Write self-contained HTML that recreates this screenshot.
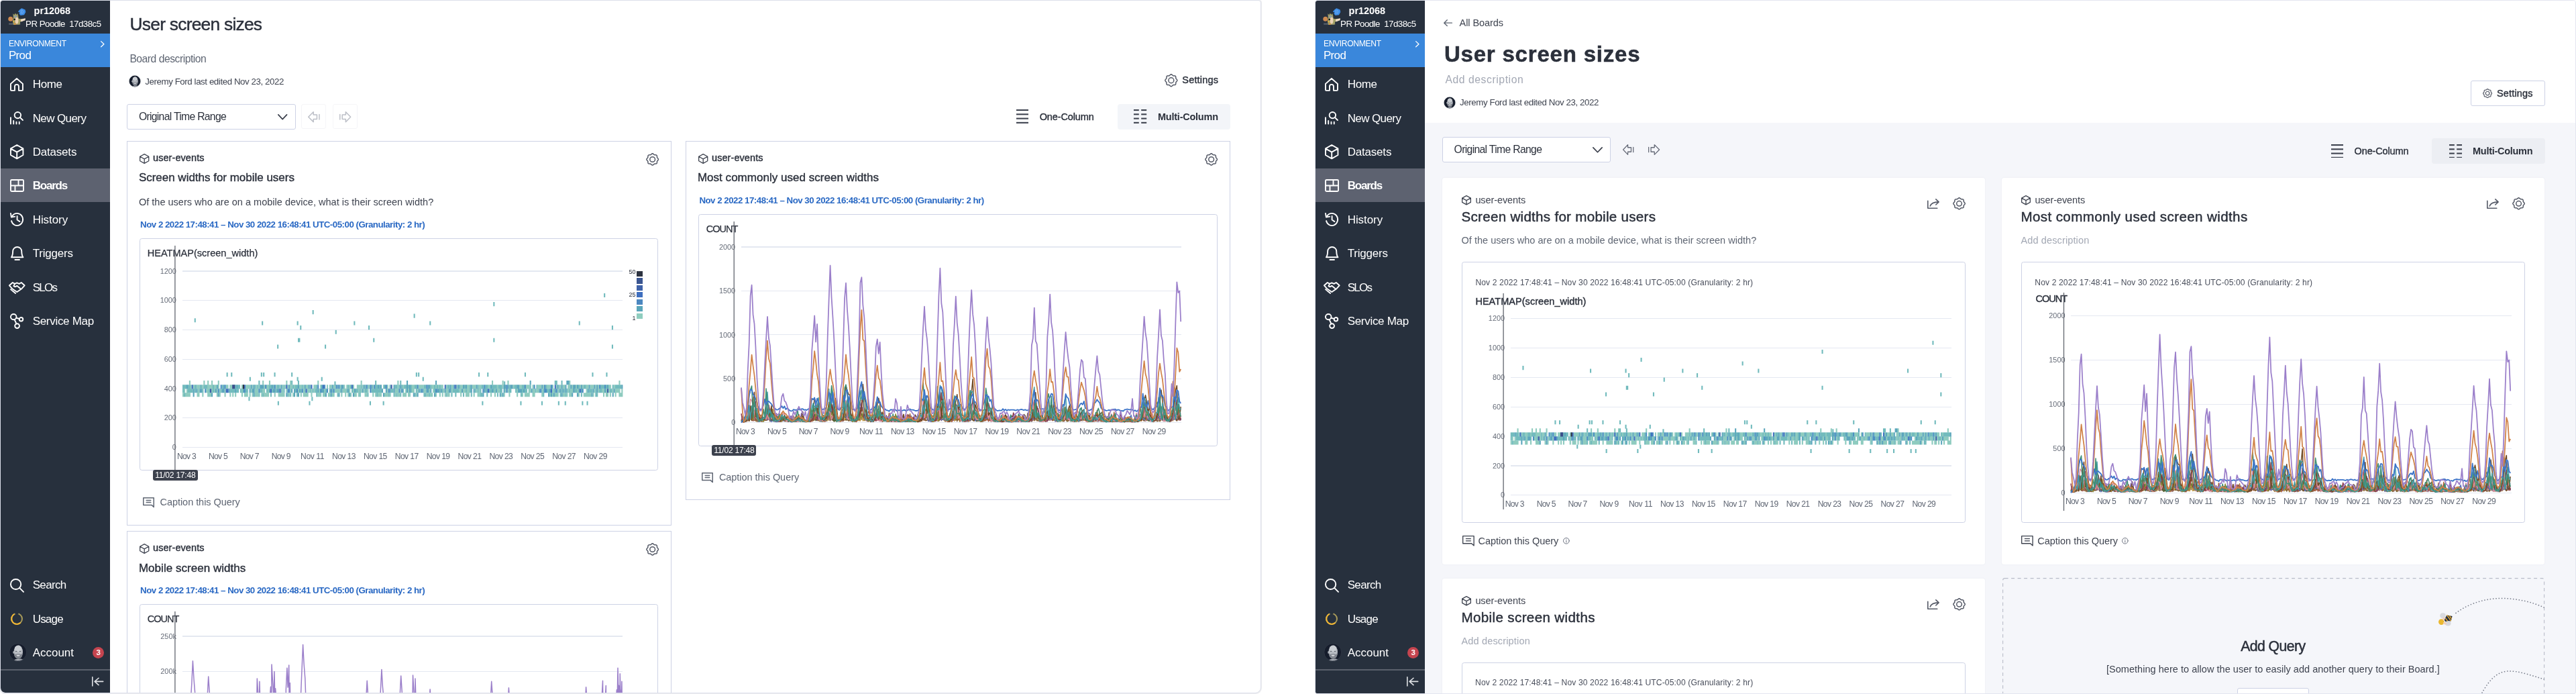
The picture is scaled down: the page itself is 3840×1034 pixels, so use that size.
<!DOCTYPE html><html lang="en"><head><meta charset="utf-8"><title>User screen sizes</title><style>html,body{margin:0;padding:0;background:#fff;}body{width:3840px;height:1034px;position:relative;overflow:hidden;font-family:"Liberation Sans", sans-serif;}.p{position:absolute;top:0;height:1032.6px;overflow:hidden;box-sizing:border-box;will-change:transform;}.b{position:absolute;display:block;}.t{position:absolute;white-space:nowrap;line-height:1;display:block;}</style></head><body><div class="p" style="left:0;width:1880px;background:#fff;border:1px solid #dcdfea;border-radius:4px 4px 9px 7px;box-shadow:0.5px 0.5px 1px rgba(60,60,90,0.10);"><div style="position:absolute;left:-1px;top:-1px;width:1880px;height:1034px"><div class="b" style="left:1.00px;top:1.00px;width:163.00px;height:1031.00px;background:#27303d;border-radius:2px 0 0 7px;"></div><svg class="b" style="left:8.00px;top:6.00px;" width="40.00" height="36.00" viewBox="0 0 40 36" fill="none"><path d="M24.3 6.2 L29.6 8.6 L30.3 12 L28 16.2 L22.6 16.9 L20.4 14.2 L21.3 12.4 L18.8 11.6 L21.2 8.4 Z" fill="#3d8de6"/><path d="M23.6 8.6 V14.6 M25.3 8.8 Q28 11.5 25.3 14.6" stroke="#7fb6f2" stroke-width="0.9" fill="none"/><rect x="5" y="28.6" width="17.5" height="2.2" rx="1" fill="#7d8790" opacity="0.55"/><circle cx="7.8" cy="22.3" r="3.5" fill="#cf8a50"/><path d="M11.4 14.2 L13.3 16.2 L14.8 13.6 L16.4 16 L18 14 L19.2 17.6 L19.6 21.4 L22 22.2 L29.6 21.6 L29.2 24.6 L22.2 26.6 L21.6 30.6 L12 31 L11 26 L11.8 20 Z" fill="#a3a065"/><ellipse cx="17" cy="24.5" rx="2.4" ry="5" fill="#ecd2b5"/><path d="M13 17.5 L17 17 L17.4 20 L13.4 20.6 Z" fill="#8e9aa6"/><circle cx="13.7" cy="23" r="1.25" fill="#0e0e12"/><path d="M23 23 L29.8 21.2 L29.6 24 L23.4 26.6 Z" fill="#f0dccb"/><circle cx="12.2" cy="26.3" r="1" fill="#e8b23a"/><circle cx="14.4" cy="29.8" r="1.2" fill="#e08a3a"/></svg><span id="t0" class="t" style="left:50.60px;top:8.73px;font-size:14.50px;color:#fff;font-weight:700;letter-spacing:-0.071px;">pr12068</span><span id="t1" class="t" style="left:38.10px;top:29.24px;font-size:13.30px;color:#fff;font-weight:400;letter-spacing:-0.528px;">PR Poodle&nbsp; 17d38c5</span><div class="b" style="left:1.00px;top:50.00px;width:163.00px;height:50.30px;background:#3a87db;"></div><span id="t2" class="t" style="left:12.90px;top:59.36px;font-size:12.10px;color:#fff;font-weight:400;letter-spacing:-0.317px;">ENVIRONMENT</span><span id="t3" class="t" style="left:12.90px;top:73.81px;font-size:17.00px;color:#fff;font-weight:400;letter-spacing:-0.641px;">Prod</span><svg class="b" style="left:149.70px;top:60.90px;overflow:visible" width="5.60" height="9.40" fill="none" stroke="#fff" stroke-width="1.3" stroke-linecap="round" stroke-linejoin="round"><g transform="translate(0.650 0.650) scale(0.4778 0.4500) translate(-8.000 -3.000)" style="vector-effect:non-scaling-stroke"><path vector-effect="non-scaling-stroke" d="M8 3 L17 12 L8 21"/></g></svg><div class="b" style="left:1.00px;top:251.00px;width:163.00px;height:50.40px;background:#5d6270;"></div><svg class="b" style="left:15.10px;top:116.00px;overflow:visible" width="19.90" height="19.80" fill="none" stroke="#fff" stroke-width="1.9" stroke-linecap="round" stroke-linejoin="round"><g transform="translate(0.950 0.950) scale(1.0000 0.9944) translate(-3.000 -3.000)" style="vector-effect:non-scaling-stroke"><path vector-effect="non-scaling-stroke" d="M3 11 L12 3 L21 11 V20 a1 1 0 0 1 -1 1 H15 V15 a3 3 0 0 0 -6 0 V21 H4 a1 1 0 0 1 -1 -1 Z"/></g></svg><span id="t4" class="t" style="left:48.70px;top:117.26px;font-size:17.00px;color:#fff;font-weight:400;letter-spacing:-0.320px;">Home</span><svg class="b" style="left:15.10px;top:166.10px;overflow:visible" width="19.90" height="19.50" fill="none" stroke="#fff" stroke-width="1.9" stroke-linecap="round" stroke-linejoin="round"><g transform="translate(0.950 0.950) scale(0.9474 0.9263) translate(-3.000 -3.000)" style="vector-effect:non-scaling-stroke"><circle vector-effect="non-scaling-stroke" cx="14" cy="8" r="5"/><path vector-effect="non-scaling-stroke" d="M17.8 11.8 L22 16 M3 12 V22 M7.5 17 V22 M12 19 V22 M16.5 19 V22"/></g></svg><span id="t5" class="t" style="left:48.70px;top:167.66px;font-size:17.00px;color:#fff;font-weight:400;letter-spacing:-0.604px;">New Query</span><svg class="b" style="left:15.10px;top:215.10px;overflow:visible" width="20.40" height="22.30" fill="none" stroke="#fff" stroke-width="1.9" stroke-linecap="round" stroke-linejoin="round"><g transform="translate(0.950 0.950) scale(1.0278 1.0737) translate(-3.000 -2.500)" style="vector-effect:non-scaling-stroke"><path vector-effect="non-scaling-stroke" d="M12 2.5 L21 7.5 V16.5 L12 21.5 L3 16.5 V7.5 Z M3 7.5 L12 12.5 L21 7.5 M12 12.5 V21.5"/></g></svg><span id="t6" class="t" style="left:48.70px;top:218.06px;font-size:17.00px;color:#fff;font-weight:400;letter-spacing:-0.199px;">Datasets</span><svg class="b" style="left:14.80px;top:267.20px;overflow:visible" width="21.00" height="18.90" fill="none" stroke="#fff" stroke-width="1.9" stroke-linecap="round" stroke-linejoin="round"><g transform="translate(0.950 0.950) scale(1.0053 1.0000) translate(-2.500 -3.500)" style="vector-effect:non-scaling-stroke"><rect vector-effect="non-scaling-stroke" x="2.5" y="3.5" width="19" height="17" rx="1.5"/><path vector-effect="non-scaling-stroke" d="M2.5 12 H21.5 M14 3.5 V12 M9 12 V20.5"/></g></svg><span id="t7" class="t" style="left:48.70px;top:268.46px;font-size:17.00px;color:#fff;font-weight:700;letter-spacing:-1.216px;">Boards</span><svg class="b" style="left:14.80px;top:316.80px;overflow:visible" width="20.20" height="20.10" fill="none" stroke="#fff" stroke-width="1.9" stroke-linecap="round" stroke-linejoin="round"><g transform="translate(0.950 0.950) scale(0.9632 1.0111) translate(-2.500 -3.000)" style="vector-effect:non-scaling-stroke"><path vector-effect="non-scaling-stroke" d="M5.2 6.5 A9 9 0 1 1 3.6 14 M2.5 3 L3.5 8.6 L9 7.6 M12.5 7 V12.5 L16.5 15"/></g></svg><span id="t8" class="t" style="left:48.70px;top:318.86px;font-size:17.00px;color:#fff;font-weight:400;letter-spacing:-0.068px;">History</span><svg class="b" style="left:15.60px;top:366.90px;overflow:visible" width="19.40" height="21.00" fill="none" stroke="#fff" stroke-width="1.9" stroke-linecap="round" stroke-linejoin="round"><g transform="translate(0.950 0.950) scale(1.0938 1.0914) translate(-4.000 -4.500)" style="vector-effect:non-scaling-stroke"><path vector-effect="non-scaling-stroke" d="M4 18.5 H20 C18.5 16.5 18 14.5 18 10.5 a6 6 0 0 0 -12 0 C6 14.5 5.5 16.5 4 18.5 Z M9 22 H15"/></g></svg><span id="t9" class="t" style="left:48.70px;top:369.26px;font-size:17.00px;color:#fff;font-weight:400;letter-spacing:-0.217px;">Triggers</span><svg class="b" style="left:12.80px;top:419.90px;overflow:visible" width="24.60" height="17.90" fill="none" stroke="#fff" stroke-width="1.9" stroke-linecap="round" stroke-linejoin="round"><g transform="translate(0.950 0.950) scale(1.0810 0.9697) translate(-1.500 -4.500)" style="vector-effect:non-scaling-stroke"><path vector-effect="non-scaling-stroke" d="M1.5 9 L6 4.5 L9 6.5 L12 5 L15 6.5 L18 4.5 L22.5 9 L18.5 14 L12 19 L5.5 14 Z M9 6.5 L7.5 10 C9 11.5 10.5 11 12 9.5 L17 14 M6 17.5 L10 21 M3.5 15 L5 16.5"/></g></svg><span id="t10" class="t" style="left:48.70px;top:419.66px;font-size:17.00px;color:#fff;font-weight:400;letter-spacing:-1.710px;">SLOs</span><svg class="b" style="left:15.30px;top:466.90px;overflow:visible" width="20.20" height="22.90" fill="none" stroke="#fff" stroke-width="1.9" stroke-linecap="round" stroke-linejoin="round"><g transform="translate(0.950 0.950) scale(1.0702 1.0396) translate(-4.000 -2.500)" style="vector-effect:non-scaling-stroke"><circle vector-effect="non-scaling-stroke" cx="8" cy="6.5" r="4"/><circle vector-effect="non-scaling-stroke" cx="18.5" cy="10" r="2.6"/><circle vector-effect="non-scaling-stroke" cx="13" cy="19.5" r="3.2"/><path vector-effect="non-scaling-stroke" d="M11.8 8 L16 9.3 M9.3 10.3 L12 16.5"/></g></svg><span id="t11" class="t" style="left:48.70px;top:470.06px;font-size:17.00px;color:#fff;font-weight:400;letter-spacing:-0.308px;">Service Map</span><span id="t12" class="t" style="left:48.70px;top:862.76px;font-size:17.00px;color:#fff;font-weight:400;letter-spacing:-0.655px;">Search</span><span id="t13" class="t" style="left:48.70px;top:913.66px;font-size:17.00px;color:#fff;font-weight:400;letter-spacing:-0.810px;">Usage</span><span id="t14" class="t" style="left:48.70px;top:964.06px;font-size:17.00px;color:#fff;font-weight:400;letter-spacing:-0.023px;">Account</span><svg class="b" style="left:14.80px;top:861.50px;overflow:visible" width="21.00" height="20.80" fill="none" stroke="#fff" stroke-width="1.9" stroke-linecap="round" stroke-linejoin="round"><g transform="translate(0.950 0.950) scale(0.9550 0.9450) translate(-2.500 -2.500)" style="vector-effect:non-scaling-stroke"><circle vector-effect="non-scaling-stroke" cx="10.5" cy="10.5" r="8"/><path vector-effect="non-scaling-stroke" d="M16.5 16.5 L22.5 22.5"/></g></svg><svg class="b" style="left:15.00px;top:912.00px;" width="20.00" height="20.00" viewBox="0 0 20 20" fill="none"><circle cx="10" cy="10" r="8" stroke="#a89b5a" stroke-width="2"/><path d="M15.6 15.8 A8 8 0 1 1 6.5 2.8" stroke="#f2b632" stroke-width="2"/><path d="M7.6 2.4 A8 8 0 0 1 12.4 2.4" stroke="#27303d" stroke-width="3"/></svg><svg class="b" style="left:12.70px;top:958.40px;" width="27.40" height="27.40" viewBox="0 0 27.4 27.4" fill="none"><clipPath id="avc1"><circle r="13.2"/></clipPath><g transform="translate(13.70 13.70) scale(1.0000)"><g clip-path="url(#avc1)"><circle r="13.2" fill="#151c2b"/><path d="M-8 14 Q-4 9 0.6 10.4 Q5.5 9 9.4 11.6 L10 14 Z" fill="#a9adb5"/><ellipse cx="-6.4" cy="0.2" rx="1.1" ry="1.9" fill="#a2a7af"/><ellipse cx="0.6" cy="-0.3" rx="6.7" ry="10.2" fill="#b6bac1"/><ellipse cx="0.3" cy="-5.2" rx="5.2" ry="4.6" fill="#caced3"/><path d="M-5.8 1.2 Q-5.6 9.6 0.6 10 Q6.8 9.6 7 1.2 Q5 4 3.4 3 Q0.6 1.6 -2.4 3 Q-4 4 -5.8 1.2 Z" fill="#80858e"/><ellipse cx="0.4" cy="4.9" rx="2.5" ry="1.2" fill="#d8dade"/><ellipse cx="-2.5" cy="-1.3" rx="1.4" ry="0.7" fill="#5f646e"/><ellipse cx="3.3" cy="-1.3" rx="1.4" ry="0.7" fill="#5f646e"/></g><circle r="12.9" fill="none" stroke="#39404e" stroke-width="0.7"/></g></svg><div class="b" style="left:138.40px;top:964.00px;width:16.80px;height:16.80px;background:#c5444f;border-radius:9px;"></div><span id="t15" class="t" style="left:146.80px;top:966.87px;font-size:11.50px;color:#fff;font-weight:700;letter-spacing:0.000px;transform:translateX(-50%);">3</span><div class="b" style="left:1.00px;top:997.10px;width:163.00px;height:1.90px;background:#5a606c;"></div><svg class="b" style="left:136.50px;top:1008.00px;overflow:visible" width="17.50" height="14.80" fill="none" stroke="#dfe1e5" stroke-width="1.6" stroke-linecap="round" stroke-linejoin="round"><g transform="translate(0.800 0.800) scale(0.8368 0.7333) translate(-3.000 -3.000)" style="vector-effect:non-scaling-stroke"><path vector-effect="non-scaling-stroke" d="M3 3 V21 M22 12 H8 M14 5 L7 12 L14 19"/></g></svg><span id="t16" class="t" style="left:193.60px;top:23.14px;font-size:26.30px;color:#2b303b;font-weight:400;letter-spacing:-0.724px;-webkit-text-stroke:0.45px #2b303b;">User screen sizes</span><span id="t17" class="t" style="left:193.40px;top:80.21px;font-size:15.70px;color:#5f6673;font-weight:400;letter-spacing:-0.481px;">Board description</span><svg class="b" style="left:192.40px;top:112.40px;" width="18.00" height="18.00" viewBox="0 0 18 18" fill="none"><clipPath id="avc2"><circle r="13.2"/></clipPath><g transform="translate(9.00 9.00) scale(0.6439)"><g clip-path="url(#avc2)"><circle r="13.2" fill="#151c2b"/><path d="M-8 14 Q-4 9 0.6 10.4 Q5.5 9 9.4 11.6 L10 14 Z" fill="#a9adb5"/><ellipse cx="-6.4" cy="0.2" rx="1.1" ry="1.9" fill="#a2a7af"/><ellipse cx="0.6" cy="-0.3" rx="6.7" ry="10.2" fill="#b6bac1"/><ellipse cx="0.3" cy="-5.2" rx="5.2" ry="4.6" fill="#caced3"/><path d="M-5.8 1.2 Q-5.6 9.6 0.6 10 Q6.8 9.6 7 1.2 Q5 4 3.4 3 Q0.6 1.6 -2.4 3 Q-4 4 -5.8 1.2 Z" fill="#80858e"/><ellipse cx="0.4" cy="4.9" rx="2.5" ry="1.2" fill="#d8dade"/><ellipse cx="-2.5" cy="-1.3" rx="1.4" ry="0.7" fill="#5f646e"/><ellipse cx="3.3" cy="-1.3" rx="1.4" ry="0.7" fill="#5f646e"/></g><circle r="12.9" fill="none" stroke="#39404e" stroke-width="0.7"/></g></svg><span id="t18" class="t" style="left:216.30px;top:114.94px;font-size:13.30px;color:#3f4450;font-weight:400;letter-spacing:-0.418px;">Jeremy Ford last edited Nov 23, 2022</span><svg class="b" style="left:1736.10px;top:110.40px;overflow:visible" width="19.70" height="19.50" fill="none" stroke="#555a67" stroke-width="1.5" stroke-linecap="round" stroke-linejoin="round"><g transform="translate(0.750 0.750) scale(0.9681 0.9574) translate(-2.600 -2.600)" style="vector-effect:non-scaling-stroke"><path vector-effect="non-scaling-stroke" d="M12.00 2.70 L12.89 2.95 L13.68 3.57 L14.35 4.24 L15.02 4.70 L15.82 4.85 L16.78 4.85 L17.77 4.97 L18.58 5.42 L19.03 6.23 L19.15 7.22 L19.15 8.18 L19.30 8.98 L19.76 9.65 L20.43 10.32 L21.05 11.11 L21.30 12.00 L21.05 12.89 L20.43 13.68 L19.76 14.35 L19.30 15.02 L19.15 15.82 L19.15 16.78 L19.03 17.77 L18.58 18.58 L17.77 19.03 L16.78 19.15 L15.82 19.15 L15.02 19.30 L14.35 19.76 L13.68 20.43 L12.89 21.05 L12.00 21.30 L11.11 21.05 L10.32 20.43 L9.65 19.76 L8.98 19.30 L8.18 19.15 L7.22 19.15 L6.23 19.03 L5.42 18.58 L4.97 17.77 L4.85 16.78 L4.85 15.82 L4.70 15.02 L4.24 14.35 L3.57 13.68 L2.95 12.89 L2.70 12.00 L2.95 11.11 L3.57 10.32 L4.24 9.65 L4.70 8.98 L4.85 8.18 L4.85 7.22 L4.97 6.23 L5.42 5.42 L6.23 4.97 L7.22 4.85 L8.18 4.85 L8.98 4.70 L9.65 4.24 L10.32 3.57 L11.11 2.95 Z"/><circle vector-effect="non-scaling-stroke" cx="12" cy="12" r="4.1"/></g></svg><span id="t19" class="t" style="left:1762.30px;top:112.13px;font-size:14.50px;color:#2b303b;font-weight:400;letter-spacing:0.185px;-webkit-text-stroke:0.40px #2b303b;">Settings</span><div class="b" style="left:189.20px;top:155.20px;width:251.70px;height:37.40px;background:#fff;border:1px solid #cdd2e5;border-radius:3px;box-sizing:border-box;"></div><span id="t20" class="t" style="left:206.90px;top:166.01px;font-size:15.70px;color:#2b303b;font-weight:400;letter-spacing:-0.678px;">Original Time Range</span><svg class="b" style="left:413.50px;top:170.40px;overflow:visible" width="14.40" height="8.40" fill="none" stroke="#3a3f4b" stroke-width="1.7" stroke-linecap="round" stroke-linejoin="round"><g transform="translate(0.850 0.850) scale(0.5773 0.7053) translate(-1.000 -7.500)" style="vector-effect:non-scaling-stroke"><path vector-effect="non-scaling-stroke" d="M1 7.5 L12 17 L23 7.5"/></g></svg><div class="b" style="left:449.40px;top:155.20px;width:36.80px;height:36.70px;background:#fff;border:1px solid #f5f5f8;border-radius:3px;box-sizing:border-box;"></div><div class="b" style="left:495.60px;top:155.20px;width:37.20px;height:36.70px;background:#fff;border:1px solid #f5f5f8;border-radius:3px;box-sizing:border-box;"></div><svg class="b" style="left:458.90px;top:165.60px;overflow:visible" width="17.70" height="16.40" fill="none" stroke="#bcbfc7" stroke-width="1.5" stroke-linecap="round" stroke-linejoin="round"><g transform="translate(0.750 0.750) scale(0.8757 0.8278) translate(-2.000 -3.000)" style="vector-effect:non-scaling-stroke"><path vector-effect="non-scaling-stroke" d="M2 12 L10.5 3 V8 H16.5 V16 H10.5 V21 Z M20.5 7.5 V16.5"/></g></svg><svg class="b" style="left:506.00px;top:165.60px;overflow:visible" width="17.40" height="16.40" fill="none" stroke="#bcbfc7" stroke-width="1.5" stroke-linecap="round" stroke-linejoin="round"><g transform="translate(0.750 0.750) scale(0.8595 0.8278) translate(-3.500 -3.000)" style="vector-effect:non-scaling-stroke"><path vector-effect="non-scaling-stroke" d="M22 12 L13.5 3 V8 H7.5 V16 H13.5 V21 Z M3.5 7.5 V16.5"/></g></svg><div class="b" style="left:1665.50px;top:155.20px;width:168.50px;height:37.70px;background:#f3f5f9;border-radius:4px;"></div><svg class="b" style="left:1515.00px;top:163.40px;" width="18.40" height="20.80" viewBox="0 0 18.4 20.8" fill="none"><rect x="0" y="0.00" width="18.4" height="2.1" fill="#3f4450"/><rect x="0" y="6.27" width="18.4" height="2.1" fill="#3f4450"/><rect x="0" y="12.54" width="18.4" height="2.1" fill="#3f4450"/><rect x="0" y="18.81" width="18.4" height="2.1" fill="#3f4450"/></svg><svg class="b" style="left:1690.30px;top:163.40px;" width="19.40" height="20.80" viewBox="0 0 19.4 20.8" fill="none"><rect x="0" y="0.00" width="7.8" height="2.1" fill="#3f4450"/><rect x="11.2" y="0.00" width="8" height="2.1" fill="#3f4450"/><rect x="0" y="6.27" width="7.8" height="2.1" fill="#3f4450"/><rect x="11.2" y="6.27" width="8" height="2.1" fill="#3f4450"/><rect x="0" y="12.54" width="7.8" height="2.1" fill="#3f4450"/><rect x="11.2" y="12.54" width="8" height="2.1" fill="#3f4450"/><rect x="0" y="18.81" width="7.8" height="2.1" fill="#3f4450"/><rect x="11.2" y="18.81" width="8" height="2.1" fill="#3f4450"/></svg><span id="t21" class="t" style="left:1549.70px;top:166.53px;font-size:14.50px;color:#2b303b;font-weight:400;letter-spacing:-0.123px;-webkit-text-stroke:0.40px #2b303b;">One-Column</span><span id="t22" class="t" style="left:1726.00px;top:166.53px;font-size:14.50px;color:#2b303b;font-weight:700;letter-spacing:-0.239px;">Multi-Column</span><div class="b" style="left:189.20px;top:210.00px;width:811.80px;height:572.50px;background:#fff;border:1px solid #cdd2e5;box-sizing:border-box;"></div><div class="b" style="left:1022.20px;top:210.00px;width:811.90px;height:535.20px;background:#fff;border:1px solid #cdd2e5;box-sizing:border-box;"></div><div class="b" style="left:189.20px;top:791.00px;width:811.80px;height:300.00px;background:#fff;border:1px solid #cdd2e5;box-sizing:border-box;"></div><svg class="b" style="left:207.90px;top:228.50px;overflow:visible" width="14.40" height="15.00" fill="none" stroke="#3f4450" stroke-width="1.3" stroke-linecap="round" stroke-linejoin="round"><g transform="translate(0.650 0.650) scale(0.7278 0.7211) translate(-3.000 -2.500)" style="vector-effect:non-scaling-stroke"><path vector-effect="non-scaling-stroke" d="M12 2.5 L21 7.5 V16.5 L12 21.5 L3 16.5 V7.5 Z M3 7.5 L12 12.5 L21 7.5 M12 12.5 V21.5"/></g></svg><span id="t23" class="t" style="left:228.00px;top:228.33px;font-size:14.50px;color:#2b303b;font-weight:400;letter-spacing:0.073px;-webkit-text-stroke:0.40px #2b303b;">user-events</span><span id="t24" class="t" style="left:206.90px;top:256.41px;font-size:17.00px;color:#2b303b;font-weight:400;letter-spacing:-0.015px;-webkit-text-stroke:0.40px #2b303b;">Screen widths for mobile users</span><svg class="b" style="left:963.00px;top:227.50px;overflow:visible" width="19.30" height="18.90" fill="none" stroke="#555a67" stroke-width="1.5" stroke-linecap="round" stroke-linejoin="round"><g transform="translate(0.750 0.750) scale(0.9468 0.9255) translate(-2.600 -2.600)" style="vector-effect:non-scaling-stroke"><path vector-effect="non-scaling-stroke" d="M12.00 2.70 L12.89 2.95 L13.68 3.57 L14.35 4.24 L15.02 4.70 L15.82 4.85 L16.78 4.85 L17.77 4.97 L18.58 5.42 L19.03 6.23 L19.15 7.22 L19.15 8.18 L19.30 8.98 L19.76 9.65 L20.43 10.32 L21.05 11.11 L21.30 12.00 L21.05 12.89 L20.43 13.68 L19.76 14.35 L19.30 15.02 L19.15 15.82 L19.15 16.78 L19.03 17.77 L18.58 18.58 L17.77 19.03 L16.78 19.15 L15.82 19.15 L15.02 19.30 L14.35 19.76 L13.68 20.43 L12.89 21.05 L12.00 21.30 L11.11 21.05 L10.32 20.43 L9.65 19.76 L8.98 19.30 L8.18 19.15 L7.22 19.15 L6.23 19.03 L5.42 18.58 L4.97 17.77 L4.85 16.78 L4.85 15.82 L4.70 15.02 L4.24 14.35 L3.57 13.68 L2.95 12.89 L2.70 12.00 L2.95 11.11 L3.57 10.32 L4.24 9.65 L4.70 8.98 L4.85 8.18 L4.85 7.22 L4.97 6.23 L5.42 5.42 L6.23 4.97 L7.22 4.85 L8.18 4.85 L8.98 4.70 L9.65 4.24 L10.32 3.57 L11.11 2.95 Z"/><circle vector-effect="non-scaling-stroke" cx="12" cy="12" r="4.1"/></g></svg><svg class="b" style="left:1040.90px;top:228.50px;overflow:visible" width="14.40" height="15.00" fill="none" stroke="#3f4450" stroke-width="1.3" stroke-linecap="round" stroke-linejoin="round"><g transform="translate(0.650 0.650) scale(0.7278 0.7211) translate(-3.000 -2.500)" style="vector-effect:non-scaling-stroke"><path vector-effect="non-scaling-stroke" d="M12 2.5 L21 7.5 V16.5 L12 21.5 L3 16.5 V7.5 Z M3 7.5 L12 12.5 L21 7.5 M12 12.5 V21.5"/></g></svg><span id="t25" class="t" style="left:1061.00px;top:228.33px;font-size:14.50px;color:#2b303b;font-weight:400;letter-spacing:0.073px;-webkit-text-stroke:0.40px #2b303b;">user-events</span><span id="t26" class="t" style="left:1039.90px;top:256.41px;font-size:17.00px;color:#2b303b;font-weight:400;letter-spacing:0.030px;-webkit-text-stroke:0.40px #2b303b;">Most commonly used screen widths</span><svg class="b" style="left:1796.00px;top:227.50px;overflow:visible" width="19.30" height="18.90" fill="none" stroke="#555a67" stroke-width="1.5" stroke-linecap="round" stroke-linejoin="round"><g transform="translate(0.750 0.750) scale(0.9468 0.9255) translate(-2.600 -2.600)" style="vector-effect:non-scaling-stroke"><path vector-effect="non-scaling-stroke" d="M12.00 2.70 L12.89 2.95 L13.68 3.57 L14.35 4.24 L15.02 4.70 L15.82 4.85 L16.78 4.85 L17.77 4.97 L18.58 5.42 L19.03 6.23 L19.15 7.22 L19.15 8.18 L19.30 8.98 L19.76 9.65 L20.43 10.32 L21.05 11.11 L21.30 12.00 L21.05 12.89 L20.43 13.68 L19.76 14.35 L19.30 15.02 L19.15 15.82 L19.15 16.78 L19.03 17.77 L18.58 18.58 L17.77 19.03 L16.78 19.15 L15.82 19.15 L15.02 19.30 L14.35 19.76 L13.68 20.43 L12.89 21.05 L12.00 21.30 L11.11 21.05 L10.32 20.43 L9.65 19.76 L8.98 19.30 L8.18 19.15 L7.22 19.15 L6.23 19.03 L5.42 18.58 L4.97 17.77 L4.85 16.78 L4.85 15.82 L4.70 15.02 L4.24 14.35 L3.57 13.68 L2.95 12.89 L2.70 12.00 L2.95 11.11 L3.57 10.32 L4.24 9.65 L4.70 8.98 L4.85 8.18 L4.85 7.22 L4.97 6.23 L5.42 5.42 L6.23 4.97 L7.22 4.85 L8.18 4.85 L8.98 4.70 L9.65 4.24 L10.32 3.57 L11.11 2.95 Z"/><circle vector-effect="non-scaling-stroke" cx="12" cy="12" r="4.1"/></g></svg><svg class="b" style="left:207.90px;top:809.60px;overflow:visible" width="14.40" height="15.00" fill="none" stroke="#3f4450" stroke-width="1.3" stroke-linecap="round" stroke-linejoin="round"><g transform="translate(0.650 0.650) scale(0.7278 0.7211) translate(-3.000 -2.500)" style="vector-effect:non-scaling-stroke"><path vector-effect="non-scaling-stroke" d="M12 2.5 L21 7.5 V16.5 L12 21.5 L3 16.5 V7.5 Z M3 7.5 L12 12.5 L21 7.5 M12 12.5 V21.5"/></g></svg><span id="t27" class="t" style="left:228.00px;top:809.43px;font-size:14.50px;color:#2b303b;font-weight:400;letter-spacing:0.073px;-webkit-text-stroke:0.40px #2b303b;">user-events</span><span id="t28" class="t" style="left:206.90px;top:837.51px;font-size:17.00px;color:#2b303b;font-weight:400;letter-spacing:0.039px;-webkit-text-stroke:0.40px #2b303b;">Mobile screen widths</span><svg class="b" style="left:963.00px;top:808.60px;overflow:visible" width="19.30" height="18.90" fill="none" stroke="#555a67" stroke-width="1.5" stroke-linecap="round" stroke-linejoin="round"><g transform="translate(0.750 0.750) scale(0.9468 0.9255) translate(-2.600 -2.600)" style="vector-effect:non-scaling-stroke"><path vector-effect="non-scaling-stroke" d="M12.00 2.70 L12.89 2.95 L13.68 3.57 L14.35 4.24 L15.02 4.70 L15.82 4.85 L16.78 4.85 L17.77 4.97 L18.58 5.42 L19.03 6.23 L19.15 7.22 L19.15 8.18 L19.30 8.98 L19.76 9.65 L20.43 10.32 L21.05 11.11 L21.30 12.00 L21.05 12.89 L20.43 13.68 L19.76 14.35 L19.30 15.02 L19.15 15.82 L19.15 16.78 L19.03 17.77 L18.58 18.58 L17.77 19.03 L16.78 19.15 L15.82 19.15 L15.02 19.30 L14.35 19.76 L13.68 20.43 L12.89 21.05 L12.00 21.30 L11.11 21.05 L10.32 20.43 L9.65 19.76 L8.98 19.30 L8.18 19.15 L7.22 19.15 L6.23 19.03 L5.42 18.58 L4.97 17.77 L4.85 16.78 L4.85 15.82 L4.70 15.02 L4.24 14.35 L3.57 13.68 L2.95 12.89 L2.70 12.00 L2.95 11.11 L3.57 10.32 L4.24 9.65 L4.70 8.98 L4.85 8.18 L4.85 7.22 L4.97 6.23 L5.42 5.42 L6.23 4.97 L7.22 4.85 L8.18 4.85 L8.98 4.70 L9.65 4.24 L10.32 3.57 L11.11 2.95 Z"/><circle vector-effect="non-scaling-stroke" cx="12" cy="12" r="4.1"/></g></svg><span id="t29" class="t" style="left:206.90px;top:294.33px;font-size:14.50px;color:#3f4450;font-weight:400;letter-spacing:0.013px;">Of the users who are on a mobile device, what is their screen width?</span><span id="t30" class="t" style="left:209.10px;top:328.04px;font-size:13.30px;color:#2a69c4;font-weight:700;letter-spacing:-0.505px;">Nov 2 2022 17:48:41 – Nov 30 2022 16:48:41 UTC-05:00 (Granularity: 2 hr)</span><span id="t31" class="t" style="left:1042.40px;top:291.74px;font-size:13.30px;color:#2a69c4;font-weight:700;letter-spacing:-0.502px;">Nov 2 2022 17:48:41 – Nov 30 2022 16:48:41 UTC-05:00 (Granularity: 2 hr)</span><span id="t32" class="t" style="left:209.10px;top:872.94px;font-size:13.30px;color:#2a69c4;font-weight:700;letter-spacing:-0.505px;">Nov 2 2022 17:48:41 – Nov 30 2022 16:48:41 UTC-05:00 (Granularity: 2 hr)</span><div class="b" style="left:208.40px;top:354.60px;width:773.00px;height:346.60px;background:#fff;border:1px solid #cdd2e5;border-radius:3.5px;box-sizing:border-box;"></div><span id="t33" class="t" style="left:219.80px;top:370.43px;font-size:14.50px;color:#2b303b;font-weight:400;letter-spacing:0.020px;-webkit-text-stroke:0.25px #2b303b;">HEATMAP(screen_width)</span><div class="b" style="left:272.00px;top:665.90px;width:656.30px;height:1.20px;background:#e4e8f1;"></div><span id="t34" class="t" style="left:262.90px;top:661.17px;font-size:10.90px;color:#666c78;font-weight:400;letter-spacing:0.000px;transform:translateX(-100%);">0</span><div class="b" style="left:272.00px;top:622.15px;width:656.30px;height:1.20px;background:#e4e8f1;"></div><span id="t35" class="t" style="left:262.90px;top:617.42px;font-size:10.90px;color:#666c78;font-weight:400;letter-spacing:0.000px;transform:translateX(-100%);">200</span><div class="b" style="left:272.00px;top:578.40px;width:656.30px;height:1.20px;background:#e4e8f1;"></div><span id="t36" class="t" style="left:262.90px;top:573.67px;font-size:10.90px;color:#666c78;font-weight:400;letter-spacing:0.000px;transform:translateX(-100%);">400</span><div class="b" style="left:272.00px;top:534.65px;width:656.30px;height:1.20px;background:#e4e8f1;"></div><span id="t37" class="t" style="left:262.90px;top:529.92px;font-size:10.90px;color:#666c78;font-weight:400;letter-spacing:0.000px;transform:translateX(-100%);">600</span><div class="b" style="left:272.00px;top:490.90px;width:656.30px;height:1.20px;background:#e4e8f1;"></div><span id="t38" class="t" style="left:262.90px;top:486.17px;font-size:10.90px;color:#666c78;font-weight:400;letter-spacing:0.000px;transform:translateX(-100%);">800</span><div class="b" style="left:272.00px;top:447.15px;width:656.30px;height:1.20px;background:#e4e8f1;"></div><span id="t39" class="t" style="left:262.90px;top:442.42px;font-size:10.90px;color:#666c78;font-weight:400;letter-spacing:0.000px;transform:translateX(-100%);">1000</span><div class="b" style="left:272.00px;top:403.40px;width:656.30px;height:1.20px;background:#e4e8f1;"></div><span id="t40" class="t" style="left:262.90px;top:398.67px;font-size:10.90px;color:#666c78;font-weight:400;letter-spacing:0.000px;transform:translateX(-100%);">1200</span><svg class="b" style="left:258px;top:366.00px" width="5" height="335.00"><rect x="2.250" y="0" width="1.30" height="335.00" fill="#62666f"/></svg><span id="t41" class="t" style="left:278.06px;top:673.56px;font-size:12.10px;color:#5f6673;font-weight:400;letter-spacing:-0.723px;transform:translateX(-50%);">Nov 3</span><span id="t42" class="t" style="left:324.93px;top:673.56px;font-size:12.10px;color:#5f6673;font-weight:400;letter-spacing:-0.723px;transform:translateX(-50%);">Nov 5</span><span id="t43" class="t" style="left:371.81px;top:673.56px;font-size:12.10px;color:#5f6673;font-weight:400;letter-spacing:-0.723px;transform:translateX(-50%);">Nov 7</span><span id="t44" class="t" style="left:418.69px;top:673.56px;font-size:12.10px;color:#5f6673;font-weight:400;letter-spacing:-0.723px;transform:translateX(-50%);">Nov 9</span><span id="t45" class="t" style="left:465.57px;top:673.56px;font-size:12.10px;color:#5f6673;font-weight:400;letter-spacing:-0.404px;transform:translateX(-50%);">Nov 11</span><span id="t46" class="t" style="left:512.45px;top:673.56px;font-size:12.10px;color:#5f6673;font-weight:400;letter-spacing:-0.586px;transform:translateX(-50%);">Nov 13</span><span id="t47" class="t" style="left:559.33px;top:673.56px;font-size:12.10px;color:#5f6673;font-weight:400;letter-spacing:-0.586px;transform:translateX(-50%);">Nov 15</span><span id="t48" class="t" style="left:606.21px;top:673.56px;font-size:12.10px;color:#5f6673;font-weight:400;letter-spacing:-0.586px;transform:translateX(-50%);">Nov 17</span><span id="t49" class="t" style="left:653.08px;top:673.56px;font-size:12.10px;color:#5f6673;font-weight:400;letter-spacing:-0.586px;transform:translateX(-50%);">Nov 19</span><span id="t50" class="t" style="left:699.96px;top:673.56px;font-size:12.10px;color:#5f6673;font-weight:400;letter-spacing:-0.586px;transform:translateX(-50%);">Nov 21</span><span id="t51" class="t" style="left:746.84px;top:673.56px;font-size:12.10px;color:#5f6673;font-weight:400;letter-spacing:-0.586px;transform:translateX(-50%);">Nov 23</span><span id="t52" class="t" style="left:793.72px;top:673.56px;font-size:12.10px;color:#5f6673;font-weight:400;letter-spacing:-0.586px;transform:translateX(-50%);">Nov 25</span><span id="t53" class="t" style="left:840.60px;top:673.56px;font-size:12.10px;color:#5f6673;font-weight:400;letter-spacing:-0.586px;transform:translateX(-50%);">Nov 27</span><span id="t54" class="t" style="left:887.48px;top:673.56px;font-size:12.10px;color:#5f6673;font-weight:400;letter-spacing:-0.586px;transform:translateX(-50%);">Nov 29</span><svg class="b" style="left:0.00px;top:0.00px;pointer-events:none;" width="1000.00" height="720.00" viewBox="0 0 1000 720" fill="none"><path d="M272.0 585.2h2.10v6.15h-2.10zM274.0 579.2h2.10v6.15h-2.10zM275.9 585.2h2.10v6.15h-2.10zM277.9 579.2h2.10v6.15h-2.10zM277.9 585.2h2.10v6.15h-2.10zM279.8 585.2h2.10v6.15h-2.10zM281.8 567.1h2.10v6.15h-2.10zM281.8 585.2h2.10v6.15h-2.10zM283.7 573.2h2.10v6.15h-2.10zM287.6 573.2h2.10v6.15h-2.10zM293.5 573.2h2.10v6.15h-2.10zM293.5 585.2h2.10v6.15h-2.10zM295.4 573.2h2.10v6.15h-2.10zM295.4 579.2h2.10v6.15h-2.10zM295.4 585.2h2.10v6.15h-2.10zM301.3 573.2h2.10v6.15h-2.10zM301.3 585.2h2.10v6.15h-2.10zM303.3 567.1h2.10v6.15h-2.10zM307.2 579.2h2.10v6.15h-2.10zM309.1 567.1h2.10v6.15h-2.10zM309.1 573.2h2.10v6.15h-2.10zM309.1 579.2h2.10v6.15h-2.10zM309.1 585.2h2.10v6.15h-2.10zM311.1 573.2h2.10v6.15h-2.10zM311.1 585.2h2.10v6.15h-2.10zM313.0 573.2h2.10v6.15h-2.10zM313.0 585.2h2.10v6.15h-2.10zM315.0 567.1h2.10v6.15h-2.10zM315.0 573.2h2.10v6.15h-2.10zM315.0 579.2h2.10v6.15h-2.10zM318.9 573.2h2.10v6.15h-2.10zM318.9 579.2h2.10v6.15h-2.10zM320.8 573.2h2.10v6.15h-2.10zM322.8 579.2h2.10v6.15h-2.10zM322.8 585.2h2.10v6.15h-2.10zM324.7 567.1h2.10v6.15h-2.10zM324.7 573.2h2.10v6.15h-2.10zM326.7 579.2h2.10v6.15h-2.10zM326.7 585.2h2.10v6.15h-2.10zM334.5 579.2h2.10v6.15h-2.10zM334.5 585.2h2.10v6.15h-2.10zM336.5 573.2h2.10v6.15h-2.10zM338.4 573.2h2.10v6.15h-2.10zM342.3 573.2h2.10v6.15h-2.10zM342.3 585.2h2.10v6.15h-2.10zM344.3 573.2h2.10v6.15h-2.10zM346.2 585.2h2.10v6.15h-2.10zM350.1 585.2h2.10v6.15h-2.10zM359.9 573.2h2.10v6.15h-2.10zM359.9 579.2h2.10v6.15h-2.10zM359.9 585.2h2.10v6.15h-2.10zM363.8 585.2h2.10v6.15h-2.10zM365.8 573.2h2.10v6.15h-2.10zM365.8 585.2h2.10v6.15h-2.10zM367.7 573.2h2.10v6.15h-2.10zM367.7 585.2h2.10v6.15h-2.10zM369.7 573.2h2.10v6.15h-2.10zM371.6 573.2h2.10v6.15h-2.10zM371.6 585.2h2.10v6.15h-2.10zM373.6 579.2h2.10v6.15h-2.10zM375.5 573.2h2.10v6.15h-2.10zM375.5 585.2h2.10v6.15h-2.10zM379.4 579.2h2.10v6.15h-2.10zM379.4 585.2h2.10v6.15h-2.10zM381.4 573.2h2.10v6.15h-2.10zM381.4 579.2h2.10v6.15h-2.10zM381.4 585.2h2.10v6.15h-2.10zM383.3 579.2h2.10v6.15h-2.10zM383.3 585.2h2.10v6.15h-2.10zM385.3 573.2h2.10v6.15h-2.10zM389.2 585.2h2.10v6.15h-2.10zM391.1 567.1h2.10v6.15h-2.10zM391.1 579.2h2.10v6.15h-2.10zM393.1 573.2h2.10v6.15h-2.10zM393.1 579.2h2.10v6.15h-2.10zM393.1 585.2h2.10v6.15h-2.10zM395.1 585.2h2.10v6.15h-2.10zM397.0 573.2h2.10v6.15h-2.10zM397.0 585.2h2.10v6.15h-2.10zM399.0 573.2h2.10v6.15h-2.10zM399.0 579.2h2.10v6.15h-2.10zM399.0 585.2h2.10v6.15h-2.10zM400.9 567.1h2.10v6.15h-2.10zM408.7 585.2h2.10v6.15h-2.10zM410.7 573.2h2.10v6.15h-2.10zM414.6 585.2h2.10v6.15h-2.10zM416.5 573.2h2.10v6.15h-2.10zM416.5 585.2h2.10v6.15h-2.10zM418.5 585.2h2.10v6.15h-2.10zM420.4 573.2h2.10v6.15h-2.10zM420.4 579.2h2.10v6.15h-2.10zM420.4 585.2h2.10v6.15h-2.10zM422.4 585.2h2.10v6.15h-2.10zM424.4 573.2h2.10v6.15h-2.10zM426.3 567.1h2.10v6.15h-2.10zM426.3 579.2h2.10v6.15h-2.10zM428.3 573.2h2.10v6.15h-2.10zM430.2 585.2h2.10v6.15h-2.10zM432.2 567.1h2.10v6.15h-2.10zM432.2 573.2h2.10v6.15h-2.10zM432.2 579.2h2.10v6.15h-2.10zM434.1 573.2h2.10v6.15h-2.10zM436.1 585.2h2.10v6.15h-2.10zM438.0 573.2h2.10v6.15h-2.10zM443.9 579.2h2.10v6.15h-2.10zM445.8 573.2h2.10v6.15h-2.10zM447.8 573.2h2.10v6.15h-2.10zM447.8 585.2h2.10v6.15h-2.10zM451.7 573.2h2.10v6.15h-2.10zM451.7 579.2h2.10v6.15h-2.10zM451.7 585.2h2.10v6.15h-2.10zM453.7 585.2h2.10v6.15h-2.10zM455.6 573.2h2.10v6.15h-2.10zM455.6 585.2h2.10v6.15h-2.10zM457.6 573.2h2.10v6.15h-2.10zM457.6 579.2h2.10v6.15h-2.10zM457.6 585.2h2.10v6.15h-2.10zM459.5 579.2h2.10v6.15h-2.10zM463.4 579.2h2.10v6.15h-2.10zM463.4 585.2h2.10v6.15h-2.10zM467.3 573.2h2.10v6.15h-2.10zM467.3 579.2h2.10v6.15h-2.10zM469.3 573.2h2.10v6.15h-2.10zM473.2 567.1h2.10v6.15h-2.10zM473.2 585.2h2.10v6.15h-2.10zM475.1 579.2h2.10v6.15h-2.10zM475.1 585.2h2.10v6.15h-2.10zM477.1 573.2h2.10v6.15h-2.10zM477.1 585.2h2.10v6.15h-2.10zM481.0 585.2h2.10v6.15h-2.10zM483.0 579.2h2.10v6.15h-2.10zM483.0 585.2h2.10v6.15h-2.10zM486.9 573.2h2.10v6.15h-2.10zM488.8 585.2h2.10v6.15h-2.10zM490.8 573.2h2.10v6.15h-2.10zM490.8 585.2h2.10v6.15h-2.10zM492.7 573.2h2.10v6.15h-2.10zM494.7 585.2h2.10v6.15h-2.10zM496.6 573.2h2.10v6.15h-2.10zM496.6 585.2h2.10v6.15h-2.10zM498.6 573.2h2.10v6.15h-2.10zM498.6 579.2h2.10v6.15h-2.10zM500.5 579.2h2.10v6.15h-2.10zM502.5 579.2h2.10v6.15h-2.10zM504.4 579.2h2.10v6.15h-2.10zM506.4 573.2h2.10v6.15h-2.10zM508.3 585.2h2.10v6.15h-2.10zM510.3 579.2h2.10v6.15h-2.10zM512.3 573.2h2.10v6.15h-2.10zM512.3 579.2h2.10v6.15h-2.10zM514.2 579.2h2.10v6.15h-2.10zM514.2 585.2h2.10v6.15h-2.10zM516.2 573.2h2.10v6.15h-2.10zM518.1 585.2h2.10v6.15h-2.10zM520.1 573.2h2.10v6.15h-2.10zM520.1 579.2h2.10v6.15h-2.10zM522.0 585.2h2.10v6.15h-2.10zM525.9 573.2h2.10v6.15h-2.10zM525.9 579.2h2.10v6.15h-2.10zM527.9 585.2h2.10v6.15h-2.10zM529.8 585.2h2.10v6.15h-2.10zM531.8 573.2h2.10v6.15h-2.10zM533.7 573.2h2.10v6.15h-2.10zM533.7 579.2h2.10v6.15h-2.10zM533.7 585.2h2.10v6.15h-2.10zM535.7 573.2h2.10v6.15h-2.10zM537.6 567.1h2.10v6.15h-2.10zM537.6 579.2h2.10v6.15h-2.10zM539.6 573.2h2.10v6.15h-2.10zM541.6 579.2h2.10v6.15h-2.10zM543.5 585.2h2.10v6.15h-2.10zM545.5 585.2h2.10v6.15h-2.10zM547.4 579.2h2.10v6.15h-2.10zM549.4 573.2h2.10v6.15h-2.10zM555.2 573.2h2.10v6.15h-2.10zM555.2 585.2h2.10v6.15h-2.10zM559.1 585.2h2.10v6.15h-2.10zM563.0 585.2h2.10v6.15h-2.10zM565.0 585.2h2.10v6.15h-2.10zM566.9 585.2h2.10v6.15h-2.10zM570.9 573.2h2.10v6.15h-2.10zM572.8 585.2h2.10v6.15h-2.10zM574.8 585.2h2.10v6.15h-2.10zM576.7 573.2h2.10v6.15h-2.10zM576.7 579.2h2.10v6.15h-2.10zM576.7 585.2h2.10v6.15h-2.10zM580.6 585.2h2.10v6.15h-2.10zM588.4 579.2h2.10v6.15h-2.10zM588.4 585.2h2.10v6.15h-2.10zM590.4 579.2h2.10v6.15h-2.10zM592.3 567.1h2.10v6.15h-2.10zM592.3 573.2h2.10v6.15h-2.10zM592.3 579.2h2.10v6.15h-2.10zM592.3 585.2h2.10v6.15h-2.10zM594.3 585.2h2.10v6.15h-2.10zM596.2 579.2h2.10v6.15h-2.10zM600.1 573.2h2.10v6.15h-2.10zM600.1 585.2h2.10v6.15h-2.10zM602.1 585.2h2.10v6.15h-2.10zM604.1 579.2h2.10v6.15h-2.10zM604.1 585.2h2.10v6.15h-2.10zM608.0 579.2h2.10v6.15h-2.10zM608.0 585.2h2.10v6.15h-2.10zM609.9 585.2h2.10v6.15h-2.10zM613.8 573.2h2.10v6.15h-2.10zM613.8 579.2h2.10v6.15h-2.10zM615.8 573.2h2.10v6.15h-2.10zM615.8 579.2h2.10v6.15h-2.10zM619.7 585.2h2.10v6.15h-2.10zM621.6 579.2h2.10v6.15h-2.10zM623.6 573.2h2.10v6.15h-2.10zM625.5 573.2h2.10v6.15h-2.10zM627.5 573.2h2.10v6.15h-2.10zM629.4 573.2h2.10v6.15h-2.10zM631.4 579.2h2.10v6.15h-2.10zM633.4 579.2h2.10v6.15h-2.10zM635.3 585.2h2.10v6.15h-2.10zM637.3 585.2h2.10v6.15h-2.10zM639.2 579.2h2.10v6.15h-2.10zM641.2 585.2h2.10v6.15h-2.10zM643.1 573.2h2.10v6.15h-2.10zM643.1 585.2h2.10v6.15h-2.10zM645.1 573.2h2.10v6.15h-2.10zM645.1 579.2h2.10v6.15h-2.10zM649.0 573.2h2.10v6.15h-2.10zM649.0 585.2h2.10v6.15h-2.10zM652.9 573.2h2.10v6.15h-2.10zM654.8 585.2h2.10v6.15h-2.10zM656.8 573.2h2.10v6.15h-2.10zM658.7 573.2h2.10v6.15h-2.10zM658.7 585.2h2.10v6.15h-2.10zM660.7 579.2h2.10v6.15h-2.10zM662.7 585.2h2.10v6.15h-2.10zM664.6 573.2h2.10v6.15h-2.10zM664.6 579.2h2.10v6.15h-2.10zM666.6 579.2h2.10v6.15h-2.10zM666.6 585.2h2.10v6.15h-2.10zM668.5 585.2h2.10v6.15h-2.10zM672.4 573.2h2.10v6.15h-2.10zM672.4 579.2h2.10v6.15h-2.10zM674.4 573.2h2.10v6.15h-2.10zM680.2 573.2h2.10v6.15h-2.10zM684.1 579.2h2.10v6.15h-2.10zM686.1 573.2h2.10v6.15h-2.10zM686.1 579.2h2.10v6.15h-2.10zM686.1 585.2h2.10v6.15h-2.10zM688.0 573.2h2.10v6.15h-2.10zM690.0 579.2h2.10v6.15h-2.10zM692.0 579.2h2.10v6.15h-2.10zM693.9 585.2h2.10v6.15h-2.10zM695.9 573.2h2.10v6.15h-2.10zM695.9 579.2h2.10v6.15h-2.10zM695.9 585.2h2.10v6.15h-2.10zM697.8 573.2h2.10v6.15h-2.10zM697.8 579.2h2.10v6.15h-2.10zM697.8 585.2h2.10v6.15h-2.10zM703.7 573.2h2.10v6.15h-2.10zM705.6 573.2h2.10v6.15h-2.10zM705.6 585.2h2.10v6.15h-2.10zM707.6 573.2h2.10v6.15h-2.10zM709.5 579.2h2.10v6.15h-2.10zM711.5 585.2h2.10v6.15h-2.10zM713.4 573.2h2.10v6.15h-2.10zM713.4 579.2h2.10v6.15h-2.10zM713.4 585.2h2.10v6.15h-2.10zM715.4 573.2h2.10v6.15h-2.10zM727.1 573.2h2.10v6.15h-2.10zM729.1 573.2h2.10v6.15h-2.10zM731.0 585.2h2.10v6.15h-2.10zM733.0 567.1h2.10v6.15h-2.10zM736.9 579.2h2.10v6.15h-2.10zM736.9 585.2h2.10v6.15h-2.10zM740.8 573.2h2.10v6.15h-2.10zM740.8 579.2h2.10v6.15h-2.10zM742.7 579.2h2.10v6.15h-2.10zM746.6 585.2h2.10v6.15h-2.10zM748.6 567.1h2.10v6.15h-2.10zM748.6 573.2h2.10v6.15h-2.10zM750.6 585.2h2.10v6.15h-2.10zM752.5 579.2h2.10v6.15h-2.10zM756.4 567.1h2.10v6.15h-2.10zM756.4 579.2h2.10v6.15h-2.10zM758.4 585.2h2.10v6.15h-2.10zM764.2 573.2h2.10v6.15h-2.10zM770.1 579.2h2.10v6.15h-2.10zM770.1 585.2h2.10v6.15h-2.10zM774.0 573.2h2.10v6.15h-2.10zM775.9 573.2h2.10v6.15h-2.10zM777.9 585.2h2.10v6.15h-2.10zM781.8 585.2h2.10v6.15h-2.10zM783.8 573.2h2.10v6.15h-2.10zM783.8 585.2h2.10v6.15h-2.10zM785.7 573.2h2.10v6.15h-2.10zM785.7 585.2h2.10v6.15h-2.10zM787.7 573.2h2.10v6.15h-2.10zM787.7 579.2h2.10v6.15h-2.10zM787.7 585.2h2.10v6.15h-2.10zM789.6 579.2h2.10v6.15h-2.10zM793.5 573.2h2.10v6.15h-2.10zM793.5 579.2h2.10v6.15h-2.10zM793.5 585.2h2.10v6.15h-2.10zM795.5 579.2h2.10v6.15h-2.10zM795.5 585.2h2.10v6.15h-2.10zM799.4 579.2h2.10v6.15h-2.10zM801.3 573.2h2.10v6.15h-2.10zM801.3 579.2h2.10v6.15h-2.10zM803.3 573.2h2.10v6.15h-2.10zM805.2 573.2h2.10v6.15h-2.10zM807.2 579.2h2.10v6.15h-2.10zM807.2 585.2h2.10v6.15h-2.10zM809.2 573.2h2.10v6.15h-2.10zM815.0 573.2h2.10v6.15h-2.10zM817.0 573.2h2.10v6.15h-2.10zM818.9 573.2h2.10v6.15h-2.10zM818.9 585.2h2.10v6.15h-2.10zM822.8 579.2h2.10v6.15h-2.10zM822.8 585.2h2.10v6.15h-2.10zM824.8 579.2h2.10v6.15h-2.10zM826.7 585.2h2.10v6.15h-2.10zM828.7 573.2h2.10v6.15h-2.10zM828.7 585.2h2.10v6.15h-2.10zM830.6 579.2h2.10v6.15h-2.10zM830.6 585.2h2.10v6.15h-2.10zM832.6 573.2h2.10v6.15h-2.10zM834.5 573.2h2.10v6.15h-2.10zM838.4 573.2h2.10v6.15h-2.10zM838.4 585.2h2.10v6.15h-2.10zM840.4 573.2h2.10v6.15h-2.10zM840.4 585.2h2.10v6.15h-2.10zM844.3 585.2h2.10v6.15h-2.10zM846.3 573.2h2.10v6.15h-2.10zM846.3 579.2h2.10v6.15h-2.10zM848.2 567.1h2.10v6.15h-2.10zM848.2 573.2h2.10v6.15h-2.10zM848.2 585.2h2.10v6.15h-2.10zM850.2 579.2h2.10v6.15h-2.10zM850.2 585.2h2.10v6.15h-2.10zM852.1 573.2h2.10v6.15h-2.10zM852.1 579.2h2.10v6.15h-2.10zM858.0 573.2h2.10v6.15h-2.10zM859.9 579.2h2.10v6.15h-2.10zM861.9 585.2h2.10v6.15h-2.10zM863.8 573.2h2.10v6.15h-2.10zM867.7 573.2h2.10v6.15h-2.10zM869.7 585.2h2.10v6.15h-2.10zM871.7 585.2h2.10v6.15h-2.10zM873.6 573.2h2.10v6.15h-2.10zM873.6 579.2h2.10v6.15h-2.10zM873.6 585.2h2.10v6.15h-2.10zM875.6 573.2h2.10v6.15h-2.10zM875.6 585.2h2.10v6.15h-2.10zM877.5 585.2h2.10v6.15h-2.10zM879.5 573.2h2.10v6.15h-2.10zM879.5 585.2h2.10v6.15h-2.10zM881.4 573.2h2.10v6.15h-2.10zM883.4 573.2h2.10v6.15h-2.10zM883.4 585.2h2.10v6.15h-2.10zM885.3 579.2h2.10v6.15h-2.10zM887.3 573.2h2.10v6.15h-2.10zM891.2 573.2h2.10v6.15h-2.10zM891.2 579.2h2.10v6.15h-2.10zM897.0 579.2h2.10v6.15h-2.10zM899.0 579.2h2.10v6.15h-2.10zM899.0 585.2h2.10v6.15h-2.10zM902.9 579.2h2.10v6.15h-2.10zM902.9 585.2h2.10v6.15h-2.10zM904.9 585.2h2.10v6.15h-2.10zM906.8 573.2h2.10v6.15h-2.10zM906.8 579.2h2.10v6.15h-2.10zM908.8 573.2h2.10v6.15h-2.10zM908.8 585.2h2.10v6.15h-2.10zM912.7 579.2h2.10v6.15h-2.10zM914.6 573.2h2.10v6.15h-2.10zM916.6 579.2h2.10v6.15h-2.10zM916.6 585.2h2.10v6.15h-2.10zM918.5 579.2h2.10v6.15h-2.10zM920.5 579.2h2.10v6.15h-2.10zM922.4 567.1h2.10v6.15h-2.10zM922.4 579.2h2.10v6.15h-2.10zM922.4 585.2h2.10v6.15h-2.10zM924.4 585.2h2.10v6.15h-2.10zM926.3 579.2h2.10v6.15h-2.10zM926.3 585.2h2.10v6.15h-2.10z" fill="#8ecbbf"/><path d="M272.0 573.2h2.10v6.15h-2.10zM272.0 579.2h2.10v6.15h-2.10zM274.0 573.2h2.10v6.15h-2.10zM274.0 585.2h2.10v6.15h-2.10zM275.9 573.2h2.10v6.15h-2.10zM279.8 573.2h2.10v6.15h-2.10zM279.8 579.2h2.10v6.15h-2.10zM281.8 573.2h2.10v6.15h-2.10zM281.8 579.2h2.10v6.15h-2.10zM283.7 579.2h2.10v6.15h-2.10zM285.7 579.2h2.10v6.15h-2.10zM289.6 573.2h2.10v6.15h-2.10zM289.6 579.2h2.10v6.15h-2.10zM291.5 573.2h2.10v6.15h-2.10zM293.5 579.2h2.10v6.15h-2.10zM297.4 573.2h2.10v6.15h-2.10zM299.3 573.2h2.10v6.15h-2.10zM301.3 579.2h2.10v6.15h-2.10zM303.3 573.2h2.10v6.15h-2.10zM305.2 573.2h2.10v6.15h-2.10zM307.2 573.2h2.10v6.15h-2.10zM311.1 579.2h2.10v6.15h-2.10zM316.9 573.2h2.10v6.15h-2.10zM316.9 579.2h2.10v6.15h-2.10zM328.6 579.2h2.10v6.15h-2.10zM330.6 573.2h2.10v6.15h-2.10zM342.3 579.2h2.10v6.15h-2.10zM344.3 579.2h2.10v6.15h-2.10zM346.2 573.2h2.10v6.15h-2.10zM346.2 579.2h2.10v6.15h-2.10zM348.2 579.2h2.10v6.15h-2.10zM350.1 573.2h2.10v6.15h-2.10zM352.1 579.2h2.10v6.15h-2.10zM354.0 573.2h2.10v6.15h-2.10zM354.0 579.2h2.10v6.15h-2.10zM356.0 573.2h2.10v6.15h-2.10zM357.9 579.2h2.10v6.15h-2.10zM365.8 579.2h2.10v6.15h-2.10zM367.7 579.2h2.10v6.15h-2.10zM379.4 573.2h2.10v6.15h-2.10zM383.3 573.2h2.10v6.15h-2.10zM385.3 567.1h2.10v6.15h-2.10zM385.3 585.2h2.10v6.15h-2.10zM387.2 579.2h2.10v6.15h-2.10zM389.2 579.2h2.10v6.15h-2.10zM391.1 585.2h2.10v6.15h-2.10zM397.0 579.2h2.10v6.15h-2.10zM400.9 573.2h2.10v6.15h-2.10zM402.9 573.2h2.10v6.15h-2.10zM402.9 585.2h2.10v6.15h-2.10zM404.8 579.2h2.10v6.15h-2.10zM406.8 573.2h2.10v6.15h-2.10zM410.7 579.2h2.10v6.15h-2.10zM412.6 573.2h2.10v6.15h-2.10zM414.6 573.2h2.10v6.15h-2.10zM418.5 579.2h2.10v6.15h-2.10zM422.4 573.2h2.10v6.15h-2.10zM422.4 579.2h2.10v6.15h-2.10zM428.3 585.2h2.10v6.15h-2.10zM432.2 585.2h2.10v6.15h-2.10zM434.1 567.1h2.10v6.15h-2.10zM436.1 573.2h2.10v6.15h-2.10zM440.0 573.2h2.10v6.15h-2.10zM440.0 579.2h2.10v6.15h-2.10zM441.9 573.2h2.10v6.15h-2.10zM441.9 585.2h2.10v6.15h-2.10zM443.9 567.1h2.10v6.15h-2.10zM447.8 579.2h2.10v6.15h-2.10zM449.7 573.2h2.10v6.15h-2.10zM453.7 579.2h2.10v6.15h-2.10zM461.5 573.2h2.10v6.15h-2.10zM461.5 579.2h2.10v6.15h-2.10zM465.4 579.2h2.10v6.15h-2.10zM469.3 579.2h2.10v6.15h-2.10zM471.2 573.2h2.10v6.15h-2.10zM471.2 579.2h2.10v6.15h-2.10zM471.2 585.2h2.10v6.15h-2.10zM484.9 579.2h2.10v6.15h-2.10zM490.8 579.2h2.10v6.15h-2.10zM494.7 579.2h2.10v6.15h-2.10zM502.5 585.2h2.10v6.15h-2.10zM506.4 579.2h2.10v6.15h-2.10zM516.2 579.2h2.10v6.15h-2.10zM518.1 573.2h2.10v6.15h-2.10zM522.0 573.2h2.10v6.15h-2.10zM524.0 579.2h2.10v6.15h-2.10zM529.8 579.2h2.10v6.15h-2.10zM531.8 579.2h2.10v6.15h-2.10zM535.7 579.2h2.10v6.15h-2.10zM535.7 585.2h2.10v6.15h-2.10zM537.6 573.2h2.10v6.15h-2.10zM543.5 573.2h2.10v6.15h-2.10zM543.5 579.2h2.10v6.15h-2.10zM545.5 579.2h2.10v6.15h-2.10zM547.4 573.2h2.10v6.15h-2.10zM547.4 585.2h2.10v6.15h-2.10zM553.3 579.2h2.10v6.15h-2.10zM555.2 579.2h2.10v6.15h-2.10zM557.2 579.2h2.10v6.15h-2.10zM559.1 567.1h2.10v6.15h-2.10zM559.1 573.2h2.10v6.15h-2.10zM559.1 579.2h2.10v6.15h-2.10zM561.1 573.2h2.10v6.15h-2.10zM561.1 579.2h2.10v6.15h-2.10zM561.1 585.2h2.10v6.15h-2.10zM563.0 579.2h2.10v6.15h-2.10zM565.0 573.2h2.10v6.15h-2.10zM565.0 579.2h2.10v6.15h-2.10zM566.9 579.2h2.10v6.15h-2.10zM578.7 585.2h2.10v6.15h-2.10zM580.6 573.2h2.10v6.15h-2.10zM582.6 579.2h2.10v6.15h-2.10zM584.5 579.2h2.10v6.15h-2.10zM586.5 585.2h2.10v6.15h-2.10zM588.4 573.2h2.10v6.15h-2.10zM590.4 573.2h2.10v6.15h-2.10zM590.4 585.2h2.10v6.15h-2.10zM594.3 573.2h2.10v6.15h-2.10zM596.2 567.1h2.10v6.15h-2.10zM596.2 585.2h2.10v6.15h-2.10zM598.2 573.2h2.10v6.15h-2.10zM600.1 579.2h2.10v6.15h-2.10zM602.1 573.2h2.10v6.15h-2.10zM604.1 573.2h2.10v6.15h-2.10zM608.0 573.2h2.10v6.15h-2.10zM611.9 573.2h2.10v6.15h-2.10zM611.9 579.2h2.10v6.15h-2.10zM617.7 573.2h2.10v6.15h-2.10zM617.7 585.2h2.10v6.15h-2.10zM619.7 573.2h2.10v6.15h-2.10zM619.7 579.2h2.10v6.15h-2.10zM625.5 579.2h2.10v6.15h-2.10zM631.4 573.2h2.10v6.15h-2.10zM631.4 585.2h2.10v6.15h-2.10zM633.4 573.2h2.10v6.15h-2.10zM633.4 585.2h2.10v6.15h-2.10zM639.2 585.2h2.10v6.15h-2.10zM641.2 573.2h2.10v6.15h-2.10zM647.0 573.2h2.10v6.15h-2.10zM647.0 579.2h2.10v6.15h-2.10zM650.9 573.2h2.10v6.15h-2.10zM654.8 573.2h2.10v6.15h-2.10zM654.8 579.2h2.10v6.15h-2.10zM658.7 579.2h2.10v6.15h-2.10zM664.6 585.2h2.10v6.15h-2.10zM666.6 573.2h2.10v6.15h-2.10zM668.5 573.2h2.10v6.15h-2.10zM672.4 585.2h2.10v6.15h-2.10zM674.4 579.2h2.10v6.15h-2.10zM676.3 579.2h2.10v6.15h-2.10zM678.3 579.2h2.10v6.15h-2.10zM678.3 585.2h2.10v6.15h-2.10zM680.2 579.2h2.10v6.15h-2.10zM682.2 579.2h2.10v6.15h-2.10zM684.1 573.2h2.10v6.15h-2.10zM690.0 585.2h2.10v6.15h-2.10zM692.0 573.2h2.10v6.15h-2.10zM693.9 579.2h2.10v6.15h-2.10zM699.8 573.2h2.10v6.15h-2.10zM699.8 579.2h2.10v6.15h-2.10zM701.7 585.2h2.10v6.15h-2.10zM707.6 579.2h2.10v6.15h-2.10zM711.5 573.2h2.10v6.15h-2.10zM711.5 579.2h2.10v6.15h-2.10zM715.4 579.2h2.10v6.15h-2.10zM715.4 585.2h2.10v6.15h-2.10zM717.3 573.2h2.10v6.15h-2.10zM717.3 585.2h2.10v6.15h-2.10zM719.3 573.2h2.10v6.15h-2.10zM723.2 573.2h2.10v6.15h-2.10zM723.2 579.2h2.10v6.15h-2.10zM725.2 573.2h2.10v6.15h-2.10zM725.2 585.2h2.10v6.15h-2.10zM729.1 579.2h2.10v6.15h-2.10zM731.0 579.2h2.10v6.15h-2.10zM733.0 573.2h2.10v6.15h-2.10zM734.9 573.2h2.10v6.15h-2.10zM734.9 579.2h2.10v6.15h-2.10zM736.9 573.2h2.10v6.15h-2.10zM738.8 573.2h2.10v6.15h-2.10zM740.8 585.2h2.10v6.15h-2.10zM742.7 573.2h2.10v6.15h-2.10zM744.7 573.2h2.10v6.15h-2.10zM744.7 579.2h2.10v6.15h-2.10zM746.6 573.2h2.10v6.15h-2.10zM746.6 579.2h2.10v6.15h-2.10zM758.4 573.2h2.10v6.15h-2.10zM758.4 579.2h2.10v6.15h-2.10zM760.3 579.2h2.10v6.15h-2.10zM766.2 573.2h2.10v6.15h-2.10zM768.1 573.2h2.10v6.15h-2.10zM768.1 579.2h2.10v6.15h-2.10zM775.9 585.2h2.10v6.15h-2.10zM777.9 573.2h2.10v6.15h-2.10zM777.9 579.2h2.10v6.15h-2.10zM779.9 573.2h2.10v6.15h-2.10zM781.8 579.2h2.10v6.15h-2.10zM783.8 579.2h2.10v6.15h-2.10zM789.6 573.2h2.10v6.15h-2.10zM797.4 579.2h2.10v6.15h-2.10zM799.4 573.2h2.10v6.15h-2.10zM809.2 579.2h2.10v6.15h-2.10zM809.2 585.2h2.10v6.15h-2.10zM813.1 573.2h2.10v6.15h-2.10zM815.0 579.2h2.10v6.15h-2.10zM817.0 579.2h2.10v6.15h-2.10zM822.8 573.2h2.10v6.15h-2.10zM826.7 567.1h2.10v6.15h-2.10zM828.7 567.1h2.10v6.15h-2.10zM832.6 579.2h2.10v6.15h-2.10zM834.5 585.2h2.10v6.15h-2.10zM836.5 567.1h2.10v6.15h-2.10zM836.5 579.2h2.10v6.15h-2.10zM840.4 579.2h2.10v6.15h-2.10zM842.4 585.2h2.10v6.15h-2.10zM844.3 579.2h2.10v6.15h-2.10zM848.2 579.2h2.10v6.15h-2.10zM856.0 579.2h2.10v6.15h-2.10zM858.0 579.2h2.10v6.15h-2.10zM861.9 573.2h2.10v6.15h-2.10zM861.9 579.2h2.10v6.15h-2.10zM865.8 585.2h2.10v6.15h-2.10zM869.7 573.2h2.10v6.15h-2.10zM871.7 573.2h2.10v6.15h-2.10zM877.5 579.2h2.10v6.15h-2.10zM879.5 579.2h2.10v6.15h-2.10zM881.4 579.2h2.10v6.15h-2.10zM887.3 579.2h2.10v6.15h-2.10zM887.3 585.2h2.10v6.15h-2.10zM889.2 585.2h2.10v6.15h-2.10zM893.1 579.2h2.10v6.15h-2.10zM895.1 573.2h2.10v6.15h-2.10zM895.1 579.2h2.10v6.15h-2.10zM897.0 573.2h2.10v6.15h-2.10zM899.0 573.2h2.10v6.15h-2.10zM902.9 573.2h2.10v6.15h-2.10zM908.8 579.2h2.10v6.15h-2.10zM910.7 579.2h2.10v6.15h-2.10zM912.7 573.2h2.10v6.15h-2.10zM916.6 573.2h2.10v6.15h-2.10zM918.5 573.2h2.10v6.15h-2.10zM920.5 573.2h2.10v6.15h-2.10zM922.4 573.2h2.10v6.15h-2.10zM924.4 573.2h2.10v6.15h-2.10zM289.7 474.2h2.10v6.05h-2.10zM390.1 478.5h2.10v6.05h-2.10zM413.1 513.5h2.10v6.05h-2.10zM442.6 478.5h2.10v6.05h-2.10zM444.0 503.7h2.10v6.05h-2.10zM445.3 503.7h2.10v6.05h-2.10zM447.2 485.1h2.10v6.05h-2.10zM465.6 462.1h2.10v6.05h-2.10zM484.0 513.5h2.10v6.05h-2.10zM499.7 491.7h2.10v6.05h-2.10zM527.3 478.5h2.10v6.05h-2.10zM549.0 485.1h2.10v6.05h-2.10zM556.2 503.7h2.10v6.05h-2.10zM616.6 467.6h2.10v6.05h-2.10zM640.2 478.5h2.10v6.05h-2.10zM735.3 450.1h2.10v6.05h-2.10zM735.3 503.7h2.10v6.05h-2.10zM862.7 478.5h2.10v6.05h-2.10zM900.1 437.0h2.10v6.05h-2.10zM911.9 485.1h2.10v6.05h-2.10zM911.9 513.5h2.10v6.05h-2.10zM337.6 555.1h2.10v6.05h-2.10zM344.2 555.1h2.10v6.05h-2.10zM371.8 561.7h2.10v6.05h-2.10zM388.8 555.1h2.10v6.05h-2.10zM392.1 555.1h2.10v6.05h-2.10zM408.5 555.1h2.10v6.05h-2.10zM434.1 555.1h2.10v6.05h-2.10zM442.6 561.7h2.10v6.05h-2.10zM478.7 561.7h2.10v6.05h-2.10zM498.4 568.2h2.10v6.05h-2.10zM619.8 555.1h2.10v6.05h-2.10zM623.1 555.1h2.10v6.05h-2.10zM629.7 561.7h2.10v6.05h-2.10zM713.0 555.1h2.10v6.05h-2.10zM726.2 555.1h2.10v6.05h-2.10zM751.1 568.2h2.10v6.05h-2.10zM781.9 555.1h2.10v6.05h-2.10zM882.4 555.1h2.10v6.05h-2.10zM903.4 555.1h2.10v6.05h-2.10zM370.4 591.2h2.10v6.05h-2.10zM413.8 597.8h2.10v6.05h-2.10zM460.4 597.8h2.10v6.05h-2.10zM464.3 591.2h2.10v6.05h-2.10zM550.9 597.8h2.10v6.05h-2.10zM570.6 597.8h2.10v6.05h-2.10zM718.3 597.8h2.10v6.05h-2.10zM775.4 597.8h2.10v6.05h-2.10zM806.9 597.8h2.10v6.05h-2.10zM831.8 597.8h2.10v6.05h-2.10zM841.7 597.8h2.10v6.05h-2.10zM867.3 597.8h2.10v6.05h-2.10zM874.5 597.8h2.10v6.05h-2.10z" fill="#72bbbd"/><path d="M277.9 573.2h2.10v6.15h-2.10zM287.6 579.2h2.10v6.15h-2.10zM287.6 585.2h2.10v6.15h-2.10zM291.5 579.2h2.10v6.15h-2.10zM297.4 579.2h2.10v6.15h-2.10zM299.3 579.2h2.10v6.15h-2.10zM315.0 585.2h2.10v6.15h-2.10zM320.8 579.2h2.10v6.15h-2.10zM322.8 573.2h2.10v6.15h-2.10zM324.7 585.2h2.10v6.15h-2.10zM330.6 579.2h2.10v6.15h-2.10zM332.6 573.2h2.10v6.15h-2.10zM332.6 579.2h2.10v6.15h-2.10zM340.4 579.2h2.10v6.15h-2.10zM348.2 573.2h2.10v6.15h-2.10zM350.1 579.2h2.10v6.15h-2.10zM352.1 573.2h2.10v6.15h-2.10zM361.9 579.2h2.10v6.15h-2.10zM371.6 579.2h2.10v6.15h-2.10zM373.6 573.2h2.10v6.15h-2.10zM375.5 579.2h2.10v6.15h-2.10zM377.5 573.2h2.10v6.15h-2.10zM377.5 579.2h2.10v6.15h-2.10zM377.5 585.2h2.10v6.15h-2.10zM387.2 573.2h2.10v6.15h-2.10zM389.2 573.2h2.10v6.15h-2.10zM391.1 573.2h2.10v6.15h-2.10zM400.9 579.2h2.10v6.15h-2.10zM404.8 573.2h2.10v6.15h-2.10zM406.8 579.2h2.10v6.15h-2.10zM408.7 579.2h2.10v6.15h-2.10zM412.6 579.2h2.10v6.15h-2.10zM414.6 579.2h2.10v6.15h-2.10zM418.5 573.2h2.10v6.15h-2.10zM426.3 585.2h2.10v6.15h-2.10zM430.2 573.2h2.10v6.15h-2.10zM434.1 579.2h2.10v6.15h-2.10zM438.0 579.2h2.10v6.15h-2.10zM438.0 585.2h2.10v6.15h-2.10zM443.9 573.2h2.10v6.15h-2.10zM443.9 585.2h2.10v6.15h-2.10zM445.8 579.2h2.10v6.15h-2.10zM453.7 573.2h2.10v6.15h-2.10zM459.5 573.2h2.10v6.15h-2.10zM473.2 579.2h2.10v6.15h-2.10zM479.0 573.2h2.10v6.15h-2.10zM479.0 579.2h2.10v6.15h-2.10zM481.0 579.2h2.10v6.15h-2.10zM484.9 585.2h2.10v6.15h-2.10zM492.7 585.2h2.10v6.15h-2.10zM494.7 573.2h2.10v6.15h-2.10zM502.5 573.2h2.10v6.15h-2.10zM504.4 585.2h2.10v6.15h-2.10zM508.3 573.2h2.10v6.15h-2.10zM508.3 579.2h2.10v6.15h-2.10zM510.3 573.2h2.10v6.15h-2.10zM518.1 579.2h2.10v6.15h-2.10zM520.1 585.2h2.10v6.15h-2.10zM525.9 585.2h2.10v6.15h-2.10zM527.9 579.2h2.10v6.15h-2.10zM539.6 579.2h2.10v6.15h-2.10zM541.6 573.2h2.10v6.15h-2.10zM553.3 573.2h2.10v6.15h-2.10zM563.0 573.2h2.10v6.15h-2.10zM566.9 573.2h2.10v6.15h-2.10zM568.9 579.2h2.10v6.15h-2.10zM570.9 585.2h2.10v6.15h-2.10zM572.8 573.2h2.10v6.15h-2.10zM574.8 579.2h2.10v6.15h-2.10zM580.6 579.2h2.10v6.15h-2.10zM586.5 573.2h2.10v6.15h-2.10zM586.5 579.2h2.10v6.15h-2.10zM596.2 573.2h2.10v6.15h-2.10zM606.0 567.1h2.10v6.15h-2.10zM606.0 573.2h2.10v6.15h-2.10zM606.0 579.2h2.10v6.15h-2.10zM609.9 573.2h2.10v6.15h-2.10zM609.9 579.2h2.10v6.15h-2.10zM615.8 585.2h2.10v6.15h-2.10zM621.6 585.2h2.10v6.15h-2.10zM623.6 579.2h2.10v6.15h-2.10zM629.4 579.2h2.10v6.15h-2.10zM635.3 579.2h2.10v6.15h-2.10zM637.3 573.2h2.10v6.15h-2.10zM637.3 579.2h2.10v6.15h-2.10zM639.2 573.2h2.10v6.15h-2.10zM641.2 579.2h2.10v6.15h-2.10zM647.0 585.2h2.10v6.15h-2.10zM649.0 567.1h2.10v6.15h-2.10zM650.9 579.2h2.10v6.15h-2.10zM652.9 579.2h2.10v6.15h-2.10zM656.8 579.2h2.10v6.15h-2.10zM662.7 579.2h2.10v6.15h-2.10zM668.5 579.2h2.10v6.15h-2.10zM670.5 573.2h2.10v6.15h-2.10zM670.5 579.2h2.10v6.15h-2.10zM682.2 573.2h2.10v6.15h-2.10zM688.0 579.2h2.10v6.15h-2.10zM690.0 573.2h2.10v6.15h-2.10zM693.9 573.2h2.10v6.15h-2.10zM701.7 573.2h2.10v6.15h-2.10zM701.7 579.2h2.10v6.15h-2.10zM705.6 579.2h2.10v6.15h-2.10zM709.5 573.2h2.10v6.15h-2.10zM719.3 585.2h2.10v6.15h-2.10zM721.3 579.2h2.10v6.15h-2.10zM725.2 579.2h2.10v6.15h-2.10zM731.0 573.2h2.10v6.15h-2.10zM733.0 579.2h2.10v6.15h-2.10zM738.8 579.2h2.10v6.15h-2.10zM744.7 585.2h2.10v6.15h-2.10zM748.6 585.2h2.10v6.15h-2.10zM750.6 573.2h2.10v6.15h-2.10zM750.6 579.2h2.10v6.15h-2.10zM752.5 573.2h2.10v6.15h-2.10zM756.4 573.2h2.10v6.15h-2.10zM760.3 573.2h2.10v6.15h-2.10zM762.3 573.2h2.10v6.15h-2.10zM770.1 573.2h2.10v6.15h-2.10zM772.0 573.2h2.10v6.15h-2.10zM772.0 579.2h2.10v6.15h-2.10zM774.0 579.2h2.10v6.15h-2.10zM775.9 579.2h2.10v6.15h-2.10zM779.9 579.2h2.10v6.15h-2.10zM789.6 567.1h2.10v6.15h-2.10zM791.6 579.2h2.10v6.15h-2.10zM803.3 579.2h2.10v6.15h-2.10zM807.2 573.2h2.10v6.15h-2.10zM817.0 585.2h2.10v6.15h-2.10zM818.9 579.2h2.10v6.15h-2.10zM820.9 585.2h2.10v6.15h-2.10zM824.8 585.2h2.10v6.15h-2.10zM826.7 579.2h2.10v6.15h-2.10zM830.6 573.2h2.10v6.15h-2.10zM834.5 579.2h2.10v6.15h-2.10zM836.5 573.2h2.10v6.15h-2.10zM836.5 585.2h2.10v6.15h-2.10zM838.4 579.2h2.10v6.15h-2.10zM842.4 573.2h2.10v6.15h-2.10zM842.4 579.2h2.10v6.15h-2.10zM844.3 567.1h2.10v6.15h-2.10zM846.3 567.1h2.10v6.15h-2.10zM850.2 573.2h2.10v6.15h-2.10zM852.1 585.2h2.10v6.15h-2.10zM854.1 573.2h2.10v6.15h-2.10zM854.1 579.2h2.10v6.15h-2.10zM856.0 573.2h2.10v6.15h-2.10zM859.9 573.2h2.10v6.15h-2.10zM859.9 585.2h2.10v6.15h-2.10zM865.8 573.2h2.10v6.15h-2.10zM865.8 579.2h2.10v6.15h-2.10zM875.6 579.2h2.10v6.15h-2.10zM877.5 573.2h2.10v6.15h-2.10zM881.4 585.2h2.10v6.15h-2.10zM883.4 579.2h2.10v6.15h-2.10zM885.3 573.2h2.10v6.15h-2.10zM889.2 573.2h2.10v6.15h-2.10zM889.2 579.2h2.10v6.15h-2.10zM901.0 579.2h2.10v6.15h-2.10zM904.9 573.2h2.10v6.15h-2.10zM912.7 585.2h2.10v6.15h-2.10zM914.6 579.2h2.10v6.15h-2.10zM926.3 573.2h2.10v6.15h-2.10z" fill="#5ba6bc"/><path d="M305.2 579.2h2.10v6.15h-2.10zM324.7 579.2h2.10v6.15h-2.10zM328.6 573.2h2.10v6.15h-2.10zM334.5 573.2h2.10v6.15h-2.10zM361.9 573.2h2.10v6.15h-2.10zM363.8 579.2h2.10v6.15h-2.10zM385.3 579.2h2.10v6.15h-2.10zM395.1 573.2h2.10v6.15h-2.10zM408.7 573.2h2.10v6.15h-2.10zM428.3 579.2h2.10v6.15h-2.10zM430.2 579.2h2.10v6.15h-2.10zM441.9 579.2h2.10v6.15h-2.10zM449.7 579.2h2.10v6.15h-2.10zM473.2 573.2h2.10v6.15h-2.10zM477.1 579.2h2.10v6.15h-2.10zM483.0 573.2h2.10v6.15h-2.10zM486.9 579.2h2.10v6.15h-2.10zM492.7 579.2h2.10v6.15h-2.10zM496.6 579.2h2.10v6.15h-2.10zM500.5 573.2h2.10v6.15h-2.10zM504.4 573.2h2.10v6.15h-2.10zM545.5 573.2h2.10v6.15h-2.10zM551.3 573.2h2.10v6.15h-2.10zM551.3 579.2h2.10v6.15h-2.10zM557.2 573.2h2.10v6.15h-2.10zM574.8 573.2h2.10v6.15h-2.10zM578.7 579.2h2.10v6.15h-2.10zM594.3 579.2h2.10v6.15h-2.10zM598.2 579.2h2.10v6.15h-2.10zM621.6 573.2h2.10v6.15h-2.10zM627.5 579.2h2.10v6.15h-2.10zM635.3 573.2h2.10v6.15h-2.10zM649.0 579.2h2.10v6.15h-2.10zM676.3 573.2h2.10v6.15h-2.10zM719.3 579.2h2.10v6.15h-2.10zM721.3 573.2h2.10v6.15h-2.10zM754.5 573.2h2.10v6.15h-2.10zM754.5 579.2h2.10v6.15h-2.10zM781.8 573.2h2.10v6.15h-2.10zM795.5 573.2h2.10v6.15h-2.10zM805.2 579.2h2.10v6.15h-2.10zM811.1 573.2h2.10v6.15h-2.10zM811.1 579.2h2.10v6.15h-2.10zM813.1 579.2h2.10v6.15h-2.10zM820.9 573.2h2.10v6.15h-2.10zM828.7 579.2h2.10v6.15h-2.10zM867.7 579.2h2.10v6.15h-2.10zM893.1 573.2h2.10v6.15h-2.10zM901.0 573.2h2.10v6.15h-2.10z" fill="#4b8fc2"/><path d="M285.7 573.2h2.10v6.15h-2.10zM336.5 579.2h2.10v6.15h-2.10zM338.4 579.2h2.10v6.15h-2.10zM363.8 573.2h2.10v6.15h-2.10zM402.9 579.2h2.10v6.15h-2.10zM416.5 579.2h2.10v6.15h-2.10zM426.3 573.2h2.10v6.15h-2.10zM455.6 579.2h2.10v6.15h-2.10zM463.4 573.2h2.10v6.15h-2.10zM481.0 573.2h2.10v6.15h-2.10zM524.0 573.2h2.10v6.15h-2.10zM662.7 573.2h2.10v6.15h-2.10zM678.3 573.2h2.10v6.15h-2.10zM727.1 579.2h2.10v6.15h-2.10zM820.9 579.2h2.10v6.15h-2.10zM826.7 573.2h2.10v6.15h-2.10zM863.8 579.2h2.10v6.15h-2.10z" fill="#3f6fbf"/><path d="M313.0 579.2h2.10v6.15h-2.10zM582.6 573.2h2.10v6.15h-2.10zM904.9 579.2h2.10v6.15h-2.10z" fill="#3f5ea8"/><path d="M346.2 573.2h2.10v6.15h-2.10zM348.2 573.2h2.10v6.15h-2.10z" fill="#3a4f8a"/><path d="M361.9 573.2h2.10v6.15h-2.10z" fill="#2d3340"/></svg><div class="b" style="left:949.40px;top:403.90px;width:8.70px;height:8.20px;background:#2d3340;"></div><div class="b" style="left:949.40px;top:414.37px;width:8.70px;height:8.20px;background:#3a5590;"></div><div class="b" style="left:949.40px;top:424.84px;width:8.70px;height:8.20px;background:#3f62a8;"></div><div class="b" style="left:949.40px;top:435.31px;width:8.70px;height:8.20px;background:#3f6fbf;"></div><div class="b" style="left:949.40px;top:445.78px;width:8.70px;height:8.20px;background:#4c87c0;"></div><div class="b" style="left:949.40px;top:456.25px;width:8.70px;height:8.20px;background:#5aa5ba;"></div><div class="b" style="left:949.40px;top:466.72px;width:8.70px;height:8.20px;background:#8fcdbf;"></div><span id="t55" class="t" style="left:947.60px;top:400.98px;font-size:9.00px;color:#2b303b;font-weight:400;letter-spacing:0.000px;transform:translateX(-100%);">50</span><span id="t56" class="t" style="left:947.60px;top:435.28px;font-size:9.00px;color:#2b303b;font-weight:400;letter-spacing:0.000px;transform:translateX(-100%);">25</span><span id="t57" class="t" style="left:947.60px;top:469.88px;font-size:9.00px;color:#2b303b;font-weight:400;letter-spacing:0.000px;transform:translateX(-100%);">1</span><div class="b" style="left:228.00px;top:699.80px;width:66.60px;height:16.20px;background:#3c414d;border-radius:3px;"></div><span id="t58" class="t" style="left:261.30px;top:701.86px;font-size:12.10px;color:#fff;font-weight:400;letter-spacing:-0.250px;transform:translateX(-50%);">11/02 17:48</span><svg class="b" style="left:212.80px;top:741.40px;overflow:visible" width="17.00" height="15.20" fill="none" stroke="#5f6673" stroke-width="1.5" stroke-linecap="round" stroke-linejoin="round"><g transform="translate(0.750 0.750) scale(0.8158 0.7611) translate(-2.500 -3.500)" style="vector-effect:non-scaling-stroke"><path vector-effect="non-scaling-stroke" d="M2.5 3.5 H21.5 V21.5 L17.5 17.5 H2.5 Z M8 8.5 H16 M8 12.5 H16"/></g></svg><span id="t59" class="t" style="left:238.50px;top:741.03px;font-size:14.50px;color:#5f6673;font-weight:400;letter-spacing:-0.047px;">Caption this Query</span><div class="b" style="left:1041.40px;top:318.60px;width:773.80px;height:346.40px;background:#fff;border:1px solid #cdd2e5;border-radius:3.5px;box-sizing:border-box;"></div><span id="t60" class="t" style="left:1052.80px;top:333.53px;font-size:14.50px;color:#2b303b;font-weight:400;letter-spacing:-1.016px;-webkit-text-stroke:0.25px #2b303b;">COUNT</span><div class="b" style="left:1105.00px;top:629.20px;width:656.00px;height:1.20px;background:#e4e8f1;"></div><span id="t61" class="t" style="left:1096.20px;top:624.47px;font-size:10.90px;color:#666c78;font-weight:400;letter-spacing:0.000px;transform:translateX(-100%);">0</span><div class="b" style="left:1105.00px;top:563.75px;width:656.00px;height:1.20px;background:#e4e8f1;"></div><span id="t62" class="t" style="left:1096.20px;top:559.02px;font-size:10.90px;color:#666c78;font-weight:400;letter-spacing:0.000px;transform:translateX(-100%);">500</span><div class="b" style="left:1105.00px;top:498.30px;width:656.00px;height:1.20px;background:#e4e8f1;"></div><span id="t63" class="t" style="left:1096.20px;top:493.57px;font-size:10.90px;color:#666c78;font-weight:400;letter-spacing:0.000px;transform:translateX(-100%);">1000</span><div class="b" style="left:1105.00px;top:432.85px;width:656.00px;height:1.20px;background:#e4e8f1;"></div><span id="t64" class="t" style="left:1096.20px;top:428.12px;font-size:10.90px;color:#666c78;font-weight:400;letter-spacing:0.000px;transform:translateX(-100%);">1500</span><div class="b" style="left:1105.00px;top:367.40px;width:656.00px;height:1.20px;background:#e4e8f1;"></div><span id="t65" class="t" style="left:1096.20px;top:362.67px;font-size:10.90px;color:#666c78;font-weight:400;letter-spacing:0.000px;transform:translateX(-100%);">2000</span><svg class="b" style="left:1092px;top:330.00px" width="5" height="335.00"><rect x="1.550" y="0" width="1.30" height="335.00" fill="#62666f"/></svg><span id="t66" class="t" style="left:1111.05px;top:637.06px;font-size:12.10px;color:#5f6673;font-weight:400;letter-spacing:-0.723px;transform:translateX(-50%);">Nov 3</span><span id="t67" class="t" style="left:1157.91px;top:637.06px;font-size:12.10px;color:#5f6673;font-weight:400;letter-spacing:-0.723px;transform:translateX(-50%);">Nov 5</span><span id="t68" class="t" style="left:1204.77px;top:637.06px;font-size:12.10px;color:#5f6673;font-weight:400;letter-spacing:-0.723px;transform:translateX(-50%);">Nov 7</span><span id="t69" class="t" style="left:1251.62px;top:637.06px;font-size:12.10px;color:#5f6673;font-weight:400;letter-spacing:-0.723px;transform:translateX(-50%);">Nov 9</span><span id="t70" class="t" style="left:1298.48px;top:637.06px;font-size:12.10px;color:#5f6673;font-weight:400;letter-spacing:-0.404px;transform:translateX(-50%);">Nov 11</span><span id="t71" class="t" style="left:1345.34px;top:637.06px;font-size:12.10px;color:#5f6673;font-weight:400;letter-spacing:-0.586px;transform:translateX(-50%);">Nov 13</span><span id="t72" class="t" style="left:1392.20px;top:637.06px;font-size:12.10px;color:#5f6673;font-weight:400;letter-spacing:-0.586px;transform:translateX(-50%);">Nov 15</span><span id="t73" class="t" style="left:1439.05px;top:637.06px;font-size:12.10px;color:#5f6673;font-weight:400;letter-spacing:-0.586px;transform:translateX(-50%);">Nov 17</span><span id="t74" class="t" style="left:1485.91px;top:637.06px;font-size:12.10px;color:#5f6673;font-weight:400;letter-spacing:-0.586px;transform:translateX(-50%);">Nov 19</span><span id="t75" class="t" style="left:1532.77px;top:637.06px;font-size:12.10px;color:#5f6673;font-weight:400;letter-spacing:-0.586px;transform:translateX(-50%);">Nov 21</span><span id="t76" class="t" style="left:1579.62px;top:637.06px;font-size:12.10px;color:#5f6673;font-weight:400;letter-spacing:-0.586px;transform:translateX(-50%);">Nov 23</span><span id="t77" class="t" style="left:1626.48px;top:637.06px;font-size:12.10px;color:#5f6673;font-weight:400;letter-spacing:-0.586px;transform:translateX(-50%);">Nov 25</span><span id="t78" class="t" style="left:1673.34px;top:637.06px;font-size:12.10px;color:#5f6673;font-weight:400;letter-spacing:-0.586px;transform:translateX(-50%);">Nov 27</span><span id="t79" class="t" style="left:1720.20px;top:637.06px;font-size:12.10px;color:#5f6673;font-weight:400;letter-spacing:-0.586px;transform:translateX(-50%);">Nov 29</span><svg class="b" style="left:1000.00px;top:300.00px;" width="880.00" height="400.00" viewBox="0 0 880 400" fill="none"><path d="M105.0 326.4l1.95 -1.1l1.95 3.1l1.95 -0.9l1.95 -1.8l1.95 -6.8l1.95 8.5l1.95 -3.9l1.95 2.6l1.95 -0.1l1.95 -1.7l1.95 2.8l1.95 -3.1l1.95 1.7l1.95 1.9l1.95 -9.4l1.95 8.4l1.95 -0.9l1.95 -0.1l1.95 0.8l1.95 -0.8l1.95 -3.1l1.95 3.3l1.95 0.4l1.95 -0.1l1.95 -1.2l1.95 -1.7l1.95 4.4l1.95 -0.9l1.95 -1.2l1.95 0.9l1.95 -0.9l1.95 -0.6l1.95 2.8l1.95 -0.1l1.95 0.1l1.95 0.7l1.95 -1.5l1.95 0.6l1.95 0.6l1.95 -1.9l1.95 -4.6l1.95 6.6l1.95 -2.9l1.95 -7.4l1.95 8.3l1.95 0.0l1.95 1.6l1.95 -2.0l1.95 2.1l1.95 -0.5l1.95 -1.9l1.95 2.8l1.95 0.1l1.95 -3.2l1.95 1.5l1.95 -3.0l1.95 -0.9l1.95 1.7l1.95 2.0l1.95 -1.6l1.95 0.4l1.95 1.1l1.95 1.0l1.95 0.6l1.95 -2.5l1.95 -5.4l1.95 3.1l1.95 2.0l1.95 0.4l1.95 -1.5l1.95 1.3l1.95 -1.0l1.95 2.8l1.95 -1.2l1.95 0.6l1.95 -2.0l1.95 3.0l1.95 -0.2l1.95 -2.0l1.95 0.5l1.95 -2.4l1.95 3.6l1.95 -0.5l1.95 -0.6l1.95 -0.2l1.95 1.5l1.95 0.9l1.95 -2.3l1.95 -0.6l1.95 0.6l1.95 -1.8l1.95 0.8l1.95 -7.2l1.95 8.2l1.95 -1.4l1.95 1.8l1.95 -0.1l1.95 0.8l1.95 1.4l1.95 -1.5l1.95 1.3l1.95 -3.0l1.95 0.2l1.95 0.8l1.95 -1.0l1.95 1.6l1.95 -2.9l1.95 0.7l1.95 0.4l1.95 1.7l1.95 -5.6l1.95 5.3l1.95 1.0l1.95 -2.0l1.95 2.1l1.95 -0.5l1.95 -6.7l1.95 5.5l1.95 0.3l1.95 -0.2l1.95 0.7l1.95 -0.8l1.95 0.5l1.95 0.0l1.95 0.7l1.95 -1.7l1.95 1.2l1.95 -0.4l1.95 -0.1l1.95 -0.7l1.95 1.7l1.95 0.9l1.95 -9.9l1.95 3.9l1.95 6.3l1.95 -0.5l1.95 -1.3l1.95 -0.4l1.95 -1.4l1.95 -4.4l1.95 6.4l1.95 -1.0l1.95 1.3l1.95 -2.5l1.95 0.6l1.95 -6.0l1.95 6.5l1.95 0.4l1.95 -1.9l1.95 3.2l1.95 -0.2l1.95 -2.4l1.95 -1.6l1.95 1.6l1.95 -0.6l1.95 0.8l1.95 1.0l1.95 -1.2l1.95 2.3l1.95 1.1l1.95 -1.9l1.95 0.3l1.95 -2.4l1.95 2.0l1.95 -2.8l1.95 0.5l1.95 2.3l1.95 -1.4l1.95 2.5l1.95 0.9l1.95 -1.1l1.95 1.0l1.95 -3.5l1.95 1.8l1.95 0.9l1.95 -2.1l1.95 -3.1l1.95 1.3l1.95 1.8l1.95 0.0l1.95 2.2l1.95 -1.6l1.95 2.8l1.95 -0.4l1.95 -0.2l1.95 -1.5l1.95 -6.0l1.95 5.1l1.95 -0.7l1.95 1.2l1.95 0.8l1.95 -2.6l1.95 2.4l1.95 0.0l1.95 0.4l1.95 0.4l1.95 1.1l1.95 -2.8l1.95 1.2l1.95 -0.8l1.95 0.9l1.95 -0.5l1.95 0.0l1.95 1.1l1.95 -0.6l1.95 1.1l1.95 -1.7l1.95 0.8l1.95 0.5l1.95 0.7l1.95 -3.4l1.95 3.5l1.95 -8.6l1.95 6.8l1.95 0.0l1.95 -9.3l1.95 1.8l1.95 6.5l1.95 0.4l1.95 1.8l1.95 -0.1l1.95 -2.6l1.95 -6.9l1.95 8.5l1.95 -4.1l1.95 3.5l1.95 1.2l1.95 -2.0l1.95 2.0l1.95 0.1l1.95 0.0l1.95 -1.1l1.95 0.7l1.95 -1.1l1.95 -9.0l1.95 7.2l1.95 -0.5l1.95 0.9l1.95 1.4l1.95 -4.5l1.95 5.0l1.95 -0.3l1.95 -0.6l1.95 0.5l1.95 0.6l1.95 -0.1l1.95 0.1l1.95 -2.4l1.95 1.2l1.95 1.0l1.95 -1.5l1.95 -4.1l1.95 6.0l1.95 0.7l1.95 -5.7l1.95 4.1l1.95 -0.1l1.95 0.4l1.95 -0.8l1.95 1.4l1.95 -0.6l1.95 -1.7l1.95 1.6l1.95 -1.2l1.95 0.2l1.95 2.7l1.95 0.5l1.95 -0.2l1.95 0.1l1.95 -1.6l1.95 -1.9l1.95 -0.2l1.95 -0.5l1.95 2.9l1.95 -0.8l1.95 1.6l1.95 0.3l1.95 -0.9l1.95 0.5l1.95 -6.9l1.95 4.6l1.95 3.1l1.95 -0.2l1.95 -2.6l1.95 2.3l1.95 -2.7l1.95 2.9l1.95 -1.2l1.95 -1.4l1.95 1.0l1.95 0.7l1.95 0.1l1.95 -7.4l1.95 5.3l1.95 0.1l1.95 0.2l1.95 2.9l1.95 -0.4l1.95 -2.5l1.95 2.0l1.95 0.7l1.95 -1.9l1.95 2.0l1.95 -0.8l1.95 -1.1l1.95 -1.8l1.95 0.7l1.95 2.1l1.95 -3.1l1.95 1.2l1.95 -1.4l1.95 2.6l1.95 -0.6l1.95 -0.2l1.95 1.6l1.95 0.0l1.95 -2.0l1.95 2.4l1.95 -2.3l1.95 0.6l1.95 -3.4l1.95 2.9l1.95 -6.7l1.95 6.0l1.95 1.7l1.95 -0.8l1.95 2.2l1.95 0.1l1.95 -5.2l1.95 2.3l1.95 -1.2l1.95 0.4l1.95 2.5l1.95 -5.5l1.95 2.6l1.95 -0.1" stroke="#6e4a26" stroke-width="1.3" stroke-linejoin="round"/><path d="M105.0 326.1l1.95 1.8l1.95 0.6l1.95 -9.0l1.95 6.4l1.95 0.1l1.95 -9.4l1.95 7.6l1.95 -3.8l1.95 6.6l1.95 -0.6l1.95 0.3l1.95 -1.7l1.95 -0.1l1.95 2.7l1.95 -0.5l1.95 -0.4l1.95 -0.4l1.95 -7.0l1.95 4.1l1.95 -0.9l1.95 2.5l1.95 0.0l1.95 -0.8l1.95 2.6l1.95 -4.3l1.95 2.6l1.95 1.8l1.95 1.6l1.95 -4.7l1.95 -0.2l1.95 -4.8l1.95 6.0l1.95 1.6l1.95 0.6l1.95 -0.7l1.95 -0.6l1.95 0.5l1.95 2.3l1.95 -0.1l1.95 -9.3l1.95 9.1l1.95 -0.1l1.95 -1.9l1.95 -0.9l1.95 3.1l1.95 -2.4l1.95 -1.5l1.95 2.2l1.95 0.8l1.95 0.2l1.95 -1.1l1.95 -4.2l1.95 4.9l1.95 -1.2l1.95 -9.2l1.95 3.3l1.95 2.2l1.95 -0.2l1.95 -2.6l1.95 5.7l1.95 2.3l1.95 -1.3l1.95 -1.1l1.95 0.9l1.95 1.1l1.95 -2.9l1.95 0.4l1.95 0.6l1.95 -1.9l1.95 2.6l1.95 -4.0l1.95 4.2l1.95 1.2l1.95 -0.7l1.95 -0.3l1.95 0.7l1.95 -1.5l1.95 1.6l1.95 -2.4l1.95 -2.3l1.95 -1.3l1.95 1.9l1.95 2.8l1.95 0.7l1.95 1.6l1.95 -2.2l1.95 0.3l1.95 0.6l1.95 -7.7l1.95 7.2l1.95 -3.5l1.95 -3.6l1.95 6.4l1.95 -1.6l1.95 0.8l1.95 2.6l1.95 -0.1l1.95 -1.6l1.95 1.7l1.95 -2.4l1.95 -0.1l1.95 1.9l1.95 0.4l1.95 -1.0l1.95 -0.7l1.95 2.0l1.95 -2.8l1.95 -0.2l1.95 0.6l1.95 0.7l1.95 2.1l1.95 -5.6l1.95 5.0l1.95 -3.9l1.95 2.0l1.95 1.1l1.95 0.8l1.95 -0.3l1.95 -0.1l1.95 1.0l1.95 -1.4l1.95 1.8l1.95 -2.2l1.95 -4.1l1.95 5.7l1.95 0.0l1.95 -2.3l1.95 -3.0l1.95 5.5l1.95 -0.5l1.95 0.4l1.95 -0.4l1.95 -0.8l1.95 0.0l1.95 -1.2l1.95 -0.4l1.95 2.2l1.95 -3.6l1.95 2.2l1.95 -4.8l1.95 4.5l1.95 0.0l1.95 1.3l1.95 0.7l1.95 -0.7l1.95 1.2l1.95 -2.9l1.95 2.6l1.95 -4.0l1.95 0.8l1.95 2.5l1.95 -3.2l1.95 2.9l1.95 -5.1l1.95 2.7l1.95 -3.7l1.95 4.3l1.95 3.0l1.95 -1.6l1.95 0.4l1.95 -0.6l1.95 -1.2l1.95 0.0l1.95 -3.1l1.95 2.8l1.95 -7.3l1.95 3.9l1.95 2.8l1.95 2.0l1.95 -0.6l1.95 1.3l1.95 -1.5l1.95 -0.1l1.95 0.6l1.95 -0.6l1.95 -2.1l1.95 0.3l1.95 -0.2l1.95 2.8l1.95 0.6l1.95 1.0l1.95 -2.1l1.95 1.7l1.95 -0.1l1.95 -1.4l1.95 1.2l1.95 -1.3l1.95 0.0l1.95 2.2l1.95 -2.1l1.95 0.0l1.95 0.9l1.95 -0.6l1.95 2.0l1.95 0.5l1.95 -3.1l1.95 1.7l1.95 -6.4l1.95 5.5l1.95 0.1l1.95 1.0l1.95 0.4l1.95 -1.8l1.95 1.1l1.95 0.2l1.95 -0.1l1.95 -3.1l1.95 1.5l1.95 0.9l1.95 -0.9l1.95 2.4l1.95 -8.6l1.95 6.0l1.95 -2.8l1.95 -2.8l1.95 5.8l1.95 -0.3l1.95 0.8l1.95 1.3l1.95 0.7l1.95 -2.7l1.95 -1.9l1.95 3.2l1.95 -10.8l1.95 6.9l1.95 -1.6l1.95 -3.6l1.95 2.4l1.95 6.7l1.95 1.2l1.95 -2.0l1.95 -1.0l1.95 3.3l1.95 -3.2l1.95 -0.6l1.95 0.3l1.95 1.3l1.95 -0.4l1.95 0.2l1.95 1.0l1.95 0.5l1.95 0.4l1.95 -1.9l1.95 -0.3l1.95 0.8l1.95 -0.8l1.95 2.4l1.95 -4.5l1.95 4.0l1.95 -9.0l1.95 5.6l1.95 -2.5l1.95 5.5l1.95 -0.4l1.95 1.7l1.95 -2.9l1.95 -0.2l1.95 -1.1l1.95 2.4l1.95 -1.9l1.95 0.3l1.95 0.5l1.95 -0.1l1.95 0.3l1.95 -0.2l1.95 2.7l1.95 -1.0l1.95 -1.9l1.95 1.8l1.95 0.9l1.95 -0.9l1.95 1.0l1.95 -1.3l1.95 -2.0l1.95 3.2l1.95 -0.6l1.95 -2.1l1.95 0.8l1.95 -0.4l1.95 1.2l1.95 0.0l1.95 -3.1l1.95 1.6l1.95 -5.5l1.95 6.3l1.95 -0.8l1.95 2.6l1.95 -2.6l1.95 1.7l1.95 1.5l1.95 -0.2l1.95 0.0l1.95 -0.5l1.95 -1.9l1.95 1.8l1.95 0.2l1.95 -7.1l1.95 4.9l1.95 1.5l1.95 0.4l1.95 -1.8l1.95 0.7l1.95 -0.9l1.95 1.0l1.95 -0.2l1.95 -0.7l1.95 -3.9l1.95 -2.1l1.95 6.0l1.95 0.5l1.95 -8.1l1.95 6.7l1.95 2.0l1.95 0.7l1.95 -1.7l1.95 0.2l1.95 -0.6l1.95 -0.7l1.95 -4.9l1.95 7.4l1.95 -3.5l1.95 3.3l1.95 -2.6l1.95 1.3l1.95 -2.4l1.95 5.2l1.95 -3.1l1.95 2.3l1.95 -9.4l1.95 7.2l1.95 -4.6l1.95 1.0l1.95 -2.2l1.95 5.2l1.95 1.0l1.95 -0.8" stroke="#b07a8a" stroke-width="1.3" stroke-linejoin="round"/><path d="M105.0 327.3l1.95 -1.6l1.95 -0.1l1.95 -0.5l1.95 1.7l1.95 -2.9l1.95 -3.3l1.95 3.5l1.95 0.1l1.95 1.6l1.95 0.1l1.95 1.1l1.95 1.1l1.95 -0.2l1.95 -0.9l1.95 -0.2l1.95 -1.1l1.95 -0.6l1.95 0.7l1.95 0.0l1.95 -8.2l1.95 7.6l1.95 -0.5l1.95 0.9l1.95 1.0l1.95 0.3l1.95 0.5l1.95 -0.3l1.95 -0.5l1.95 1.7l1.95 -0.8l1.95 0.7l1.95 -3.7l1.95 -3.8l1.95 5.2l1.95 -4.4l1.95 6.2l1.95 -2.1l1.95 -0.1l1.95 2.2l1.95 -0.1l1.95 -1.9l1.95 -0.3l1.95 -3.2l1.95 2.7l1.95 3.3l1.95 -1.4l1.95 -1.4l1.95 0.1l1.95 1.1l1.95 -1.2l1.95 1.6l1.95 -10.4l1.95 9.0l1.95 -0.8l1.95 -7.5l1.95 8.7l1.95 -0.7l1.95 0.1l1.95 1.6l1.95 -2.6l1.95 2.3l1.95 -5.1l1.95 5.6l1.95 -0.1l1.95 -0.5l1.95 -2.2l1.95 1.5l1.95 -8.8l1.95 6.2l1.95 0.2l1.95 3.9l1.95 -3.1l1.95 2.1l1.95 1.6l1.95 -2.9l1.95 2.4l1.95 -1.1l1.95 -1.6l1.95 -4.9l1.95 6.2l1.95 -5.0l1.95 1.9l1.95 3.5l1.95 -0.5l1.95 -0.5l1.95 1.4l1.95 0.8l1.95 -8.3l1.95 3.7l1.95 0.3l1.95 -10.1l1.95 9.2l1.95 1.0l1.95 3.3l1.95 -3.1l1.95 2.2l1.95 0.7l1.95 -1.5l1.95 1.3l1.95 -1.0l1.95 -0.5l1.95 -1.3l1.95 -1.3l1.95 2.6l1.95 -1.4l1.95 1.7l1.95 0.1l1.95 0.9l1.95 0.8l1.95 0.5l1.95 -1.9l1.95 0.9l1.95 1.1l1.95 0.1l1.95 -2.5l1.95 -5.7l1.95 5.9l1.95 0.3l1.95 2.4l1.95 -1.1l1.95 -1.6l1.95 2.0l1.95 -1.9l1.95 -0.3l1.95 0.0l1.95 -2.4l1.95 2.7l1.95 1.4l1.95 0.5l1.95 -2.0l1.95 2.3l1.95 0.4l1.95 0.3l1.95 -3.2l1.95 2.8l1.95 -2.2l1.95 0.2l1.95 -3.0l1.95 1.0l1.95 1.4l1.95 -2.9l1.95 0.7l1.95 3.1l1.95 1.0l1.95 -0.6l1.95 1.1l1.95 -6.9l1.95 6.9l1.95 -2.1l1.95 -1.3l1.95 2.8l1.95 -4.3l1.95 1.0l1.95 -1.3l1.95 3.7l1.95 1.7l1.95 -2.4l1.95 1.0l1.95 0.3l1.95 -4.6l1.95 2.7l1.95 -2.0l1.95 4.3l1.95 -5.8l1.95 2.5l1.95 -0.9l1.95 5.3l1.95 -1.9l1.95 0.8l1.95 -5.4l1.95 3.7l1.95 -3.8l1.95 6.3l1.95 -0.3l1.95 -7.8l1.95 3.6l1.95 1.6l1.95 -1.0l1.95 2.5l1.95 -0.1l1.95 -1.3l1.95 1.7l1.95 1.1l1.95 -1.4l1.95 -0.9l1.95 -4.5l1.95 2.2l1.95 0.5l1.95 0.2l1.95 -0.3l1.95 0.7l1.95 1.6l1.95 -1.1l1.95 2.1l1.95 -0.7l1.95 1.1l1.95 -2.0l1.95 0.8l1.95 0.7l1.95 -1.0l1.95 -0.7l1.95 0.9l1.95 1.7l1.95 -0.7l1.95 -1.6l1.95 0.0l1.95 2.0l1.95 -1.5l1.95 1.4l1.95 -2.0l1.95 2.3l1.95 -2.1l1.95 2.1l1.95 -2.8l1.95 -1.7l1.95 4.0l1.95 0.4l1.95 -2.1l1.95 2.0l1.95 -2.7l1.95 -0.5l1.95 0.2l1.95 -2.0l1.95 4.1l1.95 -1.7l1.95 1.2l1.95 -9.7l1.95 11.0l1.95 -1.4l1.95 -0.7l1.95 -0.4l1.95 -0.2l1.95 0.5l1.95 2.3l1.95 -4.2l1.95 2.8l1.95 -4.0l1.95 -3.4l1.95 6.2l1.95 1.7l1.95 -1.4l1.95 2.7l1.95 -1.5l1.95 -1.9l1.95 1.4l1.95 -2.4l1.95 0.8l1.95 0.6l1.95 -1.1l1.95 1.8l1.95 0.7l1.95 -1.4l1.95 0.6l1.95 2.1l1.95 -2.0l1.95 1.3l1.95 -1.0l1.95 -8.2l1.95 6.7l1.95 1.7l1.95 -2.0l1.95 -1.0l1.95 1.3l1.95 3.2l1.95 -0.8l1.95 -0.2l1.95 0.8l1.95 -2.4l1.95 0.8l1.95 1.9l1.95 -2.8l1.95 -0.6l1.95 -4.9l1.95 5.5l1.95 2.4l1.95 -0.5l1.95 -3.4l1.95 2.3l1.95 -0.1l1.95 1.4l1.95 0.6l1.95 -2.3l1.95 1.4l1.95 -1.1l1.95 -0.5l1.95 0.4l1.95 1.3l1.95 -1.1l1.95 1.9l1.95 0.1l1.95 -5.1l1.95 5.4l1.95 -0.9l1.95 -1.5l1.95 2.1l1.95 0.5l1.95 -3.1l1.95 3.1l1.95 -1.6l1.95 0.5l1.95 -0.9l1.95 -0.9l1.95 0.9l1.95 -2.0l1.95 2.3l1.95 -4.1l1.95 2.6l1.95 -2.2l1.95 2.0l1.95 -2.2l1.95 3.5l1.95 -0.2l1.95 -2.6l1.95 4.5l1.95 -0.4l1.95 -2.2l1.95 0.0l1.95 -1.7l1.95 0.4l1.95 3.7l1.95 -2.3l1.95 -2.6l1.95 0.8l1.95 3.2l1.95 -0.7l1.95 0.4l1.95 -1.1l1.95 2.6l1.95 -2.3l1.95 -3.5l1.95 -3.1l1.95 6.4l1.95 -2.7l1.95 -4.1l1.95 4.6l1.95 2.4" stroke="#9a7a3a" stroke-width="1.3" stroke-linejoin="round"/><path d="M105.0 326.2l1.95 1.8l1.95 0.0l1.95 0.3l1.95 -0.4l1.95 -2.6l1.95 -1.2l1.95 -0.8l1.95 3.5l1.95 -2.4l1.95 -0.4l1.95 -1.9l1.95 4.9l1.95 -0.7l1.95 -1.5l1.95 2.5l1.95 0.9l1.95 -1.8l1.95 0.2l1.95 -1.5l1.95 -1.8l1.95 -1.7l1.95 1.7l1.95 1.9l1.95 1.0l1.95 -4.5l1.95 5.3l1.95 -2.1l1.95 1.8l1.95 1.1l1.95 -0.6l1.95 -5.1l1.95 3.4l1.95 -0.6l1.95 0.3l1.95 -3.1l1.95 3.4l1.95 -0.2l1.95 -4.5l1.95 4.6l1.95 3.0l1.95 -0.4l1.95 0.3l1.95 -2.4l1.95 0.9l1.95 -2.2l1.95 2.7l1.95 0.7l1.95 -2.6l1.95 2.2l1.95 -1.1l1.95 -2.5l1.95 2.6l1.95 -0.4l1.95 0.7l1.95 -0.2l1.95 -1.7l1.95 -3.2l1.95 3.6l1.95 -3.0l1.95 2.3l1.95 0.0l1.95 2.8l1.95 -0.3l1.95 0.3l1.95 -2.5l1.95 -0.1l1.95 -0.3l1.95 2.2l1.95 -5.7l1.95 4.1l1.95 -3.8l1.95 5.8l1.95 -1.0l1.95 -5.2l1.95 3.9l1.95 1.1l1.95 -0.1l1.95 0.5l1.95 -2.0l1.95 0.9l1.95 0.8l1.95 -2.4l1.95 0.8l1.95 -1.5l1.95 3.9l1.95 -0.8l1.95 0.0l1.95 -0.3l1.95 0.9l1.95 -0.6l1.95 -0.8l1.95 -6.2l1.95 0.8l1.95 2.3l1.95 0.4l1.95 1.5l1.95 3.1l1.95 -1.3l1.95 2.6l1.95 -1.8l1.95 1.3l1.95 -2.5l1.95 0.3l1.95 -2.8l1.95 3.5l1.95 -3.7l1.95 1.4l1.95 1.9l1.95 0.7l1.95 0.6l1.95 -8.4l1.95 7.5l1.95 -1.3l1.95 2.5l1.95 -2.5l1.95 1.4l1.95 0.4l1.95 -1.0l1.95 1.0l1.95 -1.0l1.95 -0.5l1.95 1.8l1.95 -0.1l1.95 -1.6l1.95 2.5l1.95 -1.7l1.95 2.0l1.95 -2.0l1.95 -1.2l1.95 2.4l1.95 -2.2l1.95 1.6l1.95 -1.7l1.95 0.2l1.95 3.1l1.95 -0.4l1.95 -0.8l1.95 -0.6l1.95 -5.3l1.95 0.1l1.95 5.3l1.95 -1.5l1.95 -0.6l1.95 -1.5l1.95 4.7l1.95 -0.5l1.95 -1.1l1.95 -0.7l1.95 0.4l1.95 -4.7l1.95 5.8l1.95 -3.5l1.95 1.9l1.95 -4.3l1.95 -1.8l1.95 4.9l1.95 1.8l1.95 -1.0l1.95 3.3l1.95 -2.8l1.95 -3.1l1.95 -0.1l1.95 1.9l1.95 -2.5l1.95 5.9l1.95 -5.4l1.95 2.6l1.95 -2.5l1.95 4.6l1.95 -0.2l1.95 0.1l1.95 0.1l1.95 -0.3l1.95 -0.8l1.95 -0.9l1.95 -0.7l1.95 -0.3l1.95 2.2l1.95 -0.4l1.95 -7.4l1.95 8.3l1.95 -0.3l1.95 1.5l1.95 -1.5l1.95 0.6l1.95 -0.3l1.95 -1.7l1.95 -0.6l1.95 -0.7l1.95 2.6l1.95 1.0l1.95 -1.9l1.95 -0.5l1.95 2.1l1.95 -0.2l1.95 0.6l1.95 0.8l1.95 -0.9l1.95 0.6l1.95 -1.4l1.95 -1.7l1.95 2.7l1.95 0.5l1.95 -2.2l1.95 -0.4l1.95 -3.8l1.95 5.2l1.95 -1.4l1.95 1.1l1.95 -5.9l1.95 6.8l1.95 0.6l1.95 -2.8l1.95 0.6l1.95 0.8l1.95 -0.2l1.95 1.9l1.95 -1.1l1.95 -1.5l1.95 -0.2l1.95 -0.1l1.95 2.5l1.95 -2.3l1.95 -3.9l1.95 0.6l1.95 0.2l1.95 2.5l1.95 0.5l1.95 1.1l1.95 0.8l1.95 -2.0l1.95 1.7l1.95 1.0l1.95 -2.4l1.95 -0.4l1.95 0.7l1.95 -5.9l1.95 6.7l1.95 -2.4l1.95 1.5l1.95 -0.5l1.95 -0.9l1.95 0.7l1.95 0.0l1.95 -0.4l1.95 3.1l1.95 -1.5l1.95 -1.8l1.95 3.2l1.95 -0.5l1.95 -2.8l1.95 -0.4l1.95 0.9l1.95 1.8l1.95 -0.1l1.95 -1.1l1.95 -0.2l1.95 1.3l1.95 -0.3l1.95 -1.2l1.95 -0.1l1.95 -5.7l1.95 5.4l1.95 0.5l1.95 -0.4l1.95 3.2l1.95 -0.9l1.95 -0.9l1.95 0.6l1.95 -2.6l1.95 1.9l1.95 -1.3l1.95 -0.1l1.95 -4.3l1.95 7.3l1.95 -2.9l1.95 0.9l1.95 -0.7l1.95 3.4l1.95 -1.8l1.95 -0.4l1.95 -0.9l1.95 -0.2l1.95 2.1l1.95 -5.2l1.95 -0.3l1.95 3.8l1.95 1.4l1.95 -0.3l1.95 0.5l1.95 -1.0l1.95 2.3l1.95 -1.8l1.95 -0.8l1.95 2.0l1.95 -1.0l1.95 -3.6l1.95 3.9l1.95 -1.8l1.95 1.6l1.95 -6.1l1.95 -0.8l1.95 7.6l1.95 -2.5l1.95 1.1l1.95 -2.6l1.95 0.4l1.95 1.9l1.95 -2.3l1.95 -0.1l1.95 1.4l1.95 -3.8l1.95 4.2l1.95 -0.1l1.95 3.0l1.95 -2.1l1.95 -0.7l1.95 1.0l1.95 0.5l1.95 -0.1l1.95 -4.0l1.95 0.5l1.95 1.7l1.95 -6.5l1.95 6.4l1.95 -0.3l1.95 2.5l1.95 0.1l1.95 -1.5l1.95 -1.0l1.95 0.1l1.95 -1.8l1.95 3.5l1.95 -3.2l1.95 0.9l1.95 0.3" stroke="#7a5a2a" stroke-width="1.3" stroke-linejoin="round"/><path d="M105.0 325.5l1.95 -5.8l1.95 7.5l1.95 0.9l1.95 -0.3l1.95 -0.6l1.95 -2.5l1.95 -1.1l1.95 -6.8l1.95 7.5l1.95 -0.1l1.95 0.2l1.95 0.1l1.95 3.0l1.95 -1.8l1.95 -1.7l1.95 3.3l1.95 -0.8l1.95 -2.0l1.95 0.0l1.95 -2.3l1.95 -2.6l1.95 8.5l1.95 -6.3l1.95 2.7l1.95 0.3l1.95 0.4l1.95 3.1l1.95 -3.0l1.95 1.2l1.95 -1.1l1.95 -0.4l1.95 -1.1l1.95 1.3l1.95 0.2l1.95 1.4l1.95 -0.6l1.95 2.0l1.95 -1.5l1.95 -7.0l1.95 7.0l1.95 -5.3l1.95 6.6l1.95 -2.1l1.95 -5.7l1.95 5.6l1.95 0.4l1.95 1.7l1.95 -1.2l1.95 -0.2l1.95 0.9l1.95 -0.1l1.95 -0.5l1.95 -3.3l1.95 1.6l1.95 -1.6l1.95 1.4l1.95 -5.0l1.95 -2.2l1.95 6.2l1.95 3.4l1.95 -1.1l1.95 -0.8l1.95 -0.2l1.95 0.5l1.95 -0.3l1.95 -3.1l1.95 2.8l1.95 0.6l1.95 -4.0l1.95 1.5l1.95 -0.3l1.95 -0.5l1.95 2.6l1.95 1.8l1.95 1.2l1.95 -1.6l1.95 0.9l1.95 -3.9l1.95 -1.1l1.95 -3.5l1.95 3.5l1.95 -0.3l1.95 -0.2l1.95 -3.3l1.95 5.6l1.95 0.7l1.95 1.3l1.95 1.8l1.95 -1.4l1.95 -3.3l1.95 -2.0l1.95 2.8l1.95 0.9l1.95 -1.5l1.95 -3.0l1.95 6.2l1.95 -2.2l1.95 0.9l1.95 0.0l1.95 -4.4l1.95 3.6l1.95 0.0l1.95 0.8l1.95 0.1l1.95 -0.8l1.95 3.0l1.95 -12.0l1.95 9.6l1.95 0.5l1.95 1.5l1.95 -1.8l1.95 2.1l1.95 -1.9l1.95 0.2l1.95 0.5l1.95 0.3l1.95 -0.1l1.95 -1.5l1.95 2.4l1.95 -1.4l1.95 2.2l1.95 -0.3l1.95 -5.7l1.95 4.8l1.95 -5.2l1.95 4.1l1.95 0.4l1.95 -7.2l1.95 6.6l1.95 -3.3l1.95 3.3l1.95 1.6l1.95 -1.7l1.95 0.1l1.95 2.4l1.95 -3.3l1.95 -0.1l1.95 -2.2l1.95 -0.3l1.95 -3.0l1.95 5.0l1.95 -2.4l1.95 4.8l1.95 -2.9l1.95 1.8l1.95 0.6l1.95 1.0l1.95 -0.9l1.95 -2.7l1.95 0.6l1.95 -4.4l1.95 1.3l1.95 -2.8l1.95 6.9l1.95 0.4l1.95 -0.4l1.95 0.3l1.95 0.2l1.95 0.4l1.95 -0.4l1.95 -1.3l1.95 -1.2l1.95 -6.9l1.95 5.3l1.95 1.8l1.95 -6.5l1.95 8.6l1.95 -0.2l1.95 0.8l1.95 1.1l1.95 0.7l1.95 -2.7l1.95 0.0l1.95 0.1l1.95 1.4l1.95 -9.1l1.95 -1.6l1.95 10.2l1.95 0.2l1.95 -3.0l1.95 1.2l1.95 3.2l1.95 -2.3l1.95 -2.7l1.95 4.7l1.95 -7.8l1.95 -5.4l1.95 6.4l1.95 2.2l1.95 1.0l1.95 -1.5l1.95 2.3l1.95 2.3l1.95 1.4l1.95 -1.8l1.95 1.8l1.95 -1.1l1.95 -4.6l1.95 5.2l1.95 0.6l1.95 -9.5l1.95 8.7l1.95 -2.0l1.95 -0.3l1.95 -0.1l1.95 3.3l1.95 -0.7l1.95 -2.4l1.95 0.6l1.95 -0.2l1.95 -4.4l1.95 3.7l1.95 0.5l1.95 0.3l1.95 2.5l1.95 -2.9l1.95 -4.3l1.95 6.1l1.95 0.6l1.95 -1.9l1.95 0.3l1.95 -0.1l1.95 -0.6l1.95 -3.8l1.95 3.8l1.95 -3.3l1.95 0.3l1.95 0.7l1.95 4.9l1.95 -0.6l1.95 -0.7l1.95 -2.1l1.95 1.0l1.95 -0.7l1.95 0.1l1.95 1.4l1.95 -10.2l1.95 5.6l1.95 0.5l1.95 5.3l1.95 0.0l1.95 -0.6l1.95 0.2l1.95 -1.0l1.95 -1.7l1.95 0.5l1.95 -3.2l1.95 2.1l1.95 -2.1l1.95 1.5l1.95 3.6l1.95 -2.6l1.95 2.2l1.95 0.6l1.95 -0.2l1.95 0.8l1.95 -2.1l1.95 -0.7l1.95 -0.3l1.95 -1.8l1.95 4.1l1.95 -0.9l1.95 0.2l1.95 0.4l1.95 1.2l1.95 -1.8l1.95 0.0l1.95 1.6l1.95 -10.9l1.95 8.9l1.95 -1.6l1.95 3.3l1.95 0.8l1.95 -1.5l1.95 -0.4l1.95 0.2l1.95 -1.4l1.95 1.1l1.95 0.4l1.95 1.7l1.95 -2.6l1.95 1.6l1.95 -2.3l1.95 2.8l1.95 -2.1l1.95 1.4l1.95 -3.3l1.95 1.5l1.95 2.1l1.95 -3.7l1.95 4.7l1.95 0.0l1.95 -1.6l1.95 1.4l1.95 -2.9l1.95 0.7l1.95 1.1l1.95 -3.6l1.95 3.5l1.95 -1.1l1.95 0.9l1.95 0.8l1.95 -1.0l1.95 -0.9l1.95 0.0l1.95 -3.1l1.95 1.1l1.95 -0.5l1.95 4.3l1.95 -1.3l1.95 -1.6l1.95 1.4l1.95 1.3l1.95 -0.4l1.95 -1.5l1.95 -0.3l1.95 1.0l1.95 -1.4l1.95 1.8l1.95 -4.5l1.95 3.3l1.95 0.1l1.95 2.4l1.95 -2.3l1.95 0.9l1.95 -0.5l1.95 1.4l1.95 -0.8l1.95 -2.4l1.95 -0.8l1.95 2.0l1.95 -1.2l1.95 -2.3l1.95 3.2l1.95 0.6l1.95 0.9" stroke="#a88a9a" stroke-width="1.3" stroke-linejoin="round"/><path d="M105.0 325.3l1.95 3.3l1.95 -0.8l1.95 -0.7l1.95 -3.7l1.95 -4.0l1.95 -6.5l1.95 4.5l1.95 1.9l1.95 -0.1l1.95 1.1l1.95 3.6l1.95 1.0l1.95 1.4l1.95 -7.6l1.95 7.7l1.95 -0.2l1.95 -1.4l1.95 -1.6l1.95 1.7l1.95 -4.3l1.95 2.0l1.95 4.7l1.95 -1.6l1.95 1.6l1.95 -0.9l1.95 1.5l1.95 -2.2l1.95 -0.3l1.95 0.3l1.95 0.1l1.95 -0.2l1.95 0.8l1.95 -0.1l1.95 1.2l1.95 -8.1l1.95 8.7l1.95 -2.5l1.95 2.7l1.95 -2.3l1.95 2.2l1.95 0.0l1.95 -1.6l1.95 0.1l1.95 -5.4l1.95 4.2l1.95 1.4l1.95 -6.8l1.95 6.2l1.95 1.5l1.95 -0.4l1.95 -0.3l1.95 -2.6l1.95 0.2l1.95 1.8l1.95 -7.1l1.95 4.8l1.95 -1.9l1.95 3.8l1.95 -3.4l1.95 3.9l1.95 -0.2l1.95 0.0l1.95 -1.2l1.95 -2.1l1.95 -0.8l1.95 0.4l1.95 -7.0l1.95 3.0l1.95 6.2l1.95 1.2l1.95 1.8l1.95 -1.2l1.95 0.0l1.95 -1.4l1.95 -0.1l1.95 -0.6l1.95 1.3l1.95 -13.9l1.95 6.6l1.95 0.1l1.95 2.6l1.95 -6.6l1.95 10.4l1.95 -0.6l1.95 1.1l1.95 0.5l1.95 0.2l1.95 -1.2l1.95 0.7l1.95 -4.4l1.95 -6.6l1.95 5.7l1.95 0.2l1.95 4.4l1.95 -3.1l1.95 3.8l1.95 2.3l1.95 -1.9l1.95 -0.1l1.95 0.9l1.95 -7.4l1.95 5.5l1.95 0.1l1.95 1.1l1.95 -1.8l1.95 0.3l1.95 1.1l1.95 2.4l1.95 -2.9l1.95 1.0l1.95 1.4l1.95 0.6l1.95 -0.7l1.95 -1.3l1.95 -0.4l1.95 -0.8l1.95 2.7l1.95 -0.9l1.95 -1.2l1.95 -6.6l1.95 6.6l1.95 2.8l1.95 -2.7l1.95 0.4l1.95 2.0l1.95 -0.4l1.95 -3.0l1.95 -6.9l1.95 8.6l1.95 1.8l1.95 -2.8l1.95 1.8l1.95 0.0l1.95 -1.2l1.95 0.6l1.95 0.1l1.95 -1.2l1.95 -0.4l1.95 -6.7l1.95 7.8l1.95 -5.3l1.95 -1.7l1.95 6.4l1.95 1.8l1.95 -2.0l1.95 1.0l1.95 -2.5l1.95 0.7l1.95 0.9l1.95 -6.4l1.95 6.6l1.95 -2.5l1.95 -2.9l1.95 4.1l1.95 -0.1l1.95 -3.8l1.95 4.7l1.95 2.2l1.95 -1.9l1.95 0.1l1.95 -4.2l1.95 0.1l1.95 0.7l1.95 -6.5l1.95 5.2l1.95 4.4l1.95 -1.7l1.95 1.0l1.95 1.6l1.95 -0.2l1.95 0.3l1.95 -2.9l1.95 -7.3l1.95 9.1l1.95 -4.0l1.95 -0.2l1.95 5.2l1.95 0.9l1.95 -9.2l1.95 7.7l1.95 0.1l1.95 0.6l1.95 0.3l1.95 -3.0l1.95 1.4l1.95 -3.3l1.95 1.6l1.95 -0.3l1.95 1.9l1.95 1.3l1.95 -0.6l1.95 -0.2l1.95 2.3l1.95 -1.9l1.95 0.3l1.95 -3.9l1.95 5.6l1.95 -1.4l1.95 1.2l1.95 -1.1l1.95 -0.4l1.95 -0.6l1.95 -0.3l1.95 1.8l1.95 -1.3l1.95 0.2l1.95 0.0l1.95 0.2l1.95 -0.9l1.95 -6.7l1.95 8.1l1.95 1.1l1.95 -1.1l1.95 0.1l1.95 -1.3l1.95 2.5l1.95 -1.9l1.95 0.6l1.95 0.3l1.95 0.4l1.95 -5.2l1.95 -1.8l1.95 2.3l1.95 -2.2l1.95 1.4l1.95 2.6l1.95 2.0l1.95 0.1l1.95 0.8l1.95 -0.7l1.95 -0.8l1.95 -0.1l1.95 -4.2l1.95 -3.0l1.95 4.7l1.95 0.1l1.95 -2.2l1.95 4.1l1.95 -0.7l1.95 1.5l1.95 0.9l1.95 0.9l1.95 -1.6l1.95 -2.3l1.95 1.6l1.95 -3.4l1.95 2.8l1.95 -1.9l1.95 -2.5l1.95 1.6l1.95 1.3l1.95 2.2l1.95 0.4l1.95 1.8l1.95 0.4l1.95 -3.7l1.95 3.1l1.95 -2.1l1.95 1.6l1.95 -2.8l1.95 -0.3l1.95 1.0l1.95 0.8l1.95 0.4l1.95 1.5l1.95 -0.4l1.95 -0.2l1.95 0.0l1.95 -3.4l1.95 -1.8l1.95 2.5l1.95 -2.6l1.95 1.4l1.95 1.6l1.95 0.8l1.95 1.9l1.95 -0.2l1.95 -1.0l1.95 1.9l1.95 -1.7l1.95 1.8l1.95 -1.9l1.95 -1.0l1.95 1.8l1.95 0.5l1.95 0.3l1.95 -0.6l1.95 -1.5l1.95 1.4l1.95 -5.0l1.95 3.9l1.95 0.9l1.95 -0.3l1.95 0.6l1.95 -6.3l1.95 4.8l1.95 -0.4l1.95 0.5l1.95 1.6l1.95 -0.5l1.95 -0.5l1.95 1.7l1.95 -0.7l1.95 -8.4l1.95 5.6l1.95 -2.0l1.95 -4.6l1.95 6.5l1.95 -3.1l1.95 -1.2l1.95 3.6l1.95 3.1l1.95 -1.2l1.95 -0.8l1.95 1.4l1.95 -0.9l1.95 -3.6l1.95 -2.5l1.95 3.2l1.95 0.2l1.95 -1.8l1.95 -5.2l1.95 8.4l1.95 3.0l1.95 -0.8l1.95 -1.6l1.95 1.1l1.95 -0.4l1.95 1.3l1.95 -2.0l1.95 -7.6l1.95 5.6l1.95 2.6l1.95 -1.2l1.95 -1.4l1.95 2.3" stroke="#6e4a26" stroke-width="1.3" stroke-linejoin="round"/><path d="M105.0 328.1l1.95 -1.6l1.95 1.4l1.95 -2.0l1.95 1.0l1.95 0.3l1.95 -2.4l1.95 -2.8l1.95 2.5l1.95 0.4l1.95 -2.0l1.95 -7.7l1.95 8.6l1.95 2.7l1.95 -2.7l1.95 3.3l1.95 -1.6l1.95 1.7l1.95 -2.0l1.95 -1.1l1.95 -0.8l1.95 -13.2l1.95 11.4l1.95 -0.8l1.95 4.6l1.95 -0.8l1.95 2.3l1.95 -6.2l1.95 6.4l1.95 -2.0l1.95 -0.4l1.95 1.9l1.95 -1.2l1.95 -1.0l1.95 -3.2l1.95 5.8l1.95 -1.0l1.95 -0.1l1.95 -0.8l1.95 3.4l1.95 -2.6l1.95 0.8l1.95 -0.1l1.95 1.3l1.95 -0.1l1.95 -2.5l1.95 0.9l1.95 -0.9l1.95 1.1l1.95 -0.2l1.95 1.4l1.95 0.5l1.95 -2.1l1.95 -1.2l1.95 3.6l1.95 -7.1l1.95 3.2l1.95 0.0l1.95 -3.9l1.95 5.0l1.95 -3.8l1.95 0.9l1.95 4.0l1.95 -1.0l1.95 1.8l1.95 -0.3l1.95 -0.3l1.95 -5.5l1.95 2.3l1.95 -0.1l1.95 -7.3l1.95 5.7l1.95 -4.1l1.95 7.7l1.95 -1.4l1.95 1.7l1.95 -0.6l1.95 -0.7l1.95 -2.8l1.95 3.9l1.95 -5.6l1.95 -6.7l1.95 10.8l1.95 -1.6l1.95 -1.1l1.95 4.5l1.95 1.4l1.95 -1.6l1.95 1.3l1.95 -0.4l1.95 0.1l1.95 0.5l1.95 -11.0l1.95 10.9l1.95 -4.3l1.95 4.1l1.95 -7.6l1.95 3.8l1.95 2.5l1.95 1.8l1.95 -0.2l1.95 -7.5l1.95 3.9l1.95 -6.0l1.95 2.8l1.95 3.4l1.95 -2.9l1.95 -2.6l1.95 9.1l1.95 -1.0l1.95 -0.2l1.95 -1.0l1.95 0.9l1.95 -0.3l1.95 1.4l1.95 0.5l1.95 -0.3l1.95 -2.2l1.95 0.3l1.95 -0.3l1.95 -0.3l1.95 3.5l1.95 -2.0l1.95 1.7l1.95 -2.5l1.95 0.3l1.95 -3.3l1.95 4.0l1.95 -3.7l1.95 5.4l1.95 -0.5l1.95 -2.4l1.95 2.1l1.95 -1.7l1.95 1.9l1.95 -0.8l1.95 -7.4l1.95 5.3l1.95 2.4l1.95 -5.2l1.95 0.4l1.95 -3.0l1.95 0.4l1.95 3.1l1.95 -1.5l1.95 2.5l1.95 2.3l1.95 -1.4l1.95 -3.8l1.95 3.6l1.95 1.9l1.95 -2.0l1.95 -7.4l1.95 7.1l1.95 -1.8l1.95 -2.5l1.95 2.9l1.95 -1.0l1.95 3.9l1.95 0.9l1.95 -0.5l1.95 -7.0l1.95 6.6l1.95 1.1l1.95 -4.9l1.95 -0.1l1.95 1.8l1.95 3.1l1.95 -1.3l1.95 0.2l1.95 1.9l1.95 -0.2l1.95 -0.6l1.95 0.2l1.95 -9.8l1.95 7.0l1.95 -16.3l1.95 15.2l1.95 -3.7l1.95 6.9l1.95 -9.6l1.95 7.8l1.95 2.8l1.95 -0.2l1.95 -0.3l1.95 -0.3l1.95 -0.6l1.95 -0.7l1.95 -9.0l1.95 8.2l1.95 -4.9l1.95 4.7l1.95 -2.1l1.95 1.6l1.95 0.9l1.95 0.8l1.95 -0.1l1.95 2.1l1.95 -0.1l1.95 0.1l1.95 -2.0l1.95 -0.8l1.95 2.0l1.95 -1.6l1.95 1.3l1.95 1.1l1.95 0.9l1.95 0.3l1.95 -1.7l1.95 0.3l1.95 1.0l1.95 -2.5l1.95 0.3l1.95 -0.6l1.95 -0.4l1.95 0.4l1.95 3.2l1.95 -1.1l1.95 -1.6l1.95 0.9l1.95 -0.3l1.95 -1.3l1.95 0.3l1.95 -4.5l1.95 3.7l1.95 -9.2l1.95 4.3l1.95 0.6l1.95 1.3l1.95 3.5l1.95 -0.5l1.95 3.4l1.95 -2.3l1.95 1.5l1.95 -2.4l1.95 -0.8l1.95 -2.8l1.95 0.1l1.95 3.4l1.95 -3.8l1.95 3.6l1.95 -0.3l1.95 0.1l1.95 2.4l1.95 -0.9l1.95 1.0l1.95 -1.7l1.95 -3.5l1.95 -3.8l1.95 7.4l1.95 -3.7l1.95 -0.1l1.95 4.1l1.95 1.3l1.95 -0.8l1.95 0.2l1.95 1.3l1.95 -1.7l1.95 -3.5l1.95 1.9l1.95 -3.6l1.95 0.1l1.95 5.5l1.95 0.7l1.95 -1.6l1.95 0.9l1.95 1.4l1.95 -1.3l1.95 1.8l1.95 -2.6l1.95 0.9l1.95 1.2l1.95 -3.7l1.95 0.6l1.95 -1.2l1.95 2.8l1.95 -0.5l1.95 0.0l1.95 2.3l1.95 -2.1l1.95 1.9l1.95 0.5l1.95 -2.6l1.95 -0.1l1.95 2.3l1.95 -0.4l1.95 -2.2l1.95 -0.1l1.95 1.8l1.95 0.8l1.95 -1.7l1.95 -4.7l1.95 4.2l1.95 -0.2l1.95 2.4l1.95 -1.1l1.95 -0.9l1.95 0.3l1.95 -0.6l1.95 1.2l1.95 0.2l1.95 0.8l1.95 -7.5l1.95 6.0l1.95 -4.6l1.95 2.9l1.95 2.1l1.95 -2.5l1.95 -4.9l1.95 -1.3l1.95 2.7l1.95 2.3l1.95 -5.4l1.95 6.3l1.95 -1.1l1.95 4.1l1.95 -2.0l1.95 0.6l1.95 -1.0l1.95 0.2l1.95 -0.2l1.95 -5.6l1.95 1.1l1.95 -1.2l1.95 8.9l1.95 -2.1l1.95 -0.4l1.95 0.1l1.95 0.2l1.95 -0.6l1.95 2.3l1.95 -6.3l1.95 -2.1l1.95 0.9l1.95 4.4l1.95 -2.1l1.95 -2.0" stroke="#c9a14a" stroke-width="1.3" stroke-linejoin="round"/><path d="M105.0 325.5l1.95 0.5l1.95 1.8l1.95 -2.6l1.95 1.1l1.95 -2.4l1.95 -0.3l1.95 -4.6l1.95 -1.8l1.95 10.0l1.95 -8.0l1.95 6.4l1.95 -8.8l1.95 10.9l1.95 -1.5l1.95 -0.1l1.95 -0.3l1.95 -0.8l1.95 -3.2l1.95 -1.1l1.95 -7.2l1.95 2.8l1.95 8.9l1.95 -3.2l1.95 -3.0l1.95 7.8l1.95 -4.7l1.95 4.2l1.95 1.6l1.95 0.2l1.95 -0.2l1.95 -0.9l1.95 -0.2l1.95 -1.8l1.95 -2.9l1.95 3.5l1.95 1.7l1.95 -5.4l1.95 5.4l1.95 -1.6l1.95 2.1l1.95 -1.2l1.95 -1.5l1.95 2.3l1.95 -10.1l1.95 9.1l1.95 0.9l1.95 -1.3l1.95 -0.5l1.95 0.3l1.95 -0.2l1.95 1.9l1.95 0.8l1.95 -6.5l1.95 5.9l1.95 -3.5l1.95 -0.2l1.95 -2.7l1.95 -1.2l1.95 0.3l1.95 6.3l1.95 -0.2l1.95 -0.3l1.95 -1.6l1.95 0.5l1.95 -2.4l1.95 1.4l1.95 -4.9l1.95 5.4l1.95 -13.0l1.95 9.6l1.95 2.6l1.95 -1.0l1.95 -1.5l1.95 4.8l1.95 1.5l1.95 -3.5l1.95 0.9l1.95 0.7l1.95 -16.5l1.95 12.6l1.95 -6.8l1.95 6.4l1.95 1.8l1.95 3.3l1.95 -0.4l1.95 1.0l1.95 -1.8l1.95 1.1l1.95 -3.6l1.95 -3.2l1.95 -7.4l1.95 0.5l1.95 -2.1l1.95 2.8l1.95 6.0l1.95 5.2l1.95 1.7l1.95 0.4l1.95 -1.4l1.95 0.5l1.95 -8.0l1.95 7.6l1.95 -9.7l1.95 8.5l1.95 -2.9l1.95 2.6l1.95 -2.5l1.95 5.4l1.95 -0.4l1.95 0.9l1.95 0.0l1.95 -2.1l1.95 2.2l1.95 -1.2l1.95 -3.9l1.95 4.4l1.95 -1.6l1.95 -0.5l1.95 3.2l1.95 -0.8l1.95 1.5l1.95 -3.2l1.95 -5.9l1.95 8.2l1.95 -2.6l1.95 0.4l1.95 -7.9l1.95 9.6l1.95 -7.4l1.95 5.1l1.95 -2.8l1.95 5.1l1.95 1.4l1.95 -2.8l1.95 2.1l1.95 -1.1l1.95 -2.8l1.95 -6.5l1.95 2.3l1.95 0.2l1.95 -3.6l1.95 6.1l1.95 -1.8l1.95 2.3l1.95 1.4l1.95 0.8l1.95 2.1l1.95 -2.5l1.95 -6.2l1.95 -2.7l1.95 5.0l1.95 -11.5l1.95 5.5l1.95 5.8l1.95 -3.7l1.95 7.9l1.95 -0.4l1.95 0.8l1.95 2.4l1.95 -0.9l1.95 -2.4l1.95 -6.7l1.95 6.8l1.95 -8.3l1.95 6.0l1.95 2.5l1.95 1.3l1.95 -0.3l1.95 -3.4l1.95 4.9l1.95 -8.2l1.95 8.9l1.95 -3.2l1.95 -2.0l1.95 -8.5l1.95 0.8l1.95 3.1l1.95 -0.6l1.95 4.9l1.95 -1.4l1.95 -5.1l1.95 10.9l1.95 -1.2l1.95 1.1l1.95 -6.0l1.95 5.8l1.95 -6.1l1.95 1.9l1.95 0.1l1.95 4.2l1.95 -6.0l1.95 4.0l1.95 1.4l1.95 -4.6l1.95 7.1l1.95 -0.3l1.95 -0.6l1.95 -0.6l1.95 -2.2l1.95 2.3l1.95 -5.9l1.95 3.6l1.95 0.3l1.95 2.7l1.95 -1.1l1.95 -0.2l1.95 -0.4l1.95 0.6l1.95 0.7l1.95 -2.1l1.95 1.7l1.95 0.7l1.95 -2.0l1.95 0.5l1.95 -0.7l1.95 0.3l1.95 2.1l1.95 -1.4l1.95 -0.1l1.95 -0.5l1.95 -0.7l1.95 -5.5l1.95 -0.3l1.95 -2.3l1.95 6.8l1.95 3.1l1.95 -6.0l1.95 4.4l1.95 -0.5l1.95 1.8l1.95 1.1l1.95 -0.5l1.95 -2.6l1.95 -6.3l1.95 5.1l1.95 -16.4l1.95 9.6l1.95 9.8l1.95 -5.9l1.95 1.9l1.95 3.7l1.95 1.5l1.95 -10.5l1.95 10.0l1.95 -6.9l1.95 5.5l1.95 -4.2l1.95 -1.6l1.95 -3.0l1.95 7.8l1.95 -2.6l1.95 3.3l1.95 -0.2l1.95 -0.3l1.95 2.0l1.95 -4.5l1.95 2.1l1.95 0.4l1.95 -3.2l1.95 -1.3l1.95 2.4l1.95 0.0l1.95 1.8l1.95 1.1l1.95 2.3l1.95 -1.6l1.95 -0.7l1.95 0.1l1.95 -0.9l1.95 0.4l1.95 1.7l1.95 -15.9l1.95 15.5l1.95 -2.1l1.95 -1.0l1.95 0.5l1.95 1.2l1.95 -0.1l1.95 0.9l1.95 2.3l1.95 -0.9l1.95 -1.8l1.95 2.3l1.95 0.2l1.95 -0.2l1.95 -2.3l1.95 1.9l1.95 -2.5l1.95 2.4l1.95 0.2l1.95 -0.3l1.95 -1.6l1.95 -5.8l1.95 6.4l1.95 -1.3l1.95 0.6l1.95 -0.3l1.95 0.4l1.95 2.2l1.95 0.0l1.95 -3.2l1.95 3.5l1.95 -0.5l1.95 -5.1l1.95 1.4l1.95 0.1l1.95 -4.3l1.95 -5.9l1.95 8.9l1.95 0.9l1.95 0.3l1.95 -1.2l1.95 3.4l1.95 -1.0l1.95 1.0l1.95 -0.9l1.95 -1.8l1.95 -5.4l1.95 1.9l1.95 0.5l1.95 -2.2l1.95 5.2l1.95 -1.8l1.95 0.7l1.95 4.0l1.95 0.0l1.95 -0.5l1.95 0.7l1.95 0.2l1.95 -6.7l1.95 -0.5l1.95 1.6l1.95 -5.0l1.95 2.2l1.95 7.4l1.95 -2.7" stroke="#a04a4a" stroke-width="1.3" stroke-linejoin="round"/><path d="M105.0 326.3l1.95 0.5l1.95 0.3l1.95 0.4l1.95 -0.9l1.95 -6.2l1.95 -5.9l1.95 -4.9l1.95 -2.2l1.95 14.6l1.95 -6.1l1.95 5.5l1.95 3.3l1.95 3.3l1.95 -7.2l1.95 5.5l1.95 -4.6l1.95 0.1l1.95 2.1l1.95 -8.5l1.95 2.7l1.95 2.1l1.95 4.8l1.95 1.5l1.95 0.3l1.95 0.8l1.95 0.1l1.95 0.4l1.95 -0.2l1.95 -3.9l1.95 1.8l1.95 -8.6l1.95 8.9l1.95 -1.1l1.95 -0.1l1.95 0.4l1.95 0.7l1.95 1.1l1.95 -1.5l1.95 1.2l1.95 0.0l1.95 -0.5l1.95 -8.3l1.95 4.0l1.95 4.7l1.95 -0.6l1.95 0.9l1.95 -1.2l1.95 0.9l1.95 1.7l1.95 -0.8l1.95 -0.5l1.95 -7.4l1.95 -0.2l1.95 1.8l1.95 -3.7l1.95 -0.5l1.95 9.8l1.95 -3.3l1.95 -1.1l1.95 5.2l1.95 -0.3l1.95 0.5l1.95 -9.3l1.95 3.9l1.95 -8.7l1.95 -0.4l1.95 3.1l1.95 5.9l1.95 -11.8l1.95 11.7l1.95 5.5l1.95 -2.8l1.95 -1.9l1.95 2.3l1.95 2.5l1.95 -4.3l1.95 -4.4l1.95 -4.8l1.95 6.7l1.95 1.2l1.95 -16.1l1.95 19.0l1.95 -2.2l1.95 4.5l1.95 -0.6l1.95 -0.7l1.95 0.0l1.95 -1.1l1.95 -5.4l1.95 -2.4l1.95 -10.0l1.95 11.6l1.95 -1.4l1.95 -1.7l1.95 4.7l1.95 3.0l1.95 3.6l1.95 -2.2l1.95 1.2l1.95 -2.8l1.95 0.1l1.95 0.1l1.95 -5.6l1.95 -0.5l1.95 7.4l1.95 -5.0l1.95 2.8l1.95 2.8l1.95 2.1l1.95 -5.3l1.95 5.2l1.95 -0.5l1.95 1.0l1.95 -2.4l1.95 -0.5l1.95 1.9l1.95 -2.0l1.95 -0.2l1.95 1.6l1.95 0.5l1.95 -1.1l1.95 0.0l1.95 0.1l1.95 0.6l1.95 0.9l1.95 -0.1l1.95 -1.0l1.95 0.8l1.95 1.3l1.95 -2.6l1.95 0.5l1.95 -3.6l1.95 3.5l1.95 0.2l1.95 -1.8l1.95 1.4l1.95 -10.3l1.95 1.7l1.95 -1.4l1.95 -1.6l1.95 1.0l1.95 2.3l1.95 5.9l1.95 0.3l1.95 3.3l1.95 -1.3l1.95 0.7l1.95 -11.5l1.95 5.1l1.95 -2.0l1.95 -14.3l1.95 11.4l1.95 1.2l1.95 5.1l1.95 2.1l1.95 0.3l1.95 -3.1l1.95 5.1l1.95 1.0l1.95 -2.0l1.95 0.1l1.95 -12.8l1.95 -3.9l1.95 12.8l1.95 -1.5l1.95 2.0l1.95 3.6l1.95 -0.1l1.95 2.7l1.95 -8.7l1.95 7.9l1.95 -1.5l1.95 2.0l1.95 -3.8l1.95 -1.9l1.95 0.2l1.95 -4.6l1.95 0.0l1.95 7.5l1.95 2.9l1.95 -2.3l1.95 0.9l1.95 0.7l1.95 -3.0l1.95 -0.1l1.95 -0.5l1.95 -13.4l1.95 13.9l1.95 -2.2l1.95 2.5l1.95 0.6l1.95 2.1l1.95 -1.3l1.95 2.0l1.95 -0.7l1.95 0.2l1.95 0.0l1.95 -1.4l1.95 1.1l1.95 -1.0l1.95 -0.6l1.95 2.0l1.95 -7.5l1.95 6.9l1.95 1.2l1.95 -1.2l1.95 -0.1l1.95 1.2l1.95 -7.7l1.95 5.4l1.95 0.6l1.95 -0.8l1.95 0.4l1.95 0.6l1.95 1.3l1.95 -4.9l1.95 4.5l1.95 -2.3l1.95 3.2l1.95 -11.0l1.95 1.1l1.95 2.8l1.95 -3.7l1.95 3.5l1.95 -0.7l1.95 5.3l1.95 -0.8l1.95 0.6l1.95 1.1l1.95 -0.5l1.95 0.5l1.95 -2.4l1.95 -0.1l1.95 1.1l1.95 -3.9l1.95 2.4l1.95 -8.3l1.95 8.2l1.95 -3.1l1.95 3.8l1.95 0.3l1.95 2.8l1.95 -0.3l1.95 -1.4l1.95 1.7l1.95 -4.3l1.95 1.3l1.95 -9.5l1.95 12.6l1.95 -5.3l1.95 -2.7l1.95 6.0l1.95 2.6l1.95 -2.1l1.95 -1.0l1.95 -0.3l1.95 1.0l1.95 -0.9l1.95 -6.9l1.95 3.3l1.95 2.8l1.95 1.2l1.95 -0.9l1.95 3.0l1.95 -8.3l1.95 1.6l1.95 7.0l1.95 -0.9l1.95 -0.8l1.95 -3.6l1.95 2.9l1.95 -2.1l1.95 -2.3l1.95 2.4l1.95 1.7l1.95 0.9l1.95 -5.5l1.95 0.8l1.95 1.0l1.95 4.7l1.95 -0.9l1.95 -0.2l1.95 1.7l1.95 0.6l1.95 -1.1l1.95 -0.2l1.95 0.3l1.95 1.3l1.95 -2.9l1.95 0.4l1.95 2.5l1.95 -1.9l1.95 -0.9l1.95 -0.5l1.95 1.5l1.95 1.3l1.95 -2.4l1.95 2.5l1.95 0.5l1.95 -0.6l1.95 -0.8l1.95 0.4l1.95 -2.0l1.95 -1.9l1.95 -3.0l1.95 4.4l1.95 -1.9l1.95 -0.9l1.95 2.2l1.95 -0.5l1.95 3.6l1.95 -0.4l1.95 -4.4l1.95 0.9l1.95 3.3l1.95 -0.7l1.95 -2.7l1.95 -3.0l1.95 -1.1l1.95 -5.9l1.95 1.4l1.95 11.0l1.95 -4.4l1.95 3.6l1.95 2.1l1.95 -0.1l1.95 -5.9l1.95 6.5l1.95 -7.0l1.95 -6.9l1.95 -2.9l1.95 -1.4l1.95 1.8l1.95 11.1l1.95 -1.8l1.95 4.1" stroke="#4a6a3a" stroke-width="1.3" stroke-linejoin="round"/><path d="M105.0 328.0l1.95 -0.5l1.95 -0.5l1.95 0.0l1.95 0.1l1.95 -1.9l1.95 -1.7l1.95 -5.4l1.95 -11.0l1.95 8.7l1.95 6.7l1.95 -9.5l1.95 3.7l1.95 6.1l1.95 -0.5l1.95 3.7l1.95 -0.5l1.95 1.4l1.95 -4.9l1.95 2.1l1.95 1.8l1.95 -5.0l1.95 -9.6l1.95 5.6l1.95 -0.3l1.95 3.1l1.95 7.3l1.95 0.0l1.95 0.2l1.95 -2.0l1.95 1.2l1.95 -1.7l1.95 0.0l1.95 -0.8l1.95 0.5l1.95 -0.9l1.95 1.4l1.95 -0.3l1.95 -5.0l1.95 6.1l1.95 1.1l1.95 -1.3l1.95 2.2l1.95 -0.3l1.95 -3.0l1.95 0.6l1.95 -9.5l1.95 12.3l1.95 -0.2l1.95 -1.4l1.95 -0.6l1.95 0.1l1.95 2.0l1.95 -4.5l1.95 1.8l1.95 -9.8l1.95 -1.7l1.95 -13.6l1.95 26.9l1.95 -11.3l1.95 7.6l1.95 4.6l1.95 -1.1l1.95 0.7l1.95 -1.1l1.95 1.3l1.95 -5.4l1.95 -13.2l1.95 17.1l1.95 -18.7l1.95 -4.6l1.95 12.2l1.95 9.5l1.95 1.0l1.95 -0.4l1.95 0.4l1.95 1.1l1.95 -2.8l1.95 1.2l1.95 -22.3l1.95 9.6l1.95 -13.5l1.95 18.2l1.95 -9.8l1.95 17.1l1.95 1.6l1.95 -2.9l1.95 2.8l1.95 -0.4l1.95 -0.5l1.95 -1.4l1.95 -6.7l1.95 -3.5l1.95 -6.6l1.95 12.4l1.95 4.3l1.95 -12.1l1.95 9.6l1.95 3.8l1.95 -0.8l1.95 0.9l1.95 -6.7l1.95 7.2l1.95 -8.8l1.95 -3.1l1.95 2.4l1.95 1.8l1.95 3.3l1.95 1.2l1.95 2.6l1.95 0.6l1.95 2.0l1.95 0.5l1.95 -1.9l1.95 2.0l1.95 -2.4l1.95 -1.2l1.95 -2.5l1.95 2.9l1.95 -3.5l1.95 4.4l1.95 -2.6l1.95 3.7l1.95 -0.1l1.95 0.9l1.95 1.0l1.95 -3.1l1.95 -2.2l1.95 -3.2l1.95 5.1l1.95 -0.8l1.95 3.8l1.95 -3.3l1.95 0.7l1.95 2.8l1.95 -2.6l1.95 0.7l1.95 -2.8l1.95 -2.5l1.95 1.7l1.95 -1.6l1.95 -3.7l1.95 -3.6l1.95 0.3l1.95 1.0l1.95 10.8l1.95 0.5l1.95 0.7l1.95 -0.6l1.95 -1.8l1.95 -3.3l1.95 3.3l1.95 -22.9l1.95 10.5l1.95 -0.4l1.95 -7.2l1.95 3.3l1.95 8.5l1.95 5.6l1.95 5.6l1.95 -2.9l1.95 2.8l1.95 -1.1l1.95 -9.3l1.95 -3.4l1.95 -8.4l1.95 4.7l1.95 -0.8l1.95 10.4l1.95 2.2l1.95 1.9l1.95 2.3l1.95 -0.7l1.95 2.3l1.95 -4.6l1.95 -7.9l1.95 -11.1l1.95 -5.5l1.95 13.5l1.95 7.0l1.95 -4.5l1.95 6.6l1.95 2.8l1.95 1.0l1.95 1.4l1.95 0.3l1.95 -3.4l1.95 1.0l1.95 -13.6l1.95 0.4l1.95 14.4l1.95 -13.0l1.95 7.8l1.95 0.9l1.95 5.1l1.95 -8.4l1.95 9.2l1.95 -1.1l1.95 0.1l1.95 1.4l1.95 -0.7l1.95 -4.6l1.95 4.7l1.95 -2.0l1.95 3.0l1.95 -2.2l1.95 -5.1l1.95 6.8l1.95 -0.6l1.95 0.4l1.95 -0.1l1.95 -4.2l1.95 -4.9l1.95 8.8l1.95 -2.9l1.95 1.6l1.95 1.6l1.95 -2.0l1.95 0.7l1.95 1.7l1.95 0.8l1.95 -1.2l1.95 0.0l1.95 -3.5l1.95 -4.0l1.95 -1.2l1.95 -9.8l1.95 0.0l1.95 10.2l1.95 3.9l1.95 -3.3l1.95 7.3l1.95 -2.3l1.95 -0.1l1.95 3.4l1.95 -11.6l1.95 -8.6l1.95 0.4l1.95 6.3l1.95 -1.7l1.95 0.7l1.95 4.8l1.95 5.6l1.95 3.0l1.95 -5.8l1.95 4.3l1.95 0.2l1.95 -3.3l1.95 -7.1l1.95 5.2l1.95 -7.0l1.95 4.8l1.95 1.1l1.95 3.4l1.95 -6.1l1.95 10.2l1.95 -1.5l1.95 -4.3l1.95 3.4l1.95 2.7l1.95 -2.9l1.95 -8.2l1.95 -0.1l1.95 0.3l1.95 7.1l1.95 2.0l1.95 0.5l1.95 1.1l1.95 0.8l1.95 -2.1l1.95 -0.2l1.95 -8.5l1.95 6.3l1.95 -0.7l1.95 -2.5l1.95 0.2l1.95 5.0l1.95 -7.1l1.95 6.1l1.95 2.0l1.95 1.6l1.95 -0.5l1.95 -1.8l1.95 2.7l1.95 -1.7l1.95 -9.1l1.95 10.9l1.95 -0.8l1.95 0.1l1.95 0.2l1.95 -1.4l1.95 1.0l1.95 0.2l1.95 -1.0l1.95 1.4l1.95 -0.8l1.95 1.2l1.95 -2.2l1.95 1.9l1.95 -1.8l1.95 0.0l1.95 1.7l1.95 -0.8l1.95 0.6l1.95 -0.6l1.95 -4.9l1.95 0.6l1.95 -5.7l1.95 -10.6l1.95 5.9l1.95 9.3l1.95 3.2l1.95 -1.7l1.95 -1.1l1.95 2.6l1.95 2.3l1.95 -1.1l1.95 0.8l1.95 -2.1l1.95 -7.1l1.95 8.5l1.95 -4.7l1.95 -4.6l1.95 3.4l1.95 -1.7l1.95 3.4l1.95 3.7l1.95 -0.9l1.95 0.4l1.95 1.4l1.95 -0.6l1.95 -9.2l1.95 4.5l1.95 -9.3l1.95 -3.9l1.95 6.4l1.95 2.9" stroke="#7a5a9a" stroke-width="1.3" stroke-linejoin="round"/><path d="M105.0 327.7l1.95 -1.2l1.95 0.5l1.95 0.2l1.95 0.1l1.95 -4.9l1.95 -8.8l1.95 -1.5l1.95 2.7l1.95 1.2l1.95 4.8l1.95 1.4l1.95 -2.0l1.95 6.5l1.95 -9.8l1.95 8.6l1.95 1.1l1.95 -0.4l1.95 -5.4l1.95 4.3l1.95 -4.1l1.95 -1.4l1.95 -6.8l1.95 8.6l1.95 5.0l1.95 -0.1l1.95 0.8l1.95 -0.4l1.95 1.7l1.95 -0.7l1.95 -2.4l1.95 -11.0l1.95 9.7l1.95 -2.8l1.95 6.2l1.95 -0.7l1.95 0.3l1.95 0.3l1.95 -0.8l1.95 1.6l1.95 -1.1l1.95 -0.7l1.95 -0.5l1.95 0.8l1.95 0.1l1.95 0.5l1.95 -1.0l1.95 0.9l1.95 0.5l1.95 0.4l1.95 -0.2l1.95 0.4l1.95 -1.6l1.95 -16.1l1.95 10.8l1.95 -5.2l1.95 8.9l1.95 -5.4l1.95 1.4l1.95 1.6l1.95 4.2l1.95 0.0l1.95 -0.1l1.95 0.9l1.95 -0.1l1.95 -1.9l1.95 -11.5l1.95 6.0l1.95 -3.1l1.95 6.6l1.95 -6.4l1.95 -1.6l1.95 5.7l1.95 4.2l1.95 1.2l1.95 -0.1l1.95 1.6l1.95 -2.4l1.95 -1.9l1.95 -18.9l1.95 5.1l1.95 0.6l1.95 14.4l1.95 -7.0l1.95 6.8l1.95 0.5l1.95 2.3l1.95 -0.2l1.95 1.1l1.95 -4.3l1.95 -8.4l1.95 5.6l1.95 -15.2l1.95 7.4l1.95 10.0l1.95 -9.5l1.95 8.2l1.95 3.3l1.95 1.9l1.95 -1.4l1.95 -0.3l1.95 -1.7l1.95 1.8l1.95 0.2l1.95 -9.4l1.95 4.9l1.95 2.4l1.95 -1.9l1.95 4.1l1.95 -0.3l1.95 0.6l1.95 0.2l1.95 1.2l1.95 -12.6l1.95 11.9l1.95 0.0l1.95 -0.6l1.95 0.8l1.95 1.0l1.95 -2.2l1.95 1.1l1.95 0.8l1.95 -7.4l1.95 6.8l1.95 -10.5l1.95 9.3l1.95 0.8l1.95 -5.2l1.95 5.0l1.95 -10.7l1.95 12.0l1.95 -1.5l1.95 0.8l1.95 -0.7l1.95 0.3l1.95 -4.5l1.95 3.9l1.95 1.6l1.95 -7.2l1.95 4.4l1.95 0.8l1.95 -4.4l1.95 -4.0l1.95 4.1l1.95 0.1l1.95 5.1l1.95 1.2l1.95 -1.2l1.95 -0.2l1.95 -3.5l1.95 -1.1l1.95 -9.2l1.95 3.0l1.95 2.0l1.95 -3.6l1.95 6.3l1.95 5.6l1.95 1.2l1.95 1.1l1.95 -1.0l1.95 -2.2l1.95 3.0l1.95 -6.5l1.95 -3.8l1.95 -9.1l1.95 12.4l1.95 4.0l1.95 -7.8l1.95 6.8l1.95 1.3l1.95 0.6l1.95 1.1l1.95 -0.8l1.95 -4.1l1.95 4.9l1.95 -3.1l1.95 -2.2l1.95 -3.0l1.95 2.7l1.95 -4.1l1.95 2.8l1.95 4.5l1.95 0.8l1.95 2.2l1.95 -0.8l1.95 -0.6l1.95 -3.1l1.95 3.4l1.95 -12.2l1.95 12.7l1.95 -7.5l1.95 4.2l1.95 2.4l1.95 -1.1l1.95 2.1l1.95 -1.2l1.95 1.0l1.95 0.1l1.95 0.7l1.95 -1.1l1.95 -0.3l1.95 -0.3l1.95 0.2l1.95 0.4l1.95 -6.4l1.95 5.6l1.95 0.3l1.95 0.9l1.95 -8.9l1.95 8.1l1.95 -6.2l1.95 6.9l1.95 0.1l1.95 -0.5l1.95 1.1l1.95 -8.5l1.95 3.0l1.95 4.2l1.95 0.1l1.95 -0.3l1.95 1.5l1.95 -1.4l1.95 -0.3l1.95 -6.8l1.95 0.5l1.95 -4.9l1.95 7.8l1.95 1.3l1.95 2.2l1.95 -1.0l1.95 1.5l1.95 0.1l1.95 -5.9l1.95 3.7l1.95 -1.7l1.95 -9.6l1.95 7.5l1.95 0.6l1.95 0.4l1.95 -6.8l1.95 5.9l1.95 4.5l1.95 1.9l1.95 -0.9l1.95 -0.3l1.95 -1.2l1.95 -1.1l1.95 -10.1l1.95 0.4l1.95 12.2l1.95 -4.3l1.95 1.6l1.95 -3.6l1.95 -2.1l1.95 4.7l1.95 3.3l1.95 0.1l1.95 0.8l1.95 -3.2l1.95 1.1l1.95 0.3l1.95 -1.0l1.95 -2.0l1.95 2.2l1.95 3.4l1.95 -0.8l1.95 0.3l1.95 -0.5l1.95 0.8l1.95 -2.6l1.95 -1.8l1.95 -0.8l1.95 -5.6l1.95 5.8l1.95 1.8l1.95 1.9l1.95 1.1l1.95 -1.0l1.95 0.0l1.95 1.9l1.95 -0.5l1.95 -12.9l1.95 12.8l1.95 0.2l1.95 -0.3l1.95 -13.9l1.95 13.1l1.95 0.0l1.95 1.2l1.95 -1.8l1.95 1.4l1.95 0.5l1.95 -0.3l1.95 -1.5l1.95 0.8l1.95 0.3l1.95 -1.5l1.95 1.3l1.95 -0.4l1.95 0.3l1.95 0.4l1.95 0.4l1.95 -1.4l1.95 1.7l1.95 -2.1l1.95 -0.1l1.95 1.1l1.95 -6.3l1.95 -2.1l1.95 -4.0l1.95 11.5l1.95 -6.3l1.95 4.0l1.95 1.2l1.95 1.4l1.95 1.9l1.95 -1.6l1.95 -0.2l1.95 -15.7l1.95 10.3l1.95 -5.2l1.95 -2.7l1.95 0.7l1.95 4.3l1.95 2.8l1.95 -3.0l1.95 4.3l1.95 4.7l1.95 -0.4l1.95 -1.6l1.95 -4.4l1.95 -4.6l1.95 -12.4l1.95 7.5l1.95 14.6l1.95 -2.0l1.95 0.2" stroke="#b0643a" stroke-width="1.3" stroke-linejoin="round"/><path d="M105.0 328.1l1.95 -0.2l1.95 -0.2l1.95 -7.8l1.95 6.2l1.95 -3.6l1.95 -11.0l1.95 -0.5l1.95 9.6l1.95 0.1l1.95 -7.3l1.95 -5.2l1.95 17.6l1.95 2.0l1.95 0.3l1.95 -3.2l1.95 0.2l1.95 1.5l1.95 -5.3l1.95 -7.4l1.95 5.2l1.95 -2.7l1.95 8.8l1.95 3.1l1.95 -1.4l1.95 -0.6l1.95 2.1l1.95 0.1l1.95 -0.4l1.95 -1.4l1.95 -3.8l1.95 1.6l1.95 2.4l1.95 0.0l1.95 -2.6l1.95 2.0l1.95 1.5l1.95 -1.1l1.95 2.1l1.95 -0.1l1.95 -1.4l1.95 -0.6l1.95 0.5l1.95 -1.4l1.95 0.9l1.95 0.0l1.95 0.8l1.95 -0.3l1.95 0.9l1.95 0.7l1.95 -1.9l1.95 -0.3l1.95 -3.4l1.95 -2.3l1.95 -2.4l1.95 1.9l1.95 -8.3l1.95 -6.8l1.95 10.2l1.95 8.8l1.95 -0.2l1.95 3.7l1.95 -3.9l1.95 1.0l1.95 1.7l1.95 -2.6l1.95 -14.2l1.95 8.9l1.95 -11.0l1.95 3.6l1.95 -2.8l1.95 9.5l1.95 4.5l1.95 2.6l1.95 2.6l1.95 -1.0l1.95 -6.3l1.95 0.1l1.95 -0.7l1.95 -1.8l1.95 3.5l1.95 3.3l1.95 -7.3l1.95 2.2l1.95 7.6l1.95 -0.9l1.95 0.3l1.95 -0.4l1.95 -2.0l1.95 -13.0l1.95 7.9l1.95 -19.7l1.95 9.1l1.95 -1.9l1.95 14.5l1.95 4.3l1.95 0.5l1.95 -3.4l1.95 -4.5l1.95 9.5l1.95 -0.7l1.95 -2.9l1.95 -1.9l1.95 -0.6l1.95 2.5l1.95 -7.7l1.95 9.5l1.95 -2.3l1.95 1.3l1.95 1.8l1.95 1.2l1.95 -1.4l1.95 0.7l1.95 -3.9l1.95 4.1l1.95 0.7l1.95 -1.2l1.95 1.5l1.95 -2.6l1.95 2.5l1.95 0.1l1.95 -0.9l1.95 0.1l1.95 -1.0l1.95 0.0l1.95 1.5l1.95 -0.8l1.95 -0.5l1.95 1.7l1.95 -1.0l1.95 -7.8l1.95 8.3l1.95 -0.3l1.95 -0.7l1.95 -0.3l1.95 -1.8l1.95 1.3l1.95 -7.0l1.95 3.8l1.95 1.7l1.95 -12.6l1.95 2.4l1.95 3.6l1.95 9.8l1.95 -1.2l1.95 1.8l1.95 -1.9l1.95 -0.4l1.95 -1.1l1.95 -0.4l1.95 -1.2l1.95 -19.6l1.95 8.4l1.95 13.8l1.95 -1.0l1.95 -3.8l1.95 4.8l1.95 -0.2l1.95 -5.6l1.95 4.7l1.95 0.1l1.95 -8.8l1.95 1.3l1.95 0.8l1.95 -5.9l1.95 3.8l1.95 3.8l1.95 3.3l1.95 1.2l1.95 3.4l1.95 -1.7l1.95 -0.2l1.95 -4.3l1.95 -7.1l1.95 8.8l1.95 3.0l1.95 -6.0l1.95 -3.7l1.95 -4.5l1.95 15.1l1.95 -2.9l1.95 2.0l1.95 -3.5l1.95 3.4l1.95 -2.2l1.95 -0.6l1.95 -10.6l1.95 10.9l1.95 -1.4l1.95 1.1l1.95 -1.3l1.95 -0.1l1.95 4.2l1.95 -0.1l1.95 1.3l1.95 0.5l1.95 -0.6l1.95 -0.9l1.95 -0.3l1.95 0.2l1.95 0.9l1.95 -0.6l1.95 1.2l1.95 -0.5l1.95 1.3l1.95 0.0l1.95 -10.6l1.95 8.5l1.95 -5.6l1.95 6.3l1.95 0.0l1.95 1.1l1.95 -1.0l1.95 -8.6l1.95 9.8l1.95 -2.0l1.95 1.5l1.95 -0.5l1.95 0.2l1.95 0.0l1.95 -5.2l1.95 -1.3l1.95 0.0l1.95 2.4l1.95 1.1l1.95 -11.5l1.95 6.9l1.95 4.4l1.95 3.4l1.95 -1.7l1.95 1.1l1.95 -1.0l1.95 -4.2l1.95 -3.0l1.95 3.9l1.95 -2.7l1.95 2.5l1.95 2.0l1.95 -4.6l1.95 -7.7l1.95 15.2l1.95 -7.4l1.95 6.1l1.95 -0.2l1.95 -0.9l1.95 -7.5l1.95 -4.3l1.95 0.5l1.95 5.1l1.95 -3.2l1.95 6.0l1.95 0.9l1.95 3.3l1.95 -0.6l1.95 -10.1l1.95 12.5l1.95 -2.8l1.95 -2.9l1.95 3.7l1.95 -0.7l1.95 -11.0l1.95 7.9l1.95 1.6l1.95 -8.5l1.95 11.1l1.95 0.4l1.95 0.9l1.95 -1.6l1.95 0.0l1.95 -5.6l1.95 -1.8l1.95 0.5l1.95 4.1l1.95 -1.9l1.95 -4.4l1.95 8.0l1.95 1.0l1.95 0.9l1.95 1.5l1.95 -0.2l1.95 0.3l1.95 -0.8l1.95 -4.0l1.95 1.1l1.95 1.8l1.95 0.5l1.95 -5.8l1.95 6.6l1.95 -0.4l1.95 0.9l1.95 0.4l1.95 -0.1l1.95 -1.1l1.95 -5.2l1.95 5.9l1.95 -0.9l1.95 -0.6l1.95 -0.3l1.95 -8.3l1.95 8.5l1.95 2.0l1.95 0.1l1.95 -1.2l1.95 -2.0l1.95 -2.0l1.95 -6.6l1.95 4.9l1.95 1.8l1.95 1.8l1.95 -12.7l1.95 8.7l1.95 3.7l1.95 0.4l1.95 1.5l1.95 -1.2l1.95 1.4l1.95 -1.0l1.95 -6.8l1.95 -0.9l1.95 1.6l1.95 4.0l1.95 -0.6l1.95 -2.0l1.95 0.9l1.95 3.8l1.95 1.0l1.95 -0.5l1.95 -1.2l1.95 1.9l1.95 -13.1l1.95 10.2l1.95 -24.0l1.95 24.9l1.95 -17.4l1.95 17.0l1.95 -4.9l1.95 5.5" stroke="#5b6fb8" stroke-width="1.3" stroke-linejoin="round"/><path d="M105.0 316.1l1.95 12.5l1.95 0.3l1.95 -1.7l1.95 -1.2l1.95 -0.1l1.95 -7.0l1.95 -13.2l1.95 5.9l1.95 -8.9l1.95 3.0l1.95 -7.5l1.95 27.9l1.95 -10.0l1.95 9.1l1.95 2.2l1.95 -8.3l1.95 8.2l1.95 -3.0l1.95 -2.2l1.95 -7.2l1.95 -11.4l1.95 11.4l1.95 -7.9l1.95 18.5l1.95 -0.8l1.95 -1.6l1.95 -6.8l1.95 10.8l1.95 -2.8l1.95 2.3l1.95 -1.8l1.95 -1.7l1.95 3.1l1.95 -1.5l1.95 1.3l1.95 -3.5l1.95 3.9l1.95 0.6l1.95 1.4l1.95 -1.5l1.95 1.1l1.95 -0.1l1.95 -2.4l1.95 2.3l1.95 -3.6l1.95 0.7l1.95 1.5l1.95 0.7l1.95 0.9l1.95 0.1l1.95 -0.2l1.95 -0.8l1.95 0.8l1.95 -7.7l1.95 4.3l1.95 -15.7l1.95 10.4l1.95 6.8l1.95 -18.0l1.95 10.9l1.95 3.9l1.95 2.5l1.95 0.8l1.95 -7.4l1.95 5.7l1.95 -10.2l1.95 -7.5l1.95 -6.6l1.95 6.8l1.95 -0.3l1.95 12.6l1.95 -9.0l1.95 11.8l1.95 3.3l1.95 1.0l1.95 -0.7l1.95 -1.8l1.95 -5.8l1.95 -10.0l1.95 -1.3l1.95 -0.6l1.95 -5.8l1.95 15.7l1.95 2.6l1.95 0.3l1.95 4.1l1.95 4.0l1.95 0.3l1.95 -2.4l1.95 -4.5l1.95 -7.2l1.95 -13.6l1.95 -8.5l1.95 28.6l1.95 -8.8l1.95 8.1l1.95 -4.1l1.95 -4.3l1.95 15.1l1.95 2.4l1.95 -9.5l1.95 6.8l1.95 0.8l1.95 -16.5l1.95 14.6l1.95 -8.5l1.95 -1.4l1.95 7.1l1.95 -0.9l1.95 2.7l1.95 3.8l1.95 -0.9l1.95 1.8l1.95 -1.3l1.95 1.4l1.95 -1.2l1.95 -0.7l1.95 -1.3l1.95 1.8l1.95 -0.3l1.95 1.5l1.95 -0.5l1.95 0.3l1.95 -0.5l1.95 -0.5l1.95 0.8l1.95 -0.5l1.95 -0.6l1.95 0.3l1.95 -0.7l1.95 -0.8l1.95 -4.7l1.95 7.8l1.95 -1.9l1.95 -8.8l1.95 9.5l1.95 -0.4l1.95 -4.7l1.95 -7.6l1.95 -12.9l1.95 -5.8l1.95 13.9l1.95 -2.4l1.95 18.0l1.95 -2.9l1.95 2.6l1.95 2.7l1.95 -1.0l1.95 0.5l1.95 -12.2l1.95 -9.0l1.95 18.9l1.95 -39.8l1.95 21.0l1.95 -4.5l1.95 -2.8l1.95 20.2l1.95 3.6l1.95 -1.2l1.95 3.9l1.95 -0.9l1.95 -4.6l1.95 4.5l1.95 -22.8l1.95 7.1l1.95 -0.8l1.95 17.7l1.95 -3.4l1.95 3.8l1.95 -0.4l1.95 2.9l1.95 -2.8l1.95 -1.4l1.95 1.8l1.95 -4.7l1.95 1.9l1.95 -29.6l1.95 4.0l1.95 14.1l1.95 0.8l1.95 11.3l1.95 0.6l1.95 3.3l1.95 -1.4l1.95 -0.9l1.95 -4.9l1.95 1.8l1.95 -10.7l1.95 -10.8l1.95 7.0l1.95 1.4l1.95 11.1l1.95 6.8l1.95 -3.5l1.95 3.1l1.95 -0.2l1.95 0.2l1.95 1.1l1.95 0.8l1.95 -0.1l1.95 -0.4l1.95 -2.3l1.95 -4.4l1.95 5.4l1.95 -0.6l1.95 2.1l1.95 0.5l1.95 -13.7l1.95 4.4l1.95 8.4l1.95 -1.0l1.95 0.1l1.95 -0.9l1.95 1.1l1.95 -0.2l1.95 0.6l1.95 0.9l1.95 -1.1l1.95 0.2l1.95 0.4l1.95 -2.7l1.95 1.0l1.95 -10.4l1.95 -19.9l1.95 25.0l1.95 -15.9l1.95 7.9l1.95 12.0l1.95 1.0l1.95 2.0l1.95 -1.1l1.95 0.6l1.95 0.0l1.95 -0.3l1.95 -2.4l1.95 -14.8l1.95 -6.2l1.95 12.1l1.95 -7.6l1.95 9.2l1.95 7.1l1.95 -2.3l1.95 3.7l1.95 0.4l1.95 -1.4l1.95 0.2l1.95 -4.6l1.95 -14.3l1.95 10.6l1.95 -1.6l1.95 -1.9l1.95 3.9l1.95 4.5l1.95 1.1l1.95 2.7l1.95 0.6l1.95 0.5l1.95 1.4l1.95 -7.4l1.95 2.8l1.95 -8.1l1.95 8.8l1.95 -8.6l1.95 6.0l1.95 4.8l1.95 0.2l1.95 -0.4l1.95 0.0l1.95 1.2l1.95 -3.2l1.95 2.6l1.95 -9.4l1.95 7.6l1.95 -9.9l1.95 5.1l1.95 1.9l1.95 2.5l1.95 1.6l1.95 1.8l1.95 -0.7l1.95 0.6l1.95 -0.6l1.95 1.0l1.95 0.2l1.95 -4.2l1.95 2.0l1.95 -1.6l1.95 0.8l1.95 2.8l1.95 -11.2l1.95 5.7l1.95 4.5l1.95 1.6l1.95 -1.6l1.95 0.7l1.95 -5.4l1.95 4.7l1.95 1.3l1.95 0.2l1.95 -0.3l1.95 -0.9l1.95 -5.2l1.95 4.9l1.95 0.1l1.95 -2.3l1.95 -3.3l1.95 -8.7l1.95 8.3l1.95 -24.1l1.95 8.8l1.95 7.0l1.95 4.2l1.95 5.0l1.95 3.6l1.95 -0.5l1.95 1.1l1.95 -1.1l1.95 -5.1l1.95 -8.1l1.95 6.7l1.95 -9.8l1.95 1.2l1.95 2.5l1.95 4.4l1.95 8.2l1.95 -0.2l1.95 0.7l1.95 1.6l1.95 -10.3l1.95 0.5l1.95 -7.1l1.95 -1.0l1.95 -13.4l1.95 20.8l1.95 -1.0l1.95 10.1" stroke="#8a3b52" stroke-width="1.5" stroke-linejoin="round"/><path d="M105.0 328.7l1.95 -1.4l1.95 1.0l1.95 -1.5l1.95 -2.2l1.95 -3.9l1.95 -7.7l1.95 -1.1l1.95 -7.1l1.95 20.4l1.95 -7.3l1.95 -3.0l1.95 10.2l1.95 1.3l1.95 1.2l1.95 0.0l1.95 -2.0l1.95 2.6l1.95 -8.8l1.95 -4.9l1.95 0.1l1.95 10.4l1.95 -13.2l1.95 -0.2l1.95 -1.9l1.95 15.9l1.95 0.5l1.95 2.0l1.95 -7.3l1.95 5.1l1.95 1.9l1.95 -0.6l1.95 -2.3l1.95 0.9l1.95 -1.4l1.95 0.4l1.95 2.1l1.95 0.6l1.95 -0.8l1.95 0.5l1.95 0.9l1.95 0.2l1.95 -1.0l1.95 -0.1l1.95 0.2l1.95 -1.0l1.95 1.6l1.95 -1.4l1.95 -0.6l1.95 2.7l1.95 -1.1l1.95 0.7l1.95 -0.7l1.95 -6.6l1.95 -10.1l1.95 5.3l1.95 -7.4l1.95 12.2l1.95 -7.2l1.95 -3.1l1.95 8.4l1.95 5.9l1.95 3.0l1.95 -0.8l1.95 -3.8l1.95 3.3l1.95 -15.0l1.95 -12.2l1.95 25.4l1.95 -10.2l1.95 6.0l1.95 -9.8l1.95 -1.0l1.95 15.1l1.95 1.3l1.95 0.7l1.95 -0.9l1.95 -2.5l1.95 -6.3l1.95 3.7l1.95 -22.9l1.95 15.3l1.95 -1.9l1.95 8.8l1.95 -2.5l1.95 10.5l1.95 -1.5l1.95 0.2l1.95 -2.0l1.95 -5.1l1.95 5.2l1.95 -3.0l1.95 0.6l1.95 -7.7l1.95 -7.7l1.95 5.4l1.95 6.6l1.95 7.7l1.95 -0.3l1.95 -0.4l1.95 -10.2l1.95 6.7l1.95 0.4l1.95 -20.6l1.95 18.0l1.95 -7.8l1.95 12.9l1.95 -6.6l1.95 5.8l1.95 -0.7l1.95 2.5l1.95 0.7l1.95 -1.1l1.95 1.9l1.95 -1.4l1.95 -0.4l1.95 0.7l1.95 0.8l1.95 -11.1l1.95 10.6l1.95 0.8l1.95 -1.3l1.95 -0.1l1.95 -0.2l1.95 0.0l1.95 0.2l1.95 -1.3l1.95 1.6l1.95 1.0l1.95 -0.8l1.95 0.2l1.95 -0.5l1.95 0.2l1.95 0.7l1.95 0.4l1.95 -1.3l1.95 -1.9l1.95 -2.0l1.95 -2.7l1.95 -2.2l1.95 1.6l1.95 -10.6l1.95 11.9l1.95 -16.2l1.95 14.1l1.95 -0.8l1.95 9.8l1.95 0.2l1.95 -9.0l1.95 1.9l1.95 -11.0l1.95 16.7l1.95 -21.2l1.95 8.0l1.95 -17.8l1.95 25.4l1.95 -5.9l1.95 8.8l1.95 1.2l1.95 1.8l1.95 -0.5l1.95 -2.3l1.95 -5.0l1.95 -21.7l1.95 27.7l1.95 -18.4l1.95 6.4l1.95 11.9l1.95 -4.9l1.95 3.5l1.95 3.1l1.95 -1.0l1.95 -2.6l1.95 -2.5l1.95 -9.4l1.95 -8.2l1.95 16.8l1.95 2.8l1.95 -13.0l1.95 12.5l1.95 -0.8l1.95 4.0l1.95 -7.2l1.95 9.5l1.95 -0.1l1.95 -2.9l1.95 -3.4l1.95 -8.6l1.95 3.7l1.95 -0.9l1.95 4.2l1.95 7.6l1.95 -6.9l1.95 3.1l1.95 3.7l1.95 -1.0l1.95 0.5l1.95 1.4l1.95 -1.3l1.95 -8.6l1.95 8.2l1.95 1.3l1.95 -1.2l1.95 -0.2l1.95 1.5l1.95 -0.8l1.95 1.0l1.95 -0.9l1.95 1.1l1.95 -0.6l1.95 -0.7l1.95 -0.6l1.95 0.8l1.95 -6.8l1.95 2.4l1.95 5.3l1.95 -0.7l1.95 -0.9l1.95 1.3l1.95 0.1l1.95 -1.2l1.95 -6.2l1.95 -11.5l1.95 12.9l1.95 -16.5l1.95 -4.8l1.95 26.2l1.95 -5.5l1.95 0.8l1.95 5.4l1.95 -1.0l1.95 0.9l1.95 -1.2l1.95 -2.1l1.95 -11.9l1.95 9.5l1.95 -12.9l1.95 11.9l1.95 0.9l1.95 4.7l1.95 -2.5l1.95 1.6l1.95 0.9l1.95 1.4l1.95 0.2l1.95 -2.5l1.95 0.3l1.95 -19.1l1.95 15.3l1.95 -5.2l1.95 -2.7l1.95 -4.9l1.95 18.6l1.95 -10.8l1.95 10.2l1.95 -0.9l1.95 2.0l1.95 -2.7l1.95 -3.3l1.95 -4.5l1.95 5.7l1.95 0.3l1.95 -1.8l1.95 1.5l1.95 1.3l1.95 4.0l1.95 -2.5l1.95 1.6l1.95 -1.0l1.95 -1.7l1.95 0.8l1.95 -8.4l1.95 -3.7l1.95 5.2l1.95 4.2l1.95 2.2l1.95 -0.2l1.95 0.9l1.95 1.2l1.95 0.1l1.95 -0.1l1.95 -0.7l1.95 -0.2l1.95 -0.7l1.95 2.6l1.95 -1.8l1.95 -0.9l1.95 1.3l1.95 0.2l1.95 -0.1l1.95 -0.4l1.95 0.3l1.95 1.4l1.95 -1.7l1.95 1.6l1.95 -1.1l1.95 -0.2l1.95 1.3l1.95 -1.7l1.95 1.7l1.95 -1.0l1.95 -0.7l1.95 1.7l1.95 -8.1l1.95 4.6l1.95 2.5l1.95 -11.4l1.95 -3.2l1.95 9.0l1.95 -4.3l1.95 -4.3l1.95 5.5l1.95 4.8l1.95 2.7l1.95 0.2l1.95 0.2l1.95 -0.5l1.95 -3.7l1.95 -4.2l1.95 -10.0l1.95 5.5l1.95 -7.7l1.95 7.2l1.95 -6.0l1.95 12.7l1.95 6.7l1.95 -0.5l1.95 1.5l1.95 -11.8l1.95 4.0l1.95 -3.9l1.95 -6.5l1.95 2.0l1.95 -3.0l1.95 0.7l1.95 12.7l1.95 -2.7" stroke="#8c8a3a" stroke-width="1.5" stroke-linejoin="round"/><path d="M105.0 328.3l1.95 -1.1l1.95 1.1l1.95 -0.6l1.95 -3.5l1.95 -10.0l1.95 8.7l1.95 -28.4l1.95 2.6l1.95 5.4l1.95 12.5l1.95 7.1l1.95 1.2l1.95 2.0l1.95 1.4l1.95 0.4l1.95 -3.2l1.95 0.6l1.95 -3.4l1.95 3.7l1.95 -7.4l1.95 7.7l1.95 -10.4l1.95 8.4l1.95 0.0l1.95 4.6l1.95 -1.5l1.95 0.5l1.95 0.0l1.95 -0.9l1.95 1.8l1.95 -13.1l1.95 3.2l1.95 -2.7l1.95 10.7l1.95 2.1l1.95 -8.3l1.95 6.8l1.95 0.9l1.95 -0.6l1.95 0.3l1.95 0.0l1.95 0.1l1.95 1.3l1.95 -1.4l1.95 -1.3l1.95 1.3l1.95 -0.1l1.95 1.7l1.95 -0.3l1.95 -0.4l1.95 -10.4l1.95 2.6l1.95 6.7l1.95 -3.0l1.95 -7.3l1.95 -6.7l1.95 5.9l1.95 1.3l1.95 1.9l1.95 7.4l1.95 0.1l1.95 0.0l1.95 1.9l1.95 -12.2l1.95 -4.3l1.95 3.9l1.95 -3.4l1.95 3.8l1.95 9.3l1.95 -5.1l1.95 -5.4l1.95 5.6l1.95 5.9l1.95 0.5l1.95 0.3l1.95 -13.1l1.95 7.2l1.95 -11.9l1.95 -12.6l1.95 0.4l1.95 26.4l1.95 1.1l1.95 -0.7l1.95 2.1l1.95 -8.0l1.95 9.1l1.95 -2.4l1.95 -6.2l1.95 -7.6l1.95 -4.2l1.95 -9.3l1.95 -0.3l1.95 4.0l1.95 14.8l1.95 -0.9l1.95 10.5l1.95 0.0l1.95 -6.7l1.95 7.1l1.95 -2.7l1.95 3.1l1.95 -16.5l1.95 10.8l1.95 5.3l1.95 0.8l1.95 -1.4l1.95 2.9l1.95 -3.0l1.95 1.1l1.95 0.5l1.95 0.5l1.95 -0.8l1.95 1.0l1.95 -0.5l1.95 -2.3l1.95 3.6l1.95 -2.1l1.95 0.2l1.95 2.2l1.95 -1.6l1.95 0.1l1.95 -10.9l1.95 10.6l1.95 1.1l1.95 -0.5l1.95 -9.2l1.95 7.0l1.95 0.5l1.95 -0.1l1.95 1.0l1.95 0.7l1.95 -0.5l1.95 1.4l1.95 -2.2l1.95 -0.7l1.95 -5.8l1.95 3.9l1.95 -8.8l1.95 -19.5l1.95 27.4l1.95 -9.4l1.95 1.0l1.95 8.3l1.95 4.1l1.95 -0.2l1.95 -0.7l1.95 -1.1l1.95 -3.8l1.95 -7.4l1.95 -0.4l1.95 -7.4l1.95 15.1l1.95 -23.2l1.95 13.9l1.95 13.1l1.95 -1.6l1.95 4.2l1.95 -0.3l1.95 -1.1l1.95 -12.7l1.95 -5.0l1.95 2.7l1.95 8.3l1.95 -10.9l1.95 -4.1l1.95 19.2l1.95 -3.3l1.95 7.5l1.95 -0.6l1.95 -0.2l1.95 -1.3l1.95 -2.2l1.95 -5.0l1.95 3.6l1.95 0.6l1.95 -7.5l1.95 -12.2l1.95 7.4l1.95 11.8l1.95 3.3l1.95 0.1l1.95 0.4l1.95 -0.7l1.95 -1.4l1.95 -2.4l1.95 -6.6l1.95 -21.5l1.95 24.3l1.95 6.3l1.95 -6.0l1.95 10.8l1.95 -3.3l1.95 1.3l1.95 -0.5l1.95 2.6l1.95 -1.8l1.95 0.9l1.95 -7.6l1.95 4.5l1.95 -8.0l1.95 10.0l1.95 0.5l1.95 -0.4l1.95 -6.8l1.95 6.9l1.95 2.1l1.95 -0.1l1.95 -0.2l1.95 -1.8l1.95 0.5l1.95 0.0l1.95 -0.1l1.95 0.9l1.95 -1.9l1.95 1.7l1.95 -0.1l1.95 0.7l1.95 -2.0l1.95 1.1l1.95 -1.6l1.95 -6.0l1.95 2.5l1.95 -22.7l1.95 19.7l1.95 2.7l1.95 -3.3l1.95 5.8l1.95 3.4l1.95 0.0l1.95 -0.2l1.95 0.4l1.95 -10.7l1.95 -7.9l1.95 0.8l1.95 -12.6l1.95 16.8l1.95 -1.6l1.95 5.4l1.95 -0.8l1.95 7.5l1.95 0.7l1.95 0.3l1.95 -0.1l1.95 -6.9l1.95 -2.9l1.95 -7.3l1.95 16.6l1.95 -16.1l1.95 10.5l1.95 5.2l1.95 0.1l1.95 2.3l1.95 -9.2l1.95 9.6l1.95 -0.7l1.95 -2.1l1.95 -13.5l1.95 4.1l1.95 7.9l1.95 0.0l1.95 -12.2l1.95 12.3l1.95 2.8l1.95 2.1l1.95 -2.8l1.95 1.3l1.95 0.5l1.95 -0.9l1.95 -8.6l1.95 9.2l1.95 -9.5l1.95 5.4l1.95 1.4l1.95 -5.7l1.95 4.3l1.95 2.8l1.95 1.6l1.95 -0.6l1.95 1.0l1.95 -1.1l1.95 0.0l1.95 -0.1l1.95 -10.0l1.95 8.7l1.95 1.9l1.95 -1.3l1.95 0.9l1.95 1.2l1.95 0.1l1.95 0.0l1.95 -1.0l1.95 -0.3l1.95 0.7l1.95 -2.2l1.95 1.1l1.95 -0.2l1.95 -0.3l1.95 0.4l1.95 0.3l1.95 2.1l1.95 -1.4l1.95 -12.0l1.95 12.2l1.95 -4.3l1.95 -2.7l1.95 -8.0l1.95 -12.4l1.95 21.1l1.95 -8.5l1.95 5.8l1.95 4.4l1.95 -2.4l1.95 7.4l1.95 -13.7l1.95 7.4l1.95 5.6l1.95 -12.5l1.95 1.0l1.95 -7.5l1.95 11.3l1.95 -9.3l1.95 0.9l1.95 16.1l1.95 -0.5l1.95 0.6l1.95 -1.4l1.95 -2.8l1.95 -5.0l1.95 6.9l1.95 -7.2l1.95 -16.6l1.95 17.9l1.95 -0.1l1.95 1.1l1.95 -5.1l1.95 7.1" stroke="#d98b9c" stroke-width="1.5" stroke-linejoin="round"/><path d="M105.0 327.8l1.95 -0.5l1.95 1.6l1.95 -0.6l1.95 -2.1l1.95 -1.7l1.95 2.4l1.95 -22.1l1.95 19.8l1.95 -27.5l1.95 -12.9l1.95 36.8l1.95 0.4l1.95 -15.1l1.95 16.2l1.95 5.0l1.95 -3.0l1.95 0.4l1.95 -0.8l1.95 -16.2l1.95 -7.9l1.95 7.2l1.95 15.5l1.95 -18.1l1.95 14.9l1.95 -3.6l1.95 5.9l1.95 5.4l1.95 -1.1l1.95 -6.4l1.95 8.2l1.95 -5.1l1.95 3.0l1.95 -7.1l1.95 3.8l1.95 2.8l1.95 0.0l1.95 1.8l1.95 -1.7l1.95 1.6l1.95 1.1l1.95 -1.5l1.95 0.4l1.95 -2.8l1.95 -0.1l1.95 -1.0l1.95 1.5l1.95 -11.1l1.95 10.5l1.95 2.8l1.95 1.6l1.95 -2.0l1.95 -0.1l1.95 -0.3l1.95 0.0l1.95 -14.8l1.95 -17.7l1.95 5.2l1.95 16.5l1.95 -17.4l1.95 23.3l1.95 3.6l1.95 -2.8l1.95 5.0l1.95 -2.4l1.95 -1.3l1.95 -7.7l1.95 -8.7l1.95 -18.1l1.95 14.0l1.95 11.9l1.95 8.5l1.95 -29.5l1.95 15.7l1.95 15.7l1.95 -0.1l1.95 0.3l1.95 0.3l1.95 -0.9l1.95 -28.1l1.95 -22.2l1.95 7.9l1.95 4.9l1.95 1.7l1.95 38.0l1.95 -12.2l1.95 11.6l1.95 -0.3l1.95 0.9l1.95 -4.2l1.95 -3.0l1.95 -7.6l1.95 -0.2l1.95 -39.3l1.95 20.1l1.95 6.9l1.95 21.5l1.95 5.1l1.95 -4.7l1.95 2.2l1.95 1.1l1.95 1.9l1.95 -2.3l1.95 -2.2l1.95 -20.4l1.95 -8.4l1.95 8.8l1.95 23.7l1.95 -11.9l1.95 8.7l1.95 0.1l1.95 3.7l1.95 0.9l1.95 -0.1l1.95 -0.9l1.95 -0.1l1.95 -0.7l1.95 0.3l1.95 -0.9l1.95 1.8l1.95 1.3l1.95 -0.4l1.95 -1.2l1.95 0.8l1.95 -9.7l1.95 9.2l1.95 1.5l1.95 -1.8l1.95 -0.9l1.95 0.4l1.95 -0.7l1.95 0.8l1.95 0.8l1.95 0.1l1.95 0.1l1.95 1.7l1.95 -1.1l1.95 -2.5l1.95 1.9l1.95 -7.5l1.95 -24.1l1.95 2.0l1.95 18.8l1.95 -22.6l1.95 27.8l1.95 -3.8l1.95 5.2l1.95 2.0l1.95 1.2l1.95 -8.8l1.95 -10.5l1.95 -11.0l1.95 -12.0l1.95 39.5l1.95 -28.8l1.95 11.8l1.95 1.4l1.95 1.4l1.95 15.2l1.95 4.2l1.95 -3.4l1.95 0.4l1.95 -11.6l1.95 -4.6l1.95 -10.5l1.95 -11.0l1.95 21.7l1.95 -4.8l1.95 11.5l1.95 2.8l1.95 1.7l1.95 6.5l1.95 -9.7l1.95 8.8l1.95 -11.8l1.95 -19.0l1.95 -10.5l1.95 -20.2l1.95 51.5l1.95 -13.3l1.95 6.7l1.95 3.2l1.95 7.0l1.95 6.7l1.95 0.6l1.95 -2.0l1.95 -5.0l1.95 -2.7l1.95 -21.3l1.95 22.9l1.95 -3.9l1.95 3.7l1.95 -13.4l1.95 2.0l1.95 18.5l1.95 -1.8l1.95 3.7l1.95 -1.1l1.95 0.8l1.95 -1.8l1.95 2.6l1.95 -3.4l1.95 -8.6l1.95 9.8l1.95 0.3l1.95 0.3l1.95 1.3l1.95 -8.3l1.95 2.6l1.95 4.6l1.95 0.9l1.95 -3.1l1.95 0.5l1.95 0.1l1.95 1.0l1.95 0.6l1.95 -5.8l1.95 5.1l1.95 1.4l1.95 -12.2l1.95 11.2l1.95 -1.7l1.95 -0.1l1.95 -14.6l1.95 14.2l1.95 -39.7l1.95 30.6l1.95 7.9l1.95 2.0l1.95 -7.0l1.95 3.3l1.95 4.3l1.95 -0.1l1.95 -8.9l1.95 -4.5l1.95 10.4l1.95 -13.8l1.95 -5.9l1.95 13.4l1.95 -17.2l1.95 14.0l1.95 1.6l1.95 3.7l1.95 7.2l1.95 -0.4l1.95 -0.7l1.95 -2.7l1.95 -3.0l1.95 -7.4l1.95 11.5l1.95 -13.8l1.95 -5.2l1.95 10.8l1.95 10.4l1.95 -3.6l1.95 4.0l1.95 -12.2l1.95 11.7l1.95 -1.9l1.95 -5.6l1.95 -3.7l1.95 -1.9l1.95 -2.0l1.95 15.6l1.95 1.2l1.95 -2.4l1.95 -8.8l1.95 11.2l1.95 0.3l1.95 -1.8l1.95 -3.5l1.95 -3.1l1.95 0.1l1.95 3.7l1.95 -5.6l1.95 -1.2l1.95 -2.0l1.95 4.0l1.95 9.2l1.95 -1.2l1.95 1.5l1.95 -0.8l1.95 0.3l1.95 1.5l1.95 -3.5l1.95 -0.7l1.95 1.4l1.95 -0.3l1.95 2.1l1.95 -1.1l1.95 0.8l1.95 1.1l1.95 -0.2l1.95 0.7l1.95 -2.3l1.95 -0.5l1.95 0.1l1.95 -0.1l1.95 0.3l1.95 0.1l1.95 -0.1l1.95 0.3l1.95 0.4l1.95 1.7l1.95 -0.9l1.95 -2.1l1.95 0.3l1.95 -8.2l1.95 -20.7l1.95 -8.0l1.95 11.3l1.95 15.8l1.95 -11.0l1.95 14.4l1.95 3.9l1.95 3.1l1.95 0.7l1.95 -1.5l1.95 -9.5l1.95 2.5l1.95 -18.3l1.95 -19.2l1.95 15.6l1.95 15.3l1.95 11.5l1.95 -4.8l1.95 6.7l1.95 1.8l1.95 -0.8l1.95 -1.4l1.95 -10.3l1.95 -14.8l1.95 -18.0l1.95 -7.4l1.95 49.7l1.95 0.0l1.95 -18.3" stroke="#6e4a26" stroke-width="1.5" stroke-linejoin="round"/><path d="M105.0 327.8l1.95 -1.2l1.95 1.1l1.95 -0.4l1.95 -7.6l1.95 5.8l1.95 -21.7l1.95 20.3l1.95 -19.1l1.95 1.1l1.95 -8.3l1.95 13.5l1.95 -2.6l1.95 14.9l1.95 4.3l1.95 -3.0l1.95 1.4l1.95 -3.9l1.95 1.0l1.95 -7.4l1.95 -31.9l1.95 32.5l1.95 -6.2l1.95 11.2l1.95 -4.3l1.95 9.6l1.95 -0.9l1.95 1.7l1.95 -1.1l1.95 -1.0l1.95 -0.7l1.95 -7.7l1.95 4.7l1.95 -0.8l1.95 4.0l1.95 -0.3l1.95 0.2l1.95 1.9l1.95 0.4l1.95 1.3l1.95 -0.7l1.95 -0.9l1.95 -0.2l1.95 -1.5l1.95 0.9l1.95 1.6l1.95 -1.9l1.95 -0.3l1.95 -0.5l1.95 2.3l1.95 1.3l1.95 -12.8l1.95 11.7l1.95 -10.9l1.95 -10.1l1.95 -5.9l1.95 5.3l1.95 -0.8l1.95 2.1l1.95 -14.7l1.95 27.9l1.95 3.4l1.95 -7.8l1.95 9.5l1.95 -4.1l1.95 -11.7l1.95 -14.8l1.95 -15.6l1.95 32.7l1.95 -32.6l1.95 18.2l1.95 11.3l1.95 2.4l1.95 13.0l1.95 2.4l1.95 -0.6l1.95 -2.3l1.95 -8.3l1.95 -0.1l1.95 -17.3l1.95 13.6l1.95 -15.8l1.95 -4.9l1.95 27.3l1.95 8.1l1.95 -0.8l1.95 -0.1l1.95 -0.2l1.95 0.7l1.95 -2.4l1.95 -28.5l1.95 -13.1l1.95 13.0l1.95 -5.5l1.95 3.1l1.95 0.8l1.95 16.4l1.95 9.9l1.95 -1.6l1.95 7.8l1.95 2.0l1.95 -1.6l1.95 -12.7l1.95 -14.6l1.95 23.7l1.95 -3.9l1.95 -6.2l1.95 7.1l1.95 -2.4l1.95 5.7l1.95 4.0l1.95 -0.2l1.95 -0.6l1.95 0.1l1.95 -8.8l1.95 7.9l1.95 0.3l1.95 -0.6l1.95 1.0l1.95 -1.4l1.95 3.7l1.95 -1.5l1.95 0.2l1.95 1.4l1.95 -1.1l1.95 0.2l1.95 -0.6l1.95 -1.4l1.95 -1.8l1.95 2.0l1.95 1.6l1.95 -1.4l1.95 1.9l1.95 0.5l1.95 -1.6l1.95 -6.6l1.95 3.5l1.95 -6.0l1.95 3.6l1.95 -17.9l1.95 12.6l1.95 -26.7l1.95 9.0l1.95 14.8l1.95 4.3l1.95 4.9l1.95 3.8l1.95 0.4l1.95 -3.1l1.95 -7.5l1.95 -7.4l1.95 2.1l1.95 -36.4l1.95 5.4l1.95 9.8l1.95 10.7l1.95 18.0l1.95 4.2l1.95 1.2l1.95 1.4l1.95 -2.7l1.95 -5.7l1.95 -21.4l1.95 28.8l1.95 -3.3l1.95 -16.5l1.95 0.9l1.95 -2.6l1.95 13.1l1.95 11.6l1.95 -1.1l1.95 -12.7l1.95 12.1l1.95 -3.1l1.95 2.6l1.95 -38.2l1.95 -4.0l1.95 1.6l1.95 24.7l1.95 9.4l1.95 -4.9l1.95 6.8l1.95 4.8l1.95 1.7l1.95 -1.4l1.95 -4.8l1.95 -6.7l1.95 -14.8l1.95 -11.7l1.95 25.4l1.95 -3.9l1.95 -0.7l1.95 5.9l1.95 11.8l1.95 1.6l1.95 -1.0l1.95 1.9l1.95 -1.7l1.95 -0.1l1.95 -7.4l1.95 7.0l1.95 -1.2l1.95 -0.1l1.95 1.4l1.95 -0.3l1.95 2.5l1.95 0.0l1.95 -1.5l1.95 1.3l1.95 -0.9l1.95 -0.1l1.95 -0.8l1.95 -3.0l1.95 1.6l1.95 0.8l1.95 0.0l1.95 1.8l1.95 0.0l1.95 0.5l1.95 -1.1l1.95 -1.6l1.95 -3.5l1.95 -11.5l1.95 -21.7l1.95 -12.1l1.95 45.1l1.95 -4.2l1.95 -3.1l1.95 7.0l1.95 1.3l1.95 2.7l1.95 -1.2l1.95 -2.3l1.95 -4.9l1.95 -14.4l1.95 16.6l1.95 -15.0l1.95 4.2l1.95 15.3l1.95 -16.1l1.95 17.2l1.95 -4.8l1.95 7.9l1.95 -1.6l1.95 0.6l1.95 -2.2l1.95 -8.4l1.95 -17.4l1.95 -9.1l1.95 34.6l1.95 -10.0l1.95 6.2l1.95 2.1l1.95 3.6l1.95 -1.0l1.95 2.4l1.95 -2.9l1.95 -2.5l1.95 5.3l1.95 -18.9l1.95 0.1l1.95 9.1l1.95 -8.3l1.95 11.8l1.95 -8.3l1.95 13.5l1.95 -0.5l1.95 1.5l1.95 -0.2l1.95 -6.6l1.95 4.9l1.95 -4.0l1.95 3.9l1.95 -4.8l1.95 -1.8l1.95 2.7l1.95 3.5l1.95 1.5l1.95 -1.5l1.95 2.6l1.95 0.4l1.95 -0.8l1.95 -6.3l1.95 6.9l1.95 -3.8l1.95 0.2l1.95 2.0l1.95 0.7l1.95 -1.7l1.95 -5.1l1.95 6.7l1.95 0.3l1.95 0.7l1.95 -1.1l1.95 -0.6l1.95 -1.4l1.95 0.9l1.95 -5.3l1.95 3.9l1.95 3.1l1.95 -2.3l1.95 1.9l1.95 0.8l1.95 -2.4l1.95 1.2l1.95 -2.2l1.95 -6.9l1.95 -17.2l1.95 -8.3l1.95 5.0l1.95 14.5l1.95 1.2l1.95 10.9l1.95 -1.1l1.95 5.5l1.95 -3.1l1.95 -1.6l1.95 -9.2l1.95 0.6l1.95 -22.8l1.95 12.8l1.95 17.7l1.95 -21.9l1.95 17.5l1.95 -3.1l1.95 11.8l1.95 -0.6l1.95 1.2l1.95 -5.1l1.95 -8.8l1.95 -5.3l1.95 -1.0l1.95 16.9l1.95 -13.5l1.95 -18.6l1.95 15.2l1.95 2.8" stroke="#3f9ca6" stroke-width="1.5" stroke-linejoin="round"/><path d="M105.0 327.5l1.95 0.0l1.95 -2.0l1.95 0.5l1.95 -15.6l1.95 -5.3l1.95 -15.4l1.95 -8.9l1.95 -5.9l1.95 46.9l1.95 -28.8l1.95 15.2l1.95 15.1l1.95 2.0l1.95 2.2l1.95 -3.3l1.95 0.8l1.95 -15.3l1.95 13.0l1.95 -43.8l1.95 37.2l1.95 3.8l1.95 2.8l1.95 -8.6l1.95 10.0l1.95 3.7l1.95 -8.5l1.95 7.1l1.95 -0.6l1.95 -10.0l1.95 5.8l1.95 3.3l1.95 -1.6l1.95 -3.9l1.95 5.9l1.95 -0.9l1.95 2.5l1.95 -0.3l1.95 0.9l1.95 0.4l1.95 -2.1l1.95 -1.7l1.95 -0.3l1.95 -14.5l1.95 15.5l1.95 -0.6l1.95 1.0l1.95 3.0l1.95 -0.4l1.95 -0.3l1.95 -0.9l1.95 -1.7l1.95 -6.1l1.95 -11.3l1.95 15.6l1.95 -19.6l1.95 10.3l1.95 -6.6l1.95 10.3l1.95 1.7l1.95 3.0l1.95 3.6l1.95 -2.0l1.95 -1.4l1.95 -0.5l1.95 -8.1l1.95 6.1l1.95 -12.6l1.95 5.9l1.95 -38.6l1.95 11.2l1.95 22.0l1.95 15.2l1.95 5.4l1.95 -3.1l1.95 -1.1l1.95 1.1l1.95 -13.3l1.95 -5.3l1.95 -28.4l1.95 -5.2l1.95 13.7l1.95 22.7l1.95 14.6l1.95 -4.3l1.95 4.4l1.95 3.4l1.95 -0.1l1.95 -6.5l1.95 3.7l1.95 -19.5l1.95 -8.7l1.95 -15.0l1.95 -1.4l1.95 25.7l1.95 17.6l1.95 1.5l1.95 0.8l1.95 -0.3l1.95 -0.3l1.95 -3.6l1.95 -15.2l1.95 12.6l1.95 -0.4l1.95 4.3l1.95 -18.3l1.95 13.2l1.95 6.8l1.95 -1.2l1.95 3.5l1.95 0.0l1.95 -2.4l1.95 1.6l1.95 1.1l1.95 -1.9l1.95 1.3l1.95 -9.7l1.95 10.0l1.95 0.2l1.95 -7.2l1.95 8.4l1.95 -1.4l1.95 0.4l1.95 -0.3l1.95 0.1l1.95 0.1l1.95 -2.7l1.95 0.5l1.95 3.3l1.95 -3.6l1.95 1.4l1.95 0.6l1.95 1.2l1.95 0.5l1.95 -1.2l1.95 -5.2l1.95 -3.6l1.95 -4.8l1.95 -28.7l1.95 -14.6l1.95 25.7l1.95 0.5l1.95 10.0l1.95 7.5l1.95 12.0l1.95 0.0l1.95 -0.5l1.95 -5.7l1.95 -8.1l1.95 8.0l1.95 -43.9l1.95 31.4l1.95 -0.9l1.95 -6.3l1.95 -3.4l1.95 28.2l1.95 -7.4l1.95 9.3l1.95 -0.1l1.95 -7.2l1.95 -5.8l1.95 -10.1l1.95 3.0l1.95 -16.7l1.95 21.5l1.95 4.5l1.95 0.8l1.95 -1.3l1.95 7.8l1.95 2.9l1.95 0.5l1.95 0.6l1.95 -4.4l1.95 -7.0l1.95 -23.0l1.95 -11.2l1.95 42.0l1.95 -9.6l1.95 -4.6l1.95 5.5l1.95 6.1l1.95 -3.6l1.95 9.7l1.95 -1.2l1.95 -5.3l1.95 -9.5l1.95 -0.5l1.95 -32.1l1.95 12.7l1.95 17.5l1.95 -1.1l1.95 14.4l1.95 2.2l1.95 1.8l1.95 2.1l1.95 -1.4l1.95 -0.4l1.95 -0.7l1.95 1.4l1.95 -2.4l1.95 0.0l1.95 -0.2l1.95 1.6l1.95 1.4l1.95 -0.6l1.95 0.9l1.95 -9.2l1.95 8.7l1.95 -1.1l1.95 -0.5l1.95 -0.9l1.95 1.4l1.95 -9.1l1.95 4.5l1.95 4.9l1.95 1.5l1.95 -1.1l1.95 1.1l1.95 -0.8l1.95 -1.3l1.95 -10.2l1.95 -15.1l1.95 11.4l1.95 -0.1l1.95 8.3l1.95 -19.9l1.95 22.3l1.95 -7.0l1.95 11.9l1.95 0.1l1.95 -0.9l1.95 -14.6l1.95 2.8l1.95 -10.3l1.95 -11.3l1.95 -6.5l1.95 36.4l1.95 -32.6l1.95 23.3l1.95 3.1l1.95 4.2l1.95 5.9l1.95 -11.4l1.95 7.9l1.95 -2.0l1.95 -15.5l1.95 14.1l1.95 -1.3l1.95 -10.6l1.95 3.7l1.95 10.1l1.95 -8.3l1.95 14.0l1.95 -2.7l1.95 0.3l1.95 2.2l1.95 -2.2l1.95 -1.8l1.95 -5.7l1.95 -7.7l1.95 -2.7l1.95 17.8l1.95 -5.4l1.95 3.6l1.95 2.8l1.95 0.1l1.95 1.7l1.95 -3.7l1.95 -4.1l1.95 2.0l1.95 2.3l1.95 -9.9l1.95 -0.1l1.95 -6.0l1.95 6.7l1.95 10.5l1.95 -11.7l1.95 12.7l1.95 1.2l1.95 1.2l1.95 -3.1l1.95 -7.5l1.95 8.7l1.95 -9.0l1.95 6.5l1.95 -0.6l1.95 -8.0l1.95 12.1l1.95 -1.2l1.95 1.0l1.95 -1.1l1.95 0.1l1.95 1.0l1.95 -1.0l1.95 -3.6l1.95 2.2l1.95 -0.2l1.95 -2.9l1.95 2.6l1.95 2.8l1.95 -1.5l1.95 2.6l1.95 -10.8l1.95 3.8l1.95 -2.5l1.95 -13.6l1.95 17.0l1.95 -10.0l1.95 -13.8l1.95 11.3l1.95 9.0l1.95 -2.3l1.95 7.6l1.95 0.2l1.95 0.8l1.95 -0.3l1.95 -8.9l1.95 -12.9l1.95 -4.4l1.95 20.1l1.95 -27.6l1.95 22.5l1.95 11.2l1.95 -9.9l1.95 -5.3l1.95 17.3l1.95 -2.7l1.95 1.3l1.95 -5.3l1.95 -6.5l1.95 -6.9l1.95 -24.9l1.95 20.0l1.95 15.3l1.95 -15.1l1.95 8.7l1.95 9.8" stroke="#3f8f74" stroke-width="1.5" stroke-linejoin="round"/><path d="M105.0 329.8l1.95 -3.0l1.95 -2.9l1.95 -3.7l1.95 -3.4l1.95 -5.3l1.95 -22.2l1.95 -8.8l1.95 0.3l1.95 6.8l1.95 2.8l1.95 3.5l1.95 5.6l1.95 9.2l1.95 0.3l1.95 1.7l1.95 -2.4l1.95 -4.8l1.95 -8.9l1.95 8.1l1.95 -4.9l1.95 0.2l1.95 1.9l1.95 1.9l1.95 3.3l1.95 3.3l1.95 0.5l1.95 1.7l1.95 -0.2l1.95 -1.6l1.95 -1.2l1.95 -2.7l1.95 3.3l1.95 -3.0l1.95 4.8l1.95 -1.9l1.95 1.4l1.95 2.2l1.95 0.6l1.95 -0.1l1.95 -2.1l1.95 0.7l1.95 -0.1l1.95 0.6l1.95 -2.0l1.95 1.5l1.95 -1.5l1.95 -0.1l1.95 1.6l1.95 -0.5l1.95 0.8l1.95 -1.5l1.95 -0.7l1.95 -2.1l1.95 -13.2l1.95 1.7l1.95 -2.9l1.95 11.3l1.95 -10.1l1.95 5.0l1.95 4.6l1.95 5.5l1.95 1.6l1.95 -0.9l1.95 0.1l1.95 -2.6l1.95 -8.6l1.95 -14.1l1.95 3.5l1.95 13.2l1.95 -16.1l1.95 17.0l1.95 4.0l1.95 1.2l1.95 2.8l1.95 1.3l1.95 -3.5l1.95 -0.4l1.95 -17.9l1.95 8.3l1.95 -15.1l1.95 -1.5l1.95 18.6l1.95 -9.7l1.95 10.4l1.95 10.3l1.95 -1.3l1.95 2.2l1.95 -1.5l1.95 -2.4l1.95 -20.2l1.95 -11.0l1.95 -7.5l1.95 26.8l1.95 -12.4l1.95 11.2l1.95 8.8l1.95 6.7l1.95 0.6l1.95 0.0l1.95 -1.7l1.95 -3.6l1.95 2.6l1.95 -4.3l1.95 -12.3l1.95 9.0l1.95 -1.6l1.95 6.2l1.95 2.5l1.95 2.9l1.95 -0.8l1.95 1.8l1.95 0.1l1.95 1.4l1.95 -2.3l1.95 -0.1l1.95 0.7l1.95 -1.1l1.95 0.8l1.95 1.5l1.95 -1.2l1.95 0.3l1.95 -0.2l1.95 0.8l1.95 -1.0l1.95 -0.2l1.95 1.7l1.95 -1.3l1.95 -0.8l1.95 -1.0l1.95 1.3l1.95 -0.1l1.95 0.4l1.95 1.0l1.95 0.0l1.95 -0.3l1.95 -2.4l1.95 -3.1l1.95 -11.9l1.95 2.5l1.95 -16.1l1.95 15.3l1.95 -6.7l1.95 3.7l1.95 10.6l1.95 5.2l1.95 0.7l1.95 1.4l1.95 0.2l1.95 -10.3l1.95 3.5l1.95 -4.3l1.95 -23.2l1.95 -0.3l1.95 5.7l1.95 8.4l1.95 8.4l1.95 7.9l1.95 4.4l1.95 -1.9l1.95 -0.1l1.95 -4.4l1.95 -3.7l1.95 -4.9l1.95 -5.8l1.95 3.5l1.95 1.8l1.95 7.4l1.95 -0.5l1.95 6.0l1.95 0.6l1.95 1.3l1.95 -3.6l1.95 -1.2l1.95 -2.1l1.95 -4.8l1.95 -8.3l1.95 -3.7l1.95 11.0l1.95 1.1l1.95 3.7l1.95 6.7l1.95 -0.3l1.95 2.6l1.95 -1.3l1.95 -8.1l1.95 -3.9l1.95 -10.5l1.95 2.6l1.95 0.0l1.95 7.4l1.95 -2.6l1.95 11.5l1.95 0.3l1.95 2.3l1.95 1.8l1.95 1.0l1.95 -0.7l1.95 0.2l1.95 0.0l1.95 -2.6l1.95 2.4l1.95 -1.6l1.95 1.9l1.95 -1.4l1.95 0.6l1.95 -0.4l1.95 0.0l1.95 0.0l1.95 0.4l1.95 0.6l1.95 -1.2l1.95 0.8l1.95 -0.7l1.95 -0.7l1.95 0.6l1.95 0.9l1.95 -1.0l1.95 1.1l1.95 -0.1l1.95 -1.1l1.95 -5.6l1.95 0.3l1.95 -13.1l1.95 -10.4l1.95 18.4l1.95 -4.4l1.95 2.4l1.95 9.8l1.95 1.9l1.95 -0.5l1.95 0.5l1.95 -0.7l1.95 1.4l1.95 -8.2l1.95 -7.4l1.95 -3.3l1.95 -4.6l1.95 0.7l1.95 14.5l1.95 5.8l1.95 -0.6l1.95 3.0l1.95 1.3l1.95 -0.4l1.95 -2.3l1.95 -5.9l1.95 1.1l1.95 -16.9l1.95 4.9l1.95 1.5l1.95 8.1l1.95 4.2l1.95 3.3l1.95 1.6l1.95 -0.3l1.95 -0.4l1.95 -0.9l1.95 -2.7l1.95 -4.0l1.95 -1.5l1.95 2.0l1.95 -4.9l1.95 10.5l1.95 0.1l1.95 2.6l1.95 0.6l1.95 -1.1l1.95 -1.1l1.95 -2.0l1.95 -6.7l1.95 -2.0l1.95 -3.6l1.95 3.0l1.95 2.0l1.95 7.4l1.95 2.4l1.95 0.1l1.95 0.8l1.95 1.1l1.95 -0.5l1.95 -0.7l1.95 0.5l1.95 -0.6l1.95 -0.7l1.95 -0.2l1.95 -0.1l1.95 1.8l1.95 -1.2l1.95 0.5l1.95 1.5l1.95 -0.5l1.95 0.8l1.95 -2.1l1.95 -0.4l1.95 -0.6l1.95 0.7l1.95 0.2l1.95 -0.5l1.95 0.6l1.95 2.0l1.95 -1.3l1.95 1.7l1.95 -0.8l1.95 -2.6l1.95 -2.9l1.95 0.3l1.95 -20.5l1.95 15.8l1.95 1.9l1.95 2.1l1.95 -9.1l1.95 11.3l1.95 -0.6l1.95 1.6l1.95 0.7l1.95 -2.9l1.95 0.1l1.95 -2.7l1.95 -5.5l1.95 -20.8l1.95 11.4l1.95 -0.4l1.95 5.5l1.95 10.1l1.95 1.4l1.95 5.6l1.95 -1.4l1.95 -1.3l1.95 -2.5l1.95 -0.7l1.95 -22.0l1.95 14.3l1.95 -17.2l1.95 1.5l1.95 15.3l1.95 3.0" stroke="#3b73c8" stroke-width="1.8" stroke-linejoin="round"/><path d="M105.0 278.7l1.95 35.4l1.95 14.6l1.95 -3.1l1.95 -8.7l1.95 -14.2l1.95 -28.9l1.95 -21.1l1.95 -24.1l1.95 16.4l1.95 14.0l1.95 20.3l1.95 19.0l1.95 15.6l1.95 6.7l1.95 0.8l1.95 -4.0l1.95 -21.4l1.95 -27.5l1.95 -36.0l1.95 -24.9l1.95 26.6l1.95 6.9l1.95 26.8l1.95 21.8l1.95 21.0l1.95 9.6l1.95 3.2l1.95 1.3l1.95 -1.2l1.95 -5.8l1.95 -1.7l1.95 -3.6l1.95 3.3l1.95 0.8l1.95 2.6l1.95 2.9l1.95 3.0l1.95 1.2l1.95 1.3l1.95 -1.2l1.95 -1.9l1.95 -2.1l1.95 -1.2l1.95 -1.4l1.95 2.2l1.95 1.2l1.95 -0.7l1.95 3.2l1.95 0.8l1.95 1.8l1.95 -3.1l1.95 -8.8l1.95 -15.0l1.95 -34.3l1.95 -19.0l1.95 -25.0l1.95 15.6l1.95 19.3l1.95 10.7l1.95 26.3l1.95 18.2l1.95 7.8l1.95 -0.1l1.95 -2.8l1.95 -10.7l1.95 -23.6l1.95 -19.4l1.95 -14.0l1.95 14.0l1.95 8.1l1.95 10.9l1.95 18.2l1.95 15.0l1.95 7.4l1.95 -0.3l1.95 -6.4l1.95 -18.2l1.95 -24.1l1.95 -21.9l1.95 -24.8l1.95 19.1l1.95 11.8l1.95 19.0l1.95 20.0l1.95 15.3l1.95 9.2l1.95 -1.9l1.95 -9.9l1.95 -26.9l1.95 -52.6l1.95 -42.4l1.95 -27.1l1.95 44.0l1.95 2.2l1.95 35.2l1.95 31.5l1.95 26.1l1.95 16.6l1.95 1.3l1.95 0.0l1.95 -14.7l1.95 -21.3l1.95 -23.9l1.95 -14.4l1.95 18.6l1.95 3.6l1.95 14.9l1.95 18.6l1.95 14.2l1.95 7.7l1.95 3.0l1.95 2.9l1.95 -2.7l1.95 -1.6l1.95 -1.9l1.95 -1.2l1.95 2.4l1.95 -0.7l1.95 1.7l1.95 0.1l1.95 1.1l1.95 2.5l1.95 -0.6l1.95 -0.8l1.95 -0.8l1.95 -0.3l1.95 -3.9l1.95 0.6l1.95 1.5l1.95 -1.9l1.95 3.7l1.95 1.0l1.95 -0.2l1.95 1.0l1.95 -2.2l1.95 -3.7l1.95 -12.9l1.95 -22.7l1.95 -17.4l1.95 -20.0l1.95 23.5l1.95 6.3l1.95 5.7l1.95 20.8l1.95 12.1l1.95 5.6l1.95 -0.1l1.95 -2.5l1.95 -14.4l1.95 -21.2l1.95 -20.5l1.95 -23.4l1.95 28.2l1.95 -0.8l1.95 13.4l1.95 21.9l1.95 10.9l1.95 8.4l1.95 -0.4l1.95 -2.5l1.95 -13.3l1.95 -23.4l1.95 -18.7l1.95 -12.5l1.95 13.5l1.95 2.0l1.95 21.7l1.95 12.2l1.95 14.0l1.95 8.0l1.95 0.3l1.95 -2.5l1.95 -15.7l1.95 -29.4l1.95 -21.2l1.95 -22.2l1.95 29.7l1.95 2.1l1.95 18.9l1.95 13.9l1.95 17.8l1.95 8.2l1.95 -2.1l1.95 -3.9l1.95 -16.8l1.95 -31.5l1.95 -32.9l1.95 -15.8l1.95 26.2l1.95 3.9l1.95 14.2l1.95 27.1l1.95 21.4l1.95 9.0l1.95 3.1l1.95 1.5l1.95 0.4l1.95 -1.1l1.95 -1.7l1.95 -2.1l1.95 0.0l1.95 0.9l1.95 2.4l1.95 1.6l1.95 -0.3l1.95 1.5l1.95 0.3l1.95 -0.7l1.95 -0.9l1.95 -3.4l1.95 -1.2l1.95 -1.3l1.95 0.8l1.95 0.8l1.95 2.6l1.95 0.5l1.95 1.9l1.95 -1.1l1.95 -0.6l1.95 -6.1l1.95 -9.3l1.95 -25.7l1.95 -19.9l1.95 -11.7l1.95 13.6l1.95 9.8l1.95 12.4l1.95 14.2l1.95 15.5l1.95 6.0l1.95 -0.7l1.95 -2.5l1.95 -13.2l1.95 -24.0l1.95 -13.1l1.95 -20.3l1.95 19.1l1.95 -0.5l1.95 14.9l1.95 19.2l1.95 11.8l1.95 8.1l1.95 0.1l1.95 -4.5l1.95 -16.7l1.95 -22.7l1.95 -21.2l1.95 -10.7l1.95 14.3l1.95 0.3l1.95 19.9l1.95 17.2l1.95 17.8l1.95 6.3l1.95 1.1l1.95 -4.3l1.95 -8.2l1.95 -17.4l1.95 -13.7l1.95 -10.8l1.95 6.3l1.95 5.7l1.95 9.1l1.95 17.9l1.95 11.1l1.95 5.3l1.95 0.5l1.95 -3.7l1.95 -8.9l1.95 -14.7l1.95 -7.1l1.95 -15.3l1.95 13.9l1.95 2.9l1.95 8.1l1.95 9.2l1.95 9.9l1.95 5.1l1.95 -0.5l1.95 1.8l1.95 0.9l1.95 -2.1l1.95 -2.9l1.95 -1.5l1.95 1.4l1.95 2.1l1.95 -1.2l1.95 2.4l1.95 2.1l1.95 -0.7l1.95 1.2l1.95 -2.2l1.95 0.8l1.95 -3.5l1.95 -0.2l1.95 -1.7l1.95 1.5l1.95 0.4l1.95 2.0l1.95 1.0l1.95 1.3l1.95 -0.3l1.95 -2.4l1.95 -7.3l1.95 -14.1l1.95 -24.3l1.95 -21.2l1.95 -19.8l1.95 19.1l1.95 6.9l1.95 13.7l1.95 21.1l1.95 14.5l1.95 7.6l1.95 1.8l1.95 -2.6l1.95 -15.1l1.95 -23.4l1.95 -25.5l1.95 -14.3l1.95 13.5l1.95 10.1l1.95 18.0l1.95 16.5l1.95 15.6l1.95 5.5l1.95 0.4l1.95 -3.1l1.95 -21.4l1.95 -28.5l1.95 22.2l1.95 -34.0l1.95 -38.0l1.95 6.6l1.95 28.8l1.95 -3.9" stroke="#d08247" stroke-width="1.75" stroke-linejoin="round"/><path d="M105.0 277.4l1.95 22.3l1.95 7.8l1.95 10.3l1.95 -10.4l1.95 -55.6l1.95 -40.1l1.95 -71.1l1.95 -15.9l1.95 44.1l1.95 13.6l1.95 34.8l1.95 45.5l1.95 29.5l1.95 18.2l1.95 2.0l1.95 -4.9l1.95 -24.2l1.95 -39.5l1.95 -38.7l1.95 -33.3l1.95 31.9l1.95 10.9l1.95 30.0l1.95 32.2l1.95 24.9l1.95 13.5l1.95 3.5l1.95 -0.8l1.95 -2.2l1.95 -9.5l1.95 -15.3l1.95 -4.3l1.95 10.5l1.95 2.0l1.95 5.3l1.95 7.2l1.95 10.4l1.95 -0.3l1.95 -0.7l1.95 -8.2l1.95 5.0l1.95 -4.8l1.95 -2.1l1.95 -5.2l1.95 4.5l1.95 0.8l1.95 4.8l1.95 3.9l1.95 -6.7l1.95 12.5l1.95 -6.5l1.95 -10.0l1.95 -22.8l1.95 -64.0l1.95 -25.4l1.95 -26.4l1.95 39.1l1.95 -26.6l1.95 55.0l1.95 34.9l1.95 30.2l1.95 11.6l1.95 1.4l1.95 -13.0l1.95 -31.7l1.95 -69.1l1.95 -56.3l1.95 -50.4l1.95 47.6l1.95 30.2l1.95 35.3l1.95 42.1l1.95 42.3l1.95 15.6l1.95 1.0l1.95 -29.4l1.95 -11.0l1.95 -58.8l1.95 -65.7l1.95 -23.0l1.95 39.6l1.95 24.8l1.95 33.3l1.95 42.2l1.95 35.5l1.95 13.3l1.95 2.3l1.95 -7.2l1.95 -48.1l1.95 -48.4l1.95 -87.8l1.95 -8.0l1.95 41.5l1.95 18.1l1.95 36.6l1.95 46.9l1.95 36.2l1.95 16.7l1.95 6.1l1.95 -1.6l1.95 -20.4l1.95 -29.8l1.95 -46.8l1.95 -11.4l1.95 21.7l1.95 -17.1l1.95 44.9l1.95 32.3l1.95 16.2l1.95 16.5l1.95 1.8l1.95 -0.6l1.95 2.1l1.95 -7.4l1.95 0.2l1.95 -6.0l1.95 4.1l1.95 -19.8l1.95 6.6l1.95 21.5l1.95 0.8l1.95 -17.2l1.95 16.9l1.95 2.1l1.95 -1.9l1.95 -7.9l1.95 -11.5l1.95 5.6l1.95 2.8l1.95 1.1l1.95 2.8l1.95 2.1l1.95 6.7l1.95 -1.3l1.95 -5.4l1.95 -7.5l1.95 -33.0l1.95 -47.0l1.95 -41.4l1.95 -32.4l1.95 34.0l1.95 14.5l1.95 25.3l1.95 37.1l1.95 32.8l1.95 16.1l1.95 -1.4l1.95 -12.5l1.95 -32.4l1.95 -68.1l1.95 -60.7l1.95 -41.7l1.95 52.3l1.95 12.8l1.95 41.6l1.95 42.7l1.95 44.8l1.95 18.9l1.95 -17.8l1.95 12.4l1.95 -27.9l1.95 -64.4l1.95 -33.2l1.95 -40.3l1.95 39.7l1.95 17.1l1.95 33.4l1.95 37.8l1.95 25.9l1.95 16.1l1.95 0.2l1.95 -6.4l1.95 -35.8l1.95 -55.2l1.95 -47.9l1.95 -34.4l1.95 36.3l1.95 15.5l1.95 32.3l1.95 46.6l1.95 30.8l1.95 18.8l1.95 -0.5l1.95 -2.5l1.95 -25.8l1.95 -41.3l1.95 -38.9l1.95 -31.0l1.95 30.5l1.95 16.5l1.95 21.5l1.95 35.1l1.95 28.6l1.95 7.7l1.95 6.0l1.95 7.1l1.95 -3.5l1.95 -6.3l1.95 0.3l1.95 -2.3l1.95 -0.4l1.95 4.0l1.95 -3.1l1.95 3.8l1.95 7.1l1.95 -0.5l1.95 -2.7l1.95 0.1l1.95 -3.1l1.95 -3.0l1.95 -1.0l1.95 -2.6l1.95 4.9l1.95 0.9l1.95 0.4l1.95 0.1l1.95 7.0l1.95 -0.3l1.95 -2.7l1.95 -15.1l1.95 -23.4l1.95 -69.5l1.95 -10.5l1.95 -45.4l1.95 49.2l1.95 4.8l1.95 29.1l1.95 29.9l1.95 28.9l1.95 17.6l1.95 -2.6l1.95 -8.7l1.95 -29.3l1.95 -75.5l1.95 -23.5l1.95 -39.9l1.95 41.9l1.95 12.3l1.95 30.0l1.95 42.2l1.95 30.1l1.95 16.9l1.95 2.9l1.95 -1.3l1.95 -20.7l1.95 -38.3l1.95 -32.3l1.95 -27.4l1.95 22.8l1.95 17.0l1.95 12.5l1.95 31.8l1.95 22.8l1.95 17.2l1.95 -4.2l1.95 1.6l1.95 -15.2l1.95 -24.3l1.95 -26.9l1.95 -14.0l1.95 2.7l1.95 23.7l1.95 1.8l1.95 30.2l1.95 19.5l1.95 3.8l1.95 0.8l1.95 -4.5l1.95 -15.7l1.95 -25.9l1.95 -22.6l1.95 -19.4l1.95 22.7l1.95 5.1l1.95 19.3l1.95 19.3l1.95 12.5l1.95 9.3l1.95 2.4l1.95 1.4l1.95 -1.5l1.95 -7.1l1.95 -3.6l1.95 0.7l1.95 -0.2l1.95 1.2l1.95 5.3l1.95 1.4l1.95 4.2l1.95 -10.5l1.95 9.2l1.95 3.3l1.95 -4.8l1.95 -2.3l1.95 -5.9l1.95 2.7l1.95 3.0l1.95 -5.1l1.95 -18.4l1.95 26.2l1.95 -0.3l1.95 3.6l1.95 -1.6l1.95 -15.3l1.95 -41.2l1.95 -28.9l1.95 -31.5l1.95 -33.4l1.95 24.6l1.95 12.0l1.95 29.3l1.95 35.1l1.95 31.1l1.95 8.9l1.95 1.9l1.95 -4.6l1.95 -25.7l1.95 -52.0l1.95 -33.2l1.95 -37.7l1.95 38.7l1.95 7.7l1.95 28.8l1.95 20.3l1.95 41.9l1.95 17.5l1.95 0.1l1.95 -12.4l1.95 -32.0l1.95 18.6l1.95 -45.8l1.95 -65.4l1.95 -58.9l1.95 15.7l1.95 -2.7l1.95 45.9" stroke="#9b7fca" stroke-width="1.75" stroke-linejoin="round"/></svg><div class="b" style="left:1061.30px;top:663.40px;width:66.20px;height:16.00px;background:#3c414d;border-radius:3px;"></div><span id="t80" class="t" style="left:1094.40px;top:665.36px;font-size:12.10px;color:#fff;font-weight:400;letter-spacing:-0.250px;transform:translateX(-50%);">11/02 17:48</span><svg class="b" style="left:1046.20px;top:704.20px;overflow:visible" width="17.00" height="15.20" fill="none" stroke="#5f6673" stroke-width="1.5" stroke-linecap="round" stroke-linejoin="round"><g transform="translate(0.750 0.750) scale(0.8158 0.7611) translate(-2.500 -3.500)" style="vector-effect:non-scaling-stroke"><path vector-effect="non-scaling-stroke" d="M2.5 3.5 H21.5 V21.5 L17.5 17.5 H2.5 Z M8 8.5 H16 M8 12.5 H16"/></g></svg><span id="t81" class="t" style="left:1071.90px;top:703.83px;font-size:14.50px;color:#5f6673;font-weight:400;letter-spacing:-0.047px;">Caption this Query</span><div class="b" style="left:208.40px;top:899.50px;width:773.00px;height:346.60px;background:#fff;border:1px solid #cdd2e5;border-radius:3.5px;box-sizing:border-box;"></div><span id="t82" class="t" style="left:219.80px;top:914.93px;font-size:14.50px;color:#2b303b;font-weight:400;letter-spacing:-1.016px;-webkit-text-stroke:0.25px #2b303b;">COUNT</span><div class="b" style="left:272.00px;top:947.40px;width:656.30px;height:1.20px;background:#e4e8f1;"></div><span id="t83" class="t" style="left:262.90px;top:942.67px;font-size:10.90px;color:#666c78;font-weight:400;letter-spacing:0.000px;transform:translateX(-100%);">250k</span><div class="b" style="left:272.00px;top:1000.00px;width:656.30px;height:1.20px;background:#e4e8f1;"></div><span id="t84" class="t" style="left:262.90px;top:995.27px;font-size:10.90px;color:#666c78;font-weight:400;letter-spacing:0.000px;transform:translateX(-100%);">200k</span><svg class="b" style="left:258px;top:911.00px" width="5" height="130.00"><rect x="2.250" y="0" width="1.30" height="130.00" fill="#62666f"/></svg><svg class="b" style="left:0.00px;top:0.00px;" width="1000.00" height="1040.00" viewBox="0 0 1000 1040" fill="none"><polyline points="283.0,1063.7 285.8,1018.7 287.4,984.8 289.0,1012.0 290.5,1030.1 292.5,1063.7 306.3,1063.7 309.1,1038.4 310.7,1008.0 312.3,1032.3 313.8,1048.6 315.8,1063.7 379.0,1063.7 381.7,1041.1 382.5,1063.7 383.3,1011.1 384.9,1035.1 385.3,1044.7 386.5,1051.1 386.9,1015.3 388.4,1063.7 388.4,1038.8 390.0,1054.5 392.0,1063.7 400.7,1063.7 403.5,1023.2 404.6,1063.7 405.0,990.1 406.6,1016.6 407.4,1032.2 408.2,1034.3 409.0,1000.6 410.2,1063.7 410.6,1025.8 412.1,1042.7 414.1,1063.7 423.6,1063.7 426.3,1063.7 426.3,1027.7 427.9,995.3 429.1,1024.1 429.5,1021.2 430.7,991.1 431.1,1038.5 432.3,1017.5 433.1,1063.7 433.8,1035.1 435.8,1063.7 447.3,1063.7 450.0,998.2 451.6,960.6 453.2,990.7 454.8,1010.7 456.7,1063.7 542.8,1063.7 545.6,1043.8 547.2,1014.3 548.7,1037.9 550.3,1053.6 552.3,1063.7 564.5,1063.7 567.3,1029.5 568.9,997.4 570.4,1023.1 572.0,1040.2 574.0,1063.7 593.3,1063.7 596.1,1037.5 597.7,1006.9 599.3,1031.4 600.8,1047.7 602.8,1063.7 611.1,1063.7 613.9,1036.6 614.7,1063.7 615.5,1005.9 617.0,1030.5 617.4,1041.1 618.6,1046.9 619.0,1011.1 620.6,1063.7 620.6,1035.1 622.2,1051.1 624.1,1063.7 636.8,1063.7 639.5,1054.5 641.1,1026.9 642.7,1049.0 644.3,1063.7 646.2,1063.7 728.4,1063.7 731.1,1044.7 732.7,1015.3 734.3,1038.8 735.9,1054.5 737.8,1063.7 754.0,1063.7 756.8,1052.7 758.4,1024.8 759.9,1047.1 761.5,1062.0 763.5,1063.7 869.3,1063.7 872.1,1051.8 873.6,1023.7 875.2,1046.2 876.8,1061.2 878.8,1063.7 894.2,1063.7 896.9,1043.8 898.5,1014.3 898.9,1063.7 900.1,1037.9 901.7,1053.6 901.7,1050.0 903.3,1021.6 903.6,1063.7 904.8,1044.4 906.4,1059.5 908.4,1063.7 916.7,1063.7 919.4,1027.7 919.8,1063.7 921.0,995.3 922.6,1063.7 922.6,1034.8 922.6,1021.2 924.2,1038.5 924.2,1003.8 925.4,1044.7 925.8,1028.6 926.2,1063.7 926.9,1015.3 927.3,1045.2 928.5,1038.8 929.3,1063.7 930.1,1054.5 932.1,1063.7" stroke="#9b7fca" stroke-width="1.5" stroke-linejoin="round"/></svg></div></div><div class="p" style="left:1960px;width:1879.5px;height:1034px;background:#f5f6fa;border:1px solid #e3e6f0;border-radius:4px 4px 3px 3px;"><div style="position:absolute;left:-1px;top:-1px;width:1880px;height:1034px"><div class="b" style="left:164.00px;top:1.00px;width:1716.00px;height:182.30px;background:#fff;"></div><div class="b" style="left:1.00px;top:1.00px;width:163.00px;height:1032.50px;background:#27303d;border-radius:2px 0 0 3px;"></div><svg class="b" style="left:8.00px;top:6.00px;" width="40.00" height="36.00" viewBox="0 0 40 36" fill="none"><path d="M24.3 6.2 L29.6 8.6 L30.3 12 L28 16.2 L22.6 16.9 L20.4 14.2 L21.3 12.4 L18.8 11.6 L21.2 8.4 Z" fill="#3d8de6"/><path d="M23.6 8.6 V14.6 M25.3 8.8 Q28 11.5 25.3 14.6" stroke="#7fb6f2" stroke-width="0.9" fill="none"/><rect x="5" y="28.6" width="17.5" height="2.2" rx="1" fill="#7d8790" opacity="0.55"/><circle cx="7.8" cy="22.3" r="3.5" fill="#cf8a50"/><path d="M11.4 14.2 L13.3 16.2 L14.8 13.6 L16.4 16 L18 14 L19.2 17.6 L19.6 21.4 L22 22.2 L29.6 21.6 L29.2 24.6 L22.2 26.6 L21.6 30.6 L12 31 L11 26 L11.8 20 Z" fill="#a3a065"/><ellipse cx="17" cy="24.5" rx="2.4" ry="5" fill="#ecd2b5"/><path d="M13 17.5 L17 17 L17.4 20 L13.4 20.6 Z" fill="#8e9aa6"/><circle cx="13.7" cy="23" r="1.25" fill="#0e0e12"/><path d="M23 23 L29.8 21.2 L29.6 24 L23.4 26.6 Z" fill="#f0dccb"/><circle cx="12.2" cy="26.3" r="1" fill="#e8b23a"/><circle cx="14.4" cy="29.8" r="1.2" fill="#e08a3a"/></svg><span id="t85" class="t" style="left:50.60px;top:8.73px;font-size:14.50px;color:#fff;font-weight:700;letter-spacing:-0.071px;">pr12068</span><span id="t86" class="t" style="left:38.10px;top:29.24px;font-size:13.30px;color:#fff;font-weight:400;letter-spacing:-0.528px;">PR Poodle&nbsp; 17d38c5</span><div class="b" style="left:1.00px;top:50.00px;width:163.00px;height:50.30px;background:#3a87db;"></div><span id="t87" class="t" style="left:12.90px;top:59.36px;font-size:12.10px;color:#fff;font-weight:400;letter-spacing:-0.317px;">ENVIRONMENT</span><span id="t88" class="t" style="left:12.90px;top:73.81px;font-size:17.00px;color:#fff;font-weight:400;letter-spacing:-0.641px;">Prod</span><svg class="b" style="left:149.70px;top:60.90px;overflow:visible" width="5.60" height="9.40" fill="none" stroke="#fff" stroke-width="1.3" stroke-linecap="round" stroke-linejoin="round"><g transform="translate(0.650 0.650) scale(0.4778 0.4500) translate(-8.000 -3.000)" style="vector-effect:non-scaling-stroke"><path vector-effect="non-scaling-stroke" d="M8 3 L17 12 L8 21"/></g></svg><div class="b" style="left:1.00px;top:251.00px;width:163.00px;height:50.40px;background:#5d6270;"></div><svg class="b" style="left:15.10px;top:116.00px;overflow:visible" width="19.90" height="19.80" fill="none" stroke="#fff" stroke-width="1.9" stroke-linecap="round" stroke-linejoin="round"><g transform="translate(0.950 0.950) scale(1.0000 0.9944) translate(-3.000 -3.000)" style="vector-effect:non-scaling-stroke"><path vector-effect="non-scaling-stroke" d="M3 11 L12 3 L21 11 V20 a1 1 0 0 1 -1 1 H15 V15 a3 3 0 0 0 -6 0 V21 H4 a1 1 0 0 1 -1 -1 Z"/></g></svg><span id="t89" class="t" style="left:48.70px;top:117.26px;font-size:17.00px;color:#fff;font-weight:400;letter-spacing:-0.320px;">Home</span><svg class="b" style="left:15.10px;top:166.10px;overflow:visible" width="19.90" height="19.50" fill="none" stroke="#fff" stroke-width="1.9" stroke-linecap="round" stroke-linejoin="round"><g transform="translate(0.950 0.950) scale(0.9474 0.9263) translate(-3.000 -3.000)" style="vector-effect:non-scaling-stroke"><circle vector-effect="non-scaling-stroke" cx="14" cy="8" r="5"/><path vector-effect="non-scaling-stroke" d="M17.8 11.8 L22 16 M3 12 V22 M7.5 17 V22 M12 19 V22 M16.5 19 V22"/></g></svg><span id="t90" class="t" style="left:48.70px;top:167.66px;font-size:17.00px;color:#fff;font-weight:400;letter-spacing:-0.604px;">New Query</span><svg class="b" style="left:15.10px;top:215.10px;overflow:visible" width="20.40" height="22.30" fill="none" stroke="#fff" stroke-width="1.9" stroke-linecap="round" stroke-linejoin="round"><g transform="translate(0.950 0.950) scale(1.0278 1.0737) translate(-3.000 -2.500)" style="vector-effect:non-scaling-stroke"><path vector-effect="non-scaling-stroke" d="M12 2.5 L21 7.5 V16.5 L12 21.5 L3 16.5 V7.5 Z M3 7.5 L12 12.5 L21 7.5 M12 12.5 V21.5"/></g></svg><span id="t91" class="t" style="left:48.70px;top:218.06px;font-size:17.00px;color:#fff;font-weight:400;letter-spacing:-0.199px;">Datasets</span><svg class="b" style="left:14.80px;top:267.20px;overflow:visible" width="21.00" height="18.90" fill="none" stroke="#fff" stroke-width="1.9" stroke-linecap="round" stroke-linejoin="round"><g transform="translate(0.950 0.950) scale(1.0053 1.0000) translate(-2.500 -3.500)" style="vector-effect:non-scaling-stroke"><rect vector-effect="non-scaling-stroke" x="2.5" y="3.5" width="19" height="17" rx="1.5"/><path vector-effect="non-scaling-stroke" d="M2.5 12 H21.5 M14 3.5 V12 M9 12 V20.5"/></g></svg><span id="t92" class="t" style="left:48.70px;top:268.46px;font-size:17.00px;color:#fff;font-weight:700;letter-spacing:-1.216px;">Boards</span><svg class="b" style="left:14.80px;top:316.80px;overflow:visible" width="20.20" height="20.10" fill="none" stroke="#fff" stroke-width="1.9" stroke-linecap="round" stroke-linejoin="round"><g transform="translate(0.950 0.950) scale(0.9632 1.0111) translate(-2.500 -3.000)" style="vector-effect:non-scaling-stroke"><path vector-effect="non-scaling-stroke" d="M5.2 6.5 A9 9 0 1 1 3.6 14 M2.5 3 L3.5 8.6 L9 7.6 M12.5 7 V12.5 L16.5 15"/></g></svg><span id="t93" class="t" style="left:48.70px;top:318.86px;font-size:17.00px;color:#fff;font-weight:400;letter-spacing:-0.068px;">History</span><svg class="b" style="left:15.60px;top:366.90px;overflow:visible" width="19.40" height="21.00" fill="none" stroke="#fff" stroke-width="1.9" stroke-linecap="round" stroke-linejoin="round"><g transform="translate(0.950 0.950) scale(1.0938 1.0914) translate(-4.000 -4.500)" style="vector-effect:non-scaling-stroke"><path vector-effect="non-scaling-stroke" d="M4 18.5 H20 C18.5 16.5 18 14.5 18 10.5 a6 6 0 0 0 -12 0 C6 14.5 5.5 16.5 4 18.5 Z M9 22 H15"/></g></svg><span id="t94" class="t" style="left:48.70px;top:369.26px;font-size:17.00px;color:#fff;font-weight:400;letter-spacing:-0.217px;">Triggers</span><svg class="b" style="left:12.80px;top:419.90px;overflow:visible" width="24.60" height="17.90" fill="none" stroke="#fff" stroke-width="1.9" stroke-linecap="round" stroke-linejoin="round"><g transform="translate(0.950 0.950) scale(1.0810 0.9697) translate(-1.500 -4.500)" style="vector-effect:non-scaling-stroke"><path vector-effect="non-scaling-stroke" d="M1.5 9 L6 4.5 L9 6.5 L12 5 L15 6.5 L18 4.5 L22.5 9 L18.5 14 L12 19 L5.5 14 Z M9 6.5 L7.5 10 C9 11.5 10.5 11 12 9.5 L17 14 M6 17.5 L10 21 M3.5 15 L5 16.5"/></g></svg><span id="t95" class="t" style="left:48.70px;top:419.66px;font-size:17.00px;color:#fff;font-weight:400;letter-spacing:-1.710px;">SLOs</span><svg class="b" style="left:15.30px;top:466.90px;overflow:visible" width="20.20" height="22.90" fill="none" stroke="#fff" stroke-width="1.9" stroke-linecap="round" stroke-linejoin="round"><g transform="translate(0.950 0.950) scale(1.0702 1.0396) translate(-4.000 -2.500)" style="vector-effect:non-scaling-stroke"><circle vector-effect="non-scaling-stroke" cx="8" cy="6.5" r="4"/><circle vector-effect="non-scaling-stroke" cx="18.5" cy="10" r="2.6"/><circle vector-effect="non-scaling-stroke" cx="13" cy="19.5" r="3.2"/><path vector-effect="non-scaling-stroke" d="M11.8 8 L16 9.3 M9.3 10.3 L12 16.5"/></g></svg><span id="t96" class="t" style="left:48.70px;top:470.06px;font-size:17.00px;color:#fff;font-weight:400;letter-spacing:-0.308px;">Service Map</span><span id="t97" class="t" style="left:48.70px;top:862.76px;font-size:17.00px;color:#fff;font-weight:400;letter-spacing:-0.655px;">Search</span><span id="t98" class="t" style="left:48.70px;top:913.66px;font-size:17.00px;color:#fff;font-weight:400;letter-spacing:-0.810px;">Usage</span><span id="t99" class="t" style="left:48.70px;top:964.06px;font-size:17.00px;color:#fff;font-weight:400;letter-spacing:-0.023px;">Account</span><svg class="b" style="left:14.80px;top:861.50px;overflow:visible" width="21.00" height="20.80" fill="none" stroke="#fff" stroke-width="1.9" stroke-linecap="round" stroke-linejoin="round"><g transform="translate(0.950 0.950) scale(0.9550 0.9450) translate(-2.500 -2.500)" style="vector-effect:non-scaling-stroke"><circle vector-effect="non-scaling-stroke" cx="10.5" cy="10.5" r="8"/><path vector-effect="non-scaling-stroke" d="M16.5 16.5 L22.5 22.5"/></g></svg><svg class="b" style="left:15.00px;top:912.00px;" width="20.00" height="20.00" viewBox="0 0 20 20" fill="none"><circle cx="10" cy="10" r="8" stroke="#a89b5a" stroke-width="2"/><path d="M15.6 15.8 A8 8 0 1 1 6.5 2.8" stroke="#f2b632" stroke-width="2"/><path d="M7.6 2.4 A8 8 0 0 1 12.4 2.4" stroke="#27303d" stroke-width="3"/></svg><svg class="b" style="left:12.70px;top:958.40px;" width="27.40" height="27.40" viewBox="0 0 27.4 27.4" fill="none"><clipPath id="avc3"><circle r="13.2"/></clipPath><g transform="translate(13.70 13.70) scale(1.0000)"><g clip-path="url(#avc3)"><circle r="13.2" fill="#151c2b"/><path d="M-8 14 Q-4 9 0.6 10.4 Q5.5 9 9.4 11.6 L10 14 Z" fill="#a9adb5"/><ellipse cx="-6.4" cy="0.2" rx="1.1" ry="1.9" fill="#a2a7af"/><ellipse cx="0.6" cy="-0.3" rx="6.7" ry="10.2" fill="#b6bac1"/><ellipse cx="0.3" cy="-5.2" rx="5.2" ry="4.6" fill="#caced3"/><path d="M-5.8 1.2 Q-5.6 9.6 0.6 10 Q6.8 9.6 7 1.2 Q5 4 3.4 3 Q0.6 1.6 -2.4 3 Q-4 4 -5.8 1.2 Z" fill="#80858e"/><ellipse cx="0.4" cy="4.9" rx="2.5" ry="1.2" fill="#d8dade"/><ellipse cx="-2.5" cy="-1.3" rx="1.4" ry="0.7" fill="#5f646e"/><ellipse cx="3.3" cy="-1.3" rx="1.4" ry="0.7" fill="#5f646e"/></g><circle r="12.9" fill="none" stroke="#39404e" stroke-width="0.7"/></g></svg><div class="b" style="left:138.40px;top:964.00px;width:16.80px;height:16.80px;background:#c5444f;border-radius:9px;"></div><span id="t100" class="t" style="left:146.80px;top:966.87px;font-size:11.50px;color:#fff;font-weight:700;letter-spacing:0.000px;transform:translateX(-50%);">3</span><div class="b" style="left:1.00px;top:997.10px;width:163.00px;height:1.90px;background:#5a606c;"></div><svg class="b" style="left:136.50px;top:1008.00px;overflow:visible" width="17.50" height="14.80" fill="none" stroke="#dfe1e5" stroke-width="1.6" stroke-linecap="round" stroke-linejoin="round"><g transform="translate(0.800 0.800) scale(0.8368 0.7333) translate(-3.000 -3.000)" style="vector-effect:non-scaling-stroke"><path vector-effect="non-scaling-stroke" d="M3 3 V21 M22 12 H8 M14 5 L7 12 L14 19"/></g></svg><svg class="b" style="left:191.50px;top:28.60px;overflow:visible" width="13.10" height="10.30" fill="none" stroke="#5f6673" stroke-width="1.4" stroke-linecap="round" stroke-linejoin="round"><g transform="translate(0.700 0.700) scale(0.6500 0.6357) translate(-3.000 -5.000)" style="vector-effect:non-scaling-stroke"><path vector-effect="non-scaling-stroke" d="M21 12 H3 M10 5 L3 12 L10 19"/></g></svg><span id="t101" class="t" style="left:215.60px;top:26.53px;font-size:14.50px;color:#3f4450;font-weight:400;letter-spacing:-0.066px;">All Boards</span><span id="t102" class="t" style="left:192.90px;top:64.27px;font-size:33.00px;color:#2b303b;font-weight:700;letter-spacing:0.803px;-webkit-text-stroke:0.55px #2b303b;">User screen sizes</span><span id="t103" class="t" style="left:194.40px;top:111.11px;font-size:15.70px;color:#a3a8b4;font-weight:400;letter-spacing:0.583px;">Add description</span><svg class="b" style="left:192.30px;top:143.60px;" width="18.00" height="18.00" viewBox="0 0 18 18" fill="none"><clipPath id="avc4"><circle r="13.2"/></clipPath><g transform="translate(9.00 9.00) scale(0.6439)"><g clip-path="url(#avc4)"><circle r="13.2" fill="#151c2b"/><path d="M-8 14 Q-4 9 0.6 10.4 Q5.5 9 9.4 11.6 L10 14 Z" fill="#a9adb5"/><ellipse cx="-6.4" cy="0.2" rx="1.1" ry="1.9" fill="#a2a7af"/><ellipse cx="0.6" cy="-0.3" rx="6.7" ry="10.2" fill="#b6bac1"/><ellipse cx="0.3" cy="-5.2" rx="5.2" ry="4.6" fill="#caced3"/><path d="M-5.8 1.2 Q-5.6 9.6 0.6 10 Q6.8 9.6 7 1.2 Q5 4 3.4 3 Q0.6 1.6 -2.4 3 Q-4 4 -5.8 1.2 Z" fill="#80858e"/><ellipse cx="0.4" cy="4.9" rx="2.5" ry="1.2" fill="#d8dade"/><ellipse cx="-2.5" cy="-1.3" rx="1.4" ry="0.7" fill="#5f646e"/><ellipse cx="3.3" cy="-1.3" rx="1.4" ry="0.7" fill="#5f646e"/></g><circle r="12.9" fill="none" stroke="#39404e" stroke-width="0.7"/></g></svg><span id="t104" class="t" style="left:216.00px;top:146.14px;font-size:13.30px;color:#3f4450;font-weight:400;letter-spacing:-0.410px;">Jeremy Ford last edited Nov 23, 2022</span><div class="b" style="left:1722.70px;top:120.20px;width:110.90px;height:37.40px;background:#fff;border:1px solid #cdd2e5;border-radius:3px;box-sizing:border-box;"></div><svg class="b" style="left:1741.40px;top:132.20px;overflow:visible" width="14.20" height="14.20" fill="none" stroke="#555a67" stroke-width="1.2" stroke-linecap="round" stroke-linejoin="round"><g transform="translate(0.600 0.600) scale(0.6915 0.6915) translate(-2.600 -2.600)" style="vector-effect:non-scaling-stroke"><path vector-effect="non-scaling-stroke" d="M12.00 2.70 L12.89 2.95 L13.68 3.57 L14.35 4.24 L15.02 4.70 L15.82 4.85 L16.78 4.85 L17.77 4.97 L18.58 5.42 L19.03 6.23 L19.15 7.22 L19.15 8.18 L19.30 8.98 L19.76 9.65 L20.43 10.32 L21.05 11.11 L21.30 12.00 L21.05 12.89 L20.43 13.68 L19.76 14.35 L19.30 15.02 L19.15 15.82 L19.15 16.78 L19.03 17.77 L18.58 18.58 L17.77 19.03 L16.78 19.15 L15.82 19.15 L15.02 19.30 L14.35 19.76 L13.68 20.43 L12.89 21.05 L12.00 21.30 L11.11 21.05 L10.32 20.43 L9.65 19.76 L8.98 19.30 L8.18 19.15 L7.22 19.15 L6.23 19.03 L5.42 18.58 L4.97 17.77 L4.85 16.78 L4.85 15.82 L4.70 15.02 L4.24 14.35 L3.57 13.68 L2.95 12.89 L2.70 12.00 L2.95 11.11 L3.57 10.32 L4.24 9.65 L4.70 8.98 L4.85 8.18 L4.85 7.22 L4.97 6.23 L5.42 5.42 L6.23 4.97 L7.22 4.85 L8.18 4.85 L8.98 4.70 L9.65 4.24 L10.32 3.57 L11.11 2.95 Z"/><circle vector-effect="non-scaling-stroke" cx="12" cy="12" r="4.1"/></g></svg><span id="t105" class="t" style="left:1761.90px;top:132.23px;font-size:14.50px;color:#2b303b;font-weight:400;letter-spacing:0.185px;-webkit-text-stroke:0.40px #2b303b;">Settings</span><div class="b" style="left:190.00px;top:204.00px;width:251.00px;height:38.00px;background:#fff;border:1px solid #cdd2e5;border-radius:3px;box-sizing:border-box;"></div><span id="t106" class="t" style="left:207.60px;top:215.11px;font-size:15.70px;color:#2b303b;font-weight:400;letter-spacing:-0.650px;">Original Time Range</span><svg class="b" style="left:414.30px;top:219.30px;overflow:visible" width="15.00" height="8.60" fill="none" stroke="#3a3f4b" stroke-width="1.7" stroke-linecap="round" stroke-linejoin="round"><g transform="translate(0.850 0.850) scale(0.6045 0.7263) translate(-1.000 -7.500)" style="vector-effect:non-scaling-stroke"><path vector-effect="non-scaling-stroke" d="M1 7.5 L12 17 L23 7.5"/></g></svg><svg class="b" style="left:459.00px;top:215.00px;overflow:visible" width="16.40" height="16.00" fill="none" stroke="#666b78" stroke-width="1.3" stroke-linecap="round" stroke-linejoin="round"><g transform="translate(0.650 0.650) scale(0.8162 0.8167) translate(-2.000 -3.000)" style="vector-effect:non-scaling-stroke"><path vector-effect="non-scaling-stroke" d="M2 12 L10.5 3 V8 H16.5 V16 H10.5 V21 Z M20.5 7.5 V16.5"/></g></svg><svg class="b" style="left:497.00px;top:215.00px;overflow:visible" width="17.20" height="16.00" fill="none" stroke="#666b78" stroke-width="1.3" stroke-linecap="round" stroke-linejoin="round"><g transform="translate(0.650 0.650) scale(0.8595 0.8167) translate(-3.500 -3.000)" style="vector-effect:non-scaling-stroke"><path vector-effect="non-scaling-stroke" d="M22 12 L13.5 3 V8 H7.5 V16 H13.5 V21 Z M3.5 7.5 V16.5"/></g></svg><div class="b" style="left:1665.30px;top:206.20px;width:168.30px;height:38.10px;background:#eceef3;border-radius:4px;"></div><svg class="b" style="left:1514.90px;top:214.60px;" width="18.40" height="20.80" viewBox="0 0 18.4 20.8" fill="none"><rect x="0" y="0.00" width="18.4" height="2.1" fill="#3f4450"/><rect x="0" y="6.27" width="18.4" height="2.1" fill="#3f4450"/><rect x="0" y="12.54" width="18.4" height="2.1" fill="#3f4450"/><rect x="0" y="18.81" width="18.4" height="2.1" fill="#3f4450"/></svg><svg class="b" style="left:1690.50px;top:214.60px;" width="19.40" height="20.80" viewBox="0 0 19.4 20.8" fill="none"><rect x="0" y="0.00" width="7.8" height="2.1" fill="#3f4450"/><rect x="11.2" y="0.00" width="8" height="2.1" fill="#3f4450"/><rect x="0" y="6.27" width="7.8" height="2.1" fill="#3f4450"/><rect x="11.2" y="6.27" width="8" height="2.1" fill="#3f4450"/><rect x="0" y="12.54" width="7.8" height="2.1" fill="#3f4450"/><rect x="11.2" y="12.54" width="8" height="2.1" fill="#3f4450"/><rect x="0" y="18.81" width="7.8" height="2.1" fill="#3f4450"/><rect x="11.2" y="18.81" width="8" height="2.1" fill="#3f4450"/></svg><span id="t107" class="t" style="left:1549.60px;top:218.23px;font-size:14.50px;color:#2b303b;font-weight:400;letter-spacing:-0.145px;-webkit-text-stroke:0.40px #2b303b;">One-Column</span><span id="t108" class="t" style="left:1726.00px;top:218.23px;font-size:14.50px;color:#2b303b;font-weight:700;letter-spacing:-0.275px;">Multi-Column</span><div class="b" style="left:190.40px;top:264.60px;width:808.80px;height:576.20px;background:#fff;border-radius:3px;box-shadow:0 0 2px rgba(80,90,130,0.10);"></div><div class="b" style="left:1024.40px;top:264.60px;width:808.80px;height:576.20px;background:#fff;border-radius:3px;box-shadow:0 0 2px rgba(80,90,130,0.10);"></div><div class="b" style="left:190.40px;top:861.70px;width:808.80px;height:400.00px;background:#fff;border-radius:3px;box-shadow:0 0 2px rgba(80,90,130,0.10);"></div><svg class="b" style="left:219.30px;top:290.70px;overflow:visible" width="14.00" height="14.50" fill="none" stroke="#3f4450" stroke-width="1.3" stroke-linecap="round" stroke-linejoin="round"><g transform="translate(0.650 0.650) scale(0.7056 0.6947) translate(-3.000 -2.500)" style="vector-effect:non-scaling-stroke"><path vector-effect="non-scaling-stroke" d="M12 2.5 L21 7.5 V16.5 L12 21.5 L3 16.5 V7.5 Z M3 7.5 L12 12.5 L21 7.5 M12 12.5 V21.5"/></g></svg><span id="t109" class="t" style="left:239.40px;top:290.63px;font-size:14.50px;color:#3f4450;font-weight:400;letter-spacing:-0.097px;">user-events</span><span id="t110" class="t" style="left:218.50px;top:313.06px;font-size:20.60px;color:#2b303b;font-weight:400;letter-spacing:0.273px;-webkit-text-stroke:0.45px #2b303b;">Screen widths for mobile users</span><span id="t111" class="t" style="left:218.50px;top:350.93px;font-size:14.50px;color:#5f6673;font-weight:400;letter-spacing:0.019px;">Of the users who are on a mobile device, what is their screen width?</span><svg class="b" style="left:913.00px;top:296.00px;overflow:visible" width="17.90" height="15.00" fill="none" stroke="#555a67" stroke-width="1.6" stroke-linecap="round" stroke-linejoin="round"><g transform="translate(0.800 0.800) scale(0.0660 0.0644) translate(-13.000 -7.000)" style="vector-effect:non-scaling-stroke"><path vector-effect="non-scaling-stroke" d="M13 45 V215 H225 M65 165 Q95 75 258 70 M195 7 L260 70 L195 135"/></g></svg><svg class="b" style="left:950.50px;top:293.60px;overflow:visible" width="19.10" height="18.60" fill="none" stroke="#555a67" stroke-width="1.5" stroke-linecap="round" stroke-linejoin="round"><g transform="translate(0.750 0.750) scale(0.9362 0.9096) translate(-2.600 -2.600)" style="vector-effect:non-scaling-stroke"><path vector-effect="non-scaling-stroke" d="M12.00 2.70 L12.89 2.95 L13.68 3.57 L14.35 4.24 L15.02 4.70 L15.82 4.85 L16.78 4.85 L17.77 4.97 L18.58 5.42 L19.03 6.23 L19.15 7.22 L19.15 8.18 L19.30 8.98 L19.76 9.65 L20.43 10.32 L21.05 11.11 L21.30 12.00 L21.05 12.89 L20.43 13.68 L19.76 14.35 L19.30 15.02 L19.15 15.82 L19.15 16.78 L19.03 17.77 L18.58 18.58 L17.77 19.03 L16.78 19.15 L15.82 19.15 L15.02 19.30 L14.35 19.76 L13.68 20.43 L12.89 21.05 L12.00 21.30 L11.11 21.05 L10.32 20.43 L9.65 19.76 L8.98 19.30 L8.18 19.15 L7.22 19.15 L6.23 19.03 L5.42 18.58 L4.97 17.77 L4.85 16.78 L4.85 15.82 L4.70 15.02 L4.24 14.35 L3.57 13.68 L2.95 12.89 L2.70 12.00 L2.95 11.11 L3.57 10.32 L4.24 9.65 L4.70 8.98 L4.85 8.18 L4.85 7.22 L4.97 6.23 L5.42 5.42 L6.23 4.97 L7.22 4.85 L8.18 4.85 L8.98 4.70 L9.65 4.24 L10.32 3.57 L11.11 2.95 Z"/><circle vector-effect="non-scaling-stroke" cx="12" cy="12" r="4.1"/></g></svg><svg class="b" style="left:1053.30px;top:290.70px;overflow:visible" width="14.00" height="14.50" fill="none" stroke="#3f4450" stroke-width="1.3" stroke-linecap="round" stroke-linejoin="round"><g transform="translate(0.650 0.650) scale(0.7056 0.6947) translate(-3.000 -2.500)" style="vector-effect:non-scaling-stroke"><path vector-effect="non-scaling-stroke" d="M12 2.5 L21 7.5 V16.5 L12 21.5 L3 16.5 V7.5 Z M3 7.5 L12 12.5 L21 7.5 M12 12.5 V21.5"/></g></svg><span id="t112" class="t" style="left:1073.40px;top:290.63px;font-size:14.50px;color:#3f4450;font-weight:400;letter-spacing:-0.097px;">user-events</span><span id="t113" class="t" style="left:1052.50px;top:313.06px;font-size:20.60px;color:#2b303b;font-weight:400;letter-spacing:0.371px;-webkit-text-stroke:0.45px #2b303b;">Most commonly used screen widths</span><span id="t114" class="t" style="left:1052.50px;top:350.93px;font-size:14.50px;color:#a3a8b4;font-weight:400;letter-spacing:0.125px;">Add description</span><svg class="b" style="left:1747.00px;top:296.00px;overflow:visible" width="17.90" height="15.00" fill="none" stroke="#555a67" stroke-width="1.6" stroke-linecap="round" stroke-linejoin="round"><g transform="translate(0.800 0.800) scale(0.0660 0.0644) translate(-13.000 -7.000)" style="vector-effect:non-scaling-stroke"><path vector-effect="non-scaling-stroke" d="M13 45 V215 H225 M65 165 Q95 75 258 70 M195 7 L260 70 L195 135"/></g></svg><svg class="b" style="left:1784.50px;top:293.60px;overflow:visible" width="19.10" height="18.60" fill="none" stroke="#555a67" stroke-width="1.5" stroke-linecap="round" stroke-linejoin="round"><g transform="translate(0.750 0.750) scale(0.9362 0.9096) translate(-2.600 -2.600)" style="vector-effect:non-scaling-stroke"><path vector-effect="non-scaling-stroke" d="M12.00 2.70 L12.89 2.95 L13.68 3.57 L14.35 4.24 L15.02 4.70 L15.82 4.85 L16.78 4.85 L17.77 4.97 L18.58 5.42 L19.03 6.23 L19.15 7.22 L19.15 8.18 L19.30 8.98 L19.76 9.65 L20.43 10.32 L21.05 11.11 L21.30 12.00 L21.05 12.89 L20.43 13.68 L19.76 14.35 L19.30 15.02 L19.15 15.82 L19.15 16.78 L19.03 17.77 L18.58 18.58 L17.77 19.03 L16.78 19.15 L15.82 19.15 L15.02 19.30 L14.35 19.76 L13.68 20.43 L12.89 21.05 L12.00 21.30 L11.11 21.05 L10.32 20.43 L9.65 19.76 L8.98 19.30 L8.18 19.15 L7.22 19.15 L6.23 19.03 L5.42 18.58 L4.97 17.77 L4.85 16.78 L4.85 15.82 L4.70 15.02 L4.24 14.35 L3.57 13.68 L2.95 12.89 L2.70 12.00 L2.95 11.11 L3.57 10.32 L4.24 9.65 L4.70 8.98 L4.85 8.18 L4.85 7.22 L4.97 6.23 L5.42 5.42 L6.23 4.97 L7.22 4.85 L8.18 4.85 L8.98 4.70 L9.65 4.24 L10.32 3.57 L11.11 2.95 Z"/><circle vector-effect="non-scaling-stroke" cx="12" cy="12" r="4.1"/></g></svg><svg class="b" style="left:219.30px;top:887.80px;overflow:visible" width="14.00" height="14.50" fill="none" stroke="#3f4450" stroke-width="1.3" stroke-linecap="round" stroke-linejoin="round"><g transform="translate(0.650 0.650) scale(0.7056 0.6947) translate(-3.000 -2.500)" style="vector-effect:non-scaling-stroke"><path vector-effect="non-scaling-stroke" d="M12 2.5 L21 7.5 V16.5 L12 21.5 L3 16.5 V7.5 Z M3 7.5 L12 12.5 L21 7.5 M12 12.5 V21.5"/></g></svg><span id="t115" class="t" style="left:239.40px;top:887.73px;font-size:14.50px;color:#3f4450;font-weight:400;letter-spacing:-0.097px;">user-events</span><span id="t116" class="t" style="left:218.50px;top:910.16px;font-size:20.60px;color:#2b303b;font-weight:400;letter-spacing:0.353px;-webkit-text-stroke:0.45px #2b303b;">Mobile screen widths</span><span id="t117" class="t" style="left:218.50px;top:948.03px;font-size:14.50px;color:#a3a8b4;font-weight:400;letter-spacing:0.160px;">Add description</span><svg class="b" style="left:913.00px;top:893.10px;overflow:visible" width="17.90" height="15.00" fill="none" stroke="#555a67" stroke-width="1.6" stroke-linecap="round" stroke-linejoin="round"><g transform="translate(0.800 0.800) scale(0.0660 0.0644) translate(-13.000 -7.000)" style="vector-effect:non-scaling-stroke"><path vector-effect="non-scaling-stroke" d="M13 45 V215 H225 M65 165 Q95 75 258 70 M195 7 L260 70 L195 135"/></g></svg><svg class="b" style="left:950.50px;top:890.70px;overflow:visible" width="19.10" height="18.60" fill="none" stroke="#555a67" stroke-width="1.5" stroke-linecap="round" stroke-linejoin="round"><g transform="translate(0.750 0.750) scale(0.9362 0.9096) translate(-2.600 -2.600)" style="vector-effect:non-scaling-stroke"><path vector-effect="non-scaling-stroke" d="M12.00 2.70 L12.89 2.95 L13.68 3.57 L14.35 4.24 L15.02 4.70 L15.82 4.85 L16.78 4.85 L17.77 4.97 L18.58 5.42 L19.03 6.23 L19.15 7.22 L19.15 8.18 L19.30 8.98 L19.76 9.65 L20.43 10.32 L21.05 11.11 L21.30 12.00 L21.05 12.89 L20.43 13.68 L19.76 14.35 L19.30 15.02 L19.15 15.82 L19.15 16.78 L19.03 17.77 L18.58 18.58 L17.77 19.03 L16.78 19.15 L15.82 19.15 L15.02 19.30 L14.35 19.76 L13.68 20.43 L12.89 21.05 L12.00 21.30 L11.11 21.05 L10.32 20.43 L9.65 19.76 L8.98 19.30 L8.18 19.15 L7.22 19.15 L6.23 19.03 L5.42 18.58 L4.97 17.77 L4.85 16.78 L4.85 15.82 L4.70 15.02 L4.24 14.35 L3.57 13.68 L2.95 12.89 L2.70 12.00 L2.95 11.11 L3.57 10.32 L4.24 9.65 L4.70 8.98 L4.85 8.18 L4.85 7.22 L4.97 6.23 L5.42 5.42 L6.23 4.97 L7.22 4.85 L8.18 4.85 L8.98 4.70 L9.65 4.24 L10.32 3.57 L11.11 2.95 Z"/><circle vector-effect="non-scaling-stroke" cx="12" cy="12" r="4.1"/></g></svg><div class="b" style="left:219.40px;top:390.20px;width:751.00px;height:388.60px;background:#fff;border:1px solid #cdd2e5;border-radius:3.5px;box-sizing:border-box;"></div><span id="t118" class="t" style="left:239.40px;top:414.56px;font-size:12.10px;color:#4a4f5c;font-weight:400;letter-spacing:0.118px;">Nov 2 2022 17:48:41 – Nov 30 2022 16:48:41 UTC-05:00 (Granularity: 2 hr)</span><span id="t119" class="t" style="left:239.40px;top:441.93px;font-size:14.50px;color:#2b303b;font-weight:400;letter-spacing:0.045px;-webkit-text-stroke:0.40px #2b303b;">HEATMAP(screen_width)</span><div class="b" style="left:291.70px;top:737.20px;width:657.00px;height:1.20px;background:#e4e8f1;"></div><span id="t120" class="t" style="left:283.10px;top:732.47px;font-size:10.90px;color:#666c78;font-weight:400;letter-spacing:0.000px;transform:translateX(-100%);">0</span><div class="b" style="left:291.70px;top:693.37px;width:657.00px;height:1.20px;background:#e4e8f1;"></div><span id="t121" class="t" style="left:283.10px;top:688.64px;font-size:10.90px;color:#666c78;font-weight:400;letter-spacing:0.000px;transform:translateX(-100%);">200</span><div class="b" style="left:291.70px;top:649.54px;width:657.00px;height:1.20px;background:#e4e8f1;"></div><span id="t122" class="t" style="left:283.10px;top:644.81px;font-size:10.90px;color:#666c78;font-weight:400;letter-spacing:0.000px;transform:translateX(-100%);">400</span><div class="b" style="left:291.70px;top:605.71px;width:657.00px;height:1.20px;background:#e4e8f1;"></div><span id="t123" class="t" style="left:283.10px;top:600.98px;font-size:10.90px;color:#666c78;font-weight:400;letter-spacing:0.000px;transform:translateX(-100%);">600</span><div class="b" style="left:291.70px;top:561.88px;width:657.00px;height:1.20px;background:#e4e8f1;"></div><span id="t124" class="t" style="left:283.10px;top:557.15px;font-size:10.90px;color:#666c78;font-weight:400;letter-spacing:0.000px;transform:translateX(-100%);">800</span><div class="b" style="left:291.70px;top:518.05px;width:657.00px;height:1.20px;background:#e4e8f1;"></div><span id="t125" class="t" style="left:283.10px;top:513.32px;font-size:10.90px;color:#666c78;font-weight:400;letter-spacing:0.000px;transform:translateX(-100%);">1000</span><div class="b" style="left:291.70px;top:474.22px;width:657.00px;height:1.20px;background:#e4e8f1;"></div><span id="t126" class="t" style="left:283.10px;top:469.49px;font-size:10.90px;color:#666c78;font-weight:400;letter-spacing:0.000px;transform:translateX(-100%);">1200</span><svg class="b" style="left:279px;top:436.60px" width="5" height="322.90"><rect x="1.450" y="0" width="1.30" height="322.90" fill="#62666f"/></svg><span id="t127" class="t" style="left:297.76px;top:745.06px;font-size:12.10px;color:#5f6673;font-weight:400;letter-spacing:-0.723px;transform:translateX(-50%);">Nov 3</span><span id="t128" class="t" style="left:344.69px;top:745.06px;font-size:12.10px;color:#5f6673;font-weight:400;letter-spacing:-0.723px;transform:translateX(-50%);">Nov 5</span><span id="t129" class="t" style="left:391.62px;top:745.06px;font-size:12.10px;color:#5f6673;font-weight:400;letter-spacing:-0.723px;transform:translateX(-50%);">Nov 7</span><span id="t130" class="t" style="left:438.55px;top:745.06px;font-size:12.10px;color:#5f6673;font-weight:400;letter-spacing:-0.723px;transform:translateX(-50%);">Nov 9</span><span id="t131" class="t" style="left:485.48px;top:745.06px;font-size:12.10px;color:#5f6673;font-weight:400;letter-spacing:-0.404px;transform:translateX(-50%);">Nov 11</span><span id="t132" class="t" style="left:532.40px;top:745.06px;font-size:12.10px;color:#5f6673;font-weight:400;letter-spacing:-0.586px;transform:translateX(-50%);">Nov 13</span><span id="t133" class="t" style="left:579.33px;top:745.06px;font-size:12.10px;color:#5f6673;font-weight:400;letter-spacing:-0.586px;transform:translateX(-50%);">Nov 15</span><span id="t134" class="t" style="left:626.26px;top:745.06px;font-size:12.10px;color:#5f6673;font-weight:400;letter-spacing:-0.586px;transform:translateX(-50%);">Nov 17</span><span id="t135" class="t" style="left:673.19px;top:745.06px;font-size:12.10px;color:#5f6673;font-weight:400;letter-spacing:-0.586px;transform:translateX(-50%);">Nov 19</span><span id="t136" class="t" style="left:720.12px;top:745.06px;font-size:12.10px;color:#5f6673;font-weight:400;letter-spacing:-0.586px;transform:translateX(-50%);">Nov 21</span><span id="t137" class="t" style="left:767.05px;top:745.06px;font-size:12.10px;color:#5f6673;font-weight:400;letter-spacing:-0.586px;transform:translateX(-50%);">Nov 23</span><span id="t138" class="t" style="left:813.98px;top:745.06px;font-size:12.10px;color:#5f6673;font-weight:400;letter-spacing:-0.586px;transform:translateX(-50%);">Nov 25</span><span id="t139" class="t" style="left:860.90px;top:745.06px;font-size:12.10px;color:#5f6673;font-weight:400;letter-spacing:-0.586px;transform:translateX(-50%);">Nov 27</span><span id="t140" class="t" style="left:907.83px;top:745.06px;font-size:12.10px;color:#5f6673;font-weight:400;letter-spacing:-0.586px;transform:translateX(-50%);">Nov 29</span><svg class="b" style="left:200.00px;top:400.00px;" width="800.00" height="360.00" viewBox="0 0 800 360" fill="none"><path d="M91.7 256.4h2.11v6.15h-2.11zM93.7 250.3h2.11v6.15h-2.11zM95.6 256.4h2.11v6.15h-2.11zM97.6 250.3h2.11v6.15h-2.11zM97.6 256.4h2.11v6.15h-2.11zM99.5 256.4h2.11v6.15h-2.11zM101.5 238.2h2.11v6.15h-2.11zM101.5 256.4h2.11v6.15h-2.11zM103.4 244.3h2.11v6.15h-2.11zM107.3 244.3h2.11v6.15h-2.11zM113.2 244.3h2.11v6.15h-2.11zM113.2 256.4h2.11v6.15h-2.11zM115.2 244.3h2.11v6.15h-2.11zM115.2 250.3h2.11v6.15h-2.11zM115.2 256.4h2.11v6.15h-2.11zM121.0 244.3h2.11v6.15h-2.11zM121.0 256.4h2.11v6.15h-2.11zM123.0 238.2h2.11v6.15h-2.11zM126.9 250.3h2.11v6.15h-2.11zM128.9 238.2h2.11v6.15h-2.11zM128.9 244.3h2.11v6.15h-2.11zM128.9 250.3h2.11v6.15h-2.11zM128.9 256.4h2.11v6.15h-2.11zM130.8 244.3h2.11v6.15h-2.11zM130.8 256.4h2.11v6.15h-2.11zM132.8 244.3h2.11v6.15h-2.11zM132.8 256.4h2.11v6.15h-2.11zM134.7 238.2h2.11v6.15h-2.11zM134.7 244.3h2.11v6.15h-2.11zM134.7 250.3h2.11v6.15h-2.11zM138.6 244.3h2.11v6.15h-2.11zM138.6 250.3h2.11v6.15h-2.11zM140.6 244.3h2.11v6.15h-2.11zM142.5 250.3h2.11v6.15h-2.11zM142.5 256.4h2.11v6.15h-2.11zM144.5 238.2h2.11v6.15h-2.11zM144.5 244.3h2.11v6.15h-2.11zM146.4 250.3h2.11v6.15h-2.11zM146.4 256.4h2.11v6.15h-2.11zM154.3 250.3h2.11v6.15h-2.11zM154.3 256.4h2.11v6.15h-2.11zM156.2 244.3h2.11v6.15h-2.11zM158.2 244.3h2.11v6.15h-2.11zM162.1 244.3h2.11v6.15h-2.11zM162.1 256.4h2.11v6.15h-2.11zM164.0 244.3h2.11v6.15h-2.11zM166.0 256.4h2.11v6.15h-2.11zM169.9 256.4h2.11v6.15h-2.11zM179.7 244.3h2.11v6.15h-2.11zM179.7 250.3h2.11v6.15h-2.11zM179.7 256.4h2.11v6.15h-2.11zM183.6 256.4h2.11v6.15h-2.11zM185.6 244.3h2.11v6.15h-2.11zM185.6 256.4h2.11v6.15h-2.11zM187.5 244.3h2.11v6.15h-2.11zM187.5 256.4h2.11v6.15h-2.11zM189.5 244.3h2.11v6.15h-2.11zM191.4 244.3h2.11v6.15h-2.11zM191.4 256.4h2.11v6.15h-2.11zM193.4 250.3h2.11v6.15h-2.11zM195.3 244.3h2.11v6.15h-2.11zM195.3 256.4h2.11v6.15h-2.11zM199.2 250.3h2.11v6.15h-2.11zM199.2 256.4h2.11v6.15h-2.11zM201.2 244.3h2.11v6.15h-2.11zM201.2 250.3h2.11v6.15h-2.11zM201.2 256.4h2.11v6.15h-2.11zM203.2 250.3h2.11v6.15h-2.11zM203.2 256.4h2.11v6.15h-2.11zM205.1 244.3h2.11v6.15h-2.11zM209.0 256.4h2.11v6.15h-2.11zM211.0 238.2h2.11v6.15h-2.11zM211.0 250.3h2.11v6.15h-2.11zM212.9 244.3h2.11v6.15h-2.11zM212.9 250.3h2.11v6.15h-2.11zM212.9 256.4h2.11v6.15h-2.11zM214.9 256.4h2.11v6.15h-2.11zM216.8 244.3h2.11v6.15h-2.11zM216.8 256.4h2.11v6.15h-2.11zM218.8 244.3h2.11v6.15h-2.11zM218.8 250.3h2.11v6.15h-2.11zM218.8 256.4h2.11v6.15h-2.11zM220.8 238.2h2.11v6.15h-2.11zM228.6 256.4h2.11v6.15h-2.11zM230.5 244.3h2.11v6.15h-2.11zM234.4 256.4h2.11v6.15h-2.11zM236.4 244.3h2.11v6.15h-2.11zM236.4 256.4h2.11v6.15h-2.11zM238.4 256.4h2.11v6.15h-2.11zM240.3 244.3h2.11v6.15h-2.11zM240.3 250.3h2.11v6.15h-2.11zM240.3 256.4h2.11v6.15h-2.11zM242.3 256.4h2.11v6.15h-2.11zM244.2 244.3h2.11v6.15h-2.11zM246.2 238.2h2.11v6.15h-2.11zM246.2 250.3h2.11v6.15h-2.11zM248.1 244.3h2.11v6.15h-2.11zM250.1 256.4h2.11v6.15h-2.11zM252.0 238.2h2.11v6.15h-2.11zM252.0 244.3h2.11v6.15h-2.11zM252.0 250.3h2.11v6.15h-2.11zM254.0 244.3h2.11v6.15h-2.11zM255.9 256.4h2.11v6.15h-2.11zM257.9 244.3h2.11v6.15h-2.11zM263.8 250.3h2.11v6.15h-2.11zM265.7 244.3h2.11v6.15h-2.11zM267.7 244.3h2.11v6.15h-2.11zM267.7 256.4h2.11v6.15h-2.11zM271.6 244.3h2.11v6.15h-2.11zM271.6 250.3h2.11v6.15h-2.11zM271.6 256.4h2.11v6.15h-2.11zM273.5 256.4h2.11v6.15h-2.11zM275.5 244.3h2.11v6.15h-2.11zM275.5 256.4h2.11v6.15h-2.11zM277.5 244.3h2.11v6.15h-2.11zM277.5 250.3h2.11v6.15h-2.11zM277.5 256.4h2.11v6.15h-2.11zM279.4 250.3h2.11v6.15h-2.11zM283.3 250.3h2.11v6.15h-2.11zM283.3 256.4h2.11v6.15h-2.11zM287.2 244.3h2.11v6.15h-2.11zM287.2 250.3h2.11v6.15h-2.11zM289.2 244.3h2.11v6.15h-2.11zM293.1 238.2h2.11v6.15h-2.11zM293.1 256.4h2.11v6.15h-2.11zM295.1 250.3h2.11v6.15h-2.11zM295.1 256.4h2.11v6.15h-2.11zM297.0 244.3h2.11v6.15h-2.11zM297.0 256.4h2.11v6.15h-2.11zM300.9 256.4h2.11v6.15h-2.11zM302.9 250.3h2.11v6.15h-2.11zM302.9 256.4h2.11v6.15h-2.11zM306.8 244.3h2.11v6.15h-2.11zM308.7 256.4h2.11v6.15h-2.11zM310.7 244.3h2.11v6.15h-2.11zM310.7 256.4h2.11v6.15h-2.11zM312.7 244.3h2.11v6.15h-2.11zM314.6 256.4h2.11v6.15h-2.11zM316.6 244.3h2.11v6.15h-2.11zM316.6 256.4h2.11v6.15h-2.11zM318.5 244.3h2.11v6.15h-2.11zM318.5 250.3h2.11v6.15h-2.11zM320.5 250.3h2.11v6.15h-2.11zM322.4 250.3h2.11v6.15h-2.11zM324.4 250.3h2.11v6.15h-2.11zM326.3 244.3h2.11v6.15h-2.11zM328.3 256.4h2.11v6.15h-2.11zM330.3 250.3h2.11v6.15h-2.11zM332.2 244.3h2.11v6.15h-2.11zM332.2 250.3h2.11v6.15h-2.11zM334.2 250.3h2.11v6.15h-2.11zM334.2 256.4h2.11v6.15h-2.11zM336.1 244.3h2.11v6.15h-2.11zM338.1 256.4h2.11v6.15h-2.11zM340.0 244.3h2.11v6.15h-2.11zM340.0 250.3h2.11v6.15h-2.11zM342.0 256.4h2.11v6.15h-2.11zM345.9 244.3h2.11v6.15h-2.11zM345.9 250.3h2.11v6.15h-2.11zM347.9 256.4h2.11v6.15h-2.11zM349.8 256.4h2.11v6.15h-2.11zM351.8 244.3h2.11v6.15h-2.11zM353.7 244.3h2.11v6.15h-2.11zM353.7 250.3h2.11v6.15h-2.11zM353.7 256.4h2.11v6.15h-2.11zM355.7 244.3h2.11v6.15h-2.11zM357.6 238.2h2.11v6.15h-2.11zM357.6 250.3h2.11v6.15h-2.11zM359.6 244.3h2.11v6.15h-2.11zM361.5 250.3h2.11v6.15h-2.11zM363.5 256.4h2.11v6.15h-2.11zM365.4 256.4h2.11v6.15h-2.11zM367.4 250.3h2.11v6.15h-2.11zM369.4 244.3h2.11v6.15h-2.11zM375.2 244.3h2.11v6.15h-2.11zM375.2 256.4h2.11v6.15h-2.11zM379.1 256.4h2.11v6.15h-2.11zM383.0 256.4h2.11v6.15h-2.11zM385.0 256.4h2.11v6.15h-2.11zM387.0 256.4h2.11v6.15h-2.11zM390.9 244.3h2.11v6.15h-2.11zM392.8 256.4h2.11v6.15h-2.11zM394.8 256.4h2.11v6.15h-2.11zM396.7 244.3h2.11v6.15h-2.11zM396.7 250.3h2.11v6.15h-2.11zM396.7 256.4h2.11v6.15h-2.11zM400.6 256.4h2.11v6.15h-2.11zM408.5 250.3h2.11v6.15h-2.11zM408.5 256.4h2.11v6.15h-2.11zM410.4 250.3h2.11v6.15h-2.11zM412.4 238.2h2.11v6.15h-2.11zM412.4 244.3h2.11v6.15h-2.11zM412.4 250.3h2.11v6.15h-2.11zM412.4 256.4h2.11v6.15h-2.11zM414.3 256.4h2.11v6.15h-2.11zM416.3 250.3h2.11v6.15h-2.11zM420.2 244.3h2.11v6.15h-2.11zM420.2 256.4h2.11v6.15h-2.11zM422.2 256.4h2.11v6.15h-2.11zM424.1 250.3h2.11v6.15h-2.11zM424.1 256.4h2.11v6.15h-2.11zM428.0 250.3h2.11v6.15h-2.11zM428.0 256.4h2.11v6.15h-2.11zM430.0 256.4h2.11v6.15h-2.11zM433.9 244.3h2.11v6.15h-2.11zM433.9 250.3h2.11v6.15h-2.11zM435.8 244.3h2.11v6.15h-2.11zM435.8 250.3h2.11v6.15h-2.11zM439.8 256.4h2.11v6.15h-2.11zM441.7 250.3h2.11v6.15h-2.11zM443.7 244.3h2.11v6.15h-2.11zM445.6 244.3h2.11v6.15h-2.11zM447.6 244.3h2.11v6.15h-2.11zM449.5 244.3h2.11v6.15h-2.11zM451.5 250.3h2.11v6.15h-2.11zM453.4 250.3h2.11v6.15h-2.11zM455.4 256.4h2.11v6.15h-2.11zM457.4 256.4h2.11v6.15h-2.11zM459.3 250.3h2.11v6.15h-2.11zM461.3 256.4h2.11v6.15h-2.11zM463.2 244.3h2.11v6.15h-2.11zM463.2 256.4h2.11v6.15h-2.11zM465.2 244.3h2.11v6.15h-2.11zM465.2 250.3h2.11v6.15h-2.11zM469.1 244.3h2.11v6.15h-2.11zM469.1 256.4h2.11v6.15h-2.11zM473.0 244.3h2.11v6.15h-2.11zM474.9 256.4h2.11v6.15h-2.11zM476.9 244.3h2.11v6.15h-2.11zM478.9 244.3h2.11v6.15h-2.11zM478.9 256.4h2.11v6.15h-2.11zM480.8 250.3h2.11v6.15h-2.11zM482.8 256.4h2.11v6.15h-2.11zM484.7 244.3h2.11v6.15h-2.11zM484.7 250.3h2.11v6.15h-2.11zM486.7 250.3h2.11v6.15h-2.11zM486.7 256.4h2.11v6.15h-2.11zM488.6 256.4h2.11v6.15h-2.11zM492.5 244.3h2.11v6.15h-2.11zM492.5 250.3h2.11v6.15h-2.11zM494.5 244.3h2.11v6.15h-2.11zM500.4 244.3h2.11v6.15h-2.11zM504.3 250.3h2.11v6.15h-2.11zM506.2 244.3h2.11v6.15h-2.11zM506.2 250.3h2.11v6.15h-2.11zM506.2 256.4h2.11v6.15h-2.11zM508.2 244.3h2.11v6.15h-2.11zM510.1 250.3h2.11v6.15h-2.11zM512.1 250.3h2.11v6.15h-2.11zM514.1 256.4h2.11v6.15h-2.11zM516.0 244.3h2.11v6.15h-2.11zM516.0 250.3h2.11v6.15h-2.11zM516.0 256.4h2.11v6.15h-2.11zM518.0 244.3h2.11v6.15h-2.11zM518.0 250.3h2.11v6.15h-2.11zM518.0 256.4h2.11v6.15h-2.11zM523.8 244.3h2.11v6.15h-2.11zM525.8 244.3h2.11v6.15h-2.11zM525.8 256.4h2.11v6.15h-2.11zM527.7 244.3h2.11v6.15h-2.11zM529.7 250.3h2.11v6.15h-2.11zM531.7 256.4h2.11v6.15h-2.11zM533.6 244.3h2.11v6.15h-2.11zM533.6 250.3h2.11v6.15h-2.11zM533.6 256.4h2.11v6.15h-2.11zM535.6 244.3h2.11v6.15h-2.11zM547.3 244.3h2.11v6.15h-2.11zM549.3 244.3h2.11v6.15h-2.11zM551.2 256.4h2.11v6.15h-2.11zM553.2 238.2h2.11v6.15h-2.11zM557.1 250.3h2.11v6.15h-2.11zM557.1 256.4h2.11v6.15h-2.11zM561.0 244.3h2.11v6.15h-2.11zM561.0 250.3h2.11v6.15h-2.11zM562.9 250.3h2.11v6.15h-2.11zM566.9 256.4h2.11v6.15h-2.11zM568.8 238.2h2.11v6.15h-2.11zM568.8 244.3h2.11v6.15h-2.11zM570.8 256.4h2.11v6.15h-2.11zM572.7 250.3h2.11v6.15h-2.11zM576.6 238.2h2.11v6.15h-2.11zM576.6 250.3h2.11v6.15h-2.11zM578.6 256.4h2.11v6.15h-2.11zM584.4 244.3h2.11v6.15h-2.11zM590.3 250.3h2.11v6.15h-2.11zM590.3 256.4h2.11v6.15h-2.11zM594.2 244.3h2.11v6.15h-2.11zM596.2 244.3h2.11v6.15h-2.11zM598.1 256.4h2.11v6.15h-2.11zM602.0 256.4h2.11v6.15h-2.11zM604.0 244.3h2.11v6.15h-2.11zM604.0 256.4h2.11v6.15h-2.11zM606.0 244.3h2.11v6.15h-2.11zM606.0 256.4h2.11v6.15h-2.11zM607.9 244.3h2.11v6.15h-2.11zM607.9 250.3h2.11v6.15h-2.11zM607.9 256.4h2.11v6.15h-2.11zM609.9 250.3h2.11v6.15h-2.11zM613.8 244.3h2.11v6.15h-2.11zM613.8 250.3h2.11v6.15h-2.11zM613.8 256.4h2.11v6.15h-2.11zM615.7 250.3h2.11v6.15h-2.11zM615.7 256.4h2.11v6.15h-2.11zM619.6 250.3h2.11v6.15h-2.11zM621.6 244.3h2.11v6.15h-2.11zM621.6 250.3h2.11v6.15h-2.11zM623.6 244.3h2.11v6.15h-2.11zM625.5 244.3h2.11v6.15h-2.11zM627.5 250.3h2.11v6.15h-2.11zM627.5 256.4h2.11v6.15h-2.11zM629.4 244.3h2.11v6.15h-2.11zM635.3 244.3h2.11v6.15h-2.11zM637.2 244.3h2.11v6.15h-2.11zM639.2 244.3h2.11v6.15h-2.11zM639.2 256.4h2.11v6.15h-2.11zM643.1 250.3h2.11v6.15h-2.11zM643.1 256.4h2.11v6.15h-2.11zM645.1 250.3h2.11v6.15h-2.11zM647.0 256.4h2.11v6.15h-2.11zM649.0 244.3h2.11v6.15h-2.11zM649.0 256.4h2.11v6.15h-2.11zM650.9 250.3h2.11v6.15h-2.11zM650.9 256.4h2.11v6.15h-2.11zM652.9 244.3h2.11v6.15h-2.11zM654.8 244.3h2.11v6.15h-2.11zM658.8 244.3h2.11v6.15h-2.11zM658.8 256.4h2.11v6.15h-2.11zM660.7 244.3h2.11v6.15h-2.11zM660.7 256.4h2.11v6.15h-2.11zM664.6 256.4h2.11v6.15h-2.11zM666.6 244.3h2.11v6.15h-2.11zM666.6 250.3h2.11v6.15h-2.11zM668.5 238.2h2.11v6.15h-2.11zM668.5 244.3h2.11v6.15h-2.11zM668.5 256.4h2.11v6.15h-2.11zM670.5 250.3h2.11v6.15h-2.11zM670.5 256.4h2.11v6.15h-2.11zM672.4 244.3h2.11v6.15h-2.11zM672.4 250.3h2.11v6.15h-2.11zM678.3 244.3h2.11v6.15h-2.11zM680.3 250.3h2.11v6.15h-2.11zM682.2 256.4h2.11v6.15h-2.11zM684.2 244.3h2.11v6.15h-2.11zM688.1 244.3h2.11v6.15h-2.11zM690.0 256.4h2.11v6.15h-2.11zM692.0 256.4h2.11v6.15h-2.11zM693.9 244.3h2.11v6.15h-2.11zM693.9 250.3h2.11v6.15h-2.11zM693.9 256.4h2.11v6.15h-2.11zM695.9 244.3h2.11v6.15h-2.11zM695.9 256.4h2.11v6.15h-2.11zM697.9 256.4h2.11v6.15h-2.11zM699.8 244.3h2.11v6.15h-2.11zM699.8 256.4h2.11v6.15h-2.11zM701.8 244.3h2.11v6.15h-2.11zM703.7 244.3h2.11v6.15h-2.11zM703.7 256.4h2.11v6.15h-2.11zM705.7 250.3h2.11v6.15h-2.11zM707.6 244.3h2.11v6.15h-2.11zM711.5 244.3h2.11v6.15h-2.11zM711.5 250.3h2.11v6.15h-2.11zM717.4 250.3h2.11v6.15h-2.11zM719.4 250.3h2.11v6.15h-2.11zM719.4 256.4h2.11v6.15h-2.11zM723.3 250.3h2.11v6.15h-2.11zM723.3 256.4h2.11v6.15h-2.11zM725.2 256.4h2.11v6.15h-2.11zM727.2 244.3h2.11v6.15h-2.11zM727.2 250.3h2.11v6.15h-2.11zM729.1 244.3h2.11v6.15h-2.11zM729.1 256.4h2.11v6.15h-2.11zM733.1 250.3h2.11v6.15h-2.11zM735.0 244.3h2.11v6.15h-2.11zM737.0 250.3h2.11v6.15h-2.11zM737.0 256.4h2.11v6.15h-2.11zM738.9 250.3h2.11v6.15h-2.11zM740.9 250.3h2.11v6.15h-2.11zM742.8 238.2h2.11v6.15h-2.11zM742.8 250.3h2.11v6.15h-2.11zM742.8 256.4h2.11v6.15h-2.11zM744.8 256.4h2.11v6.15h-2.11zM746.7 250.3h2.11v6.15h-2.11zM746.7 256.4h2.11v6.15h-2.11z" fill="#8ecbbf"/><path d="M91.7 244.3h2.11v6.15h-2.11zM91.7 250.3h2.11v6.15h-2.11zM93.7 244.3h2.11v6.15h-2.11zM93.7 256.4h2.11v6.15h-2.11zM95.6 244.3h2.11v6.15h-2.11zM99.5 244.3h2.11v6.15h-2.11zM99.5 250.3h2.11v6.15h-2.11zM101.5 244.3h2.11v6.15h-2.11zM101.5 250.3h2.11v6.15h-2.11zM103.4 250.3h2.11v6.15h-2.11zM105.4 250.3h2.11v6.15h-2.11zM109.3 244.3h2.11v6.15h-2.11zM109.3 250.3h2.11v6.15h-2.11zM111.3 244.3h2.11v6.15h-2.11zM113.2 250.3h2.11v6.15h-2.11zM117.1 244.3h2.11v6.15h-2.11zM119.1 244.3h2.11v6.15h-2.11zM121.0 250.3h2.11v6.15h-2.11zM123.0 244.3h2.11v6.15h-2.11zM124.9 244.3h2.11v6.15h-2.11zM126.9 244.3h2.11v6.15h-2.11zM130.8 250.3h2.11v6.15h-2.11zM136.7 244.3h2.11v6.15h-2.11zM136.7 250.3h2.11v6.15h-2.11zM148.4 250.3h2.11v6.15h-2.11zM150.4 244.3h2.11v6.15h-2.11zM162.1 250.3h2.11v6.15h-2.11zM164.0 250.3h2.11v6.15h-2.11zM166.0 244.3h2.11v6.15h-2.11zM166.0 250.3h2.11v6.15h-2.11zM168.0 250.3h2.11v6.15h-2.11zM169.9 244.3h2.11v6.15h-2.11zM171.9 250.3h2.11v6.15h-2.11zM173.8 244.3h2.11v6.15h-2.11zM173.8 250.3h2.11v6.15h-2.11zM175.8 244.3h2.11v6.15h-2.11zM177.7 250.3h2.11v6.15h-2.11zM185.6 250.3h2.11v6.15h-2.11zM187.5 250.3h2.11v6.15h-2.11zM199.2 244.3h2.11v6.15h-2.11zM203.2 244.3h2.11v6.15h-2.11zM205.1 238.2h2.11v6.15h-2.11zM205.1 256.4h2.11v6.15h-2.11zM207.1 250.3h2.11v6.15h-2.11zM209.0 250.3h2.11v6.15h-2.11zM211.0 256.4h2.11v6.15h-2.11zM216.8 250.3h2.11v6.15h-2.11zM220.8 244.3h2.11v6.15h-2.11zM222.7 244.3h2.11v6.15h-2.11zM222.7 256.4h2.11v6.15h-2.11zM224.7 250.3h2.11v6.15h-2.11zM226.6 244.3h2.11v6.15h-2.11zM230.5 250.3h2.11v6.15h-2.11zM232.5 244.3h2.11v6.15h-2.11zM234.4 244.3h2.11v6.15h-2.11zM238.4 250.3h2.11v6.15h-2.11zM242.3 244.3h2.11v6.15h-2.11zM242.3 250.3h2.11v6.15h-2.11zM248.1 256.4h2.11v6.15h-2.11zM252.0 256.4h2.11v6.15h-2.11zM254.0 238.2h2.11v6.15h-2.11zM255.9 244.3h2.11v6.15h-2.11zM259.9 244.3h2.11v6.15h-2.11zM259.9 250.3h2.11v6.15h-2.11zM261.8 244.3h2.11v6.15h-2.11zM261.8 256.4h2.11v6.15h-2.11zM263.8 238.2h2.11v6.15h-2.11zM267.7 250.3h2.11v6.15h-2.11zM269.6 244.3h2.11v6.15h-2.11zM273.5 250.3h2.11v6.15h-2.11zM281.4 244.3h2.11v6.15h-2.11zM281.4 250.3h2.11v6.15h-2.11zM285.3 250.3h2.11v6.15h-2.11zM289.2 250.3h2.11v6.15h-2.11zM291.1 244.3h2.11v6.15h-2.11zM291.1 250.3h2.11v6.15h-2.11zM291.1 256.4h2.11v6.15h-2.11zM304.8 250.3h2.11v6.15h-2.11zM310.7 250.3h2.11v6.15h-2.11zM314.6 250.3h2.11v6.15h-2.11zM322.4 256.4h2.11v6.15h-2.11zM326.3 250.3h2.11v6.15h-2.11zM336.1 250.3h2.11v6.15h-2.11zM338.1 244.3h2.11v6.15h-2.11zM342.0 244.3h2.11v6.15h-2.11zM343.9 250.3h2.11v6.15h-2.11zM349.8 250.3h2.11v6.15h-2.11zM351.8 250.3h2.11v6.15h-2.11zM355.7 250.3h2.11v6.15h-2.11zM355.7 256.4h2.11v6.15h-2.11zM357.6 244.3h2.11v6.15h-2.11zM363.5 244.3h2.11v6.15h-2.11zM363.5 250.3h2.11v6.15h-2.11zM365.4 250.3h2.11v6.15h-2.11zM367.4 244.3h2.11v6.15h-2.11zM367.4 256.4h2.11v6.15h-2.11zM373.3 250.3h2.11v6.15h-2.11zM375.2 250.3h2.11v6.15h-2.11zM377.2 250.3h2.11v6.15h-2.11zM379.1 238.2h2.11v6.15h-2.11zM379.1 244.3h2.11v6.15h-2.11zM379.1 250.3h2.11v6.15h-2.11zM381.1 244.3h2.11v6.15h-2.11zM381.1 250.3h2.11v6.15h-2.11zM381.1 256.4h2.11v6.15h-2.11zM383.0 250.3h2.11v6.15h-2.11zM385.0 244.3h2.11v6.15h-2.11zM385.0 250.3h2.11v6.15h-2.11zM387.0 250.3h2.11v6.15h-2.11zM398.7 256.4h2.11v6.15h-2.11zM400.6 244.3h2.11v6.15h-2.11zM402.6 250.3h2.11v6.15h-2.11zM404.6 250.3h2.11v6.15h-2.11zM406.5 256.4h2.11v6.15h-2.11zM408.5 244.3h2.11v6.15h-2.11zM410.4 244.3h2.11v6.15h-2.11zM410.4 256.4h2.11v6.15h-2.11zM414.3 244.3h2.11v6.15h-2.11zM416.3 238.2h2.11v6.15h-2.11zM416.3 256.4h2.11v6.15h-2.11zM418.2 244.3h2.11v6.15h-2.11zM420.2 250.3h2.11v6.15h-2.11zM422.2 244.3h2.11v6.15h-2.11zM424.1 244.3h2.11v6.15h-2.11zM428.0 244.3h2.11v6.15h-2.11zM431.9 244.3h2.11v6.15h-2.11zM431.9 250.3h2.11v6.15h-2.11zM437.8 244.3h2.11v6.15h-2.11zM437.8 256.4h2.11v6.15h-2.11zM439.8 244.3h2.11v6.15h-2.11zM439.8 250.3h2.11v6.15h-2.11zM445.6 250.3h2.11v6.15h-2.11zM451.5 244.3h2.11v6.15h-2.11zM451.5 256.4h2.11v6.15h-2.11zM453.4 244.3h2.11v6.15h-2.11zM453.4 256.4h2.11v6.15h-2.11zM459.3 256.4h2.11v6.15h-2.11zM461.3 244.3h2.11v6.15h-2.11zM467.1 244.3h2.11v6.15h-2.11zM467.1 250.3h2.11v6.15h-2.11zM471.0 244.3h2.11v6.15h-2.11zM474.9 244.3h2.11v6.15h-2.11zM474.9 250.3h2.11v6.15h-2.11zM478.9 250.3h2.11v6.15h-2.11zM484.7 256.4h2.11v6.15h-2.11zM486.7 244.3h2.11v6.15h-2.11zM488.6 244.3h2.11v6.15h-2.11zM492.5 256.4h2.11v6.15h-2.11zM494.5 250.3h2.11v6.15h-2.11zM496.5 250.3h2.11v6.15h-2.11zM498.4 250.3h2.11v6.15h-2.11zM498.4 256.4h2.11v6.15h-2.11zM500.4 250.3h2.11v6.15h-2.11zM502.3 250.3h2.11v6.15h-2.11zM504.3 244.3h2.11v6.15h-2.11zM510.1 256.4h2.11v6.15h-2.11zM512.1 244.3h2.11v6.15h-2.11zM514.1 250.3h2.11v6.15h-2.11zM519.9 244.3h2.11v6.15h-2.11zM519.9 250.3h2.11v6.15h-2.11zM521.9 256.4h2.11v6.15h-2.11zM527.7 250.3h2.11v6.15h-2.11zM531.7 244.3h2.11v6.15h-2.11zM531.7 250.3h2.11v6.15h-2.11zM535.6 250.3h2.11v6.15h-2.11zM535.6 256.4h2.11v6.15h-2.11zM537.5 244.3h2.11v6.15h-2.11zM537.5 256.4h2.11v6.15h-2.11zM539.5 244.3h2.11v6.15h-2.11zM543.4 244.3h2.11v6.15h-2.11zM543.4 250.3h2.11v6.15h-2.11zM545.3 244.3h2.11v6.15h-2.11zM545.3 256.4h2.11v6.15h-2.11zM549.3 250.3h2.11v6.15h-2.11zM551.2 250.3h2.11v6.15h-2.11zM553.2 244.3h2.11v6.15h-2.11zM555.1 244.3h2.11v6.15h-2.11zM555.1 250.3h2.11v6.15h-2.11zM557.1 244.3h2.11v6.15h-2.11zM559.0 244.3h2.11v6.15h-2.11zM561.0 256.4h2.11v6.15h-2.11zM562.9 244.3h2.11v6.15h-2.11zM564.9 244.3h2.11v6.15h-2.11zM564.9 250.3h2.11v6.15h-2.11zM566.9 244.3h2.11v6.15h-2.11zM566.9 250.3h2.11v6.15h-2.11zM578.6 244.3h2.11v6.15h-2.11zM578.6 250.3h2.11v6.15h-2.11zM580.5 250.3h2.11v6.15h-2.11zM586.4 244.3h2.11v6.15h-2.11zM588.4 244.3h2.11v6.15h-2.11zM588.4 250.3h2.11v6.15h-2.11zM596.2 256.4h2.11v6.15h-2.11zM598.1 244.3h2.11v6.15h-2.11zM598.1 250.3h2.11v6.15h-2.11zM600.1 244.3h2.11v6.15h-2.11zM602.0 250.3h2.11v6.15h-2.11zM604.0 250.3h2.11v6.15h-2.11zM609.9 244.3h2.11v6.15h-2.11zM617.7 250.3h2.11v6.15h-2.11zM619.6 244.3h2.11v6.15h-2.11zM629.4 250.3h2.11v6.15h-2.11zM629.4 256.4h2.11v6.15h-2.11zM633.3 244.3h2.11v6.15h-2.11zM635.3 250.3h2.11v6.15h-2.11zM637.2 250.3h2.11v6.15h-2.11zM643.1 244.3h2.11v6.15h-2.11zM647.0 238.2h2.11v6.15h-2.11zM649.0 238.2h2.11v6.15h-2.11zM652.9 250.3h2.11v6.15h-2.11zM654.8 256.4h2.11v6.15h-2.11zM656.8 238.2h2.11v6.15h-2.11zM656.8 250.3h2.11v6.15h-2.11zM660.7 250.3h2.11v6.15h-2.11zM662.7 256.4h2.11v6.15h-2.11zM664.6 250.3h2.11v6.15h-2.11zM668.5 250.3h2.11v6.15h-2.11zM676.4 250.3h2.11v6.15h-2.11zM678.3 250.3h2.11v6.15h-2.11zM682.2 244.3h2.11v6.15h-2.11zM682.2 250.3h2.11v6.15h-2.11zM686.1 256.4h2.11v6.15h-2.11zM690.0 244.3h2.11v6.15h-2.11zM692.0 244.3h2.11v6.15h-2.11zM697.9 250.3h2.11v6.15h-2.11zM699.8 250.3h2.11v6.15h-2.11zM701.8 250.3h2.11v6.15h-2.11zM707.6 250.3h2.11v6.15h-2.11zM707.6 256.4h2.11v6.15h-2.11zM709.6 256.4h2.11v6.15h-2.11zM713.5 250.3h2.11v6.15h-2.11zM715.5 244.3h2.11v6.15h-2.11zM715.5 250.3h2.11v6.15h-2.11zM717.4 244.3h2.11v6.15h-2.11zM719.4 244.3h2.11v6.15h-2.11zM723.3 244.3h2.11v6.15h-2.11zM729.1 250.3h2.11v6.15h-2.11zM731.1 250.3h2.11v6.15h-2.11zM733.1 244.3h2.11v6.15h-2.11zM737.0 244.3h2.11v6.15h-2.11zM738.9 244.3h2.11v6.15h-2.11zM740.9 244.3h2.11v6.15h-2.11zM742.8 244.3h2.11v6.15h-2.11zM744.8 244.3h2.11v6.15h-2.11zM109.4 145.1h2.11v6.05h-2.11zM210.0 149.5h2.11v6.05h-2.11zM233.0 184.5h2.11v6.05h-2.11zM262.5 149.5h2.11v6.05h-2.11zM263.8 174.7h2.11v6.05h-2.11zM265.1 174.7h2.11v6.05h-2.11zM267.1 156.1h2.11v6.05h-2.11zM285.5 133.0h2.11v6.05h-2.11zM303.9 184.5h2.11v6.05h-2.11zM319.7 162.6h2.11v6.05h-2.11zM347.3 149.5h2.11v6.05h-2.11zM369.0 156.1h2.11v6.05h-2.11zM376.2 174.7h2.11v6.05h-2.11zM436.6 138.5h2.11v6.05h-2.11zM460.3 149.5h2.11v6.05h-2.11zM555.5 121.0h2.11v6.05h-2.11zM555.5 174.7h2.11v6.05h-2.11zM683.0 149.5h2.11v6.05h-2.11zM720.4 107.8h2.11v6.05h-2.11zM732.3 156.1h2.11v6.05h-2.11zM732.3 184.5h2.11v6.05h-2.11zM157.4 226.2h2.11v6.05h-2.11zM164.0 226.2h2.11v6.05h-2.11zM191.6 232.8h2.11v6.05h-2.11zM208.6 226.2h2.11v6.05h-2.11zM211.9 226.2h2.11v6.05h-2.11zM228.4 226.2h2.11v6.05h-2.11zM254.0 226.2h2.11v6.05h-2.11zM262.5 232.8h2.11v6.05h-2.11zM298.7 232.8h2.11v6.05h-2.11zM318.4 239.3h2.11v6.05h-2.11zM439.9 226.2h2.11v6.05h-2.11zM443.2 226.2h2.11v6.05h-2.11zM449.8 232.8h2.11v6.05h-2.11zM533.2 226.2h2.11v6.05h-2.11zM546.3 226.2h2.11v6.05h-2.11zM571.3 239.3h2.11v6.05h-2.11zM602.2 226.2h2.11v6.05h-2.11zM702.7 226.2h2.11v6.05h-2.11zM723.7 226.2h2.11v6.05h-2.11zM190.2 262.4h2.11v6.05h-2.11zM233.6 268.9h2.11v6.05h-2.11zM280.3 268.9h2.11v6.05h-2.11zM284.2 262.4h2.11v6.05h-2.11zM370.9 268.9h2.11v6.05h-2.11zM390.6 268.9h2.11v6.05h-2.11zM538.5 268.9h2.11v6.05h-2.11zM595.6 268.9h2.11v6.05h-2.11zM627.2 268.9h2.11v6.05h-2.11zM652.1 268.9h2.11v6.05h-2.11zM662.0 268.9h2.11v6.05h-2.11zM687.6 268.9h2.11v6.05h-2.11zM694.8 268.9h2.11v6.05h-2.11z" fill="#72bbbd"/><path d="M97.6 244.3h2.11v6.15h-2.11zM107.3 250.3h2.11v6.15h-2.11zM107.3 256.4h2.11v6.15h-2.11zM111.3 250.3h2.11v6.15h-2.11zM117.1 250.3h2.11v6.15h-2.11zM119.1 250.3h2.11v6.15h-2.11zM134.7 256.4h2.11v6.15h-2.11zM140.6 250.3h2.11v6.15h-2.11zM142.5 244.3h2.11v6.15h-2.11zM144.5 256.4h2.11v6.15h-2.11zM150.4 250.3h2.11v6.15h-2.11zM152.3 244.3h2.11v6.15h-2.11zM152.3 250.3h2.11v6.15h-2.11zM160.1 250.3h2.11v6.15h-2.11zM168.0 244.3h2.11v6.15h-2.11zM169.9 250.3h2.11v6.15h-2.11zM171.9 244.3h2.11v6.15h-2.11zM181.6 250.3h2.11v6.15h-2.11zM191.4 250.3h2.11v6.15h-2.11zM193.4 244.3h2.11v6.15h-2.11zM195.3 250.3h2.11v6.15h-2.11zM197.3 244.3h2.11v6.15h-2.11zM197.3 250.3h2.11v6.15h-2.11zM197.3 256.4h2.11v6.15h-2.11zM207.1 244.3h2.11v6.15h-2.11zM209.0 244.3h2.11v6.15h-2.11zM211.0 244.3h2.11v6.15h-2.11zM220.8 250.3h2.11v6.15h-2.11zM224.7 244.3h2.11v6.15h-2.11zM226.6 250.3h2.11v6.15h-2.11zM228.6 250.3h2.11v6.15h-2.11zM232.5 250.3h2.11v6.15h-2.11zM234.4 250.3h2.11v6.15h-2.11zM238.4 244.3h2.11v6.15h-2.11zM246.2 256.4h2.11v6.15h-2.11zM250.1 244.3h2.11v6.15h-2.11zM254.0 250.3h2.11v6.15h-2.11zM257.9 250.3h2.11v6.15h-2.11zM257.9 256.4h2.11v6.15h-2.11zM263.8 244.3h2.11v6.15h-2.11zM263.8 256.4h2.11v6.15h-2.11zM265.7 250.3h2.11v6.15h-2.11zM273.5 244.3h2.11v6.15h-2.11zM279.4 244.3h2.11v6.15h-2.11zM293.1 250.3h2.11v6.15h-2.11zM299.0 244.3h2.11v6.15h-2.11zM299.0 250.3h2.11v6.15h-2.11zM300.9 250.3h2.11v6.15h-2.11zM304.8 256.4h2.11v6.15h-2.11zM312.7 256.4h2.11v6.15h-2.11zM314.6 244.3h2.11v6.15h-2.11zM322.4 244.3h2.11v6.15h-2.11zM324.4 256.4h2.11v6.15h-2.11zM328.3 244.3h2.11v6.15h-2.11zM328.3 250.3h2.11v6.15h-2.11zM330.3 244.3h2.11v6.15h-2.11zM338.1 250.3h2.11v6.15h-2.11zM340.0 256.4h2.11v6.15h-2.11zM345.9 256.4h2.11v6.15h-2.11zM347.9 250.3h2.11v6.15h-2.11zM359.6 250.3h2.11v6.15h-2.11zM361.5 244.3h2.11v6.15h-2.11zM373.3 244.3h2.11v6.15h-2.11zM383.0 244.3h2.11v6.15h-2.11zM387.0 244.3h2.11v6.15h-2.11zM388.9 250.3h2.11v6.15h-2.11zM390.9 256.4h2.11v6.15h-2.11zM392.8 244.3h2.11v6.15h-2.11zM394.8 250.3h2.11v6.15h-2.11zM400.6 250.3h2.11v6.15h-2.11zM406.5 244.3h2.11v6.15h-2.11zM406.5 250.3h2.11v6.15h-2.11zM416.3 244.3h2.11v6.15h-2.11zM426.1 238.2h2.11v6.15h-2.11zM426.1 244.3h2.11v6.15h-2.11zM426.1 250.3h2.11v6.15h-2.11zM430.0 244.3h2.11v6.15h-2.11zM430.0 250.3h2.11v6.15h-2.11zM435.8 256.4h2.11v6.15h-2.11zM441.7 256.4h2.11v6.15h-2.11zM443.7 250.3h2.11v6.15h-2.11zM449.5 250.3h2.11v6.15h-2.11zM455.4 250.3h2.11v6.15h-2.11zM457.4 244.3h2.11v6.15h-2.11zM457.4 250.3h2.11v6.15h-2.11zM459.3 244.3h2.11v6.15h-2.11zM461.3 250.3h2.11v6.15h-2.11zM467.1 256.4h2.11v6.15h-2.11zM469.1 238.2h2.11v6.15h-2.11zM471.0 250.3h2.11v6.15h-2.11zM473.0 250.3h2.11v6.15h-2.11zM476.9 250.3h2.11v6.15h-2.11zM482.8 250.3h2.11v6.15h-2.11zM488.6 250.3h2.11v6.15h-2.11zM490.6 244.3h2.11v6.15h-2.11zM490.6 250.3h2.11v6.15h-2.11zM502.3 244.3h2.11v6.15h-2.11zM508.2 250.3h2.11v6.15h-2.11zM510.1 244.3h2.11v6.15h-2.11zM514.1 244.3h2.11v6.15h-2.11zM521.9 244.3h2.11v6.15h-2.11zM521.9 250.3h2.11v6.15h-2.11zM525.8 250.3h2.11v6.15h-2.11zM529.7 244.3h2.11v6.15h-2.11zM539.5 256.4h2.11v6.15h-2.11zM541.4 250.3h2.11v6.15h-2.11zM545.3 250.3h2.11v6.15h-2.11zM551.2 244.3h2.11v6.15h-2.11zM553.2 250.3h2.11v6.15h-2.11zM559.0 250.3h2.11v6.15h-2.11zM564.9 256.4h2.11v6.15h-2.11zM568.8 256.4h2.11v6.15h-2.11zM570.8 244.3h2.11v6.15h-2.11zM570.8 250.3h2.11v6.15h-2.11zM572.7 244.3h2.11v6.15h-2.11zM576.6 244.3h2.11v6.15h-2.11zM580.5 244.3h2.11v6.15h-2.11zM582.5 244.3h2.11v6.15h-2.11zM590.3 244.3h2.11v6.15h-2.11zM592.3 244.3h2.11v6.15h-2.11zM592.3 250.3h2.11v6.15h-2.11zM594.2 250.3h2.11v6.15h-2.11zM596.2 250.3h2.11v6.15h-2.11zM600.1 250.3h2.11v6.15h-2.11zM609.9 238.2h2.11v6.15h-2.11zM611.8 250.3h2.11v6.15h-2.11zM623.6 250.3h2.11v6.15h-2.11zM627.5 244.3h2.11v6.15h-2.11zM637.2 256.4h2.11v6.15h-2.11zM639.2 250.3h2.11v6.15h-2.11zM641.2 256.4h2.11v6.15h-2.11zM645.1 256.4h2.11v6.15h-2.11zM647.0 250.3h2.11v6.15h-2.11zM650.9 244.3h2.11v6.15h-2.11zM654.8 250.3h2.11v6.15h-2.11zM656.8 244.3h2.11v6.15h-2.11zM656.8 256.4h2.11v6.15h-2.11zM658.8 250.3h2.11v6.15h-2.11zM662.7 244.3h2.11v6.15h-2.11zM662.7 250.3h2.11v6.15h-2.11zM664.6 238.2h2.11v6.15h-2.11zM666.6 238.2h2.11v6.15h-2.11zM670.5 244.3h2.11v6.15h-2.11zM672.4 256.4h2.11v6.15h-2.11zM674.4 244.3h2.11v6.15h-2.11zM674.4 250.3h2.11v6.15h-2.11zM676.4 244.3h2.11v6.15h-2.11zM680.3 244.3h2.11v6.15h-2.11zM680.3 256.4h2.11v6.15h-2.11zM686.1 244.3h2.11v6.15h-2.11zM686.1 250.3h2.11v6.15h-2.11zM695.9 250.3h2.11v6.15h-2.11zM697.9 244.3h2.11v6.15h-2.11zM701.8 256.4h2.11v6.15h-2.11zM703.7 250.3h2.11v6.15h-2.11zM705.7 244.3h2.11v6.15h-2.11zM709.6 244.3h2.11v6.15h-2.11zM709.6 250.3h2.11v6.15h-2.11zM721.3 250.3h2.11v6.15h-2.11zM725.2 244.3h2.11v6.15h-2.11zM733.1 256.4h2.11v6.15h-2.11zM735.0 250.3h2.11v6.15h-2.11zM746.7 244.3h2.11v6.15h-2.11z" fill="#5ba6bc"/><path d="M124.9 250.3h2.11v6.15h-2.11zM144.5 250.3h2.11v6.15h-2.11zM148.4 244.3h2.11v6.15h-2.11zM154.3 244.3h2.11v6.15h-2.11zM181.6 244.3h2.11v6.15h-2.11zM183.6 250.3h2.11v6.15h-2.11zM205.1 250.3h2.11v6.15h-2.11zM214.9 244.3h2.11v6.15h-2.11zM228.6 244.3h2.11v6.15h-2.11zM248.1 250.3h2.11v6.15h-2.11zM250.1 250.3h2.11v6.15h-2.11zM261.8 250.3h2.11v6.15h-2.11zM269.6 250.3h2.11v6.15h-2.11zM293.1 244.3h2.11v6.15h-2.11zM297.0 250.3h2.11v6.15h-2.11zM302.9 244.3h2.11v6.15h-2.11zM306.8 250.3h2.11v6.15h-2.11zM312.7 250.3h2.11v6.15h-2.11zM316.6 250.3h2.11v6.15h-2.11zM320.5 244.3h2.11v6.15h-2.11zM324.4 244.3h2.11v6.15h-2.11zM365.4 244.3h2.11v6.15h-2.11zM371.3 244.3h2.11v6.15h-2.11zM371.3 250.3h2.11v6.15h-2.11zM377.2 244.3h2.11v6.15h-2.11zM394.8 244.3h2.11v6.15h-2.11zM398.7 250.3h2.11v6.15h-2.11zM414.3 250.3h2.11v6.15h-2.11zM418.2 250.3h2.11v6.15h-2.11zM441.7 244.3h2.11v6.15h-2.11zM447.6 250.3h2.11v6.15h-2.11zM455.4 244.3h2.11v6.15h-2.11zM469.1 250.3h2.11v6.15h-2.11zM496.5 244.3h2.11v6.15h-2.11zM539.5 250.3h2.11v6.15h-2.11zM541.4 244.3h2.11v6.15h-2.11zM574.7 244.3h2.11v6.15h-2.11zM574.7 250.3h2.11v6.15h-2.11zM602.0 244.3h2.11v6.15h-2.11zM615.7 244.3h2.11v6.15h-2.11zM625.5 250.3h2.11v6.15h-2.11zM631.4 244.3h2.11v6.15h-2.11zM631.4 250.3h2.11v6.15h-2.11zM633.3 250.3h2.11v6.15h-2.11zM641.2 244.3h2.11v6.15h-2.11zM649.0 250.3h2.11v6.15h-2.11zM688.1 250.3h2.11v6.15h-2.11zM713.5 244.3h2.11v6.15h-2.11zM721.3 244.3h2.11v6.15h-2.11z" fill="#4b8fc2"/><path d="M105.4 244.3h2.11v6.15h-2.11zM156.2 250.3h2.11v6.15h-2.11zM158.2 250.3h2.11v6.15h-2.11zM183.6 244.3h2.11v6.15h-2.11zM222.7 250.3h2.11v6.15h-2.11zM236.4 250.3h2.11v6.15h-2.11zM246.2 244.3h2.11v6.15h-2.11zM275.5 250.3h2.11v6.15h-2.11zM283.3 244.3h2.11v6.15h-2.11zM300.9 244.3h2.11v6.15h-2.11zM343.9 244.3h2.11v6.15h-2.11zM482.8 244.3h2.11v6.15h-2.11zM498.4 244.3h2.11v6.15h-2.11zM547.3 250.3h2.11v6.15h-2.11zM641.2 250.3h2.11v6.15h-2.11zM647.0 244.3h2.11v6.15h-2.11zM684.2 250.3h2.11v6.15h-2.11z" fill="#3f6fbf"/><path d="M132.8 250.3h2.11v6.15h-2.11zM402.6 244.3h2.11v6.15h-2.11zM725.2 250.3h2.11v6.15h-2.11z" fill="#3f5ea8"/><path d="M166.0 244.3h2.11v6.15h-2.11zM168.0 244.3h2.11v6.15h-2.11z" fill="#3a4f8a"/><path d="M181.6 244.3h2.11v6.15h-2.11z" fill="#2d3340"/></svg><svg class="b" style="left:219.50px;top:797.60px;overflow:visible" width="17.80" height="15.60" fill="none" stroke="#3f4450" stroke-width="1.35" stroke-linecap="round" stroke-linejoin="round"><g transform="translate(0.675 0.675) scale(0.8658 0.7917) translate(-2.500 -3.500)" style="vector-effect:non-scaling-stroke"><path vector-effect="non-scaling-stroke" d="M2.5 3.5 H21.5 V21.5 L17.5 17.5 H2.5 Z M8 8.5 H16 M8 12.5 H16"/></g></svg><span id="t141" class="t" style="left:243.50px;top:799.03px;font-size:14.50px;color:#3f4450;font-weight:400;letter-spacing:-0.017px;">Caption this Query</span><svg class="b" style="left:369.70px;top:800.80px;overflow:visible" width="9.70" height="9.60" fill="none" stroke="#6b7180" stroke-width="1" stroke-linecap="round" stroke-linejoin="round"><g transform="translate(0.500 0.500) scale(0.4579 0.4526) translate(-2.500 -2.500)" style="vector-effect:non-scaling-stroke"><circle vector-effect="non-scaling-stroke" cx="12" cy="12" r="9.5"/><path vector-effect="non-scaling-stroke" d="M12 11 V17 M12 7 V7.5"/></g></svg><div class="b" style="left:1053.20px;top:390.20px;width:751.00px;height:388.60px;background:#fff;border:1px solid #cdd2e5;border-radius:3.5px;box-sizing:border-box;"></div><span id="t142" class="t" style="left:1073.30px;top:414.56px;font-size:12.10px;color:#4a4f5c;font-weight:400;letter-spacing:0.118px;">Nov 2 2022 17:48:41 – Nov 30 2022 16:48:41 UTC-05:00 (Granularity: 2 hr)</span><span id="t143" class="t" style="left:1074.60px;top:437.93px;font-size:14.50px;color:#2b303b;font-weight:400;letter-spacing:-0.991px;-webkit-text-stroke:0.40px #2b303b;">COUNT</span><div class="b" style="left:1127.00px;top:733.60px;width:656.50px;height:1.20px;background:#e4e8f1;"></div><span id="t144" class="t" style="left:1118.50px;top:728.87px;font-size:10.90px;color:#666c78;font-weight:400;letter-spacing:0.000px;transform:translateX(-100%);">0</span><div class="b" style="left:1127.00px;top:667.70px;width:656.50px;height:1.20px;background:#e4e8f1;"></div><span id="t145" class="t" style="left:1118.50px;top:662.97px;font-size:10.90px;color:#666c78;font-weight:400;letter-spacing:0.000px;transform:translateX(-100%);">500</span><div class="b" style="left:1127.00px;top:601.80px;width:656.50px;height:1.20px;background:#e4e8f1;"></div><span id="t146" class="t" style="left:1118.50px;top:597.07px;font-size:10.90px;color:#666c78;font-weight:400;letter-spacing:0.000px;transform:translateX(-100%);">1000</span><div class="b" style="left:1127.00px;top:535.90px;width:656.50px;height:1.20px;background:#e4e8f1;"></div><span id="t147" class="t" style="left:1118.50px;top:531.17px;font-size:10.90px;color:#666c78;font-weight:400;letter-spacing:0.000px;transform:translateX(-100%);">1500</span><div class="b" style="left:1127.00px;top:470.00px;width:656.50px;height:1.20px;background:#e4e8f1;"></div><span id="t148" class="t" style="left:1118.50px;top:465.27px;font-size:10.90px;color:#666c78;font-weight:400;letter-spacing:0.000px;transform:translateX(-100%);">2000</span><svg class="b" style="left:1114px;top:435.50px" width="5" height="325.00"><rect x="1.850" y="0" width="1.30" height="325.00" fill="#62666f"/></svg><span id="t149" class="t" style="left:1133.06px;top:741.36px;font-size:12.10px;color:#5f6673;font-weight:400;letter-spacing:-0.723px;transform:translateX(-50%);">Nov 3</span><span id="t150" class="t" style="left:1179.95px;top:741.36px;font-size:12.10px;color:#5f6673;font-weight:400;letter-spacing:-0.723px;transform:translateX(-50%);">Nov 5</span><span id="t151" class="t" style="left:1226.84px;top:741.36px;font-size:12.10px;color:#5f6673;font-weight:400;letter-spacing:-0.723px;transform:translateX(-50%);">Nov 7</span><span id="t152" class="t" style="left:1273.74px;top:741.36px;font-size:12.10px;color:#5f6673;font-weight:400;letter-spacing:-0.723px;transform:translateX(-50%);">Nov 9</span><span id="t153" class="t" style="left:1320.63px;top:741.36px;font-size:12.10px;color:#5f6673;font-weight:400;letter-spacing:-0.404px;transform:translateX(-50%);">Nov 11</span><span id="t154" class="t" style="left:1367.52px;top:741.36px;font-size:12.10px;color:#5f6673;font-weight:400;letter-spacing:-0.586px;transform:translateX(-50%);">Nov 13</span><span id="t155" class="t" style="left:1414.41px;top:741.36px;font-size:12.10px;color:#5f6673;font-weight:400;letter-spacing:-0.586px;transform:translateX(-50%);">Nov 15</span><span id="t156" class="t" style="left:1461.31px;top:741.36px;font-size:12.10px;color:#5f6673;font-weight:400;letter-spacing:-0.586px;transform:translateX(-50%);">Nov 17</span><span id="t157" class="t" style="left:1508.20px;top:741.36px;font-size:12.10px;color:#5f6673;font-weight:400;letter-spacing:-0.586px;transform:translateX(-50%);">Nov 19</span><span id="t158" class="t" style="left:1555.09px;top:741.36px;font-size:12.10px;color:#5f6673;font-weight:400;letter-spacing:-0.586px;transform:translateX(-50%);">Nov 21</span><span id="t159" class="t" style="left:1601.99px;top:741.36px;font-size:12.10px;color:#5f6673;font-weight:400;letter-spacing:-0.586px;transform:translateX(-50%);">Nov 23</span><span id="t160" class="t" style="left:1648.88px;top:741.36px;font-size:12.10px;color:#5f6673;font-weight:400;letter-spacing:-0.586px;transform:translateX(-50%);">Nov 25</span><span id="t161" class="t" style="left:1695.77px;top:741.36px;font-size:12.10px;color:#5f6673;font-weight:400;letter-spacing:-0.586px;transform:translateX(-50%);">Nov 27</span><span id="t162" class="t" style="left:1742.66px;top:741.36px;font-size:12.10px;color:#5f6673;font-weight:400;letter-spacing:-0.586px;transform:translateX(-50%);">Nov 29</span><svg class="b" style="left:1000.00px;top:400.00px;" width="880.00" height="400.00" viewBox="0 0 880 400" fill="none"><path d="M127.0 330.8l1.95 -1.1l1.95 3.1l1.95 -0.9l1.95 -1.8l1.95 -6.9l1.95 8.6l1.95 -3.9l1.95 2.6l1.95 -0.1l1.95 -1.7l1.95 2.8l1.95 -3.1l1.95 1.7l1.95 1.9l1.95 -9.4l1.95 8.3l1.95 -0.8l1.95 -0.1l1.95 0.8l1.95 -0.8l1.95 -3.1l1.95 3.2l1.95 0.5l1.95 -0.1l1.95 -1.2l1.95 -1.8l1.95 4.5l1.95 -1.0l1.95 -1.1l1.95 0.9l1.95 -0.9l1.95 -0.6l1.95 2.8l1.95 -0.1l1.95 0.1l1.95 0.7l1.95 -1.5l1.95 0.6l1.95 0.6l1.95 -1.9l1.95 -4.6l1.95 6.6l1.95 -2.9l1.95 -7.4l1.95 8.3l1.95 0.0l1.95 1.5l1.95 -1.9l1.95 2.1l1.95 -0.5l1.95 -1.9l1.95 2.8l1.95 0.1l1.95 -3.2l1.95 1.5l1.95 -3.1l1.95 -0.9l1.95 1.8l1.95 2.0l1.95 -1.6l1.95 0.3l1.95 1.2l1.95 1.0l1.95 0.6l1.95 -2.5l1.95 -5.5l1.95 3.1l1.95 2.1l1.95 0.4l1.95 -1.5l1.95 1.3l1.95 -1.1l1.95 2.9l1.95 -1.3l1.95 0.7l1.95 -2.0l1.95 3.0l1.95 -0.2l1.95 -2.1l1.95 0.5l1.95 -2.4l1.95 3.7l1.95 -0.5l1.95 -0.6l1.95 -0.2l1.95 1.5l1.95 0.9l1.95 -2.4l1.95 -0.5l1.95 0.6l1.95 -1.9l1.95 0.8l1.95 -7.2l1.95 8.3l1.95 -1.5l1.95 1.8l1.95 0.0l1.95 0.7l1.95 1.5l1.95 -1.5l1.95 1.3l1.95 -3.0l1.95 0.2l1.95 0.7l1.95 -0.9l1.95 1.6l1.95 -2.9l1.95 0.7l1.95 0.4l1.95 1.7l1.95 -5.6l1.95 5.3l1.95 0.9l1.95 -1.9l1.95 2.0l1.95 -0.5l1.95 -6.7l1.95 5.5l1.95 0.4l1.95 -0.2l1.95 0.6l1.95 -0.7l1.95 0.4l1.95 0.1l1.95 0.7l1.95 -1.7l1.95 1.2l1.95 -0.4l1.95 -0.1l1.95 -0.7l1.95 1.7l1.95 0.9l1.95 -10.0l1.95 4.0l1.95 6.3l1.95 -0.5l1.95 -1.4l1.95 -0.3l1.95 -1.4l1.95 -4.5l1.95 6.4l1.95 -1.0l1.95 1.4l1.95 -2.6l1.95 0.7l1.95 -6.1l1.95 6.6l1.95 0.4l1.95 -2.0l1.95 3.3l1.95 -0.2l1.95 -2.4l1.95 -1.6l1.95 1.6l1.95 -0.6l1.95 0.8l1.95 0.9l1.95 -1.2l1.95 2.3l1.95 1.2l1.95 -1.9l1.95 0.3l1.95 -2.4l1.95 2.0l1.95 -2.8l1.95 0.5l1.95 2.2l1.95 -1.4l1.95 2.6l1.95 0.9l1.95 -1.1l1.95 1.0l1.95 -3.6l1.95 1.8l1.95 1.0l1.95 -2.2l1.95 -3.0l1.95 1.2l1.95 1.9l1.95 0.0l1.95 2.2l1.95 -1.6l1.95 2.8l1.95 -0.4l1.95 -0.2l1.95 -1.5l1.95 -6.0l1.95 5.1l1.95 -0.7l1.95 1.2l1.95 0.8l1.95 -2.7l1.95 2.5l1.95 0.0l1.95 0.4l1.95 0.4l1.95 1.1l1.95 -2.8l1.95 1.2l1.95 -0.8l1.95 0.9l1.95 -0.5l1.95 0.0l1.95 1.1l1.95 -0.6l1.95 1.1l1.95 -1.7l1.95 0.8l1.95 0.5l1.95 0.7l1.95 -3.4l1.95 3.5l1.95 -8.7l1.95 6.8l1.95 0.1l1.95 -9.4l1.95 1.8l1.95 6.6l1.95 0.3l1.95 1.9l1.95 -0.1l1.95 -2.6l1.95 -7.0l1.95 8.6l1.95 -4.1l1.95 3.4l1.95 1.3l1.95 -2.0l1.95 2.0l1.95 0.1l1.95 0.0l1.95 -1.1l1.95 0.7l1.95 -1.1l1.95 -9.1l1.95 7.3l1.95 -0.6l1.95 0.9l1.95 1.5l1.95 -4.6l1.95 5.1l1.95 -0.3l1.95 -0.7l1.95 0.5l1.95 0.7l1.95 -0.1l1.95 0.0l1.95 -2.3l1.95 1.1l1.95 1.0l1.95 -1.4l1.95 -4.2l1.95 6.1l1.95 0.7l1.95 -5.8l1.95 4.1l1.95 0.0l1.95 0.4l1.95 -0.9l1.95 1.4l1.95 -0.5l1.95 -1.7l1.95 1.6l1.95 -1.3l1.95 0.3l1.95 2.7l1.95 0.5l1.95 -0.2l1.95 0.1l1.95 -1.6l1.95 -2.0l1.95 -0.2l1.95 -0.4l1.95 2.9l1.95 -0.8l1.95 1.6l1.95 0.3l1.95 -1.0l1.95 0.6l1.95 -6.9l1.95 4.6l1.95 3.1l1.95 -0.2l1.95 -2.6l1.95 2.3l1.95 -2.7l1.95 2.9l1.95 -1.2l1.95 -1.4l1.95 1.0l1.95 0.7l1.95 0.1l1.95 -7.5l1.95 5.4l1.95 0.1l1.95 0.1l1.95 3.0l1.95 -0.4l1.95 -2.5l1.95 2.0l1.95 0.7l1.95 -1.9l1.95 2.0l1.95 -0.8l1.95 -1.1l1.95 -1.9l1.95 0.7l1.95 2.1l1.95 -3.1l1.95 1.2l1.95 -1.4l1.95 2.7l1.95 -0.6l1.95 -0.3l1.95 1.7l1.95 0.0l1.95 -2.0l1.95 2.3l1.95 -2.2l1.95 0.6l1.95 -3.5l1.95 3.0l1.95 -6.7l1.95 6.0l1.95 1.7l1.95 -0.9l1.95 2.3l1.95 0.1l1.95 -5.3l1.95 2.4l1.95 -1.2l1.95 0.3l1.95 2.5l1.95 -5.4l1.95 2.5l1.95 0.0" stroke="#6e4a26" stroke-width="1.3" stroke-linejoin="round"/><path d="M127.0 330.4l1.95 1.9l1.95 0.5l1.95 -8.9l1.95 6.3l1.95 0.2l1.95 -9.5l1.95 7.6l1.95 -3.8l1.95 6.7l1.95 -0.7l1.95 0.4l1.95 -1.8l1.95 0.0l1.95 2.7l1.95 -0.5l1.95 -0.4l1.95 -0.4l1.95 -7.1l1.95 4.1l1.95 -0.9l1.95 2.5l1.95 0.0l1.95 -0.7l1.95 2.6l1.95 -4.4l1.95 2.6l1.95 1.9l1.95 1.6l1.95 -4.8l1.95 -0.1l1.95 -4.8l1.95 5.9l1.95 1.7l1.95 0.6l1.95 -0.7l1.95 -0.7l1.95 0.6l1.95 2.3l1.95 -0.1l1.95 -9.3l1.95 9.1l1.95 -0.1l1.95 -1.9l1.95 -0.9l1.95 3.1l1.95 -2.4l1.95 -1.6l1.95 2.3l1.95 0.7l1.95 0.2l1.95 -1.0l1.95 -4.2l1.95 4.9l1.95 -1.2l1.95 -9.2l1.95 3.2l1.95 2.2l1.95 -0.2l1.95 -2.5l1.95 5.6l1.95 2.4l1.95 -1.3l1.95 -1.2l1.95 1.0l1.95 1.0l1.95 -2.8l1.95 0.4l1.95 0.6l1.95 -1.9l1.95 2.5l1.95 -4.0l1.95 4.3l1.95 1.2l1.95 -0.7l1.95 -0.4l1.95 0.8l1.95 -1.5l1.95 1.6l1.95 -2.4l1.95 -2.4l1.95 -1.2l1.95 1.9l1.95 2.8l1.95 0.7l1.95 1.6l1.95 -2.3l1.95 0.4l1.95 0.6l1.95 -7.8l1.95 7.3l1.95 -3.5l1.95 -3.7l1.95 6.5l1.95 -1.6l1.95 0.8l1.95 2.6l1.95 -0.1l1.95 -1.6l1.95 1.7l1.95 -2.4l1.95 -0.2l1.95 2.0l1.95 0.4l1.95 -1.0l1.95 -0.8l1.95 2.1l1.95 -2.9l1.95 -0.2l1.95 0.6l1.95 0.8l1.95 2.1l1.95 -5.7l1.95 5.1l1.95 -3.9l1.95 1.9l1.95 1.2l1.95 0.8l1.95 -0.3l1.95 -0.1l1.95 1.0l1.95 -1.4l1.95 1.8l1.95 -2.3l1.95 -4.1l1.95 5.8l1.95 0.0l1.95 -2.3l1.95 -3.1l1.95 5.5l1.95 -0.5l1.95 0.5l1.95 -0.4l1.95 -0.8l1.95 0.0l1.95 -1.2l1.95 -0.4l1.95 2.2l1.95 -3.7l1.95 2.3l1.95 -4.8l1.95 4.5l1.95 0.0l1.95 1.3l1.95 0.7l1.95 -0.7l1.95 1.2l1.95 -2.9l1.95 2.5l1.95 -3.9l1.95 0.8l1.95 2.5l1.95 -3.3l1.95 3.0l1.95 -5.2l1.95 2.8l1.95 -3.7l1.95 4.3l1.95 2.9l1.95 -1.5l1.95 0.4l1.95 -0.6l1.95 -1.3l1.95 0.1l1.95 -3.2l1.95 2.9l1.95 -7.4l1.95 3.9l1.95 2.8l1.95 2.0l1.95 -0.6l1.95 1.4l1.95 -1.5l1.95 -0.2l1.95 0.7l1.95 -0.7l1.95 -2.1l1.95 0.3l1.95 -0.1l1.95 2.8l1.95 0.6l1.95 1.0l1.95 -2.1l1.95 1.7l1.95 -0.1l1.95 -1.5l1.95 1.2l1.95 -1.2l1.95 0.0l1.95 2.1l1.95 -2.0l1.95 -0.1l1.95 1.0l1.95 -0.6l1.95 2.0l1.95 0.5l1.95 -3.1l1.95 1.6l1.95 -6.4l1.95 5.6l1.95 0.0l1.95 1.1l1.95 0.4l1.95 -1.8l1.95 1.1l1.95 0.2l1.95 -0.1l1.95 -3.2l1.95 1.5l1.95 1.0l1.95 -0.9l1.95 2.4l1.95 -8.6l1.95 6.0l1.95 -2.9l1.95 -2.7l1.95 5.8l1.95 -0.3l1.95 0.8l1.95 1.3l1.95 0.7l1.95 -2.7l1.95 -2.0l1.95 3.3l1.95 -10.9l1.95 7.0l1.95 -1.6l1.95 -3.7l1.95 2.4l1.95 6.8l1.95 1.2l1.95 -2.0l1.95 -1.0l1.95 3.3l1.95 -3.2l1.95 -0.7l1.95 0.4l1.95 1.3l1.95 -0.4l1.95 0.2l1.95 1.0l1.95 0.5l1.95 0.4l1.95 -1.9l1.95 -0.3l1.95 0.8l1.95 -0.8l1.95 2.3l1.95 -4.5l1.95 4.1l1.95 -9.1l1.95 5.7l1.95 -2.5l1.95 5.5l1.95 -0.5l1.95 1.8l1.95 -3.0l1.95 -0.1l1.95 -1.2l1.95 2.4l1.95 -1.8l1.95 0.3l1.95 0.5l1.95 -0.1l1.95 0.2l1.95 -0.1l1.95 2.7l1.95 -1.0l1.95 -2.0l1.95 1.9l1.95 0.9l1.95 -1.0l1.95 1.1l1.95 -1.3l1.95 -2.0l1.95 3.2l1.95 -0.6l1.95 -2.1l1.95 0.7l1.95 -0.3l1.95 1.2l1.95 0.0l1.95 -3.2l1.95 1.7l1.95 -5.6l1.95 6.4l1.95 -0.8l1.95 2.5l1.95 -2.5l1.95 1.7l1.95 1.5l1.95 -0.2l1.95 -0.1l1.95 -0.4l1.95 -1.9l1.95 1.8l1.95 0.2l1.95 -7.2l1.95 5.0l1.95 1.5l1.95 0.4l1.95 -1.8l1.95 0.7l1.95 -0.9l1.95 0.9l1.95 -0.1l1.95 -0.7l1.95 -3.9l1.95 -2.2l1.95 6.1l1.95 0.5l1.95 -8.2l1.95 6.7l1.95 2.0l1.95 0.8l1.95 -1.8l1.95 0.2l1.95 -0.5l1.95 -0.7l1.95 -5.0l1.95 7.5l1.95 -3.5l1.95 3.3l1.95 -2.7l1.95 1.4l1.95 -2.4l1.95 5.1l1.95 -3.1l1.95 2.3l1.95 -9.4l1.95 7.2l1.95 -4.5l1.95 0.9l1.95 -2.2l1.95 5.3l1.95 1.0l1.95 -0.9" stroke="#b07a8a" stroke-width="1.3" stroke-linejoin="round"/><path d="M127.0 331.7l1.95 -1.6l1.95 -0.1l1.95 -0.5l1.95 1.7l1.95 -2.9l1.95 -3.3l1.95 3.5l1.95 0.1l1.95 1.5l1.95 0.1l1.95 1.2l1.95 1.1l1.95 -0.2l1.95 -0.9l1.95 -0.2l1.95 -1.2l1.95 -0.5l1.95 0.7l1.95 0.0l1.95 -8.3l1.95 7.7l1.95 -0.6l1.95 1.0l1.95 1.0l1.95 0.3l1.95 0.4l1.95 -0.2l1.95 -0.5l1.95 1.7l1.95 -0.8l1.95 0.7l1.95 -3.7l1.95 -3.8l1.95 5.2l1.95 -4.4l1.95 6.2l1.95 -2.2l1.95 -0.1l1.95 2.3l1.95 -0.1l1.95 -1.9l1.95 -0.3l1.95 -3.2l1.95 2.7l1.95 3.3l1.95 -1.5l1.95 -1.3l1.95 0.0l1.95 1.2l1.95 -1.2l1.95 1.6l1.95 -10.5l1.95 9.0l1.95 -0.7l1.95 -7.6l1.95 8.7l1.95 -0.7l1.95 0.2l1.95 1.6l1.95 -2.6l1.95 2.3l1.95 -5.2l1.95 5.7l1.95 -0.2l1.95 -0.4l1.95 -2.3l1.95 1.6l1.95 -8.9l1.95 6.2l1.95 0.3l1.95 3.9l1.95 -3.1l1.95 2.0l1.95 1.7l1.95 -2.9l1.95 2.3l1.95 -1.0l1.95 -1.6l1.95 -5.0l1.95 6.3l1.95 -5.1l1.95 2.0l1.95 3.5l1.95 -0.6l1.95 -0.4l1.95 1.4l1.95 0.8l1.95 -8.4l1.95 3.8l1.95 0.2l1.95 -10.1l1.95 9.2l1.95 1.0l1.95 3.4l1.95 -3.2l1.95 2.2l1.95 0.7l1.95 -1.4l1.95 1.3l1.95 -1.0l1.95 -0.6l1.95 -1.2l1.95 -1.3l1.95 2.6l1.95 -1.5l1.95 1.8l1.95 0.0l1.95 1.0l1.95 0.7l1.95 0.6l1.95 -2.0l1.95 1.0l1.95 1.1l1.95 0.0l1.95 -2.5l1.95 -5.7l1.95 5.9l1.95 0.4l1.95 2.4l1.95 -1.1l1.95 -1.7l1.95 2.0l1.95 -1.8l1.95 -0.3l1.95 0.0l1.95 -2.5l1.95 2.7l1.95 1.5l1.95 0.5l1.95 -2.1l1.95 2.4l1.95 0.4l1.95 0.3l1.95 -3.3l1.95 2.9l1.95 -2.2l1.95 0.2l1.95 -3.0l1.95 0.9l1.95 1.5l1.95 -3.0l1.95 0.7l1.95 3.1l1.95 1.1l1.95 -0.6l1.95 1.1l1.95 -7.0l1.95 7.0l1.95 -2.2l1.95 -1.2l1.95 2.7l1.95 -4.3l1.95 1.1l1.95 -1.4l1.95 3.8l1.95 1.7l1.95 -2.4l1.95 1.0l1.95 0.3l1.95 -4.7l1.95 2.8l1.95 -2.0l1.95 4.3l1.95 -5.9l1.95 2.5l1.95 -0.8l1.95 5.3l1.95 -2.0l1.95 0.9l1.95 -5.4l1.95 3.6l1.95 -3.7l1.95 6.3l1.95 -0.3l1.95 -7.9l1.95 3.6l1.95 1.7l1.95 -1.1l1.95 2.6l1.95 -0.1l1.95 -1.4l1.95 1.8l1.95 1.1l1.95 -1.4l1.95 -1.0l1.95 -4.5l1.95 2.2l1.95 0.6l1.95 0.2l1.95 -0.3l1.95 0.7l1.95 1.5l1.95 -1.0l1.95 2.1l1.95 -0.7l1.95 1.1l1.95 -2.0l1.95 0.8l1.95 0.7l1.95 -1.1l1.95 -0.7l1.95 1.0l1.95 1.6l1.95 -0.7l1.95 -1.6l1.95 0.1l1.95 1.9l1.95 -1.5l1.95 1.5l1.95 -2.1l1.95 2.4l1.95 -2.2l1.95 2.2l1.95 -2.8l1.95 -1.8l1.95 4.0l1.95 0.5l1.95 -2.2l1.95 2.1l1.95 -2.7l1.95 -0.5l1.95 0.1l1.95 -2.0l1.95 4.2l1.95 -1.7l1.95 1.2l1.95 -9.8l1.95 11.1l1.95 -1.5l1.95 -0.7l1.95 -0.3l1.95 -0.2l1.95 0.4l1.95 2.3l1.95 -4.2l1.95 2.9l1.95 -4.1l1.95 -3.4l1.95 6.3l1.95 1.7l1.95 -1.4l1.95 2.7l1.95 -1.5l1.95 -2.0l1.95 1.5l1.95 -2.4l1.95 0.8l1.95 0.6l1.95 -1.1l1.95 1.7l1.95 0.8l1.95 -1.4l1.95 0.6l1.95 2.1l1.95 -2.1l1.95 1.4l1.95 -1.0l1.95 -8.3l1.95 6.8l1.95 1.6l1.95 -1.9l1.95 -1.0l1.95 1.3l1.95 3.2l1.95 -0.9l1.95 -0.1l1.95 0.8l1.95 -2.5l1.95 0.9l1.95 1.9l1.95 -2.8l1.95 -0.6l1.95 -4.9l1.95 5.5l1.95 2.4l1.95 -0.5l1.95 -3.4l1.95 2.2l1.95 0.0l1.95 1.4l1.95 0.6l1.95 -2.3l1.95 1.4l1.95 -1.1l1.95 -0.6l1.95 0.5l1.95 1.3l1.95 -1.1l1.95 1.9l1.95 0.1l1.95 -5.2l1.95 5.5l1.95 -0.9l1.95 -1.6l1.95 2.2l1.95 0.5l1.95 -3.1l1.95 3.1l1.95 -1.6l1.95 0.5l1.95 -0.9l1.95 -0.9l1.95 0.9l1.95 -2.0l1.95 2.3l1.95 -4.1l1.95 2.6l1.95 -2.2l1.95 2.0l1.95 -2.2l1.95 3.4l1.95 -0.2l1.95 -2.5l1.95 4.4l1.95 -0.3l1.95 -2.2l1.95 0.0l1.95 -1.7l1.95 0.4l1.95 3.7l1.95 -2.3l1.95 -2.6l1.95 0.8l1.95 3.2l1.95 -0.7l1.95 0.4l1.95 -1.1l1.95 2.6l1.95 -2.3l1.95 -3.6l1.95 -3.1l1.95 6.4l1.95 -2.7l1.95 -4.0l1.95 4.5l1.95 2.5" stroke="#9a7a3a" stroke-width="1.3" stroke-linejoin="round"/><path d="M127.0 330.6l1.95 1.8l1.95 0.0l1.95 0.3l1.95 -0.4l1.95 -2.6l1.95 -1.2l1.95 -0.9l1.95 3.5l1.95 -2.3l1.95 -0.5l1.95 -1.9l1.95 5.0l1.95 -0.8l1.95 -1.4l1.95 2.5l1.95 0.9l1.95 -1.8l1.95 0.2l1.95 -1.6l1.95 -1.7l1.95 -1.8l1.95 1.7l1.95 2.0l1.95 1.0l1.95 -4.6l1.95 5.4l1.95 -2.1l1.95 1.8l1.95 1.1l1.95 -0.6l1.95 -5.2l1.95 3.4l1.95 -0.5l1.95 0.2l1.95 -3.1l1.95 3.5l1.95 -0.2l1.95 -4.6l1.95 4.6l1.95 3.1l1.95 -0.4l1.95 0.3l1.95 -2.4l1.95 0.9l1.95 -2.3l1.95 2.8l1.95 0.7l1.95 -2.7l1.95 2.3l1.95 -1.1l1.95 -2.5l1.95 2.5l1.95 -0.3l1.95 0.7l1.95 -0.2l1.95 -1.8l1.95 -3.1l1.95 3.6l1.95 -3.0l1.95 2.2l1.95 0.0l1.95 2.9l1.95 -0.3l1.95 0.3l1.95 -2.6l1.95 0.0l1.95 -0.3l1.95 2.2l1.95 -5.7l1.95 4.0l1.95 -3.7l1.95 5.8l1.95 -1.0l1.95 -5.3l1.95 3.9l1.95 1.2l1.95 -0.1l1.95 0.5l1.95 -2.1l1.95 1.0l1.95 0.8l1.95 -2.5l1.95 0.8l1.95 -1.4l1.95 3.9l1.95 -0.9l1.95 0.1l1.95 -0.4l1.95 1.0l1.95 -0.7l1.95 -0.7l1.95 -6.3l1.95 0.9l1.95 2.3l1.95 0.3l1.95 1.5l1.95 3.2l1.95 -1.3l1.95 2.6l1.95 -1.8l1.95 1.3l1.95 -2.5l1.95 0.2l1.95 -2.8l1.95 3.6l1.95 -3.7l1.95 1.3l1.95 1.9l1.95 0.8l1.95 0.6l1.95 -8.5l1.95 7.6l1.95 -1.3l1.95 2.5l1.95 -2.5l1.95 1.4l1.95 0.4l1.95 -1.0l1.95 1.0l1.95 -1.0l1.95 -0.5l1.95 1.8l1.95 -0.1l1.95 -1.7l1.95 2.6l1.95 -1.7l1.95 2.0l1.95 -2.1l1.95 -1.2l1.95 2.4l1.95 -2.2l1.95 1.7l1.95 -1.7l1.95 0.1l1.95 3.2l1.95 -0.5l1.95 -0.7l1.95 -0.6l1.95 -5.4l1.95 0.1l1.95 5.4l1.95 -1.5l1.95 -0.7l1.95 -1.5l1.95 4.8l1.95 -0.5l1.95 -1.1l1.95 -0.8l1.95 0.5l1.95 -4.8l1.95 5.9l1.95 -3.6l1.95 1.9l1.95 -4.2l1.95 -1.9l1.95 5.0l1.95 1.7l1.95 -0.9l1.95 3.3l1.95 -2.8l1.95 -3.1l1.95 -0.1l1.95 1.9l1.95 -2.5l1.95 5.9l1.95 -5.4l1.95 2.5l1.95 -2.5l1.95 4.6l1.95 -0.1l1.95 0.0l1.95 0.2l1.95 -0.3l1.95 -0.9l1.95 -0.9l1.95 -0.7l1.95 -0.2l1.95 2.2l1.95 -0.4l1.95 -7.5l1.95 8.4l1.95 -0.3l1.95 1.5l1.95 -1.5l1.95 0.6l1.95 -0.3l1.95 -1.7l1.95 -0.7l1.95 -0.6l1.95 2.6l1.95 0.9l1.95 -1.9l1.95 -0.4l1.95 2.1l1.95 -0.2l1.95 0.6l1.95 0.8l1.95 -0.9l1.95 0.6l1.95 -1.4l1.95 -1.7l1.95 2.7l1.95 0.4l1.95 -2.1l1.95 -0.4l1.95 -3.8l1.95 5.2l1.95 -1.4l1.95 1.1l1.95 -6.0l1.95 6.9l1.95 0.6l1.95 -2.9l1.95 0.7l1.95 0.7l1.95 -0.2l1.95 2.0l1.95 -1.2l1.95 -1.5l1.95 -0.1l1.95 -0.1l1.95 2.5l1.95 -2.4l1.95 -3.8l1.95 0.6l1.95 0.2l1.95 2.4l1.95 0.6l1.95 1.1l1.95 0.8l1.95 -2.0l1.95 1.7l1.95 1.0l1.95 -2.5l1.95 -0.3l1.95 0.7l1.95 -6.0l1.95 6.8l1.95 -2.4l1.95 1.4l1.95 -0.5l1.95 -0.9l1.95 0.8l1.95 0.0l1.95 -0.4l1.95 3.1l1.95 -1.5l1.95 -1.9l1.95 3.3l1.95 -0.5l1.95 -2.8l1.95 -0.5l1.95 0.9l1.95 1.9l1.95 -0.1l1.95 -1.2l1.95 -0.2l1.95 1.3l1.95 -0.2l1.95 -1.3l1.95 -0.1l1.95 -5.7l1.95 5.5l1.95 0.4l1.95 -0.3l1.95 3.1l1.95 -0.9l1.95 -0.8l1.95 0.6l1.95 -2.6l1.95 1.9l1.95 -1.4l1.95 0.0l1.95 -4.4l1.95 7.3l1.95 -2.9l1.95 1.0l1.95 -0.7l1.95 3.4l1.95 -1.9l1.95 -0.4l1.95 -0.8l1.95 -0.2l1.95 2.1l1.95 -5.3l1.95 -0.2l1.95 3.8l1.95 1.3l1.95 -0.2l1.95 0.5l1.95 -1.0l1.95 2.3l1.95 -1.9l1.95 -0.7l1.95 2.0l1.95 -1.0l1.95 -3.6l1.95 3.8l1.95 -1.7l1.95 1.6l1.95 -6.1l1.95 -0.9l1.95 7.7l1.95 -2.5l1.95 1.0l1.95 -2.6l1.95 0.5l1.95 1.9l1.95 -2.3l1.95 -0.1l1.95 1.4l1.95 -3.8l1.95 4.1l1.95 0.0l1.95 3.0l1.95 -2.1l1.95 -0.7l1.95 1.0l1.95 0.5l1.95 -0.1l1.95 -4.0l1.95 0.5l1.95 1.7l1.95 -6.6l1.95 6.5l1.95 -0.4l1.95 2.6l1.95 0.1l1.95 -1.5l1.95 -1.0l1.95 0.1l1.95 -1.9l1.95 3.6l1.95 -3.3l1.95 0.9l1.95 0.3" stroke="#7a5a2a" stroke-width="1.3" stroke-linejoin="round"/><path d="M127.0 329.8l1.95 -5.7l1.95 7.5l1.95 0.8l1.95 -0.2l1.95 -0.6l1.95 -2.5l1.95 -1.1l1.95 -6.9l1.95 7.5l1.95 -0.1l1.95 0.2l1.95 0.2l1.95 3.0l1.95 -1.8l1.95 -1.8l1.95 3.3l1.95 -0.7l1.95 -2.0l1.95 0.0l1.95 -2.4l1.95 -2.5l1.95 8.4l1.95 -6.2l1.95 2.7l1.95 0.3l1.95 0.3l1.95 3.2l1.95 -3.0l1.95 1.2l1.95 -1.2l1.95 -0.4l1.95 -1.1l1.95 1.4l1.95 0.2l1.95 1.4l1.95 -0.6l1.95 2.0l1.95 -1.5l1.95 -7.1l1.95 7.0l1.95 -5.3l1.95 6.7l1.95 -2.1l1.95 -5.8l1.95 5.7l1.95 0.4l1.95 1.7l1.95 -1.2l1.95 -0.2l1.95 0.9l1.95 -0.1l1.95 -0.5l1.95 -3.4l1.95 1.6l1.95 -1.5l1.95 1.4l1.95 -5.1l1.95 -2.2l1.95 6.3l1.95 3.4l1.95 -1.2l1.95 -0.7l1.95 -0.2l1.95 0.5l1.95 -0.4l1.95 -3.1l1.95 2.8l1.95 0.6l1.95 -3.9l1.95 1.5l1.95 -0.3l1.95 -0.6l1.95 2.6l1.95 1.9l1.95 1.2l1.95 -1.7l1.95 0.9l1.95 -3.9l1.95 -1.0l1.95 -3.5l1.95 3.4l1.95 -0.3l1.95 -0.2l1.95 -3.3l1.95 5.7l1.95 0.7l1.95 1.3l1.95 1.8l1.95 -1.5l1.95 -3.2l1.95 -2.1l1.95 2.9l1.95 0.9l1.95 -1.6l1.95 -3.0l1.95 6.3l1.95 -2.2l1.95 0.8l1.95 0.0l1.95 -4.4l1.95 3.7l1.95 -0.1l1.95 0.8l1.95 0.2l1.95 -0.8l1.95 3.0l1.95 -12.1l1.95 9.6l1.95 0.6l1.95 1.5l1.95 -1.9l1.95 2.2l1.95 -1.9l1.95 0.2l1.95 0.5l1.95 0.3l1.95 -0.1l1.95 -1.5l1.95 2.4l1.95 -1.5l1.95 2.3l1.95 -0.3l1.95 -5.8l1.95 4.9l1.95 -5.3l1.95 4.2l1.95 0.4l1.95 -7.3l1.95 6.7l1.95 -3.4l1.95 3.3l1.95 1.7l1.95 -1.7l1.95 0.0l1.95 2.5l1.95 -3.4l1.95 0.0l1.95 -2.2l1.95 -0.3l1.95 -3.1l1.95 5.0l1.95 -2.4l1.95 4.9l1.95 -3.0l1.95 1.9l1.95 0.5l1.95 1.0l1.95 -0.9l1.95 -2.7l1.95 0.7l1.95 -4.4l1.95 1.2l1.95 -2.8l1.95 6.9l1.95 0.5l1.95 -0.4l1.95 0.2l1.95 0.3l1.95 0.4l1.95 -0.4l1.95 -1.3l1.95 -1.3l1.95 -6.9l1.95 5.3l1.95 1.8l1.95 -6.5l1.95 8.7l1.95 -0.2l1.95 0.8l1.95 1.0l1.95 0.8l1.95 -2.7l1.95 -0.1l1.95 0.1l1.95 1.4l1.95 -9.1l1.95 -1.6l1.95 10.2l1.95 0.3l1.95 -3.1l1.95 1.3l1.95 3.2l1.95 -2.3l1.95 -2.7l1.95 4.7l1.95 -7.9l1.95 -5.4l1.95 6.4l1.95 2.2l1.95 1.1l1.95 -1.6l1.95 2.4l1.95 2.3l1.95 1.4l1.95 -1.9l1.95 1.9l1.95 -1.2l1.95 -4.5l1.95 5.2l1.95 0.6l1.95 -9.6l1.95 8.8l1.95 -2.0l1.95 -0.3l1.95 -0.1l1.95 3.3l1.95 -0.7l1.95 -2.4l1.95 0.6l1.95 -0.2l1.95 -4.5l1.95 3.8l1.95 0.4l1.95 0.4l1.95 2.5l1.95 -2.9l1.95 -4.3l1.95 6.1l1.95 0.6l1.95 -1.9l1.95 0.3l1.95 -0.2l1.95 -0.5l1.95 -3.9l1.95 3.9l1.95 -3.4l1.95 0.3l1.95 0.7l1.95 5.0l1.95 -0.6l1.95 -0.7l1.95 -2.2l1.95 1.1l1.95 -0.8l1.95 0.2l1.95 1.4l1.95 -10.3l1.95 5.6l1.95 0.6l1.95 5.3l1.95 -0.1l1.95 -0.5l1.95 0.2l1.95 -1.0l1.95 -1.7l1.95 0.5l1.95 -3.2l1.95 2.0l1.95 -2.0l1.95 1.4l1.95 3.7l1.95 -2.7l1.95 2.2l1.95 0.6l1.95 -0.1l1.95 0.7l1.95 -2.0l1.95 -0.7l1.95 -0.3l1.95 -1.8l1.95 4.0l1.95 -0.8l1.95 0.2l1.95 0.4l1.95 1.2l1.95 -1.8l1.95 0.0l1.95 1.6l1.95 -11.0l1.95 9.0l1.95 -1.6l1.95 3.3l1.95 0.7l1.95 -1.4l1.95 -0.4l1.95 0.2l1.95 -1.4l1.95 1.1l1.95 0.4l1.95 1.7l1.95 -2.6l1.95 1.6l1.95 -2.4l1.95 2.9l1.95 -2.1l1.95 1.4l1.95 -3.3l1.95 1.4l1.95 2.1l1.95 -3.6l1.95 4.6l1.95 0.1l1.95 -1.6l1.95 1.4l1.95 -2.9l1.95 0.7l1.95 1.0l1.95 -3.5l1.95 3.5l1.95 -1.1l1.95 0.9l1.95 0.8l1.95 -1.0l1.95 -0.9l1.95 0.0l1.95 -3.1l1.95 1.1l1.95 -0.5l1.95 4.3l1.95 -1.3l1.95 -1.6l1.95 1.4l1.95 1.3l1.95 -0.4l1.95 -1.6l1.95 -0.3l1.95 1.1l1.95 -1.4l1.95 1.8l1.95 -4.5l1.95 3.2l1.95 0.2l1.95 2.4l1.95 -2.3l1.95 0.9l1.95 -0.5l1.95 1.4l1.95 -0.8l1.95 -2.4l1.95 -0.8l1.95 2.0l1.95 -1.3l1.95 -2.2l1.95 3.2l1.95 0.6l1.95 0.9" stroke="#a88a9a" stroke-width="1.3" stroke-linejoin="round"/><path d="M127.0 329.7l1.95 3.3l1.95 -0.8l1.95 -0.7l1.95 -3.7l1.95 -4.1l1.95 -6.6l1.95 4.6l1.95 1.9l1.95 0.0l1.95 1.0l1.95 3.7l1.95 1.0l1.95 1.3l1.95 -7.6l1.95 7.8l1.95 -0.2l1.95 -1.4l1.95 -1.7l1.95 1.7l1.95 -4.3l1.95 2.0l1.95 4.7l1.95 -1.5l1.95 1.6l1.95 -0.9l1.95 1.5l1.95 -2.3l1.95 -0.2l1.95 0.3l1.95 0.1l1.95 -0.3l1.95 0.9l1.95 -0.1l1.95 1.2l1.95 -8.2l1.95 8.8l1.95 -2.5l1.95 2.7l1.95 -2.3l1.95 2.2l1.95 0.0l1.95 -1.6l1.95 0.1l1.95 -5.5l1.95 4.3l1.95 1.3l1.95 -6.8l1.95 6.3l1.95 1.5l1.95 -0.4l1.95 -0.3l1.95 -2.6l1.95 0.2l1.95 1.8l1.95 -7.2l1.95 4.8l1.95 -1.9l1.95 3.9l1.95 -3.4l1.95 3.9l1.95 -0.2l1.95 0.0l1.95 -1.2l1.95 -2.1l1.95 -0.9l1.95 0.5l1.95 -7.1l1.95 3.0l1.95 6.3l1.95 1.1l1.95 1.9l1.95 -1.2l1.95 0.0l1.95 -1.4l1.95 -0.1l1.95 -0.7l1.95 1.4l1.95 -14.0l1.95 6.6l1.95 0.1l1.95 2.6l1.95 -6.6l1.95 10.5l1.95 -0.7l1.95 1.2l1.95 0.5l1.95 0.2l1.95 -1.3l1.95 0.7l1.95 -4.3l1.95 -6.7l1.95 5.7l1.95 0.2l1.95 4.5l1.95 -3.2l1.95 3.9l1.95 2.3l1.95 -1.9l1.95 -0.1l1.95 0.8l1.95 -7.4l1.95 5.5l1.95 0.2l1.95 1.0l1.95 -1.7l1.95 0.2l1.95 1.2l1.95 2.4l1.95 -2.9l1.95 0.9l1.95 1.5l1.95 0.6l1.95 -0.7l1.95 -1.3l1.95 -0.4l1.95 -0.8l1.95 2.7l1.95 -0.9l1.95 -1.2l1.95 -6.7l1.95 6.6l1.95 2.8l1.95 -2.6l1.95 0.4l1.95 1.9l1.95 -0.3l1.95 -3.1l1.95 -6.9l1.95 8.6l1.95 1.9l1.95 -2.8l1.95 1.8l1.95 0.0l1.95 -1.2l1.95 0.6l1.95 0.1l1.95 -1.2l1.95 -0.5l1.95 -6.7l1.95 7.9l1.95 -5.3l1.95 -1.8l1.95 6.5l1.95 1.8l1.95 -2.0l1.95 1.0l1.95 -2.5l1.95 0.7l1.95 0.9l1.95 -6.4l1.95 6.6l1.95 -2.5l1.95 -3.0l1.95 4.2l1.95 -0.2l1.95 -3.8l1.95 4.8l1.95 2.2l1.95 -1.9l1.95 0.1l1.95 -4.2l1.95 0.1l1.95 0.6l1.95 -6.5l1.95 5.2l1.95 4.4l1.95 -1.6l1.95 1.0l1.95 1.6l1.95 -0.2l1.95 0.3l1.95 -3.0l1.95 -7.3l1.95 9.1l1.95 -3.9l1.95 -0.3l1.95 5.3l1.95 0.9l1.95 -9.3l1.95 7.7l1.95 0.1l1.95 0.7l1.95 0.3l1.95 -3.1l1.95 1.5l1.95 -3.3l1.95 1.5l1.95 -0.3l1.95 2.0l1.95 1.3l1.95 -0.6l1.95 -0.2l1.95 2.3l1.95 -1.9l1.95 0.3l1.95 -3.9l1.95 5.6l1.95 -1.4l1.95 1.2l1.95 -1.2l1.95 -0.3l1.95 -0.7l1.95 -0.2l1.95 1.8l1.95 -1.3l1.95 0.1l1.95 0.1l1.95 0.2l1.95 -0.9l1.95 -6.7l1.95 8.1l1.95 1.1l1.95 -1.1l1.95 0.1l1.95 -1.3l1.95 2.4l1.95 -1.8l1.95 0.6l1.95 0.3l1.95 0.4l1.95 -5.2l1.95 -1.9l1.95 2.3l1.95 -2.1l1.95 1.4l1.95 2.5l1.95 2.1l1.95 0.1l1.95 0.8l1.95 -0.8l1.95 -0.7l1.95 -0.1l1.95 -4.3l1.95 -3.0l1.95 4.8l1.95 0.0l1.95 -2.1l1.95 4.0l1.95 -0.6l1.95 1.5l1.95 0.9l1.95 0.9l1.95 -1.6l1.95 -2.4l1.95 1.7l1.95 -3.4l1.95 2.8l1.95 -2.0l1.95 -2.5l1.95 1.6l1.95 1.3l1.95 2.2l1.95 0.5l1.95 1.7l1.95 0.5l1.95 -3.8l1.95 3.2l1.95 -2.2l1.95 1.7l1.95 -2.8l1.95 -0.4l1.95 1.1l1.95 0.7l1.95 0.4l1.95 1.6l1.95 -0.5l1.95 -0.2l1.95 0.1l1.95 -3.5l1.95 -1.8l1.95 2.5l1.95 -2.5l1.95 1.4l1.95 1.6l1.95 0.7l1.95 2.0l1.95 -0.3l1.95 -0.9l1.95 1.8l1.95 -1.6l1.95 1.8l1.95 -2.0l1.95 -0.9l1.95 1.8l1.95 0.4l1.95 0.4l1.95 -0.6l1.95 -1.5l1.95 1.4l1.95 -5.0l1.95 3.9l1.95 0.9l1.95 -0.3l1.95 0.6l1.95 -6.4l1.95 4.9l1.95 -0.5l1.95 0.6l1.95 1.6l1.95 -0.5l1.95 -0.5l1.95 1.7l1.95 -0.8l1.95 -8.4l1.95 5.6l1.95 -1.9l1.95 -4.6l1.95 6.5l1.95 -3.2l1.95 -1.2l1.95 3.7l1.95 3.1l1.95 -1.2l1.95 -0.8l1.95 1.3l1.95 -0.8l1.95 -3.7l1.95 -2.5l1.95 3.2l1.95 0.3l1.95 -1.9l1.95 -5.2l1.95 8.4l1.95 3.1l1.95 -0.9l1.95 -1.5l1.95 1.1l1.95 -0.4l1.95 1.3l1.95 -2.1l1.95 -7.6l1.95 5.7l1.95 2.6l1.95 -1.2l1.95 -1.4l1.95 2.3" stroke="#6e4a26" stroke-width="1.3" stroke-linejoin="round"/><path d="M127.0 332.5l1.95 -1.7l1.95 1.5l1.95 -2.1l1.95 1.1l1.95 0.3l1.95 -2.5l1.95 -2.8l1.95 2.6l1.95 0.4l1.95 -2.1l1.95 -7.7l1.95 8.7l1.95 2.7l1.95 -2.8l1.95 3.4l1.95 -1.6l1.95 1.7l1.95 -2.1l1.95 -1.1l1.95 -0.7l1.95 -13.3l1.95 11.5l1.95 -0.9l1.95 4.6l1.95 -0.7l1.95 2.3l1.95 -6.3l1.95 6.5l1.95 -2.0l1.95 -0.4l1.95 1.9l1.95 -1.2l1.95 -1.0l1.95 -3.3l1.95 5.9l1.95 -1.1l1.95 0.0l1.95 -0.8l1.95 3.4l1.95 -2.6l1.95 0.8l1.95 -0.1l1.95 1.3l1.95 -0.1l1.95 -2.5l1.95 0.9l1.95 -0.9l1.95 1.1l1.95 -0.2l1.95 1.3l1.95 0.6l1.95 -2.1l1.95 -1.3l1.95 3.7l1.95 -7.1l1.95 3.2l1.95 -0.1l1.95 -3.8l1.95 5.0l1.95 -3.9l1.95 0.9l1.95 4.1l1.95 -1.1l1.95 1.9l1.95 -0.4l1.95 -0.2l1.95 -5.6l1.95 2.4l1.95 -0.1l1.95 -7.4l1.95 5.7l1.95 -4.1l1.95 7.8l1.95 -1.4l1.95 1.6l1.95 -0.5l1.95 -0.8l1.95 -2.8l1.95 4.0l1.95 -5.7l1.95 -6.7l1.95 10.9l1.95 -1.6l1.95 -1.2l1.95 4.6l1.95 1.4l1.95 -1.6l1.95 1.3l1.95 -0.4l1.95 0.1l1.95 0.5l1.95 -11.1l1.95 11.0l1.95 -4.3l1.95 4.1l1.95 -7.7l1.95 3.8l1.95 2.5l1.95 1.9l1.95 -0.2l1.95 -7.6l1.95 4.0l1.95 -6.1l1.95 2.8l1.95 3.5l1.95 -2.9l1.95 -2.7l1.95 9.2l1.95 -1.0l1.95 -0.2l1.95 -1.0l1.95 0.9l1.95 -0.3l1.95 1.4l1.95 0.5l1.95 -0.3l1.95 -2.2l1.95 0.2l1.95 -0.3l1.95 -0.2l1.95 3.5l1.95 -2.0l1.95 1.6l1.95 -2.5l1.95 0.4l1.95 -3.4l1.95 4.0l1.95 -3.7l1.95 5.5l1.95 -0.5l1.95 -2.4l1.95 2.0l1.95 -1.7l1.95 2.0l1.95 -0.8l1.95 -7.4l1.95 5.3l1.95 2.3l1.95 -5.1l1.95 0.3l1.95 -3.0l1.95 0.4l1.95 3.2l1.95 -1.6l1.95 2.6l1.95 2.3l1.95 -1.5l1.95 -3.7l1.95 3.5l1.95 2.0l1.95 -2.0l1.95 -7.5l1.95 7.2l1.95 -1.8l1.95 -2.5l1.95 2.8l1.95 -0.9l1.95 3.8l1.95 1.0l1.95 -0.6l1.95 -7.0l1.95 6.7l1.95 1.0l1.95 -4.9l1.95 -0.1l1.95 1.9l1.95 3.0l1.95 -1.2l1.95 0.2l1.95 1.9l1.95 -0.3l1.95 -0.6l1.95 0.3l1.95 -9.9l1.95 7.0l1.95 -16.4l1.95 15.3l1.95 -3.7l1.95 6.9l1.95 -9.6l1.95 7.8l1.95 2.9l1.95 -0.2l1.95 -0.3l1.95 -0.3l1.95 -0.6l1.95 -0.8l1.95 -9.0l1.95 8.3l1.95 -4.9l1.95 4.7l1.95 -2.1l1.95 1.6l1.95 0.9l1.95 0.8l1.95 -0.1l1.95 2.1l1.95 -0.1l1.95 0.1l1.95 -2.0l1.95 -0.8l1.95 1.9l1.95 -1.5l1.95 1.3l1.95 1.1l1.95 0.9l1.95 0.3l1.95 -1.7l1.95 0.3l1.95 1.0l1.95 -2.5l1.95 0.3l1.95 -0.6l1.95 -0.4l1.95 0.3l1.95 3.3l1.95 -1.1l1.95 -1.6l1.95 0.9l1.95 -0.3l1.95 -1.3l1.95 0.3l1.95 -4.6l1.95 3.7l1.95 -9.2l1.95 4.4l1.95 0.5l1.95 1.3l1.95 3.6l1.95 -0.6l1.95 3.4l1.95 -2.2l1.95 1.5l1.95 -2.4l1.95 -0.8l1.95 -2.9l1.95 0.1l1.95 3.4l1.95 -3.7l1.95 3.6l1.95 -0.3l1.95 0.1l1.95 2.4l1.95 -0.9l1.95 1.0l1.95 -1.8l1.95 -3.5l1.95 -3.8l1.95 7.5l1.95 -3.7l1.95 -0.2l1.95 4.2l1.95 1.3l1.95 -0.9l1.95 0.3l1.95 1.3l1.95 -1.7l1.95 -3.5l1.95 1.8l1.95 -3.6l1.95 0.1l1.95 5.6l1.95 0.7l1.95 -1.7l1.95 1.0l1.95 1.4l1.95 -1.3l1.95 1.8l1.95 -2.6l1.95 0.8l1.95 1.3l1.95 -3.8l1.95 0.7l1.95 -1.3l1.95 2.9l1.95 -0.5l1.95 0.0l1.95 2.3l1.95 -2.1l1.95 1.8l1.95 0.6l1.95 -2.7l1.95 0.0l1.95 2.3l1.95 -0.4l1.95 -2.2l1.95 -0.1l1.95 1.8l1.95 0.8l1.95 -1.8l1.95 -4.6l1.95 4.1l1.95 -0.2l1.95 2.5l1.95 -1.1l1.95 -0.9l1.95 0.2l1.95 -0.5l1.95 1.2l1.95 0.2l1.95 0.8l1.95 -7.5l1.95 5.9l1.95 -4.5l1.95 2.9l1.95 2.0l1.95 -2.4l1.95 -4.9l1.95 -1.4l1.95 2.7l1.95 2.3l1.95 -5.4l1.95 6.4l1.95 -1.2l1.95 4.2l1.95 -2.0l1.95 0.5l1.95 -1.0l1.95 0.3l1.95 -0.2l1.95 -5.7l1.95 1.2l1.95 -1.3l1.95 9.0l1.95 -2.2l1.95 -0.3l1.95 0.1l1.95 0.2l1.95 -0.7l1.95 2.4l1.95 -6.4l1.95 -2.1l1.95 0.9l1.95 4.5l1.95 -2.2l1.95 -1.9" stroke="#c9a14a" stroke-width="1.3" stroke-linejoin="round"/><path d="M127.0 329.9l1.95 0.5l1.95 1.7l1.95 -2.5l1.95 1.1l1.95 -2.5l1.95 -0.2l1.95 -4.7l1.95 -1.7l1.95 9.9l1.95 -7.9l1.95 6.4l1.95 -8.9l1.95 11.0l1.95 -1.5l1.95 -0.1l1.95 -0.3l1.95 -0.8l1.95 -3.2l1.95 -1.2l1.95 -7.2l1.95 2.8l1.95 9.0l1.95 -3.2l1.95 -3.1l1.95 7.9l1.95 -4.8l1.95 4.3l1.95 1.6l1.95 0.2l1.95 -0.2l1.95 -0.9l1.95 -0.2l1.95 -1.9l1.95 -2.9l1.95 3.5l1.95 1.7l1.95 -5.4l1.95 5.5l1.95 -1.6l1.95 2.1l1.95 -1.3l1.95 -1.4l1.95 2.3l1.95 -10.1l1.95 9.1l1.95 0.9l1.95 -1.3l1.95 -0.5l1.95 0.3l1.95 -0.3l1.95 2.0l1.95 0.8l1.95 -6.6l1.95 6.0l1.95 -3.5l1.95 -0.2l1.95 -2.7l1.95 -1.2l1.95 0.3l1.95 6.3l1.95 -0.2l1.95 -0.3l1.95 -1.6l1.95 0.5l1.95 -2.4l1.95 1.4l1.95 -5.0l1.95 5.5l1.95 -13.1l1.95 9.7l1.95 2.5l1.95 -0.9l1.95 -1.6l1.95 4.9l1.95 1.5l1.95 -3.6l1.95 1.0l1.95 0.7l1.95 -16.7l1.95 12.8l1.95 -6.9l1.95 6.5l1.95 1.8l1.95 3.3l1.95 -0.4l1.95 1.0l1.95 -1.8l1.95 1.1l1.95 -3.7l1.95 -3.2l1.95 -7.5l1.95 0.6l1.95 -2.2l1.95 2.9l1.95 6.0l1.95 5.2l1.95 1.8l1.95 0.4l1.95 -1.5l1.95 0.6l1.95 -8.1l1.95 7.6l1.95 -9.7l1.95 8.5l1.95 -2.9l1.95 2.6l1.95 -2.5l1.95 5.5l1.95 -0.5l1.95 1.0l1.95 0.0l1.95 -2.1l1.95 2.2l1.95 -1.3l1.95 -3.9l1.95 4.5l1.95 -1.7l1.95 -0.5l1.95 3.3l1.95 -0.8l1.95 1.4l1.95 -3.1l1.95 -5.9l1.95 8.2l1.95 -2.6l1.95 0.4l1.95 -8.0l1.95 9.7l1.95 -7.4l1.95 5.0l1.95 -2.7l1.95 5.1l1.95 1.4l1.95 -2.8l1.95 2.1l1.95 -1.1l1.95 -2.8l1.95 -6.6l1.95 2.3l1.95 0.3l1.95 -3.7l1.95 6.2l1.95 -1.8l1.95 2.2l1.95 1.5l1.95 0.8l1.95 2.1l1.95 -2.5l1.95 -6.3l1.95 -2.7l1.95 5.0l1.95 -11.5l1.95 5.5l1.95 5.9l1.95 -3.8l1.95 8.0l1.95 -0.4l1.95 0.8l1.95 2.3l1.95 -0.8l1.95 -2.4l1.95 -6.8l1.95 6.9l1.95 -8.4l1.95 6.1l1.95 2.5l1.95 1.2l1.95 -0.2l1.95 -3.4l1.95 4.9l1.95 -8.2l1.95 8.8l1.95 -3.2l1.95 -1.9l1.95 -8.6l1.95 0.8l1.95 3.1l1.95 -0.6l1.95 5.0l1.95 -1.5l1.95 -5.1l1.95 10.9l1.95 -1.1l1.95 1.0l1.95 -6.0l1.95 5.9l1.95 -6.2l1.95 1.9l1.95 0.2l1.95 4.1l1.95 -5.9l1.95 3.9l1.95 1.4l1.95 -4.6l1.95 7.2l1.95 -0.3l1.95 -0.6l1.95 -0.6l1.95 -2.2l1.95 2.3l1.95 -6.0l1.95 3.7l1.95 0.3l1.95 2.7l1.95 -1.1l1.95 -0.2l1.95 -0.4l1.95 0.6l1.95 0.6l1.95 -2.0l1.95 1.7l1.95 0.7l1.95 -2.0l1.95 0.5l1.95 -0.7l1.95 0.3l1.95 2.1l1.95 -1.5l1.95 0.0l1.95 -0.5l1.95 -0.7l1.95 -5.6l1.95 -0.3l1.95 -2.3l1.95 6.9l1.95 3.1l1.95 -6.1l1.95 4.5l1.95 -0.5l1.95 1.8l1.95 1.1l1.95 -0.5l1.95 -2.7l1.95 -6.3l1.95 5.1l1.95 -16.5l1.95 9.7l1.95 9.9l1.95 -6.0l1.95 2.0l1.95 3.7l1.95 1.5l1.95 -10.5l1.95 9.9l1.95 -6.9l1.95 5.6l1.95 -4.2l1.95 -1.6l1.95 -3.1l1.95 7.8l1.95 -2.6l1.95 3.4l1.95 -0.2l1.95 -0.3l1.95 2.0l1.95 -4.6l1.95 2.2l1.95 0.4l1.95 -3.3l1.95 -1.3l1.95 2.4l1.95 0.0l1.95 1.9l1.95 1.1l1.95 2.2l1.95 -1.5l1.95 -0.7l1.95 0.1l1.95 -0.9l1.95 0.4l1.95 1.7l1.95 -16.0l1.95 15.6l1.95 -2.1l1.95 -1.0l1.95 0.4l1.95 1.3l1.95 -0.1l1.95 0.9l1.95 2.3l1.95 -0.9l1.95 -1.8l1.95 2.3l1.95 0.2l1.95 -0.2l1.95 -2.4l1.95 2.0l1.95 -2.5l1.95 2.4l1.95 0.1l1.95 -0.3l1.95 -1.5l1.95 -5.9l1.95 6.4l1.95 -1.2l1.95 0.6l1.95 -0.4l1.95 0.4l1.95 2.3l1.95 0.0l1.95 -3.3l1.95 3.6l1.95 -0.5l1.95 -5.1l1.95 1.4l1.95 0.1l1.95 -4.4l1.95 -5.9l1.95 9.0l1.95 0.8l1.95 0.4l1.95 -1.3l1.95 3.5l1.95 -1.0l1.95 1.0l1.95 -0.9l1.95 -1.8l1.95 -5.5l1.95 2.0l1.95 0.4l1.95 -2.1l1.95 5.2l1.95 -1.8l1.95 0.6l1.95 4.1l1.95 0.0l1.95 -0.6l1.95 0.8l1.95 0.1l1.95 -6.7l1.95 -0.4l1.95 1.5l1.95 -5.0l1.95 2.2l1.95 7.4l1.95 -2.7" stroke="#a04a4a" stroke-width="1.3" stroke-linejoin="round"/><path d="M127.0 330.7l1.95 0.5l1.95 0.3l1.95 0.4l1.95 -0.9l1.95 -6.2l1.95 -6.0l1.95 -4.9l1.95 -2.3l1.95 14.8l1.95 -6.2l1.95 5.5l1.95 3.4l1.95 3.3l1.95 -7.3l1.95 5.6l1.95 -4.6l1.95 0.0l1.95 2.2l1.95 -8.6l1.95 2.7l1.95 2.1l1.95 4.9l1.95 1.5l1.95 0.3l1.95 0.8l1.95 0.1l1.95 0.4l1.95 -0.2l1.95 -3.9l1.95 1.8l1.95 -8.7l1.95 9.0l1.95 -1.1l1.95 -0.2l1.95 0.4l1.95 0.7l1.95 1.2l1.95 -1.5l1.95 1.2l1.95 0.0l1.95 -0.5l1.95 -8.3l1.95 3.9l1.95 4.8l1.95 -0.6l1.95 0.9l1.95 -1.2l1.95 0.8l1.95 1.8l1.95 -0.8l1.95 -0.5l1.95 -7.5l1.95 -0.2l1.95 1.8l1.95 -3.7l1.95 -0.4l1.95 9.8l1.95 -3.4l1.95 -1.1l1.95 5.3l1.95 -0.4l1.95 0.6l1.95 -9.4l1.95 3.9l1.95 -8.7l1.95 -0.4l1.95 3.2l1.95 5.8l1.95 -11.8l1.95 11.8l1.95 5.5l1.95 -2.8l1.95 -2.0l1.95 2.3l1.95 2.6l1.95 -4.3l1.95 -4.5l1.95 -4.8l1.95 6.8l1.95 1.2l1.95 -16.3l1.95 19.2l1.95 -2.3l1.95 4.5l1.95 -0.5l1.95 -0.7l1.95 0.0l1.95 -1.2l1.95 -5.4l1.95 -2.3l1.95 -10.2l1.95 11.7l1.95 -1.4l1.95 -1.7l1.95 4.8l1.95 2.9l1.95 3.7l1.95 -2.2l1.95 1.2l1.95 -2.9l1.95 0.2l1.95 0.0l1.95 -5.6l1.95 -0.5l1.95 7.5l1.95 -5.0l1.95 2.7l1.95 2.9l1.95 2.0l1.95 -5.3l1.95 5.3l1.95 -0.5l1.95 1.0l1.95 -2.4l1.95 -0.5l1.95 1.9l1.95 -2.1l1.95 -0.1l1.95 1.6l1.95 0.5l1.95 -1.2l1.95 0.1l1.95 0.0l1.95 0.7l1.95 0.9l1.95 -0.1l1.95 -1.1l1.95 0.9l1.95 1.3l1.95 -2.7l1.95 0.6l1.95 -3.7l1.95 3.6l1.95 0.1l1.95 -1.8l1.95 1.4l1.95 -10.3l1.95 1.7l1.95 -1.4l1.95 -1.6l1.95 1.0l1.95 2.4l1.95 5.8l1.95 0.4l1.95 3.3l1.95 -1.4l1.95 0.8l1.95 -11.6l1.95 5.1l1.95 -2.0l1.95 -14.4l1.95 11.5l1.95 1.2l1.95 5.1l1.95 2.1l1.95 0.4l1.95 -3.1l1.95 5.1l1.95 1.0l1.95 -2.1l1.95 0.2l1.95 -12.9l1.95 -4.0l1.95 13.0l1.95 -1.6l1.95 2.1l1.95 3.5l1.95 -0.1l1.95 2.8l1.95 -8.8l1.95 8.0l1.95 -1.5l1.95 1.9l1.95 -3.7l1.95 -1.9l1.95 0.2l1.95 -4.7l1.95 0.0l1.95 7.5l1.95 3.0l1.95 -2.3l1.95 0.8l1.95 0.8l1.95 -3.1l1.95 -0.1l1.95 -0.4l1.95 -13.5l1.95 13.9l1.95 -2.2l1.95 2.6l1.95 0.6l1.95 2.0l1.95 -1.2l1.95 2.0l1.95 -0.8l1.95 0.2l1.95 0.1l1.95 -1.5l1.95 1.2l1.95 -1.0l1.95 -0.6l1.95 2.0l1.95 -7.6l1.95 7.0l1.95 1.2l1.95 -1.3l1.95 0.0l1.95 1.2l1.95 -7.7l1.95 5.4l1.95 0.5l1.95 -0.7l1.95 0.4l1.95 0.6l1.95 1.3l1.95 -5.0l1.95 4.6l1.95 -2.4l1.95 3.3l1.95 -11.1l1.95 1.1l1.95 2.9l1.95 -3.8l1.95 3.5l1.95 -0.7l1.95 5.4l1.95 -0.8l1.95 0.6l1.95 1.1l1.95 -0.5l1.95 0.4l1.95 -2.3l1.95 -0.1l1.95 1.1l1.95 -3.9l1.95 2.4l1.95 -8.4l1.95 8.3l1.95 -3.2l1.95 3.9l1.95 0.3l1.95 2.8l1.95 -0.3l1.95 -1.4l1.95 1.6l1.95 -4.2l1.95 1.2l1.95 -9.5l1.95 12.7l1.95 -5.4l1.95 -2.7l1.95 6.0l1.95 2.7l1.95 -2.1l1.95 -1.0l1.95 -0.4l1.95 1.1l1.95 -1.0l1.95 -6.9l1.95 3.3l1.95 2.9l1.95 1.1l1.95 -0.8l1.95 3.0l1.95 -8.4l1.95 1.6l1.95 7.1l1.95 -0.9l1.95 -0.8l1.95 -3.7l1.95 3.0l1.95 -2.1l1.95 -2.4l1.95 2.4l1.95 1.8l1.95 0.9l1.95 -5.6l1.95 0.8l1.95 1.0l1.95 4.8l1.95 -0.9l1.95 -0.2l1.95 1.7l1.95 0.6l1.95 -1.1l1.95 -0.3l1.95 0.4l1.95 1.3l1.95 -2.9l1.95 0.4l1.95 2.5l1.95 -2.0l1.95 -0.8l1.95 -0.5l1.95 1.4l1.95 1.4l1.95 -2.5l1.95 2.6l1.95 0.5l1.95 -0.6l1.95 -0.9l1.95 0.4l1.95 -2.0l1.95 -1.9l1.95 -3.0l1.95 4.4l1.95 -1.9l1.95 -0.8l1.95 2.1l1.95 -0.4l1.95 3.6l1.95 -0.4l1.95 -4.5l1.95 1.0l1.95 3.2l1.95 -0.6l1.95 -2.7l1.95 -3.1l1.95 -1.0l1.95 -6.0l1.95 1.4l1.95 11.0l1.95 -4.3l1.95 3.6l1.95 2.1l1.95 -0.2l1.95 -5.8l1.95 6.5l1.95 -7.1l1.95 -6.9l1.95 -3.0l1.95 -1.3l1.95 1.8l1.95 11.2l1.95 -1.9l1.95 4.1" stroke="#4a6a3a" stroke-width="1.3" stroke-linejoin="round"/><path d="M127.0 332.4l1.95 -0.5l1.95 -0.6l1.95 0.1l1.95 0.1l1.95 -2.0l1.95 -1.6l1.95 -5.5l1.95 -11.1l1.95 8.8l1.95 6.7l1.95 -9.5l1.95 3.7l1.95 6.2l1.95 -0.5l1.95 3.7l1.95 -0.5l1.95 1.4l1.95 -4.9l1.95 2.1l1.95 1.7l1.95 -5.0l1.95 -9.6l1.95 5.6l1.95 -0.3l1.95 3.1l1.95 7.4l1.95 0.0l1.95 0.2l1.95 -2.1l1.95 1.2l1.95 -1.6l1.95 0.0l1.95 -0.8l1.95 0.5l1.95 -1.0l1.95 1.4l1.95 -0.2l1.95 -5.1l1.95 6.2l1.95 1.1l1.95 -1.3l1.95 2.2l1.95 -0.3l1.95 -3.0l1.95 0.6l1.95 -9.6l1.95 12.4l1.95 -0.2l1.95 -1.5l1.95 -0.5l1.95 0.1l1.95 2.0l1.95 -4.6l1.95 1.9l1.95 -9.9l1.95 -1.7l1.95 -13.7l1.95 27.0l1.95 -11.3l1.95 7.7l1.95 4.5l1.95 -1.0l1.95 0.7l1.95 -1.1l1.95 1.2l1.95 -5.4l1.95 -13.2l1.95 17.1l1.95 -18.8l1.95 -4.6l1.95 12.3l1.95 9.5l1.95 1.1l1.95 -0.4l1.95 0.4l1.95 1.0l1.95 -2.7l1.95 1.2l1.95 -22.5l1.95 9.7l1.95 -13.6l1.95 18.3l1.95 -9.8l1.95 17.2l1.95 1.6l1.95 -2.9l1.95 2.8l1.95 -0.4l1.95 -0.5l1.95 -1.5l1.95 -6.6l1.95 -3.6l1.95 -6.6l1.95 12.4l1.95 4.4l1.95 -12.2l1.95 9.7l1.95 3.8l1.95 -0.9l1.95 1.0l1.95 -6.8l1.95 7.3l1.95 -8.9l1.95 -3.1l1.95 2.4l1.95 1.8l1.95 3.3l1.95 1.2l1.95 2.7l1.95 0.6l1.95 2.0l1.95 0.4l1.95 -1.8l1.95 2.0l1.95 -2.4l1.95 -1.3l1.95 -2.4l1.95 2.8l1.95 -3.4l1.95 4.4l1.95 -2.6l1.95 3.6l1.95 0.0l1.95 0.9l1.95 1.0l1.95 -3.1l1.95 -2.3l1.95 -3.1l1.95 5.1l1.95 -0.9l1.95 3.9l1.95 -3.3l1.95 0.7l1.95 2.8l1.95 -2.7l1.95 0.7l1.95 -2.7l1.95 -2.6l1.95 1.8l1.95 -1.7l1.95 -3.7l1.95 -3.6l1.95 0.3l1.95 1.0l1.95 10.9l1.95 0.5l1.95 0.7l1.95 -0.6l1.95 -1.8l1.95 -3.3l1.95 3.3l1.95 -23.1l1.95 10.6l1.95 -0.4l1.95 -7.3l1.95 3.3l1.95 8.6l1.95 5.7l1.95 5.5l1.95 -2.8l1.95 2.7l1.95 -1.0l1.95 -9.4l1.95 -3.4l1.95 -8.5l1.95 4.8l1.95 -0.9l1.95 10.5l1.95 2.3l1.95 1.9l1.95 2.2l1.95 -0.7l1.95 2.4l1.95 -4.7l1.95 -7.9l1.95 -11.2l1.95 -5.6l1.95 13.7l1.95 7.0l1.95 -4.5l1.95 6.6l1.95 2.8l1.95 1.1l1.95 1.4l1.95 0.3l1.95 -3.4l1.95 1.0l1.95 -13.7l1.95 0.4l1.95 14.4l1.95 -13.1l1.95 7.9l1.95 1.0l1.95 5.1l1.95 -8.4l1.95 9.2l1.95 -1.1l1.95 0.0l1.95 1.5l1.95 -0.8l1.95 -4.5l1.95 4.7l1.95 -2.0l1.95 3.0l1.95 -2.3l1.95 -5.0l1.95 6.8l1.95 -0.6l1.95 0.4l1.95 -0.2l1.95 -4.2l1.95 -4.8l1.95 8.8l1.95 -2.9l1.95 1.6l1.95 1.6l1.95 -2.0l1.95 0.6l1.95 1.8l1.95 0.8l1.95 -1.3l1.95 0.1l1.95 -3.5l1.95 -4.1l1.95 -1.2l1.95 -9.8l1.95 0.0l1.95 10.2l1.95 3.9l1.95 -3.2l1.95 7.3l1.95 -2.3l1.95 -0.2l1.95 3.4l1.95 -11.6l1.95 -8.6l1.95 0.4l1.95 6.3l1.95 -1.7l1.95 0.7l1.95 4.9l1.95 5.5l1.95 3.1l1.95 -5.9l1.95 4.4l1.95 0.1l1.95 -3.3l1.95 -7.1l1.95 5.3l1.95 -7.1l1.95 4.9l1.95 1.0l1.95 3.4l1.95 -6.1l1.95 10.3l1.95 -1.6l1.95 -4.3l1.95 3.5l1.95 2.7l1.95 -2.9l1.95 -8.3l1.95 -0.1l1.95 0.3l1.95 7.2l1.95 2.0l1.95 0.5l1.95 1.0l1.95 0.9l1.95 -2.1l1.95 -0.3l1.95 -8.5l1.95 6.4l1.95 -0.8l1.95 -2.5l1.95 0.2l1.95 5.0l1.95 -7.1l1.95 6.2l1.95 2.0l1.95 1.6l1.95 -0.5l1.95 -1.8l1.95 2.7l1.95 -1.7l1.95 -9.2l1.95 11.0l1.95 -0.8l1.95 0.1l1.95 0.2l1.95 -1.5l1.95 1.1l1.95 0.2l1.95 -1.0l1.95 1.4l1.95 -0.8l1.95 1.2l1.95 -2.2l1.95 1.9l1.95 -1.8l1.95 -0.1l1.95 1.8l1.95 -0.8l1.95 0.6l1.95 -0.6l1.95 -4.9l1.95 0.5l1.95 -5.7l1.95 -10.7l1.95 6.0l1.95 9.4l1.95 3.1l1.95 -1.6l1.95 -1.2l1.95 2.6l1.95 2.4l1.95 -1.1l1.95 0.8l1.95 -2.1l1.95 -7.1l1.95 8.5l1.95 -4.8l1.95 -4.6l1.95 3.4l1.95 -1.7l1.95 3.4l1.95 3.8l1.95 -1.0l1.95 0.5l1.95 1.3l1.95 -0.5l1.95 -9.3l1.95 4.6l1.95 -9.4l1.95 -3.9l1.95 6.4l1.95 2.9" stroke="#7a5a9a" stroke-width="1.3" stroke-linejoin="round"/><path d="M127.0 332.0l1.95 -1.1l1.95 0.5l1.95 0.2l1.95 0.1l1.95 -4.9l1.95 -9.0l1.95 -1.5l1.95 2.8l1.95 1.2l1.95 4.9l1.95 1.4l1.95 -2.0l1.95 6.4l1.95 -9.8l1.95 8.7l1.95 1.1l1.95 -0.4l1.95 -5.4l1.95 4.2l1.95 -4.1l1.95 -1.3l1.95 -6.9l1.95 8.6l1.95 5.1l1.95 -0.1l1.95 0.8l1.95 -0.4l1.95 1.7l1.95 -0.7l1.95 -2.4l1.95 -11.1l1.95 9.8l1.95 -2.9l1.95 6.3l1.95 -0.7l1.95 0.3l1.95 0.2l1.95 -0.8l1.95 1.7l1.95 -1.1l1.95 -0.7l1.95 -0.5l1.95 0.7l1.95 0.2l1.95 0.5l1.95 -1.0l1.95 0.9l1.95 0.5l1.95 0.4l1.95 -0.3l1.95 0.5l1.95 -1.6l1.95 -16.2l1.95 10.8l1.95 -5.2l1.95 9.0l1.95 -5.4l1.95 1.3l1.95 1.7l1.95 4.2l1.95 0.0l1.95 -0.1l1.95 0.9l1.95 -0.1l1.95 -1.9l1.95 -11.7l1.95 6.2l1.95 -3.2l1.95 6.7l1.95 -6.5l1.95 -1.6l1.95 5.7l1.95 4.3l1.95 1.2l1.95 -0.1l1.95 1.6l1.95 -2.4l1.95 -1.9l1.95 -19.0l1.95 5.0l1.95 0.7l1.95 14.4l1.95 -7.0l1.95 6.9l1.95 0.5l1.95 2.3l1.95 -0.2l1.95 1.1l1.95 -4.3l1.95 -8.5l1.95 5.6l1.95 -15.2l1.95 7.4l1.95 10.0l1.95 -9.6l1.95 8.4l1.95 3.3l1.95 1.9l1.95 -1.4l1.95 -0.3l1.95 -1.8l1.95 1.9l1.95 0.1l1.95 -9.3l1.95 4.8l1.95 2.5l1.95 -2.0l1.95 4.2l1.95 -0.3l1.95 0.6l1.95 0.2l1.95 1.2l1.95 -12.7l1.95 12.0l1.95 0.0l1.95 -0.6l1.95 0.8l1.95 1.0l1.95 -2.2l1.95 1.1l1.95 0.8l1.95 -7.5l1.95 6.8l1.95 -10.5l1.95 9.4l1.95 0.8l1.95 -5.3l1.95 5.1l1.95 -10.8l1.95 12.1l1.95 -1.5l1.95 0.8l1.95 -0.7l1.95 0.3l1.95 -4.5l1.95 3.9l1.95 1.6l1.95 -7.3l1.95 4.4l1.95 0.9l1.95 -4.5l1.95 -4.0l1.95 4.2l1.95 0.1l1.95 5.0l1.95 1.3l1.95 -1.2l1.95 -0.2l1.95 -3.5l1.95 -1.1l1.95 -9.3l1.95 3.0l1.95 2.0l1.95 -3.6l1.95 6.3l1.95 5.7l1.95 1.2l1.95 1.1l1.95 -1.0l1.95 -2.2l1.95 3.0l1.95 -6.5l1.95 -3.9l1.95 -9.1l1.95 12.4l1.95 4.0l1.95 -7.8l1.95 6.8l1.95 1.4l1.95 0.6l1.95 1.1l1.95 -0.8l1.95 -4.1l1.95 4.9l1.95 -3.1l1.95 -2.2l1.95 -3.1l1.95 2.7l1.95 -4.0l1.95 2.7l1.95 4.6l1.95 0.8l1.95 2.2l1.95 -0.8l1.95 -0.6l1.95 -3.1l1.95 3.3l1.95 -12.2l1.95 12.7l1.95 -7.5l1.95 4.3l1.95 2.4l1.95 -1.1l1.95 2.1l1.95 -1.2l1.95 1.0l1.95 0.0l1.95 0.8l1.95 -1.2l1.95 -0.2l1.95 -0.4l1.95 0.3l1.95 0.4l1.95 -6.4l1.95 5.6l1.95 0.3l1.95 0.9l1.95 -9.0l1.95 8.1l1.95 -6.1l1.95 6.9l1.95 0.1l1.95 -0.5l1.95 1.1l1.95 -8.6l1.95 3.0l1.95 4.2l1.95 0.2l1.95 -0.3l1.95 1.5l1.95 -1.4l1.95 -0.4l1.95 -6.8l1.95 0.5l1.95 -4.9l1.95 7.8l1.95 1.4l1.95 2.1l1.95 -0.9l1.95 1.5l1.95 0.1l1.95 -6.0l1.95 3.8l1.95 -1.8l1.95 -9.6l1.95 7.6l1.95 0.5l1.95 0.4l1.95 -6.8l1.95 5.9l1.95 4.5l1.95 2.0l1.95 -0.9l1.95 -0.3l1.95 -1.2l1.95 -1.1l1.95 -10.2l1.95 0.4l1.95 12.3l1.95 -4.4l1.95 1.7l1.95 -3.7l1.95 -2.1l1.95 4.8l1.95 3.3l1.95 0.1l1.95 0.8l1.95 -3.3l1.95 1.1l1.95 0.4l1.95 -1.0l1.95 -2.0l1.95 2.2l1.95 3.4l1.95 -0.8l1.95 0.3l1.95 -0.5l1.95 0.8l1.95 -2.7l1.95 -1.8l1.95 -0.7l1.95 -5.6l1.95 5.8l1.95 1.7l1.95 2.0l1.95 1.1l1.95 -1.1l1.95 0.1l1.95 1.9l1.95 -0.5l1.95 -13.0l1.95 12.9l1.95 0.2l1.95 -0.3l1.95 -14.0l1.95 13.2l1.95 -0.1l1.95 1.3l1.95 -1.9l1.95 1.5l1.95 0.5l1.95 -0.3l1.95 -1.5l1.95 0.8l1.95 0.3l1.95 -1.6l1.95 1.4l1.95 -0.4l1.95 0.3l1.95 0.4l1.95 0.4l1.95 -1.4l1.95 1.7l1.95 -2.1l1.95 -0.1l1.95 1.1l1.95 -6.4l1.95 -2.1l1.95 -4.0l1.95 11.6l1.95 -6.3l1.95 4.0l1.95 1.2l1.95 1.3l1.95 2.0l1.95 -1.6l1.95 -0.2l1.95 -15.8l1.95 10.3l1.95 -5.2l1.95 -2.7l1.95 0.7l1.95 4.3l1.95 2.8l1.95 -3.0l1.95 4.3l1.95 4.8l1.95 -0.4l1.95 -1.6l1.95 -4.4l1.95 -4.7l1.95 -12.5l1.95 7.6l1.95 14.7l1.95 -2.0l1.95 0.2" stroke="#b0643a" stroke-width="1.3" stroke-linejoin="round"/><path d="M127.0 332.4l1.95 -0.1l1.95 -0.2l1.95 -7.9l1.95 6.3l1.95 -3.6l1.95 -11.1l1.95 -0.5l1.95 9.7l1.95 0.0l1.95 -7.3l1.95 -5.3l1.95 17.8l1.95 1.9l1.95 0.4l1.95 -3.2l1.95 0.2l1.95 1.4l1.95 -5.3l1.95 -7.4l1.95 5.2l1.95 -2.7l1.95 8.9l1.95 3.1l1.95 -1.4l1.95 -0.7l1.95 2.1l1.95 0.1l1.95 -0.3l1.95 -1.4l1.95 -3.9l1.95 1.7l1.95 2.3l1.95 0.1l1.95 -2.6l1.95 2.0l1.95 1.5l1.95 -1.2l1.95 2.2l1.95 -0.1l1.95 -1.4l1.95 -0.6l1.95 0.5l1.95 -1.5l1.95 1.0l1.95 -0.1l1.95 0.9l1.95 -0.3l1.95 0.9l1.95 0.7l1.95 -2.0l1.95 -0.2l1.95 -3.4l1.95 -2.4l1.95 -2.4l1.95 1.9l1.95 -8.3l1.95 -6.9l1.95 10.3l1.95 8.9l1.95 -0.3l1.95 3.8l1.95 -4.0l1.95 1.1l1.95 1.7l1.95 -2.7l1.95 -14.3l1.95 9.0l1.95 -11.1l1.95 3.7l1.95 -2.9l1.95 9.6l1.95 4.6l1.95 2.6l1.95 2.6l1.95 -1.0l1.95 -6.4l1.95 0.1l1.95 -0.7l1.95 -1.8l1.95 3.6l1.95 3.3l1.95 -7.4l1.95 2.2l1.95 7.7l1.95 -0.9l1.95 0.3l1.95 -0.4l1.95 -2.0l1.95 -13.1l1.95 8.0l1.95 -19.9l1.95 9.1l1.95 -1.9l1.95 14.6l1.95 4.3l1.95 0.6l1.95 -3.4l1.95 -4.6l1.95 9.6l1.95 -0.8l1.95 -2.8l1.95 -1.9l1.95 -0.7l1.95 2.6l1.95 -7.8l1.95 9.6l1.95 -2.4l1.95 1.3l1.95 1.9l1.95 1.2l1.95 -1.5l1.95 0.8l1.95 -3.9l1.95 4.0l1.95 0.7l1.95 -1.1l1.95 1.5l1.95 -2.6l1.95 2.5l1.95 0.1l1.95 -0.9l1.95 0.0l1.95 -0.9l1.95 0.0l1.95 1.5l1.95 -0.8l1.95 -0.6l1.95 1.8l1.95 -1.1l1.95 -7.8l1.95 8.4l1.95 -0.3l1.95 -0.8l1.95 -0.2l1.95 -1.8l1.95 1.3l1.95 -7.1l1.95 3.9l1.95 1.7l1.95 -12.8l1.95 2.5l1.95 3.7l1.95 9.8l1.95 -1.2l1.95 1.8l1.95 -1.9l1.95 -0.4l1.95 -1.2l1.95 -0.3l1.95 -1.2l1.95 -19.8l1.95 8.5l1.95 13.9l1.95 -1.1l1.95 -3.8l1.95 4.8l1.95 -0.1l1.95 -5.6l1.95 4.6l1.95 0.1l1.95 -8.8l1.95 1.3l1.95 0.9l1.95 -6.0l1.95 3.8l1.95 3.8l1.95 3.3l1.95 1.3l1.95 3.3l1.95 -1.7l1.95 -0.1l1.95 -4.3l1.95 -7.2l1.95 8.8l1.95 3.1l1.95 -6.1l1.95 -3.7l1.95 -4.5l1.95 15.2l1.95 -2.9l1.95 2.0l1.95 -3.5l1.95 3.4l1.95 -2.3l1.95 -0.5l1.95 -10.7l1.95 10.9l1.95 -1.4l1.95 1.2l1.95 -1.4l1.95 -0.1l1.95 4.2l1.95 -0.1l1.95 1.4l1.95 0.5l1.95 -0.7l1.95 -0.8l1.95 -0.3l1.95 0.2l1.95 0.9l1.95 -0.6l1.95 1.2l1.95 -0.5l1.95 1.2l1.95 0.1l1.95 -10.7l1.95 8.5l1.95 -5.6l1.95 6.4l1.95 0.0l1.95 1.1l1.95 -1.0l1.95 -8.7l1.95 9.9l1.95 -2.1l1.95 1.6l1.95 -0.5l1.95 0.1l1.95 0.1l1.95 -5.2l1.95 -1.3l1.95 -0.1l1.95 2.5l1.95 1.1l1.95 -11.6l1.95 6.9l1.95 4.5l1.95 3.4l1.95 -1.8l1.95 1.2l1.95 -1.1l1.95 -4.2l1.95 -3.0l1.95 3.9l1.95 -2.7l1.95 2.5l1.95 2.0l1.95 -4.6l1.95 -7.7l1.95 15.3l1.95 -7.4l1.95 6.1l1.95 -0.2l1.95 -1.0l1.95 -7.5l1.95 -4.3l1.95 0.5l1.95 5.1l1.95 -3.2l1.95 6.1l1.95 0.9l1.95 3.3l1.95 -0.6l1.95 -10.2l1.95 12.6l1.95 -2.8l1.95 -2.9l1.95 3.7l1.95 -0.7l1.95 -11.1l1.95 7.9l1.95 1.7l1.95 -8.6l1.95 11.2l1.95 0.3l1.95 1.0l1.95 -1.6l1.95 -0.1l1.95 -5.6l1.95 -1.8l1.95 0.5l1.95 4.1l1.95 -1.9l1.95 -4.4l1.95 8.0l1.95 1.1l1.95 0.9l1.95 1.5l1.95 -0.2l1.95 0.3l1.95 -0.8l1.95 -4.0l1.95 1.1l1.95 1.8l1.95 0.4l1.95 -5.8l1.95 6.7l1.95 -0.4l1.95 0.9l1.95 0.4l1.95 -0.1l1.95 -1.1l1.95 -5.3l1.95 5.9l1.95 -0.8l1.95 -0.6l1.95 -0.3l1.95 -8.4l1.95 8.6l1.95 2.0l1.95 0.1l1.95 -1.2l1.95 -2.0l1.95 -2.1l1.95 -6.6l1.95 5.0l1.95 1.7l1.95 1.9l1.95 -12.8l1.95 8.8l1.95 3.7l1.95 0.4l1.95 1.5l1.95 -1.2l1.95 1.4l1.95 -1.0l1.95 -6.9l1.95 -0.9l1.95 1.7l1.95 4.0l1.95 -0.6l1.95 -2.0l1.95 0.9l1.95 3.7l1.95 1.1l1.95 -0.5l1.95 -1.2l1.95 1.9l1.95 -13.2l1.95 10.3l1.95 -24.2l1.95 25.0l1.95 -17.5l1.95 17.2l1.95 -4.9l1.95 5.4" stroke="#5b6fb8" stroke-width="1.3" stroke-linejoin="round"/><path d="M127.0 320.4l1.95 12.6l1.95 0.3l1.95 -1.7l1.95 -1.2l1.95 -0.1l1.95 -7.1l1.95 -13.2l1.95 5.9l1.95 -9.0l1.95 3.1l1.95 -7.6l1.95 28.1l1.95 -10.1l1.95 9.2l1.95 2.1l1.95 -8.3l1.95 8.2l1.95 -2.9l1.95 -2.3l1.95 -7.2l1.95 -11.5l1.95 11.5l1.95 -8.0l1.95 18.7l1.95 -0.9l1.95 -1.5l1.95 -6.8l1.95 10.7l1.95 -2.8l1.95 2.3l1.95 -1.8l1.95 -1.7l1.95 3.2l1.95 -1.6l1.95 1.4l1.95 -3.5l1.95 3.8l1.95 0.7l1.95 1.4l1.95 -1.6l1.95 1.2l1.95 -0.1l1.95 -2.4l1.95 2.3l1.95 -3.7l1.95 0.7l1.95 1.5l1.95 0.8l1.95 0.9l1.95 0.1l1.95 -0.3l1.95 -0.7l1.95 0.8l1.95 -7.8l1.95 4.3l1.95 -15.7l1.95 10.4l1.95 6.8l1.95 -18.1l1.95 11.1l1.95 3.8l1.95 2.6l1.95 0.8l1.95 -7.4l1.95 5.7l1.95 -10.3l1.95 -7.6l1.95 -6.6l1.95 6.8l1.95 -0.3l1.95 12.7l1.95 -9.0l1.95 11.9l1.95 3.3l1.95 1.0l1.95 -0.8l1.95 -1.7l1.95 -5.9l1.95 -10.0l1.95 -1.3l1.95 -0.6l1.95 -5.9l1.95 15.8l1.95 2.6l1.95 0.3l1.95 4.2l1.95 4.0l1.95 0.3l1.95 -2.4l1.95 -4.6l1.95 -7.2l1.95 -13.8l1.95 -8.4l1.95 28.8l1.95 -9.0l1.95 8.2l1.95 -4.1l1.95 -4.3l1.95 15.1l1.95 2.4l1.95 -9.5l1.95 6.9l1.95 0.8l1.95 -16.7l1.95 14.8l1.95 -8.6l1.95 -1.5l1.95 7.2l1.95 -0.9l1.95 2.8l1.95 3.7l1.95 -0.8l1.95 1.8l1.95 -1.3l1.95 1.4l1.95 -1.3l1.95 -0.6l1.95 -1.3l1.95 1.8l1.95 -0.3l1.95 1.5l1.95 -0.5l1.95 0.3l1.95 -0.5l1.95 -0.5l1.95 0.8l1.95 -0.5l1.95 -0.6l1.95 0.3l1.95 -0.7l1.95 -0.9l1.95 -4.6l1.95 7.7l1.95 -1.8l1.95 -8.9l1.95 9.5l1.95 -0.3l1.95 -4.7l1.95 -7.7l1.95 -13.0l1.95 -5.9l1.95 14.0l1.95 -2.3l1.95 18.1l1.95 -2.9l1.95 2.5l1.95 2.8l1.95 -1.0l1.95 0.5l1.95 -12.3l1.95 -9.1l1.95 19.0l1.95 -40.0l1.95 21.1l1.95 -4.5l1.95 -2.8l1.95 20.3l1.95 3.6l1.95 -1.2l1.95 3.9l1.95 -0.9l1.95 -4.6l1.95 4.5l1.95 -22.8l1.95 7.0l1.95 -0.7l1.95 17.7l1.95 -3.4l1.95 3.8l1.95 -0.3l1.95 2.9l1.95 -2.9l1.95 -1.4l1.95 1.9l1.95 -4.7l1.95 1.9l1.95 -29.9l1.95 4.1l1.95 14.2l1.95 0.8l1.95 11.4l1.95 0.6l1.95 3.3l1.95 -1.4l1.95 -0.9l1.95 -4.9l1.95 1.8l1.95 -10.8l1.95 -10.9l1.95 7.0l1.95 1.5l1.95 11.2l1.95 6.8l1.95 -3.5l1.95 3.0l1.95 -0.1l1.95 0.2l1.95 1.1l1.95 0.8l1.95 -0.1l1.95 -0.5l1.95 -2.2l1.95 -4.5l1.95 5.5l1.95 -0.7l1.95 2.1l1.95 0.6l1.95 -13.8l1.95 4.4l1.95 8.5l1.95 -1.0l1.95 0.1l1.95 -1.0l1.95 1.1l1.95 -0.2l1.95 0.6l1.95 1.0l1.95 -1.1l1.95 0.2l1.95 0.3l1.95 -2.6l1.95 1.0l1.95 -10.5l1.95 -20.0l1.95 25.2l1.95 -16.1l1.95 8.0l1.95 12.0l1.95 1.0l1.95 2.1l1.95 -1.1l1.95 0.5l1.95 0.1l1.95 -0.3l1.95 -2.4l1.95 -15.0l1.95 -6.2l1.95 12.2l1.95 -7.6l1.95 9.3l1.95 7.0l1.95 -2.3l1.95 3.8l1.95 0.4l1.95 -1.4l1.95 0.2l1.95 -4.6l1.95 -14.5l1.95 10.7l1.95 -1.6l1.95 -1.9l1.95 3.9l1.95 4.5l1.95 1.1l1.95 2.8l1.95 0.6l1.95 0.5l1.95 1.4l1.95 -7.4l1.95 2.7l1.95 -8.1l1.95 8.8l1.95 -8.6l1.95 6.0l1.95 4.9l1.95 0.2l1.95 -0.4l1.95 0.0l1.95 1.2l1.95 -3.3l1.95 2.6l1.95 -9.4l1.95 7.6l1.95 -9.9l1.95 5.2l1.95 1.8l1.95 2.6l1.95 1.6l1.95 1.8l1.95 -0.7l1.95 0.6l1.95 -0.6l1.95 1.0l1.95 0.2l1.95 -4.2l1.95 2.0l1.95 -1.7l1.95 0.8l1.95 2.9l1.95 -11.3l1.95 5.8l1.95 4.5l1.95 1.6l1.95 -1.6l1.95 0.6l1.95 -5.3l1.95 4.7l1.95 1.3l1.95 0.2l1.95 -0.3l1.95 -0.9l1.95 -5.2l1.95 4.9l1.95 0.1l1.95 -2.3l1.95 -3.4l1.95 -8.8l1.95 8.5l1.95 -24.3l1.95 8.9l1.95 7.0l1.95 4.2l1.95 5.0l1.95 3.6l1.95 -0.4l1.95 1.1l1.95 -1.1l1.95 -5.1l1.95 -8.3l1.95 6.9l1.95 -9.9l1.95 1.2l1.95 2.5l1.95 4.4l1.95 8.2l1.95 -0.1l1.95 0.6l1.95 1.7l1.95 -10.4l1.95 0.5l1.95 -7.1l1.95 -1.0l1.95 -13.5l1.95 20.9l1.95 -1.0l1.95 10.1" stroke="#8a3b52" stroke-width="1.5" stroke-linejoin="round"/><path d="M127.0 333.1l1.95 -1.4l1.95 1.0l1.95 -1.5l1.95 -2.2l1.95 -3.9l1.95 -7.8l1.95 -1.1l1.95 -7.2l1.95 20.5l1.95 -7.3l1.95 -3.0l1.95 10.2l1.95 1.3l1.95 1.3l1.95 0.0l1.95 -2.0l1.95 2.6l1.95 -8.9l1.95 -4.9l1.95 0.1l1.95 10.5l1.95 -13.3l1.95 -0.2l1.95 -1.9l1.95 16.0l1.95 0.5l1.95 1.9l1.95 -7.2l1.95 5.1l1.95 1.8l1.95 -0.5l1.95 -2.3l1.95 0.9l1.95 -1.5l1.95 0.4l1.95 2.2l1.95 0.5l1.95 -0.8l1.95 0.6l1.95 0.8l1.95 0.3l1.95 -1.1l1.95 0.0l1.95 0.2l1.95 -1.0l1.95 1.5l1.95 -1.3l1.95 -0.6l1.95 2.7l1.95 -1.1l1.95 0.7l1.95 -0.8l1.95 -6.6l1.95 -10.1l1.95 5.3l1.95 -7.5l1.95 12.4l1.95 -7.3l1.95 -3.1l1.95 8.4l1.95 6.0l1.95 3.0l1.95 -0.8l1.95 -3.8l1.95 3.3l1.95 -15.2l1.95 -12.2l1.95 25.6l1.95 -10.3l1.95 6.1l1.95 -9.9l1.95 -1.0l1.95 15.2l1.95 1.3l1.95 0.6l1.95 -0.8l1.95 -2.6l1.95 -6.3l1.95 3.7l1.95 -23.0l1.95 15.3l1.95 -1.8l1.95 8.8l1.95 -2.5l1.95 10.6l1.95 -1.5l1.95 0.2l1.95 -2.0l1.95 -5.1l1.95 5.2l1.95 -3.1l1.95 0.7l1.95 -7.8l1.95 -7.7l1.95 5.4l1.95 6.7l1.95 7.7l1.95 -0.3l1.95 -0.4l1.95 -10.3l1.95 6.8l1.95 0.3l1.95 -20.7l1.95 18.1l1.95 -7.8l1.95 13.0l1.95 -6.7l1.95 5.9l1.95 -0.7l1.95 2.5l1.95 0.6l1.95 -1.0l1.95 1.9l1.95 -1.4l1.95 -0.4l1.95 0.7l1.95 0.8l1.95 -11.2l1.95 10.7l1.95 0.8l1.95 -1.3l1.95 -0.2l1.95 -0.2l1.95 0.1l1.95 0.2l1.95 -1.3l1.95 1.6l1.95 1.0l1.95 -0.8l1.95 0.2l1.95 -0.5l1.95 0.2l1.95 0.6l1.95 0.5l1.95 -1.3l1.95 -1.9l1.95 -2.0l1.95 -2.8l1.95 -2.2l1.95 1.6l1.95 -10.7l1.95 12.0l1.95 -16.2l1.95 14.1l1.95 -0.8l1.95 9.9l1.95 0.2l1.95 -9.1l1.95 2.0l1.95 -11.1l1.95 16.8l1.95 -21.4l1.95 8.1l1.95 -17.9l1.95 25.6l1.95 -6.0l1.95 8.9l1.95 1.1l1.95 1.9l1.95 -0.5l1.95 -2.3l1.95 -5.0l1.95 -21.9l1.95 27.9l1.95 -18.6l1.95 6.5l1.95 11.9l1.95 -4.9l1.95 3.6l1.95 3.1l1.95 -1.0l1.95 -2.6l1.95 -2.5l1.95 -9.6l1.95 -8.2l1.95 17.0l1.95 2.8l1.95 -13.1l1.95 12.6l1.95 -0.9l1.95 4.0l1.95 -7.2l1.95 9.6l1.95 -0.2l1.95 -2.9l1.95 -3.3l1.95 -8.7l1.95 3.8l1.95 -0.9l1.95 4.1l1.95 7.7l1.95 -7.0l1.95 3.1l1.95 3.8l1.95 -1.0l1.95 0.5l1.95 1.4l1.95 -1.3l1.95 -8.7l1.95 8.3l1.95 1.3l1.95 -1.2l1.95 -0.2l1.95 1.5l1.95 -0.9l1.95 1.0l1.95 -0.8l1.95 1.1l1.95 -0.7l1.95 -0.7l1.95 -0.5l1.95 0.8l1.95 -6.9l1.95 2.5l1.95 5.3l1.95 -0.7l1.95 -0.9l1.95 1.3l1.95 0.1l1.95 -1.2l1.95 -6.2l1.95 -11.6l1.95 13.0l1.95 -16.7l1.95 -4.8l1.95 26.4l1.95 -5.6l1.95 0.8l1.95 5.4l1.95 -0.9l1.95 0.9l1.95 -1.3l1.95 -2.1l1.95 -11.9l1.95 9.6l1.95 -13.0l1.95 11.9l1.95 1.0l1.95 4.7l1.95 -2.5l1.95 1.6l1.95 0.9l1.95 1.4l1.95 0.2l1.95 -2.5l1.95 0.3l1.95 -19.3l1.95 15.4l1.95 -5.2l1.95 -2.7l1.95 -5.0l1.95 18.8l1.95 -10.9l1.95 10.3l1.95 -0.9l1.95 2.0l1.95 -2.7l1.95 -3.3l1.95 -4.6l1.95 5.8l1.95 0.3l1.95 -1.8l1.95 1.5l1.95 1.2l1.95 4.1l1.95 -2.5l1.95 1.6l1.95 -1.0l1.95 -1.8l1.95 0.9l1.95 -8.4l1.95 -3.9l1.95 5.3l1.95 4.2l1.95 2.2l1.95 -0.1l1.95 0.9l1.95 1.2l1.95 0.1l1.95 -0.1l1.95 -0.7l1.95 -0.3l1.95 -0.6l1.95 2.6l1.95 -1.9l1.95 -0.8l1.95 1.3l1.95 0.2l1.95 -0.1l1.95 -0.5l1.95 0.3l1.95 1.5l1.95 -1.7l1.95 1.6l1.95 -1.1l1.95 -0.2l1.95 1.3l1.95 -1.7l1.95 1.7l1.95 -1.0l1.95 -0.7l1.95 1.6l1.95 -8.1l1.95 4.7l1.95 2.5l1.95 -11.5l1.95 -3.2l1.95 9.0l1.95 -4.2l1.95 -4.4l1.95 5.5l1.95 4.9l1.95 2.7l1.95 0.2l1.95 0.2l1.95 -0.5l1.95 -3.7l1.95 -4.3l1.95 -10.0l1.95 5.5l1.95 -7.8l1.95 7.3l1.95 -6.1l1.95 12.8l1.95 6.8l1.95 -0.6l1.95 1.6l1.95 -11.9l1.95 4.1l1.95 -4.0l1.95 -6.5l1.95 2.0l1.95 -3.1l1.95 0.8l1.95 12.8l1.95 -2.8" stroke="#8c8a3a" stroke-width="1.5" stroke-linejoin="round"/><path d="M127.0 332.7l1.95 -1.1l1.95 1.1l1.95 -0.6l1.95 -3.5l1.95 -10.1l1.95 8.7l1.95 -28.5l1.95 2.6l1.95 5.5l1.95 12.5l1.95 7.1l1.95 1.2l1.95 2.0l1.95 1.5l1.95 0.4l1.95 -3.3l1.95 0.7l1.95 -3.4l1.95 3.7l1.95 -7.5l1.95 7.8l1.95 -10.5l1.95 8.5l1.95 0.0l1.95 4.6l1.95 -1.6l1.95 0.5l1.95 0.1l1.95 -1.0l1.95 1.9l1.95 -13.2l1.95 3.2l1.95 -2.7l1.95 10.7l1.95 2.2l1.95 -8.3l1.95 6.8l1.95 0.9l1.95 -0.7l1.95 0.4l1.95 -0.1l1.95 0.2l1.95 1.3l1.95 -1.4l1.95 -1.4l1.95 1.3l1.95 -0.1l1.95 1.8l1.95 -0.3l1.95 -0.4l1.95 -10.5l1.95 2.6l1.95 6.7l1.95 -2.9l1.95 -7.4l1.95 -6.8l1.95 6.0l1.95 1.3l1.95 1.9l1.95 7.4l1.95 0.2l1.95 0.0l1.95 1.9l1.95 -12.3l1.95 -4.3l1.95 3.9l1.95 -3.4l1.95 3.9l1.95 9.2l1.95 -5.1l1.95 -5.4l1.95 5.6l1.95 5.9l1.95 0.6l1.95 0.3l1.95 -13.2l1.95 7.2l1.95 -11.9l1.95 -12.8l1.95 0.5l1.95 26.6l1.95 1.1l1.95 -0.7l1.95 2.1l1.95 -8.1l1.95 9.2l1.95 -2.4l1.95 -6.2l1.95 -7.8l1.95 -4.2l1.95 -9.4l1.95 -0.2l1.95 4.0l1.95 14.9l1.95 -0.9l1.95 10.6l1.95 0.0l1.95 -6.7l1.95 7.0l1.95 -2.6l1.95 3.1l1.95 -16.6l1.95 10.8l1.95 5.4l1.95 0.8l1.95 -1.4l1.95 2.9l1.95 -3.0l1.95 1.1l1.95 0.5l1.95 0.4l1.95 -0.7l1.95 0.9l1.95 -0.4l1.95 -2.4l1.95 3.7l1.95 -2.1l1.95 0.2l1.95 2.2l1.95 -1.6l1.95 0.1l1.95 -11.0l1.95 10.7l1.95 1.1l1.95 -0.5l1.95 -9.3l1.95 7.1l1.95 0.5l1.95 -0.2l1.95 1.1l1.95 0.7l1.95 -0.5l1.95 1.4l1.95 -2.2l1.95 -0.7l1.95 -5.9l1.95 3.9l1.95 -8.8l1.95 -19.7l1.95 27.7l1.95 -9.5l1.95 1.0l1.95 8.3l1.95 4.2l1.95 -0.2l1.95 -0.7l1.95 -1.1l1.95 -3.9l1.95 -7.4l1.95 -0.4l1.95 -7.5l1.95 15.3l1.95 -23.4l1.95 14.0l1.95 13.1l1.95 -1.5l1.95 4.2l1.95 -0.3l1.95 -1.1l1.95 -12.8l1.95 -5.0l1.95 2.7l1.95 8.3l1.95 -11.0l1.95 -4.0l1.95 19.3l1.95 -3.4l1.95 7.6l1.95 -0.7l1.95 -0.1l1.95 -1.3l1.95 -2.3l1.95 -5.0l1.95 3.6l1.95 0.6l1.95 -7.5l1.95 -12.3l1.95 7.4l1.95 12.0l1.95 3.3l1.95 0.0l1.95 0.5l1.95 -0.7l1.95 -1.4l1.95 -2.4l1.95 -6.7l1.95 -21.7l1.95 24.5l1.95 6.3l1.95 -6.0l1.95 10.8l1.95 -3.2l1.95 1.3l1.95 -0.5l1.95 2.6l1.95 -1.8l1.95 0.8l1.95 -7.5l1.95 4.5l1.95 -8.0l1.95 9.9l1.95 0.6l1.95 -0.4l1.95 -6.8l1.95 6.9l1.95 2.0l1.95 0.0l1.95 -0.2l1.95 -1.8l1.95 0.5l1.95 0.0l1.95 -0.1l1.95 0.9l1.95 -1.9l1.95 1.7l1.95 -0.1l1.95 0.7l1.95 -2.1l1.95 1.2l1.95 -1.6l1.95 -6.1l1.95 2.6l1.95 -22.9l1.95 19.8l1.95 2.7l1.95 -3.3l1.95 5.9l1.95 3.4l1.95 -0.1l1.95 -0.1l1.95 0.4l1.95 -10.7l1.95 -8.1l1.95 0.9l1.95 -12.7l1.95 16.9l1.95 -1.6l1.95 5.5l1.95 -0.9l1.95 7.5l1.95 0.8l1.95 0.3l1.95 -0.1l1.95 -7.0l1.95 -2.9l1.95 -7.4l1.95 16.8l1.95 -16.3l1.95 10.6l1.95 5.3l1.95 0.1l1.95 2.3l1.95 -9.3l1.95 9.7l1.95 -0.7l1.95 -2.2l1.95 -13.5l1.95 4.1l1.95 7.9l1.95 0.1l1.95 -12.3l1.95 12.4l1.95 2.8l1.95 2.1l1.95 -2.8l1.95 1.3l1.95 0.5l1.95 -0.9l1.95 -8.6l1.95 9.2l1.95 -9.5l1.95 5.4l1.95 1.3l1.95 -5.7l1.95 4.3l1.95 2.9l1.95 1.6l1.95 -0.6l1.95 1.0l1.95 -1.1l1.95 0.0l1.95 -0.1l1.95 -10.1l1.95 8.7l1.95 2.0l1.95 -1.3l1.95 0.9l1.95 1.2l1.95 0.1l1.95 0.0l1.95 -1.0l1.95 -0.4l1.95 0.8l1.95 -2.2l1.95 1.1l1.95 -0.2l1.95 -0.3l1.95 0.4l1.95 0.3l1.95 2.1l1.95 -1.4l1.95 -12.1l1.95 12.3l1.95 -4.3l1.95 -2.8l1.95 -8.0l1.95 -12.6l1.95 21.4l1.95 -8.6l1.95 5.8l1.95 4.5l1.95 -2.5l1.95 7.5l1.95 -13.8l1.95 7.4l1.95 5.7l1.95 -12.6l1.95 1.0l1.95 -7.6l1.95 11.4l1.95 -9.3l1.95 0.9l1.95 16.2l1.95 -0.5l1.95 0.6l1.95 -1.4l1.95 -2.9l1.95 -5.0l1.95 7.0l1.95 -7.3l1.95 -16.7l1.95 18.0l1.95 -0.1l1.95 1.1l1.95 -5.1l1.95 7.1" stroke="#d98b9c" stroke-width="1.5" stroke-linejoin="round"/><path d="M127.0 332.2l1.95 -0.5l1.95 1.6l1.95 -0.6l1.95 -2.1l1.95 -1.7l1.95 2.4l1.95 -22.3l1.95 20.0l1.95 -27.7l1.95 -13.0l1.95 37.0l1.95 0.4l1.95 -15.2l1.95 16.3l1.95 5.1l1.95 -3.1l1.95 0.5l1.95 -0.9l1.95 -16.3l1.95 -7.9l1.95 7.2l1.95 15.6l1.95 -18.1l1.95 15.0l1.95 -3.7l1.95 5.9l1.95 5.5l1.95 -1.2l1.95 -6.4l1.95 8.3l1.95 -5.1l1.95 3.0l1.95 -7.1l1.95 3.7l1.95 2.9l1.95 0.0l1.95 1.8l1.95 -1.7l1.95 1.6l1.95 1.0l1.95 -1.5l1.95 0.4l1.95 -2.7l1.95 -0.1l1.95 -1.0l1.95 1.4l1.95 -11.1l1.95 10.5l1.95 2.9l1.95 1.6l1.95 -2.0l1.95 -0.1l1.95 -0.3l1.95 -0.1l1.95 -14.8l1.95 -17.9l1.95 5.3l1.95 16.6l1.95 -17.5l1.95 23.5l1.95 3.6l1.95 -2.9l1.95 5.0l1.95 -2.3l1.95 -1.3l1.95 -7.8l1.95 -8.8l1.95 -18.2l1.95 14.1l1.95 12.0l1.95 8.6l1.95 -29.8l1.95 15.8l1.95 15.9l1.95 -0.1l1.95 0.3l1.95 0.2l1.95 -0.8l1.95 -28.3l1.95 -22.4l1.95 8.0l1.95 4.9l1.95 1.7l1.95 38.2l1.95 -12.2l1.95 11.7l1.95 -0.3l1.95 0.9l1.95 -4.3l1.95 -2.9l1.95 -7.7l1.95 -0.2l1.95 -39.6l1.95 20.3l1.95 6.9l1.95 21.7l1.95 5.1l1.95 -4.8l1.95 2.3l1.95 1.0l1.95 2.0l1.95 -2.4l1.95 -2.1l1.95 -20.6l1.95 -8.5l1.95 8.9l1.95 23.9l1.95 -12.0l1.95 8.8l1.95 0.1l1.95 3.6l1.95 1.0l1.95 -0.1l1.95 -1.0l1.95 0.0l1.95 -0.7l1.95 0.2l1.95 -0.8l1.95 1.8l1.95 1.3l1.95 -0.4l1.95 -1.2l1.95 0.8l1.95 -9.8l1.95 9.2l1.95 1.6l1.95 -1.9l1.95 -0.8l1.95 0.4l1.95 -0.8l1.95 0.9l1.95 0.8l1.95 0.1l1.95 0.1l1.95 1.7l1.95 -1.1l1.95 -2.5l1.95 1.9l1.95 -7.5l1.95 -24.3l1.95 1.9l1.95 19.0l1.95 -22.7l1.95 27.9l1.95 -3.8l1.95 5.3l1.95 2.0l1.95 1.1l1.95 -8.8l1.95 -10.5l1.95 -11.1l1.95 -12.1l1.95 39.7l1.95 -28.9l1.95 11.8l1.95 1.4l1.95 1.5l1.95 15.3l1.95 4.2l1.95 -3.4l1.95 0.4l1.95 -11.7l1.95 -4.7l1.95 -10.5l1.95 -11.1l1.95 21.9l1.95 -4.8l1.95 11.5l1.95 2.8l1.95 1.7l1.95 6.6l1.95 -9.8l1.95 8.9l1.95 -11.9l1.95 -19.2l1.95 -10.5l1.95 -20.3l1.95 51.8l1.95 -13.4l1.95 6.8l1.95 3.2l1.95 7.1l1.95 6.7l1.95 0.6l1.95 -2.0l1.95 -5.0l1.95 -2.8l1.95 -21.4l1.95 23.0l1.95 -3.9l1.95 3.7l1.95 -13.4l1.95 2.0l1.95 18.6l1.95 -1.8l1.95 3.7l1.95 -1.1l1.95 0.8l1.95 -1.8l1.95 2.6l1.95 -3.4l1.95 -8.7l1.95 9.9l1.95 0.2l1.95 0.4l1.95 1.3l1.95 -8.4l1.95 2.7l1.95 4.6l1.95 0.9l1.95 -3.1l1.95 0.5l1.95 0.1l1.95 1.0l1.95 0.6l1.95 -5.9l1.95 5.1l1.95 1.5l1.95 -12.3l1.95 11.3l1.95 -1.8l1.95 0.0l1.95 -14.8l1.95 14.4l1.95 -40.0l1.95 30.8l1.95 8.0l1.95 2.0l1.95 -7.1l1.95 3.3l1.95 4.3l1.95 0.0l1.95 -9.0l1.95 -4.5l1.95 10.4l1.95 -13.9l1.95 -5.9l1.95 13.5l1.95 -17.3l1.95 14.1l1.95 1.6l1.95 3.8l1.95 7.2l1.95 -0.4l1.95 -0.7l1.95 -2.8l1.95 -3.0l1.95 -7.4l1.95 11.5l1.95 -13.9l1.95 -5.2l1.95 10.9l1.95 10.5l1.95 -3.7l1.95 4.0l1.95 -12.2l1.95 11.7l1.95 -1.9l1.95 -5.6l1.95 -3.7l1.95 -1.9l1.95 -2.0l1.95 15.7l1.95 1.2l1.95 -2.5l1.95 -8.8l1.95 11.3l1.95 0.3l1.95 -1.9l1.95 -3.5l1.95 -3.1l1.95 0.1l1.95 3.8l1.95 -5.7l1.95 -1.2l1.95 -2.0l1.95 4.0l1.95 9.3l1.95 -1.3l1.95 1.6l1.95 -0.9l1.95 0.4l1.95 1.5l1.95 -3.6l1.95 -0.6l1.95 1.4l1.95 -0.4l1.95 2.2l1.95 -1.1l1.95 0.8l1.95 1.1l1.95 -0.2l1.95 0.7l1.95 -2.3l1.95 -0.5l1.95 0.1l1.95 -0.1l1.95 0.3l1.95 0.1l1.95 -0.1l1.95 0.3l1.95 0.4l1.95 1.7l1.95 -0.9l1.95 -2.1l1.95 0.3l1.95 -8.3l1.95 -20.8l1.95 -8.1l1.95 11.4l1.95 15.9l1.95 -11.1l1.95 14.5l1.95 3.9l1.95 3.2l1.95 0.6l1.95 -1.4l1.95 -9.6l1.95 2.5l1.95 -18.4l1.95 -19.3l1.95 15.7l1.95 15.3l1.95 11.7l1.95 -4.9l1.95 6.8l1.95 1.8l1.95 -0.8l1.95 -1.4l1.95 -10.4l1.95 -14.9l1.95 -18.1l1.95 -7.5l1.95 50.0l1.95 0.1l1.95 -18.5" stroke="#6e4a26" stroke-width="1.5" stroke-linejoin="round"/><path d="M127.0 332.2l1.95 -1.2l1.95 1.1l1.95 -0.4l1.95 -7.7l1.95 5.8l1.95 -21.7l1.95 20.4l1.95 -19.3l1.95 1.2l1.95 -8.5l1.95 13.7l1.95 -2.6l1.95 15.0l1.95 4.3l1.95 -3.1l1.95 1.5l1.95 -3.9l1.95 1.0l1.95 -7.5l1.95 -32.2l1.95 32.8l1.95 -6.3l1.95 11.4l1.95 -4.4l1.95 9.7l1.95 -0.9l1.95 1.7l1.95 -1.1l1.95 -1.0l1.95 -0.7l1.95 -7.8l1.95 4.7l1.95 -0.8l1.95 4.1l1.95 -0.3l1.95 0.2l1.95 1.9l1.95 0.4l1.95 1.3l1.95 -0.7l1.95 -0.9l1.95 -0.2l1.95 -1.6l1.95 1.0l1.95 1.5l1.95 -1.8l1.95 -0.3l1.95 -0.5l1.95 2.3l1.95 1.2l1.95 -12.8l1.95 11.8l1.95 -11.0l1.95 -10.1l1.95 -6.0l1.95 5.3l1.95 -0.7l1.95 2.0l1.95 -14.7l1.95 28.1l1.95 3.3l1.95 -7.8l1.95 9.6l1.95 -4.1l1.95 -11.8l1.95 -14.9l1.95 -15.7l1.95 32.9l1.95 -32.9l1.95 18.4l1.95 11.3l1.95 2.4l1.95 13.2l1.95 2.4l1.95 -0.6l1.95 -2.4l1.95 -8.3l1.95 -0.1l1.95 -17.4l1.95 13.7l1.95 -15.9l1.95 -5.0l1.95 27.5l1.95 8.2l1.95 -0.8l1.95 -0.1l1.95 -0.2l1.95 0.7l1.95 -2.5l1.95 -28.6l1.95 -13.2l1.95 13.1l1.95 -5.5l1.95 3.1l1.95 0.7l1.95 16.6l1.95 9.9l1.95 -1.6l1.95 7.9l1.95 2.0l1.95 -1.7l1.95 -12.7l1.95 -14.8l1.95 24.0l1.95 -3.9l1.95 -6.3l1.95 7.2l1.95 -2.5l1.95 5.8l1.95 4.0l1.95 -0.2l1.95 -0.6l1.95 0.1l1.95 -8.9l1.95 8.0l1.95 0.3l1.95 -0.6l1.95 1.0l1.95 -1.4l1.95 3.7l1.95 -1.5l1.95 0.2l1.95 1.4l1.95 -1.1l1.95 0.2l1.95 -0.7l1.95 -1.3l1.95 -1.8l1.95 1.9l1.95 1.6l1.95 -1.4l1.95 2.0l1.95 0.4l1.95 -1.5l1.95 -6.7l1.95 3.6l1.95 -6.1l1.95 3.6l1.95 -18.0l1.95 12.7l1.95 -26.8l1.95 9.0l1.95 14.9l1.95 4.4l1.95 4.9l1.95 3.8l1.95 0.3l1.95 -3.0l1.95 -7.6l1.95 -7.4l1.95 2.1l1.95 -36.7l1.95 5.4l1.95 10.0l1.95 10.6l1.95 18.3l1.95 4.1l1.95 1.3l1.95 1.4l1.95 -2.7l1.95 -5.8l1.95 -21.6l1.95 29.1l1.95 -3.4l1.95 -16.6l1.95 0.9l1.95 -2.6l1.95 13.2l1.95 11.7l1.95 -1.1l1.95 -12.8l1.95 12.2l1.95 -3.2l1.95 2.7l1.95 -38.5l1.95 -4.1l1.95 1.7l1.95 24.9l1.95 9.4l1.95 -4.9l1.95 6.9l1.95 4.7l1.95 1.8l1.95 -1.4l1.95 -4.9l1.95 -6.7l1.95 -14.9l1.95 -11.8l1.95 25.6l1.95 -3.9l1.95 -0.7l1.95 5.9l1.95 11.9l1.95 1.6l1.95 -1.0l1.95 1.9l1.95 -1.7l1.95 -0.2l1.95 -7.4l1.95 7.1l1.95 -1.2l1.95 -0.1l1.95 1.3l1.95 -0.2l1.95 2.5l1.95 0.0l1.95 -1.5l1.95 1.3l1.95 -0.9l1.95 -0.1l1.95 -0.8l1.95 -3.0l1.95 1.5l1.95 0.8l1.95 0.1l1.95 1.8l1.95 0.0l1.95 0.5l1.95 -1.1l1.95 -1.6l1.95 -3.5l1.95 -11.6l1.95 -21.8l1.95 -12.2l1.95 45.3l1.95 -4.2l1.95 -3.1l1.95 7.0l1.95 1.4l1.95 2.7l1.95 -1.3l1.95 -2.2l1.95 -5.0l1.95 -14.5l1.95 16.7l1.95 -15.0l1.95 4.1l1.95 15.4l1.95 -16.1l1.95 17.3l1.95 -4.9l1.95 8.0l1.95 -1.7l1.95 0.7l1.95 -2.2l1.95 -8.5l1.95 -17.5l1.95 -9.2l1.95 34.9l1.95 -10.1l1.95 6.2l1.95 2.2l1.95 3.6l1.95 -1.1l1.95 2.5l1.95 -2.9l1.95 -2.5l1.95 5.3l1.95 -19.0l1.95 0.1l1.95 9.2l1.95 -8.5l1.95 11.9l1.95 -8.4l1.95 13.7l1.95 -0.5l1.95 1.4l1.95 -0.1l1.95 -6.7l1.95 5.0l1.95 -4.1l1.95 4.0l1.95 -4.8l1.95 -1.8l1.95 2.7l1.95 3.4l1.95 1.6l1.95 -1.6l1.95 2.7l1.95 0.4l1.95 -0.8l1.95 -6.4l1.95 7.0l1.95 -3.9l1.95 0.2l1.95 2.1l1.95 0.6l1.95 -1.7l1.95 -5.1l1.95 6.8l1.95 0.3l1.95 0.7l1.95 -1.2l1.95 -0.5l1.95 -1.5l1.95 0.9l1.95 -5.2l1.95 3.9l1.95 3.1l1.95 -2.3l1.95 1.8l1.95 0.9l1.95 -2.4l1.95 1.2l1.95 -2.3l1.95 -6.9l1.95 -17.3l1.95 -8.4l1.95 5.0l1.95 14.7l1.95 1.2l1.95 11.0l1.95 -1.1l1.95 5.5l1.95 -3.1l1.95 -1.6l1.95 -9.3l1.95 0.6l1.95 -22.9l1.95 12.8l1.95 17.8l1.95 -22.0l1.95 17.6l1.95 -3.1l1.95 11.8l1.95 -0.5l1.95 1.2l1.95 -5.2l1.95 -8.8l1.95 -5.3l1.95 -1.1l1.95 17.1l1.95 -13.6l1.95 -18.8l1.95 15.3l1.95 2.8" stroke="#3f9ca6" stroke-width="1.5" stroke-linejoin="round"/><path d="M127.0 331.9l1.95 0.0l1.95 -2.0l1.95 0.5l1.95 -15.7l1.95 -5.4l1.95 -15.5l1.95 -9.0l1.95 -5.9l1.95 47.3l1.95 -29.0l1.95 15.2l1.95 15.3l1.95 1.9l1.95 2.3l1.95 -3.4l1.95 0.8l1.95 -15.4l1.95 13.1l1.95 -44.0l1.95 37.4l1.95 3.9l1.95 2.7l1.95 -8.6l1.95 10.1l1.95 3.7l1.95 -8.6l1.95 7.2l1.95 -0.6l1.95 -10.1l1.95 5.9l1.95 3.2l1.95 -1.6l1.95 -3.9l1.95 5.9l1.95 -0.8l1.95 2.5l1.95 -0.3l1.95 0.9l1.95 0.4l1.95 -2.1l1.95 -1.8l1.95 -0.3l1.95 -14.6l1.95 15.6l1.95 -0.6l1.95 1.0l1.95 3.1l1.95 -0.4l1.95 -0.3l1.95 -0.9l1.95 -1.7l1.95 -6.1l1.95 -11.5l1.95 15.7l1.95 -19.7l1.95 10.4l1.95 -6.7l1.95 10.4l1.95 1.7l1.95 3.1l1.95 3.6l1.95 -2.1l1.95 -1.3l1.95 -0.5l1.95 -8.2l1.95 6.1l1.95 -12.6l1.95 5.8l1.95 -38.8l1.95 11.3l1.95 22.1l1.95 15.3l1.95 5.5l1.95 -3.2l1.95 -1.1l1.95 1.2l1.95 -13.5l1.95 -5.3l1.95 -28.5l1.95 -5.2l1.95 13.7l1.95 22.8l1.95 14.7l1.95 -4.3l1.95 4.4l1.95 3.5l1.95 -0.2l1.95 -6.4l1.95 3.7l1.95 -19.6l1.95 -8.8l1.95 -15.1l1.95 -1.4l1.95 25.9l1.95 17.7l1.95 1.4l1.95 0.9l1.95 -0.4l1.95 -0.2l1.95 -3.7l1.95 -15.3l1.95 12.8l1.95 -0.5l1.95 4.3l1.95 -18.4l1.95 13.4l1.95 6.8l1.95 -1.2l1.95 3.4l1.95 0.0l1.95 -2.3l1.95 1.6l1.95 1.1l1.95 -1.9l1.95 1.3l1.95 -9.8l1.95 10.0l1.95 0.3l1.95 -7.3l1.95 8.5l1.95 -1.5l1.95 0.5l1.95 -0.3l1.95 0.1l1.95 0.1l1.95 -2.7l1.95 0.5l1.95 3.3l1.95 -3.6l1.95 1.4l1.95 0.5l1.95 1.3l1.95 0.4l1.95 -1.1l1.95 -5.2l1.95 -3.7l1.95 -4.8l1.95 -28.9l1.95 -14.7l1.95 25.9l1.95 0.4l1.95 10.1l1.95 7.6l1.95 12.1l1.95 0.0l1.95 -0.6l1.95 -5.7l1.95 -8.1l1.95 8.0l1.95 -44.2l1.95 31.6l1.95 -0.9l1.95 -6.3l1.95 -3.4l1.95 28.3l1.95 -7.4l1.95 9.4l1.95 -0.1l1.95 -7.3l1.95 -5.9l1.95 -10.0l1.95 2.9l1.95 -16.7l1.95 21.6l1.95 4.5l1.95 0.8l1.95 -1.3l1.95 7.9l1.95 2.9l1.95 0.5l1.95 0.6l1.95 -4.5l1.95 -6.9l1.95 -23.3l1.95 -11.3l1.95 42.4l1.95 -9.7l1.95 -4.6l1.95 5.5l1.95 6.1l1.95 -3.6l1.95 9.8l1.95 -1.3l1.95 -5.3l1.95 -9.5l1.95 -0.5l1.95 -32.4l1.95 12.8l1.95 17.7l1.95 -1.2l1.95 14.5l1.95 2.2l1.95 1.9l1.95 2.1l1.95 -1.4l1.95 -0.5l1.95 -0.7l1.95 1.4l1.95 -2.3l1.95 0.0l1.95 -0.2l1.95 1.6l1.95 1.3l1.95 -0.5l1.95 0.9l1.95 -9.2l1.95 8.6l1.95 -1.0l1.95 -0.5l1.95 -0.9l1.95 1.4l1.95 -9.2l1.95 4.5l1.95 5.0l1.95 1.4l1.95 -1.0l1.95 1.1l1.95 -0.8l1.95 -1.4l1.95 -10.2l1.95 -15.3l1.95 11.6l1.95 -0.1l1.95 8.3l1.95 -20.0l1.95 22.4l1.95 -7.0l1.95 12.0l1.95 0.1l1.95 -0.9l1.95 -14.8l1.95 2.9l1.95 -10.4l1.95 -11.4l1.95 -6.5l1.95 36.6l1.95 -32.7l1.95 23.4l1.95 3.1l1.95 4.3l1.95 5.9l1.95 -11.5l1.95 7.9l1.95 -2.0l1.95 -15.6l1.95 14.3l1.95 -1.4l1.95 -10.7l1.95 3.7l1.95 10.3l1.95 -8.4l1.95 14.1l1.95 -2.8l1.95 0.4l1.95 2.2l1.95 -2.2l1.95 -1.9l1.95 -5.7l1.95 -7.7l1.95 -2.8l1.95 18.0l1.95 -5.4l1.95 3.6l1.95 2.8l1.95 0.1l1.95 1.7l1.95 -3.8l1.95 -4.1l1.95 2.1l1.95 2.3l1.95 -10.0l1.95 -0.1l1.95 -6.0l1.95 6.7l1.95 10.5l1.95 -11.7l1.95 12.8l1.95 1.2l1.95 1.2l1.95 -3.1l1.95 -7.6l1.95 8.8l1.95 -9.1l1.95 6.6l1.95 -0.6l1.95 -8.1l1.95 12.2l1.95 -1.2l1.95 1.0l1.95 -1.2l1.95 0.2l1.95 1.0l1.95 -1.0l1.95 -3.6l1.95 2.2l1.95 -0.3l1.95 -2.8l1.95 2.6l1.95 2.8l1.95 -1.5l1.95 2.6l1.95 -10.9l1.95 3.9l1.95 -2.5l1.95 -13.8l1.95 17.1l1.95 -10.1l1.95 -13.8l1.95 11.3l1.95 9.1l1.95 -2.3l1.95 7.7l1.95 0.1l1.95 0.9l1.95 -0.3l1.95 -9.0l1.95 -13.0l1.95 -4.4l1.95 20.2l1.95 -27.8l1.95 22.7l1.95 11.3l1.95 -10.0l1.95 -5.3l1.95 17.4l1.95 -2.7l1.95 1.2l1.95 -5.2l1.95 -6.6l1.95 -7.0l1.95 -25.0l1.95 20.1l1.95 15.4l1.95 -15.2l1.95 8.8l1.95 9.9" stroke="#3f8f74" stroke-width="1.5" stroke-linejoin="round"/><path d="M127.0 334.2l1.95 -3.1l1.95 -2.8l1.95 -3.8l1.95 -3.4l1.95 -5.3l1.95 -22.4l1.95 -8.9l1.95 0.4l1.95 6.8l1.95 2.8l1.95 3.5l1.95 5.7l1.95 9.3l1.95 0.3l1.95 1.7l1.95 -2.4l1.95 -4.8l1.95 -9.1l1.95 8.2l1.95 -4.9l1.95 0.2l1.95 1.9l1.95 1.9l1.95 3.3l1.95 3.4l1.95 0.5l1.95 1.7l1.95 -0.2l1.95 -1.7l1.95 -1.1l1.95 -2.7l1.95 3.3l1.95 -3.1l1.95 4.9l1.95 -2.0l1.95 1.5l1.95 2.2l1.95 0.6l1.95 -0.1l1.95 -2.1l1.95 0.6l1.95 -0.1l1.95 0.7l1.95 -2.0l1.95 1.4l1.95 -1.4l1.95 -0.2l1.95 1.6l1.95 -0.5l1.95 0.8l1.95 -1.5l1.95 -0.6l1.95 -2.1l1.95 -13.3l1.95 1.7l1.95 -2.9l1.95 11.3l1.95 -10.1l1.95 5.0l1.95 4.7l1.95 5.4l1.95 1.7l1.95 -0.9l1.95 0.1l1.95 -2.7l1.95 -8.7l1.95 -14.1l1.95 3.5l1.95 13.3l1.95 -16.2l1.95 17.2l1.95 3.9l1.95 1.2l1.95 2.9l1.95 1.2l1.95 -3.5l1.95 -0.3l1.95 -18.1l1.95 8.4l1.95 -15.2l1.95 -1.5l1.95 18.7l1.95 -9.7l1.95 10.4l1.95 10.3l1.95 -1.3l1.95 2.3l1.95 -1.6l1.95 -2.3l1.95 -20.4l1.95 -11.1l1.95 -7.5l1.95 27.0l1.95 -12.5l1.95 11.2l1.95 8.9l1.95 6.8l1.95 0.5l1.95 0.0l1.95 -1.6l1.95 -3.7l1.95 2.6l1.95 -4.3l1.95 -12.4l1.95 9.1l1.95 -1.6l1.95 6.2l1.95 2.5l1.95 2.9l1.95 -0.8l1.95 1.9l1.95 0.0l1.95 1.5l1.95 -2.4l1.95 0.0l1.95 0.6l1.95 -1.0l1.95 0.8l1.95 1.5l1.95 -1.2l1.95 0.3l1.95 -0.3l1.95 0.9l1.95 -1.0l1.95 -0.2l1.95 1.7l1.95 -1.4l1.95 -0.7l1.95 -1.1l1.95 1.4l1.95 -0.2l1.95 0.5l1.95 0.9l1.95 0.1l1.95 -0.3l1.95 -2.4l1.95 -3.2l1.95 -12.0l1.95 2.6l1.95 -16.2l1.95 15.4l1.95 -6.8l1.95 3.8l1.95 10.6l1.95 5.3l1.95 0.6l1.95 1.4l1.95 0.2l1.95 -10.3l1.95 3.5l1.95 -4.3l1.95 -23.3l1.95 -0.4l1.95 5.8l1.95 8.5l1.95 8.4l1.95 7.9l1.95 4.5l1.95 -1.9l1.95 -0.2l1.95 -4.4l1.95 -3.7l1.95 -5.0l1.95 -5.8l1.95 3.5l1.95 1.9l1.95 7.4l1.95 -0.4l1.95 6.0l1.95 0.5l1.95 1.3l1.95 -3.6l1.95 -1.2l1.95 -2.1l1.95 -4.8l1.95 -8.4l1.95 -3.7l1.95 11.1l1.95 1.1l1.95 3.7l1.95 6.7l1.95 -0.2l1.95 2.5l1.95 -1.3l1.95 -8.1l1.95 -3.9l1.95 -10.5l1.95 2.5l1.95 0.0l1.95 7.5l1.95 -2.6l1.95 11.5l1.95 0.3l1.95 2.4l1.95 1.8l1.95 0.9l1.95 -0.7l1.95 0.3l1.95 0.0l1.95 -2.6l1.95 2.4l1.95 -1.6l1.95 1.9l1.95 -1.4l1.95 0.5l1.95 -0.4l1.95 0.0l1.95 0.1l1.95 0.4l1.95 0.6l1.95 -1.2l1.95 0.7l1.95 -0.6l1.95 -0.7l1.95 0.6l1.95 0.8l1.95 -1.0l1.95 1.2l1.95 -0.1l1.95 -1.1l1.95 -5.7l1.95 0.4l1.95 -13.3l1.95 -10.5l1.95 18.6l1.95 -4.5l1.95 2.5l1.95 9.8l1.95 2.0l1.95 -0.5l1.95 0.5l1.95 -0.8l1.95 1.4l1.95 -8.2l1.95 -7.4l1.95 -3.4l1.95 -4.6l1.95 0.7l1.95 14.6l1.95 5.9l1.95 -0.6l1.95 3.0l1.95 1.2l1.95 -0.4l1.95 -2.2l1.95 -6.0l1.95 1.1l1.95 -17.0l1.95 5.0l1.95 1.4l1.95 8.2l1.95 4.2l1.95 3.4l1.95 1.6l1.95 -0.3l1.95 -0.4l1.95 -0.9l1.95 -2.8l1.95 -4.0l1.95 -1.5l1.95 2.0l1.95 -5.0l1.95 10.6l1.95 0.1l1.95 2.7l1.95 0.6l1.95 -1.1l1.95 -1.2l1.95 -2.0l1.95 -6.7l1.95 -2.0l1.95 -3.7l1.95 3.1l1.95 2.0l1.95 7.5l1.95 2.4l1.95 0.1l1.95 0.8l1.95 1.1l1.95 -0.6l1.95 -0.6l1.95 0.5l1.95 -0.7l1.95 -0.6l1.95 -0.3l1.95 0.0l1.95 1.7l1.95 -1.1l1.95 0.5l1.95 1.5l1.95 -0.6l1.95 0.9l1.95 -2.1l1.95 -0.4l1.95 -0.6l1.95 0.7l1.95 0.2l1.95 -0.5l1.95 0.6l1.95 2.0l1.95 -1.3l1.95 1.7l1.95 -0.8l1.95 -2.6l1.95 -3.0l1.95 0.3l1.95 -20.6l1.95 15.9l1.95 1.9l1.95 2.2l1.95 -9.2l1.95 11.4l1.95 -0.7l1.95 1.6l1.95 0.7l1.95 -2.8l1.95 0.0l1.95 -2.7l1.95 -5.5l1.95 -20.9l1.95 11.4l1.95 -0.3l1.95 5.5l1.95 10.1l1.95 1.4l1.95 5.7l1.95 -1.5l1.95 -1.2l1.95 -2.5l1.95 -0.8l1.95 -22.1l1.95 14.4l1.95 -17.4l1.95 1.5l1.95 15.5l1.95 3.0" stroke="#3b73c8" stroke-width="1.8" stroke-linejoin="round"/><path d="M127.0 282.8l1.95 35.6l1.95 14.7l1.95 -3.1l1.95 -8.7l1.95 -14.4l1.95 -29.1l1.95 -21.3l1.95 -24.2l1.95 16.5l1.95 14.1l1.95 20.5l1.95 19.1l1.95 15.7l1.95 6.7l1.95 0.9l1.95 -4.1l1.95 -21.5l1.95 -27.7l1.95 -36.2l1.95 -25.2l1.95 26.8l1.95 7.0l1.95 27.0l1.95 21.9l1.95 21.2l1.95 9.6l1.95 3.2l1.95 1.3l1.95 -1.1l1.95 -5.9l1.95 -1.7l1.95 -3.6l1.95 3.3l1.95 0.9l1.95 2.5l1.95 2.9l1.95 3.1l1.95 1.2l1.95 1.3l1.95 -1.2l1.95 -1.9l1.95 -2.2l1.95 -1.2l1.95 -1.3l1.95 2.1l1.95 1.2l1.95 -0.6l1.95 3.2l1.95 0.8l1.95 1.8l1.95 -3.1l1.95 -8.9l1.95 -15.1l1.95 -34.5l1.95 -19.1l1.95 -25.2l1.95 15.7l1.95 19.4l1.95 10.8l1.95 26.5l1.95 18.3l1.95 7.8l1.95 -0.1l1.95 -2.8l1.95 -10.7l1.95 -23.8l1.95 -19.5l1.95 -14.2l1.95 14.2l1.95 8.1l1.95 11.0l1.95 18.3l1.95 15.1l1.95 7.4l1.95 -0.2l1.95 -6.4l1.95 -18.4l1.95 -24.3l1.95 -22.0l1.95 -25.0l1.95 19.2l1.95 11.9l1.95 19.2l1.95 20.1l1.95 15.4l1.95 9.3l1.95 -1.9l1.95 -10.0l1.95 -27.1l1.95 -53.0l1.95 -42.7l1.95 -27.2l1.95 44.3l1.95 2.2l1.95 35.4l1.95 31.7l1.95 26.3l1.95 16.8l1.95 1.2l1.95 0.0l1.95 -14.8l1.95 -21.4l1.95 -24.0l1.95 -14.6l1.95 18.8l1.95 3.5l1.95 15.0l1.95 18.8l1.95 14.3l1.95 7.8l1.95 3.0l1.95 2.9l1.95 -2.7l1.95 -1.6l1.95 -2.0l1.95 -1.2l1.95 2.4l1.95 -0.7l1.95 1.7l1.95 0.1l1.95 1.2l1.95 2.4l1.95 -0.5l1.95 -0.9l1.95 -0.7l1.95 -0.3l1.95 -3.9l1.95 0.5l1.95 1.5l1.95 -1.9l1.95 3.8l1.95 0.9l1.95 -0.1l1.95 1.0l1.95 -2.2l1.95 -3.8l1.95 -13.0l1.95 -22.8l1.95 -17.5l1.95 -20.2l1.95 23.7l1.95 6.4l1.95 5.7l1.95 21.0l1.95 12.1l1.95 5.6l1.95 0.0l1.95 -2.5l1.95 -14.6l1.95 -21.3l1.95 -20.6l1.95 -23.6l1.95 28.4l1.95 -0.9l1.95 13.6l1.95 22.0l1.95 11.0l1.95 8.4l1.95 -0.4l1.95 -2.5l1.95 -13.4l1.95 -23.5l1.95 -18.9l1.95 -12.6l1.95 13.7l1.95 2.0l1.95 21.8l1.95 12.3l1.95 14.1l1.95 8.0l1.95 0.4l1.95 -2.5l1.95 -15.9l1.95 -29.6l1.95 -21.3l1.95 -22.4l1.95 29.9l1.95 2.1l1.95 19.1l1.95 14.0l1.95 17.9l1.95 8.2l1.95 -2.0l1.95 -4.0l1.95 -16.9l1.95 -31.7l1.95 -33.1l1.95 -16.0l1.95 26.4l1.95 4.0l1.95 14.2l1.95 27.3l1.95 21.6l1.95 9.0l1.95 3.1l1.95 1.6l1.95 0.3l1.95 -1.0l1.95 -1.8l1.95 -2.0l1.95 -0.1l1.95 0.9l1.95 2.5l1.95 1.6l1.95 -0.3l1.95 1.4l1.95 0.4l1.95 -0.7l1.95 -0.9l1.95 -3.4l1.95 -1.3l1.95 -1.3l1.95 0.9l1.95 0.8l1.95 2.6l1.95 0.5l1.95 1.8l1.95 -1.0l1.95 -0.6l1.95 -6.1l1.95 -9.4l1.95 -26.0l1.95 -20.0l1.95 -11.7l1.95 13.7l1.95 9.8l1.95 12.5l1.95 14.3l1.95 15.7l1.95 5.9l1.95 -0.7l1.95 -2.5l1.95 -13.2l1.95 -24.2l1.95 -13.2l1.95 -20.4l1.95 19.2l1.95 -0.5l1.95 15.0l1.95 19.3l1.95 11.9l1.95 8.2l1.95 0.0l1.95 -4.4l1.95 -16.9l1.95 -22.9l1.95 -21.3l1.95 -10.7l1.95 14.3l1.95 0.4l1.95 20.0l1.95 17.3l1.95 17.9l1.95 6.4l1.95 1.1l1.95 -4.3l1.95 -8.3l1.95 -17.6l1.95 -13.7l1.95 -10.9l1.95 6.3l1.95 5.8l1.95 9.1l1.95 18.0l1.95 11.3l1.95 5.3l1.95 0.4l1.95 -3.6l1.95 -9.0l1.95 -14.8l1.95 -7.2l1.95 -15.4l1.95 14.1l1.95 2.8l1.95 8.2l1.95 9.3l1.95 10.0l1.95 5.1l1.95 -0.5l1.95 1.8l1.95 0.9l1.95 -2.1l1.95 -2.9l1.95 -1.5l1.95 1.3l1.95 2.1l1.95 -1.1l1.95 2.4l1.95 2.1l1.95 -0.7l1.95 1.2l1.95 -2.2l1.95 0.8l1.95 -3.5l1.95 -0.3l1.95 -1.6l1.95 1.4l1.95 0.4l1.95 2.0l1.95 1.0l1.95 1.4l1.95 -0.3l1.95 -2.5l1.95 -7.3l1.95 -14.2l1.95 -24.5l1.95 -21.2l1.95 -20.0l1.95 19.1l1.95 7.0l1.95 13.8l1.95 21.3l1.95 14.5l1.95 7.7l1.95 1.9l1.95 -2.7l1.95 -15.2l1.95 -23.5l1.95 -25.7l1.95 -14.4l1.95 13.6l1.95 10.2l1.95 18.1l1.95 16.6l1.95 15.7l1.95 5.6l1.95 0.4l1.95 -3.2l1.95 -21.6l1.95 -28.7l1.95 22.5l1.95 -34.3l1.95 -38.2l1.95 6.6l1.95 29.0l1.95 -4.0" stroke="#d08247" stroke-width="1.75" stroke-linejoin="round"/><path d="M127.0 281.5l1.95 22.4l1.95 7.9l1.95 10.3l1.95 -10.4l1.95 -56.0l1.95 -40.4l1.95 -71.6l1.95 -16.0l1.95 44.4l1.95 13.6l1.95 35.1l1.95 45.8l1.95 29.7l1.95 18.3l1.95 2.0l1.95 -4.9l1.95 -24.3l1.95 -39.7l1.95 -39.0l1.95 -33.6l1.95 32.1l1.95 11.0l1.95 30.2l1.95 32.4l1.95 25.1l1.95 13.6l1.95 3.5l1.95 -0.8l1.95 -2.1l1.95 -9.7l1.95 -15.4l1.95 -4.3l1.95 10.6l1.95 1.9l1.95 5.5l1.95 7.2l1.95 10.4l1.95 -0.3l1.95 -0.7l1.95 -8.2l1.95 5.1l1.95 -4.9l1.95 -2.1l1.95 -5.2l1.95 4.5l1.95 0.8l1.95 4.8l1.95 4.0l1.95 -6.8l1.95 12.5l1.95 -6.5l1.95 -10.0l1.95 -23.0l1.95 -64.5l1.95 -25.5l1.95 -26.6l1.95 39.3l1.95 -26.7l1.95 55.3l1.95 35.2l1.95 30.4l1.95 11.6l1.95 1.5l1.95 -13.1l1.95 -31.9l1.95 -69.5l1.95 -56.8l1.95 -50.7l1.95 47.9l1.95 30.5l1.95 35.5l1.95 42.4l1.95 42.5l1.95 15.8l1.95 1.0l1.95 -29.7l1.95 -11.0l1.95 -59.2l1.95 -66.1l1.95 -23.2l1.95 39.8l1.95 25.0l1.95 33.5l1.95 42.5l1.95 35.8l1.95 13.4l1.95 2.3l1.95 -7.3l1.95 -48.4l1.95 -48.7l1.95 -88.5l1.95 -8.0l1.95 41.8l1.95 18.2l1.95 36.8l1.95 47.3l1.95 36.5l1.95 16.8l1.95 6.1l1.95 -1.6l1.95 -20.5l1.95 -30.1l1.95 -47.0l1.95 -11.5l1.95 21.8l1.95 -17.3l1.95 45.3l1.95 32.5l1.95 16.3l1.95 16.7l1.95 1.7l1.95 -0.6l1.95 2.1l1.95 -7.4l1.95 0.2l1.95 -6.0l1.95 4.1l1.95 -20.0l1.95 6.8l1.95 21.6l1.95 0.7l1.95 -17.2l1.95 17.0l1.95 2.1l1.95 -2.0l1.95 -7.9l1.95 -11.6l1.95 5.7l1.95 2.7l1.95 1.2l1.95 2.8l1.95 2.1l1.95 6.8l1.95 -1.4l1.95 -5.4l1.95 -7.5l1.95 -33.2l1.95 -47.4l1.95 -41.7l1.95 -32.6l1.95 34.3l1.95 14.6l1.95 25.4l1.95 37.4l1.95 33.0l1.95 16.2l1.95 -1.4l1.95 -12.6l1.95 -32.6l1.95 -68.5l1.95 -61.2l1.95 -42.0l1.95 52.6l1.95 13.0l1.95 41.9l1.95 43.0l1.95 45.1l1.95 19.0l1.95 -17.9l1.95 12.5l1.95 -28.1l1.95 -64.9l1.95 -33.5l1.95 -40.5l1.95 40.0l1.95 17.2l1.95 33.7l1.95 38.0l1.95 26.1l1.95 16.1l1.95 0.2l1.95 -6.4l1.95 -36.0l1.95 -55.6l1.95 -48.2l1.95 -34.6l1.95 36.5l1.95 15.6l1.95 32.5l1.95 46.9l1.95 31.0l1.95 19.0l1.95 -0.6l1.95 -2.4l1.95 -26.0l1.95 -41.6l1.95 -39.1l1.95 -31.3l1.95 30.7l1.95 16.7l1.95 21.5l1.95 35.4l1.95 28.9l1.95 7.7l1.95 6.0l1.95 7.2l1.95 -3.6l1.95 -6.3l1.95 0.3l1.95 -2.3l1.95 -0.4l1.95 4.0l1.95 -3.1l1.95 3.8l1.95 7.2l1.95 -0.5l1.95 -2.8l1.95 0.2l1.95 -3.2l1.95 -3.0l1.95 -1.0l1.95 -2.6l1.95 4.9l1.95 0.9l1.95 0.4l1.95 0.1l1.95 7.1l1.95 -0.3l1.95 -2.7l1.95 -15.2l1.95 -23.6l1.95 -70.0l1.95 -10.5l1.95 -45.8l1.95 49.6l1.95 4.8l1.95 29.3l1.95 30.1l1.95 29.1l1.95 17.7l1.95 -2.6l1.95 -8.8l1.95 -29.4l1.95 -76.0l1.95 -23.7l1.95 -40.2l1.95 42.1l1.95 12.4l1.95 30.3l1.95 42.5l1.95 30.3l1.95 17.0l1.95 2.8l1.95 -1.2l1.95 -20.9l1.95 -38.5l1.95 -32.5l1.95 -27.7l1.95 23.0l1.95 17.2l1.95 12.6l1.95 31.9l1.95 23.0l1.95 17.3l1.95 -4.2l1.95 1.7l1.95 -15.4l1.95 -24.5l1.95 -27.1l1.95 -14.0l1.95 2.7l1.95 23.8l1.95 1.9l1.95 30.4l1.95 19.6l1.95 3.9l1.95 0.7l1.95 -4.5l1.95 -15.8l1.95 -26.1l1.95 -22.8l1.95 -19.5l1.95 22.9l1.95 5.1l1.95 19.5l1.95 19.4l1.95 12.5l1.95 9.4l1.95 2.5l1.95 1.3l1.95 -1.5l1.95 -7.1l1.95 -3.6l1.95 0.7l1.95 -0.2l1.95 1.2l1.95 5.3l1.95 1.4l1.95 4.2l1.95 -10.5l1.95 9.3l1.95 3.3l1.95 -4.9l1.95 -2.3l1.95 -5.9l1.95 2.7l1.95 3.0l1.95 -5.1l1.95 -18.5l1.95 26.4l1.95 -0.4l1.95 3.6l1.95 -1.6l1.95 -15.3l1.95 -41.5l1.95 -29.2l1.95 -31.7l1.95 -33.6l1.95 24.8l1.95 12.0l1.95 29.5l1.95 35.4l1.95 31.4l1.95 8.9l1.95 1.9l1.95 -4.7l1.95 -25.8l1.95 -52.3l1.95 -33.5l1.95 -37.9l1.95 38.9l1.95 7.7l1.95 29.1l1.95 20.4l1.95 42.2l1.95 17.6l1.95 0.1l1.95 -12.5l1.95 -32.2l1.95 18.8l1.95 -46.2l1.95 -65.9l1.95 -59.3l1.95 15.8l1.95 -2.6l1.95 46.1" stroke="#9b7fca" stroke-width="1.75" stroke-linejoin="round"/></svg><svg class="b" style="left:1053.30px;top:797.60px;overflow:visible" width="17.80" height="15.60" fill="none" stroke="#3f4450" stroke-width="1.35" stroke-linecap="round" stroke-linejoin="round"><g transform="translate(0.675 0.675) scale(0.8658 0.7917) translate(-2.500 -3.500)" style="vector-effect:non-scaling-stroke"><path vector-effect="non-scaling-stroke" d="M2.5 3.5 H21.5 V21.5 L17.5 17.5 H2.5 Z M8 8.5 H16 M8 12.5 H16"/></g></svg><span id="t163" class="t" style="left:1077.30px;top:799.03px;font-size:14.50px;color:#3f4450;font-weight:400;letter-spacing:-0.017px;">Caption this Query</span><svg class="b" style="left:1203.40px;top:800.80px;overflow:visible" width="9.60" height="9.60" fill="none" stroke="#6b7180" stroke-width="1" stroke-linecap="round" stroke-linejoin="round"><g transform="translate(0.500 0.500) scale(0.4526 0.4526) translate(-2.500 -2.500)" style="vector-effect:non-scaling-stroke"><circle vector-effect="non-scaling-stroke" cx="12" cy="12" r="9.5"/><path vector-effect="non-scaling-stroke" d="M12 11 V17 M12 7 V7.5"/></g></svg><div class="b" style="left:219.40px;top:987.00px;width:751.00px;height:388.60px;background:#fff;border:1px solid #cdd2e5;border-radius:3.5px;box-sizing:border-box;"></div><span id="t164" class="t" style="left:239.10px;top:1011.36px;font-size:12.10px;color:#4a4f5c;font-weight:400;letter-spacing:0.123px;">Nov 2 2022 17:48:41 – Nov 30 2022 16:48:41 UTC-05:00 (Granularity: 2 hr)</span><svg class="b" style="left:1025.00px;top:861.20px;" width="809.00" height="175.00" viewBox="0 0 809 175" fill="none"><rect x="0.6" y="0.6" width="807" height="300" rx="3" stroke="#b9bdc9" stroke-width="1.1" stroke-dasharray="5 4.5"/><path d="M675.4 52.8 C695 38 720 30.5 743.7 30.5 S790 36 807.6 44.2" stroke="#747987" stroke-width="1.5" stroke-dasharray="1.5 2.8"/><path d="M714.7 171.6 C722 159 733 141 752 139 C770 138 790 146 807.6 151.1" stroke="#747987" stroke-width="1.5" stroke-dasharray="1.5 2.8"/></svg><svg class="b" style="left:1674.00px;top:910.00px;" width="26.00" height="26.00" viewBox="0 0 26 26" fill="none"><ellipse cx="7.6" cy="7.2" rx="4.3" ry="3.9" fill="#d9dadf"/><ellipse cx="15.2" cy="18.8" rx="4.3" ry="3.7" fill="#d6d7dc"/><circle cx="5.3" cy="16.6" r="4.3" fill="#eab830"/><path d="M9.6 13.8 L13.4 6.4 L21.6 8 L19.6 15.6 L15 15 L11.4 16.2 Z" fill="#2b3140"/><path d="M13.6 6.4 L19.6 15.2 M11.4 11.2 L14.6 15.4 M17.2 7.2 L20.6 12.2" stroke="#f2b430" stroke-width="1.3"/><ellipse cx="8.6" cy="12.2" rx="1.5" ry="2.6" fill="#f0cdb8" transform="rotate(-15 8.6 12.2)"/><ellipse cx="10.4" cy="18.8" rx="2.8" ry="1.6" fill="#f0cdb8" transform="rotate(20 10.4 18.8)"/></svg><span id="t165" class="t" style="left:1428.40px;top:952.35px;font-size:21.20px;color:#2b303b;font-weight:400;letter-spacing:-0.537px;transform:translateX(-50%);-webkit-text-stroke:0.50px #2b303b;">Add Query</span><span id="t166" class="t" style="left:1428.40px;top:989.53px;font-size:14.50px;color:#3f4450;font-weight:400;letter-spacing:0.035px;transform:translateX(-50%);">[Something here to allow the user to easily add another query to their Board.]</span><div class="b" style="left:1375.00px;top:1025.00px;width:106.70px;height:30.00px;background:#fff;border:1px solid #cdd2e5;border-radius:3px;box-sizing:border-box;"></div></div></div></body></html>
